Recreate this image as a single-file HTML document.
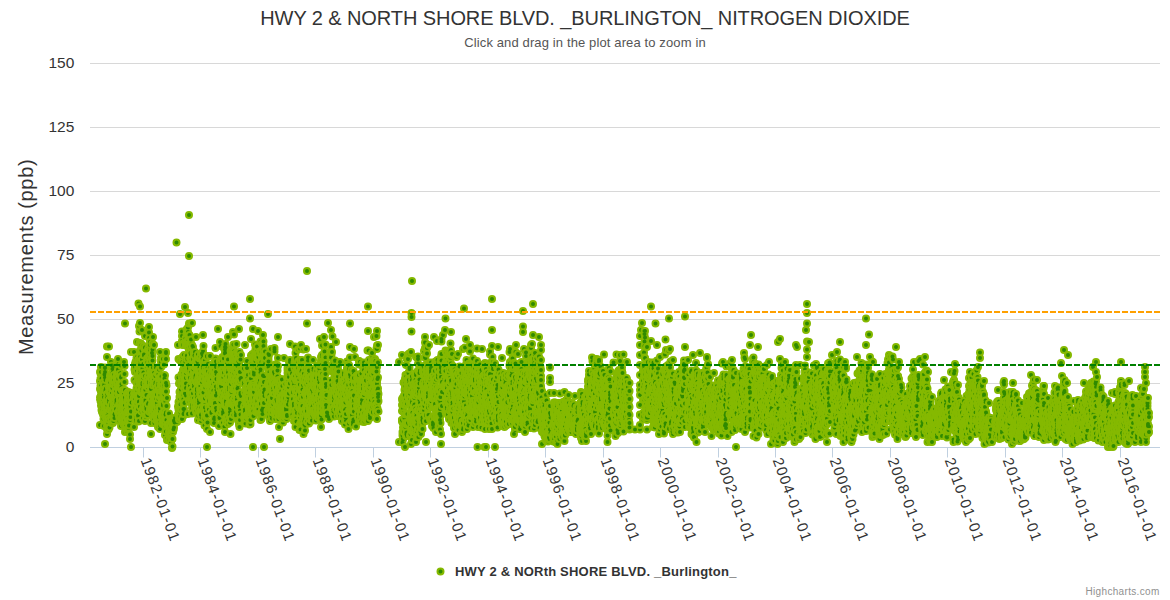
<!DOCTYPE html><html><head><meta charset="utf-8"><style>html,body{margin:0;padding:0;background:#fff;overflow:hidden}svg{display:block;font-family:"Liberation Sans",sans-serif}</style></head><body><svg width="1170" height="600" viewBox="0 0 1170 600"><rect width="1170" height="600" fill="#fff"/><text x="585" y="25" text-anchor="middle" font-size="20" fill="#333" letter-spacing="-0.085">HWY 2 &amp; NORTH SHORE BLVD. _BURLINGTON_ NITROGEN DIOXIDE</text><text x="585" y="47" text-anchor="middle" font-size="13" fill="#555" letter-spacing="0.125">Click and drag in the plot area to zoom in</text><path d="M90 63.5H1160" stroke="#D8D8D8" stroke-width="1"/><text x="74.3" y="68.1" text-anchor="end" font-size="15.5" fill="#333">150</text><path d="M90 127.5H1160" stroke="#D8D8D8" stroke-width="1"/><text x="74.3" y="132.1" text-anchor="end" font-size="15.5" fill="#333">125</text><path d="M90 191.5H1160" stroke="#D8D8D8" stroke-width="1"/><text x="74.3" y="196.1" text-anchor="end" font-size="15.5" fill="#333">100</text><path d="M90 255.5H1160" stroke="#D8D8D8" stroke-width="1"/><text x="74.3" y="260.1" text-anchor="end" font-size="15.5" fill="#333">75</text><path d="M90 319.5H1160" stroke="#D8D8D8" stroke-width="1"/><text x="74.3" y="324.1" text-anchor="end" font-size="15.5" fill="#333">50</text><path d="M90 383.5H1160" stroke="#D8D8D8" stroke-width="1"/><text x="74.3" y="388.1" text-anchor="end" font-size="15.5" fill="#333">25</text><text x="74.3" y="452.1" text-anchor="end" font-size="15.5" fill="#333">0</text><text transform="translate(33,256.9) rotate(-90)" text-anchor="middle" font-size="20" fill="#333" letter-spacing="0.65">Measurements (ppb)</text><path d="M90 447.5H1160" stroke="#C0D0E0" stroke-width="1"/><path d="M143.5 447.5V457.5" stroke="#C0D0E0" stroke-width="1"/><path d="M200.5 447.5V457.5" stroke="#C0D0E0" stroke-width="1"/><path d="M258.5 447.5V457.5" stroke="#C0D0E0" stroke-width="1"/><path d="M315.5 447.5V457.5" stroke="#C0D0E0" stroke-width="1"/><path d="M373.5 447.5V457.5" stroke="#C0D0E0" stroke-width="1"/><path d="M430.5 447.5V457.5" stroke="#C0D0E0" stroke-width="1"/><path d="M488.5 447.5V457.5" stroke="#C0D0E0" stroke-width="1"/><path d="M545.5 447.5V457.5" stroke="#C0D0E0" stroke-width="1"/><path d="M603.5 447.5V457.5" stroke="#C0D0E0" stroke-width="1"/><path d="M660.5 447.5V457.5" stroke="#C0D0E0" stroke-width="1"/><path d="M718.5 447.5V457.5" stroke="#C0D0E0" stroke-width="1"/><path d="M775.5 447.5V457.5" stroke="#C0D0E0" stroke-width="1"/><path d="M832.5 447.5V457.5" stroke="#C0D0E0" stroke-width="1"/><path d="M890.5 447.5V457.5" stroke="#C0D0E0" stroke-width="1"/><path d="M947.5 447.5V457.5" stroke="#C0D0E0" stroke-width="1"/><path d="M1005.5 447.5V457.5" stroke="#C0D0E0" stroke-width="1"/><path d="M1062.5 447.5V457.5" stroke="#C0D0E0" stroke-width="1"/><path d="M1120.5 447.5V457.5" stroke="#C0D0E0" stroke-width="1"/><g transform="scale(0.5)" fill="none" stroke-linecap="round"><path d="M200 795h0m0-51h0m0 106h0m0-52h0m0-20h0m0-16h0m1-18h0m0 3h0m0 10h0m0 45h0m0-30h0m1-6h0" stroke="#85B900" stroke-width="16"/><path d="M200 795h0m0-51h0m0 106h0m0-52h0m0-20h0m0-16h0m1-18h0m0 3h0m0 10h0m0 45h0m0-30h0m1-6h0" stroke="#2F8A00" stroke-width="8"/><path d="M202 744h0m0 26h0m0 41h0m0-77h0m0 60h0m0-4h0m0-6h0m1-7h0m0-20h0m0 63h0m0-11h0m0-11h0" stroke="#85B900" stroke-width="16"/><path d="M202 744h0m0 26h0m0 41h0m0-77h0m0 60h0m0-4h0m0-6h0m1-7h0m0-20h0m0 63h0m0-11h0m0-11h0" stroke="#2F8A00" stroke-width="8"/><path d="M204 824h0m0-12h0m0-12h0m0-19h0m0 11h0m0 10h0m0 5h0m1-2h0m0-20h0m0 5h0m0 32h0m0-2h0" stroke="#85B900" stroke-width="16"/><path d="M204 824h0m0-12h0m0-12h0m0-19h0m0 11h0m0 10h0m0 5h0m1-2h0m0-20h0m0 5h0m0 32h0m0-2h0" stroke="#2F8A00" stroke-width="8"/><path d="M206 802h0m0-37h0m0 23h0m0 41h0m0-49h0m0 23h0m0-22h0m1-17h0m0 25h0m0 49h0m0-62h0m0 19h0" stroke="#85B900" stroke-width="16"/><path d="M206 802h0m0-37h0m0 23h0m0 41h0m0-49h0m0 23h0m0-22h0m1-17h0m0 25h0m0 49h0m0-62h0m0 19h0" stroke="#2F8A00" stroke-width="8"/><path d="M208 811h0m0-4h0m0 16h0m0-52h0m0 81h0m0-68h0m0 4h0m0 6h0m1-26h0m0 26h0m0-52h0m0-3h0" stroke="#85B900" stroke-width="16"/><path d="M208 811h0m0-4h0m0 16h0m0-52h0m0 81h0m0-68h0m0 4h0m0 6h0m1-26h0m0 26h0m0-52h0m0-3h0" stroke="#2F8A00" stroke-width="8"/><path d="M209 749h0m1-5h0m0-8h0m0 152h0m0-153h0m0 79h0m0 15h0m0-1h0m0-73h0m1 22h0m0-20h0m0 3h0" stroke="#85B900" stroke-width="16"/><path d="M209 749h0m1-5h0m0-8h0m0 152h0m0-153h0m0 79h0m0 15h0m0-1h0m0-73h0m1 22h0m0-20h0m0 3h0" stroke="#2F8A00" stroke-width="8"/><path d="M211 782h0m0-2h0m1-3h0m0 31h0m0 6h0m0 10h0m0 13h0m0-12h0m0-10h0m1 3h0m0 6h0m0-15h0" stroke="#85B900" stroke-width="16"/><path d="M211 782h0m0-2h0m1-3h0m0 31h0m0 6h0m0 10h0m0 13h0m0-12h0m0-10h0m1 3h0m0 6h0m0-15h0" stroke="#2F8A00" stroke-width="8"/><path d="M213 811h0m0 27h0m1-50h0m0 22h0m0 18h0m0-32h0m0-82h0m0 154h0m0-175h0m0 133h0m0 26h0m0 6h0" stroke="#85B900" stroke-width="16"/><path d="M213 811h0m0 27h0m1-50h0m0 22h0m0 18h0m0-32h0m0-82h0m0 154h0m0-175h0m0 133h0m0 26h0m0 6h0" stroke="#2F8A00" stroke-width="8"/><path d="M215 860h0m0-14h0m0-29h0m0-6h0m0 20h0m1 5h0m0-20h0m0 37h0m0-11h0m0-9h0m0 15h0m0-25h0" stroke="#85B900" stroke-width="16"/><path d="M215 860h0m0-14h0m0-29h0m0-6h0m0 20h0m1 5h0m0-20h0m0 37h0m0-11h0m0-9h0m0 15h0m0-25h0" stroke="#2F8A00" stroke-width="8"/><path d="M217 836h0m0 10h0m0 6h0m0-9h0m0 16h0m1-18h0m0-22h0m0-35h0m0-9h0m0-82h0m0 107h0m0 5h0" stroke="#85B900" stroke-width="16"/><path d="M217 836h0m0 10h0m0 6h0m0-9h0m0 16h0m1-18h0m0-22h0m0-35h0m0-9h0m0-82h0m0 107h0m0 5h0" stroke="#2F8A00" stroke-width="8"/><path d="M218 762h0m1 17h0m0-19h0m0 23h0m0 57h0m0 15h0m1-15h0m0 0h0m0-70h0m0 8h0m0-14h0m0-11h0" stroke="#85B900" stroke-width="16"/><path d="M218 762h0m1 17h0m0-19h0m0 23h0m0 57h0m0 15h0m1-15h0m0 0h0m0-70h0m0 8h0m0-14h0m0-11h0" stroke="#2F8A00" stroke-width="8"/><path d="M220 764h0m1 19h0m0 6h0m0-2h0m0 28h0m0-37h0m1-45h0m0-9h0m0 31h0m0 81h0m0-112h0m0 95h0" stroke="#85B900" stroke-width="16"/><path d="M220 764h0m1 19h0m0 6h0m0-2h0m0 28h0m0-37h0m1-45h0m0-9h0m0 31h0m0 81h0m0-112h0m0 95h0" stroke="#2F8A00" stroke-width="8"/><path d="M222 794h0m0 17h0m1-3h0m0 14h0m0 0h0m0 17h0m0 7h0m1-37h0m0-49h0m0 17h0m0 10h0m0-10h0" stroke="#85B900" stroke-width="16"/><path d="M222 794h0m0 17h0m1-3h0m0 14h0m0 0h0m0 17h0m0 7h0m1-37h0m0-49h0m0 17h0m0 10h0m0-10h0" stroke="#2F8A00" stroke-width="8"/><path d="M224 754h0m0-23h0m1 25h0m0-18h0m0 8h0m0 13h0m0 17h0m1-17h0m0 36h0m0-59h0m0 6h0m0 104h0" stroke="#85B900" stroke-width="16"/><path d="M224 754h0m0-23h0m1 25h0m0-18h0m0 8h0m0 13h0m0 17h0m1-17h0m0 36h0m0-59h0m0 6h0m0 104h0" stroke="#2F8A00" stroke-width="8"/><path d="M226 768h0m0 53h0m0-27h0m1 7h0m0 9h0m0 21h0m0 11h0m0-8h0m1-25h0m0 22h0m0-79h0m0 1h0" stroke="#85B900" stroke-width="16"/><path d="M226 768h0m0 53h0m0-27h0m1 7h0m0 9h0m0 21h0m0 11h0m0-8h0m1-25h0m0 22h0m0-79h0m0 1h0" stroke="#2F8A00" stroke-width="8"/><path d="M228 750h0m0 2h0m0 8h0m1 76h0m0-7h0m0-34h0m0-31h0m0 40h0m1-19h0m0 39h0m0-53h0m0 13h0" stroke="#85B900" stroke-width="16"/><path d="M228 750h0m0 2h0m0 8h0m1 76h0m0-7h0m0-34h0m0-31h0m0 40h0m1-19h0m0 39h0m0-53h0m0 13h0" stroke="#2F8A00" stroke-width="8"/><path d="M230 810h0m0-14h0m0 20h0m1-31h0m0-11h0m0-7h0m0 17h0m0 28h0m1-25h0m0-33h0m0 22h0m0 33h0" stroke="#85B900" stroke-width="16"/><path d="M230 810h0m0-14h0m0 20h0m1-31h0m0-11h0m0-7h0m0 17h0m0 28h0m1-25h0m0-33h0m0 22h0m0 33h0" stroke="#2F8A00" stroke-width="8"/><path d="M232 783h0m0 35h0m0-29h0m1-33h0m0 5h0m0 45h0m0-2h0m0-4h0m1-1h0m0 3h0m0-24h0m0-32h0" stroke="#85B900" stroke-width="16"/><path d="M232 783h0m0 35h0m0-29h0m1-33h0m0 5h0m0 45h0m0-2h0m0-4h0m1-1h0m0 3h0m0-24h0m0-32h0" stroke="#2F8A00" stroke-width="8"/><path d="M234 765h0m0-12h0m0 5h0m1-14h0m0 10h0m0 15h0m0-6h0m0-8h0m1 5h0m0 3h0m0 62h0m0-54h0" stroke="#85B900" stroke-width="16"/><path d="M234 765h0m0-12h0m0 5h0m1-14h0m0 10h0m0 15h0m0-6h0m0-8h0m1 5h0m0 3h0m0 62h0m0-54h0" stroke="#2F8A00" stroke-width="8"/><path d="M236 718h0m0 59h0m0 10h0m0-48h0m1-11h0m0 30h0m0-13h0m0 12h0m0 2h0m1-11h0m0-5h0m0 7h0" stroke="#85B900" stroke-width="16"/><path d="M236 718h0m0 59h0m0 10h0m0-48h0m1-11h0m0 30h0m0-13h0m0 12h0m0 2h0m1-11h0m0-5h0m0 7h0" stroke="#2F8A00" stroke-width="8"/><path d="M238 809h0m0-25h0m0 49h0m0-65h0m1 7h0m0 47h0m0 20h0m0-26h0m0 1h0m1 2h0m0-22h0m0 3h0" stroke="#85B900" stroke-width="16"/><path d="M238 809h0m0-25h0m0 49h0m0-65h0m1 7h0m0 47h0m0 20h0m0-26h0m0 1h0m1 2h0m0-22h0m0 3h0" stroke="#2F8A00" stroke-width="8"/><path d="M240 798h0m0 10h0m0-34h0m0-27h0m1 24h0m0-2h0m0 0h0m0-22h0m0 51h0m1 39h0m0 0h0m0-16h0" stroke="#85B900" stroke-width="16"/><path d="M240 798h0m0 10h0m0-34h0m0-27h0m1 24h0m0-2h0m0 0h0m0-22h0m0 51h0m1 39h0m0 0h0m0-16h0" stroke="#2F8A00" stroke-width="8"/><path d="M242 834h0m0 18h0m0-39h0m0-82h0m0 24h0m1 22h0m0-9h0m0-16h0m0 27h0m0-5h0m1 27h0m0-24h0" stroke="#85B900" stroke-width="16"/><path d="M242 834h0m0 18h0m0-39h0m0-82h0m0 24h0m1 22h0m0-9h0m0-16h0m0 27h0m0-5h0m1 27h0m0-24h0" stroke="#2F8A00" stroke-width="8"/><path d="M244 829h0m0 13h0m0-9h0m0-17h0m0-5h0m1-29h0m0 44h0m0-22h0m0-4h0m0 43h0m1-17h0m0 3h0" stroke="#85B900" stroke-width="16"/><path d="M244 829h0m0 13h0m0-9h0m0-17h0m0-5h0m1-29h0m0 44h0m0-22h0m0-4h0m0 43h0m1-17h0m0 3h0" stroke="#2F8A00" stroke-width="8"/><path d="M246 815h0m0-8h0m0 6h0m0-1h0m0-32h0m1 32h0m0 18h0m0 19h0m0-39h0m0-5h0m1 16h0m0 21h0" stroke="#85B900" stroke-width="16"/><path d="M246 815h0m0-8h0m0 6h0m0-1h0m0-32h0m1 32h0m0 18h0m0 19h0m0-39h0m0-5h0m1 16h0m0 21h0" stroke="#2F8A00" stroke-width="8"/><path d="M248 809h0m0-8h0m0-77h0m0 63h0m0 50h0m0 2h0m1-23h0m0 1h0m0 29h0m0-114h0m0 16h0m0 16h0" stroke="#85B900" stroke-width="16"/><path d="M248 809h0m0-8h0m0-77h0m0 63h0m0 50h0m0 2h0m1-23h0m0 1h0m0 29h0m0-114h0m0 16h0m0 16h0" stroke="#2F8A00" stroke-width="8"/><path d="M249 818h0m0 0h0m1-17h0m0 10h0m0-10h0m0 26h0m0 37h0m0-217h0m0 133h0m0 15h0m0 31h0m1 14h0" stroke="#85B900" stroke-width="16"/><path d="M249 818h0m0 0h0m1-17h0m0 10h0m0-10h0m0 26h0m0 37h0m0-217h0m0 133h0m0 15h0m0 31h0m1 14h0" stroke="#2F8A00" stroke-width="8"/><path d="M251 820h0m0 20h0m0 10h0m0-10h0m1 3h0m0-5h0m0-1h0m0 0h0m0 11h0m0-23h0m0 30h0m1-15h0" stroke="#85B900" stroke-width="16"/><path d="M251 820h0m0 20h0m0 10h0m0-10h0m1 3h0m0-5h0m0-1h0m0 0h0m0 11h0m0-23h0m0 30h0m1-15h0" stroke="#2F8A00" stroke-width="8"/><path d="M253 855h0m0-3h0m0 4h0m0 2h0m1-8h0m0 12h0m0-5h0m0-22h0m0-8h0m0-40h0m0 16h0m1 43h0" stroke="#85B900" stroke-width="16"/><path d="M253 855h0m0-3h0m0 4h0m0 2h0m1-8h0m0 12h0m0-5h0m0-22h0m0-8h0m0-40h0m0 16h0m1 43h0" stroke="#2F8A00" stroke-width="8"/><path d="M255 858h0m0-36h0m0 13h0m0 8h0m1-31h0m0-28h0m0 9h0m0 35h0m0-6h0m0 21h0m0-49h0m1-8h0" stroke="#85B900" stroke-width="16"/><path d="M255 858h0m0-36h0m0 13h0m0 8h0m1-31h0m0-28h0m0 9h0m0 35h0m0-6h0m0 21h0m0-49h0m1-8h0" stroke="#2F8A00" stroke-width="8"/><path d="M257 787h0m0 5h0m0 16h0m0 16h0m0 16h0m0 16h0m0-51h0m0 13h0m1 8h0m0-6h0m0-27h0m0 15h0" stroke="#85B900" stroke-width="16"/><path d="M257 787h0m0 5h0m0 16h0m0 16h0m0 16h0m0 16h0m0-51h0m0 13h0m1 8h0m0-6h0m0-27h0m0 15h0" stroke="#2F8A00" stroke-width="8"/><path d="M258 822h0m0 29h0m1-66h0m0 40h0m0-27h0m1 10h0m0-7h0m0 68h0m0 9h0m0-38h0m0-40h0m0-6h0" stroke="#85B900" stroke-width="16"/><path d="M258 822h0m0 29h0m1-66h0m0 40h0m0-27h0m1 10h0m0-7h0m0 68h0m0 9h0m0-38h0m0-40h0m0-6h0" stroke="#2F8A00" stroke-width="8"/><path d="M261 834h0m0-17h0m0-5h0m0 0h0m1 10h0m0-36h0m0 8h0m0 1h0m0-91h0m0 190h0m0-94h0m0 1h0" stroke="#85B900" stroke-width="16"/><path d="M261 834h0m0-17h0m0-5h0m0 0h0m1 10h0m0-36h0m0 8h0m0 1h0m0-91h0m0 190h0m0-94h0m0 1h0" stroke="#2F8A00" stroke-width="8"/><path d="M262 823h0m1-18h0m4-9h0m1 7h0m0-99h0m0 150h0m0-67h0m1 5h0m0 21h0m0-53h0m0-21h0m1-8h0" stroke="#85B900" stroke-width="16"/><path d="M262 823h0m1-18h0m4-9h0m1 7h0m0-99h0m0 150h0m0-67h0m1 5h0m0 21h0m0-53h0m0-21h0m1-8h0" stroke="#2F8A00" stroke-width="8"/><path d="M270 734h0m0-7h0m0 78h0m0-8h0m0-7h0m0-46h0m1-20h0m0 7h0m0 71h0m0 14h0m0-13h0m1 5h0" stroke="#85B900" stroke-width="16"/><path d="M270 734h0m0-7h0m0 78h0m0-8h0m0-7h0m0-46h0m1-20h0m0 7h0m0 71h0m0 14h0m0-13h0m1 5h0" stroke="#2F8A00" stroke-width="8"/><path d="M272 790h0m0 42h0m0-4h0m0 12h0m0 2h0m0-17h0m1-48h0m0 29h0m0-40h0m0-44h0m0-6h0m1-2h0" stroke="#85B900" stroke-width="16"/><path d="M272 790h0m0 42h0m0-4h0m0 12h0m0 2h0m0-17h0m1-48h0m0 29h0m0-40h0m0-44h0m0-6h0m1-2h0" stroke="#2F8A00" stroke-width="8"/><path d="M274 742h0m0 22h0m0 2h0m0-82h0m0 141h0m0-32h0m0 30h0m1-6h0m0-15h0m0-20h0m0 43h0m0-37h0" stroke="#85B900" stroke-width="16"/><path d="M274 742h0m0 22h0m0 2h0m0-82h0m0 141h0m0-32h0m0 30h0m1-6h0m0-15h0m0-20h0m0 43h0m0-37h0" stroke="#2F8A00" stroke-width="8"/><path d="M276 723h0m0 4h0m0 64h0m0-58h0m0 22h0m0 63h0m0 13h0m1-1h0m0-223h0m0 236h0m0-9h0m0-17h0" stroke="#85B900" stroke-width="16"/><path d="M276 723h0m0 4h0m0 64h0m0-58h0m0 22h0m0 63h0m0 13h0m1-1h0m0-223h0m0 236h0m0-9h0m0-17h0" stroke="#2F8A00" stroke-width="8"/><path d="M277 719h0m1 36h0m0 48h0m0-27h0m0-12h0m0-112h0m0 190h0m0-50h0m0 13h0m0-28h0m1-32h0m0-9h0" stroke="#85B900" stroke-width="16"/><path d="M277 719h0m1 36h0m0 48h0m0-27h0m0-12h0m0-112h0m0 190h0m0-50h0m0 13h0m0-28h0m1-32h0m0-9h0" stroke="#2F8A00" stroke-width="8"/><path d="M279 663h0m0 23h0m0 72h0m1 55h0m0-112h0m0 13h0m0 5h0m0-73h0m0-33h0m0 91h0m0 62h0m0-38h0" stroke="#85B900" stroke-width="16"/><path d="M279 663h0m0 23h0m0 72h0m1 55h0m0-112h0m0 13h0m0 5h0m0-73h0m0-33h0m0 91h0m0 62h0m0-38h0" stroke="#2F8A00" stroke-width="8"/><path d="M281 742h0m0 5h0m0-44h0m0 20h0m0 4h0m1 36h0m0-27h0m0 43h0m0-8h0m0-9h0m0-3h0m0-72h0" stroke="#85B900" stroke-width="16"/><path d="M281 742h0m0 5h0m0-44h0m0 20h0m0 4h0m1 36h0m0-27h0m0 43h0m0-8h0m0-9h0m0-3h0m0-72h0" stroke="#2F8A00" stroke-width="8"/><path d="M283 781h0m0 42h0m0-38h0m0-95h0m0 11h0m1 62h0m0-103h0m0 125h0m0-51h0m0-15h0m0-15h0m0 33h0" stroke="#85B900" stroke-width="16"/><path d="M283 781h0m0 42h0m0-38h0m0-95h0m0 11h0m1 62h0m0-103h0m0 125h0m0-51h0m0-15h0m0-15h0m0 33h0" stroke="#2F8A00" stroke-width="8"/><path d="M285 766h0m0 3h0m0 14h0m0-46h0m0 41h0m1-23h0m0-6h0m0 55h0m0-3h0m0 15h0m0 21h0m0-31h0" stroke="#85B900" stroke-width="16"/><path d="M285 766h0m0 3h0m0 14h0m0-46h0m0 41h0m1-23h0m0-6h0m0 55h0m0-3h0m0 15h0m0 21h0m0-31h0" stroke="#2F8A00" stroke-width="8"/><path d="M287 808h0m0-80h0m0 92h0m0-75h0m0-53h0m1 4h0m0 91h0m0 9h0m0-87h0m0 40h0m0-21h0m0-17h0" stroke="#85B900" stroke-width="16"/><path d="M287 808h0m0-80h0m0 92h0m0-75h0m0-53h0m1 4h0m0 91h0m0 9h0m0-87h0m0 40h0m0-21h0m0-17h0" stroke="#2F8A00" stroke-width="8"/><path d="M289 817h0m0 2h0m0 2h0m0 2h0m0-36h0m1 17h0m0-26h0m0-106h0m0 23h0m0 147h0m0-61h0m0-29h0" stroke="#85B900" stroke-width="16"/><path d="M289 817h0m0 2h0m0 2h0m0 2h0m0-36h0m1 17h0m0-26h0m0-106h0m0 23h0m0 147h0m0-61h0m0-29h0" stroke="#2F8A00" stroke-width="8"/><path d="M290 806h0m1-39h0m0 13h0m0 8h0m0 12h0m0 17h0m1-47h0m0 14h0m0 48h0m0 2h0m0-257h0m0 240h0" stroke="#85B900" stroke-width="16"/><path d="M290 806h0m1-39h0m0 13h0m0 8h0m0 12h0m0 17h0m1-47h0m0 14h0m0 48h0m0 2h0m0-257h0m0 240h0" stroke="#2F8A00" stroke-width="8"/><path d="M292 812h0m0-1h0m1 7h0m0-3h0m0 1h0m0-5h0m0-21h0m1 31h0m0 8h0m0-57h0m0-47h0m0 38h0" stroke="#85B900" stroke-width="16"/><path d="M292 812h0m0-1h0m1 7h0m0-3h0m0 1h0m0-5h0m0-21h0m1 31h0m0 8h0m0-57h0m0-47h0m0 38h0" stroke="#2F8A00" stroke-width="8"/><path d="M294 717h0m0 9h0m1 3h0m0 26h0m0-20h0m0 95h0m0-1h0m1 0h0m0-74h0m0-56h0m0 26h0m0 50h0" stroke="#85B900" stroke-width="16"/><path d="M294 717h0m0 9h0m1 3h0m0 26h0m0-20h0m0 95h0m0-1h0m1 0h0m0-74h0m0-56h0m0 26h0m0 50h0" stroke="#2F8A00" stroke-width="8"/><path d="M296 769h0m0 39h0m1-112h0m0 55h0m0 55h0m0-92h0m0 28h0m1 8h0m0-21h0m0-53h0m0-11h0m0-11h0" stroke="#85B900" stroke-width="16"/><path d="M296 769h0m0 39h0m1-112h0m0 55h0m0 55h0m0-92h0m0 28h0m1 8h0m0-21h0m0-53h0m0-11h0m0-11h0" stroke="#2F8A00" stroke-width="8"/><path d="M298 702h0m0 64h0m0-2h0m1 59h0m0-53h0m0 54h0m0-109h0m0 17h0m1 34h0m0 29h0m0 23h0m0-62h0" stroke="#85B900" stroke-width="16"/><path d="M298 702h0m0 64h0m0-2h0m1 59h0m0-53h0m0 54h0m0-109h0m0 17h0m1 34h0m0 29h0m0 23h0m0-62h0" stroke="#2F8A00" stroke-width="8"/><path d="M300 690h0m0 12h0m0-18h0m1 26h0m0-12h0m0 10h0m0 15h0m0 21h0m1-22h0m0 73h0m0 73h0m0-117h0" stroke="#85B900" stroke-width="16"/><path d="M300 690h0m0 12h0m0-18h0m1 26h0m0-12h0m0 10h0m0 15h0m0 21h0m1-22h0m0 73h0m0 73h0m0-117h0" stroke="#2F8A00" stroke-width="8"/><path d="M302 748h0m0 98h0m0-68h0m0-6h0m0 50h0m1-24h0m0-33h0m0 46h0m0 2h0m0-54h0m1-19h0m0 21h0" stroke="#85B900" stroke-width="16"/><path d="M302 748h0m0 98h0m0-68h0m0-6h0m0 50h0m1-24h0m0-33h0m0 46h0m0 2h0m0-54h0m1-19h0m0 21h0" stroke="#2F8A00" stroke-width="8"/><path d="M304 816h0m0 9h0m0-16h0m0-103h0m0 40h0m1-34h0m0-25h0m0 12h0m0 22h0m0 18h0m1 95h0m0-22h0" stroke="#85B900" stroke-width="16"/><path d="M304 816h0m0 9h0m0-16h0m0-103h0m0 40h0m1-34h0m0-25h0m0 12h0m0 22h0m0 18h0m1 95h0m0-22h0" stroke="#2F8A00" stroke-width="8"/><path d="M306 761h0m0 51h0m0-138h0m0 130h0m0-33h0m0-36h0m1 12h0m0 69h0m0 6h0m0-28h0m0 25h0m1-8h0" stroke="#85B900" stroke-width="16"/><path d="M306 761h0m0 51h0m0-138h0m0 130h0m0-33h0m0-36h0m1 12h0m0 69h0m0 6h0m0-28h0m0 25h0m1-8h0" stroke="#2F8A00" stroke-width="8"/><path d="M308 746h0m0 42h0m0 18h0m0-116h0m0 147h0m0-16h0m0-61h0m1 37h0m0 49h0m0-30h0m0 23h0m0-11h0" stroke="#85B900" stroke-width="16"/><path d="M308 746h0m0 42h0m0 18h0m0-116h0m0 147h0m0-16h0m0-61h0m1 37h0m0 49h0m0-30h0m0 23h0m0-11h0" stroke="#2F8A00" stroke-width="8"/><path d="M310 831h0m0-14h0m0-47h0m0 46h0m0-26h0m0 7h0m0 17h0m1-62h0m0 41h0m0 15h0m0-17h0m0-26h0" stroke="#85B900" stroke-width="16"/><path d="M310 831h0m0-14h0m0-47h0m0 46h0m0-26h0m0 7h0m0 17h0m1-62h0m0 41h0m0 15h0m0-17h0m0-26h0" stroke="#2F8A00" stroke-width="8"/><path d="M312 789h0m0 18h0m0-13h0m0 8h0m0-3h0m0-64h0m0 66h0m1 30h0m0-56h0m0 66h0m0-14h0m0-26h0" stroke="#85B900" stroke-width="16"/><path d="M312 789h0m0 18h0m0-13h0m0 8h0m0-3h0m0-64h0m0 66h0m1 30h0m0-56h0m0 66h0m0-14h0m0-26h0" stroke="#2F8A00" stroke-width="8"/><path d="M314 815h0m0 25h0m0-34h0m0 31h0m0-7h0m0-41h0m0 23h0m1-22h0m0 18h0m0 18h0m0-14h0m0-65h0" stroke="#85B900" stroke-width="16"/><path d="M314 815h0m0 25h0m0-34h0m0 31h0m0-7h0m0-41h0m0 23h0m1-22h0m0 18h0m0 18h0m0-14h0m0-65h0" stroke="#2F8A00" stroke-width="8"/><path d="M316 831h0m0 18h0m0 5h0m0-10h0m0 0h0m0-1h0m0-72h0m1-5h0m0 13h0m0-31h0m0 20h0m0 30h0" stroke="#85B900" stroke-width="16"/><path d="M316 831h0m0 18h0m0 5h0m0-10h0m0 0h0m0-1h0m0-72h0m1-5h0m0 13h0m0-31h0m0 20h0m0 30h0" stroke="#2F8A00" stroke-width="8"/><path d="M318 781h0m0-42h0m0 75h0m0 20h0m0-9h0m0 6h0m0-74h0m1 22h0m0 6h0m0 59h0m0 0h0m0-15h0" stroke="#85B900" stroke-width="16"/><path d="M318 781h0m0-42h0m0 75h0m0 20h0m0-9h0m0 6h0m0-74h0m1 22h0m0 6h0m0 59h0m0 0h0m0-15h0" stroke="#2F8A00" stroke-width="8"/><path d="M320 847h0m0-2h0m0-28h0m0-24h0m0-89h0m0 154h0m0-7h0m0-27h0m0-32h0m1-7h0m0-27h0m0 12h0" stroke="#85B900" stroke-width="16"/><path d="M320 847h0m0-2h0m0-28h0m0-24h0m0-89h0m0 154h0m0-7h0m0-27h0m0-32h0m1-7h0m0-27h0m0 12h0" stroke="#2F8A00" stroke-width="8"/><path d="M321 783h0m0 7h0m1-55h0m0-16h0m0-3h0m0 36h0m0 18h0m0-46h0m0 31h0m1 47h0m0-11h0m0 3h0" stroke="#85B900" stroke-width="16"/><path d="M321 783h0m0 7h0m1-55h0m0-16h0m0-3h0m0 36h0m0 18h0m0-46h0m0 31h0m1 47h0m0-11h0m0 3h0" stroke="#2F8A00" stroke-width="8"/><path d="M323 831h0m0-78h0m1 17h0m0 37h0m0 40h0m0-16h0m0-67h0m0 19h0m0-24h0m1 5h0m0 37h0m0-31h0" stroke="#85B900" stroke-width="16"/><path d="M323 831h0m0-78h0m1 17h0m0 37h0m0 40h0m0-16h0m0-67h0m0 19h0m0-24h0m1 5h0m0 37h0m0-31h0" stroke="#2F8A00" stroke-width="8"/><path d="M325 826h0m0 9h0m1-1h0m0-9h0m0-31h0m0 14h0m0-90h0m0 93h0m0-28h0m0 0h0m1 66h0m0-20h0" stroke="#85B900" stroke-width="16"/><path d="M325 826h0m0 9h0m1-1h0m0-9h0m0-31h0m0 14h0m0-90h0m0 93h0m0-28h0m0 0h0m1 66h0m0-20h0" stroke="#2F8A00" stroke-width="8"/><path d="M327 842h0m0-14h0m0 3h0m1-2h0m0-60h0m0 12h0m0-12h0m0 20h0m0-60h0m0 31h0m0 37h0m1-24h0" stroke="#85B900" stroke-width="16"/><path d="M327 842h0m0-14h0m0 3h0m1-2h0m0-60h0m0 12h0m0-12h0m0 20h0m0-60h0m0 31h0m0 37h0m1-24h0" stroke="#2F8A00" stroke-width="8"/><path d="M329 750h0m0 39h0m0-32h0m0 65h0m1 29h0m0-26h0m0 26h0m0-57h0m0 76h0m0-31h0m0-88h0m0 82h0" stroke="#85B900" stroke-width="16"/><path d="M329 750h0m0 39h0m0-32h0m0 65h0m1 29h0m0-26h0m0 26h0m0-57h0m0 76h0m0-31h0m0-88h0m0 82h0" stroke="#2F8A00" stroke-width="8"/><path d="M330 844h0m1-15h0m0 9h0m0 14h0m0-49h0m0-21h0m1 43h0m0 27h0m0-18h0m0-5h0m0-125h0m0 2h0" stroke="#85B900" stroke-width="16"/><path d="M330 844h0m1-15h0m0 9h0m0 14h0m0-49h0m0-21h0m1 43h0m0 27h0m0-18h0m0-5h0m0-125h0m0 2h0" stroke="#2F8A00" stroke-width="8"/><path d="M332 766h0m0 97h0m0-80h0m0-65h0m1 53h0m0 41h0m0 28h0m1-44h0m0 53h0m0 31h0m0-2h0m2-38h0" stroke="#85B900" stroke-width="16"/><path d="M332 766h0m0 97h0m0-80h0m0-65h0m1 53h0m0 41h0m0 28h0m1-44h0m0 53h0m0 31h0m0-2h0m2-38h0" stroke="#2F8A00" stroke-width="8"/><path d="M337 848h0m1-21h0m0 23h0m0 1h0m0 12h0m0 1h0m0 16h0m1-18h0m0-15h0m0 16h0m0 4h0m1-33h0" stroke="#85B900" stroke-width="16"/><path d="M337 848h0m1-21h0m0 23h0m0 1h0m0 12h0m0 1h0m0 16h0m1-18h0m0-15h0m0 16h0m0 4h0m1-33h0" stroke="#2F8A00" stroke-width="8"/><path d="M340 845h0m0 4h0m1 18h0m0-15h0m1-15h0m0 28h0m0-6h0m0 8h0m0 17h0m0-7h0m0-6h0m1 9h0" stroke="#85B900" stroke-width="16"/><path d="M340 845h0m0 4h0m1 18h0m0-15h0m1-15h0m0 28h0m0-6h0m0 8h0m0 17h0m0-7h0m0-6h0m1 9h0" stroke="#2F8A00" stroke-width="8"/><path d="M343 859h0m0 8h0m0-23h0m0 23h0m1-18h0m0 7h0m0 5h0m0-21h0m0 56h0m0-58h0m0 11h0m0-5h0" stroke="#85B900" stroke-width="16"/><path d="M343 859h0m0 8h0m0-23h0m0 23h0m1-18h0m0 7h0m0 5h0m0-21h0m0 56h0m0-58h0m0 11h0m0-5h0" stroke="#2F8A00" stroke-width="8"/><path d="M345 841h0m0 22h0m0 15h0m0 15h0m1-42h0m0-1h0m0-13h0m0 27h0m1-13h0m0 8h0m0-1h0m0-11h0" stroke="#85B900" stroke-width="16"/><path d="M345 841h0m0 22h0m0 15h0m0 15h0m1-42h0m0-1h0m0-13h0m0 27h0m1-13h0m0 8h0m0-1h0m0-11h0" stroke="#2F8A00" stroke-width="8"/><path d="M347 859h0m1-4h0m0-13h0m0-1h0m1 1h0m0 3h0m1-9h0m2-1h0m1-350h0m1 359h0m2-154h0m0 123h0" stroke="#85B900" stroke-width="16"/><path d="M347 859h0m1-4h0m0-13h0m0-1h0m1 1h0m0 3h0m1-9h0m2-1h0m1-350h0m1 359h0m2-154h0m0 123h0" stroke="#2F8A00" stroke-width="8"/><path d="M356 829h0m0 0h0m1-10h0m0-64h0m0 49h0m0 0h0m0-86h0m1 86h0m0 20h0m0 10h0m0 5h0m0-16h0" stroke="#85B900" stroke-width="16"/><path d="M356 829h0m0 0h0m1-10h0m0-64h0m0 49h0m0 0h0m0-86h0m1 86h0m0 20h0m0 10h0m0 5h0m0-16h0" stroke="#2F8A00" stroke-width="8"/><path d="M358 813h0m0-46h0m1 42h0m0-25h0m0 47h0m0-37h0m0 17h0m1 16h0m0-9h0m0-27h0m0-70h0m0-93h0" stroke="#85B900" stroke-width="16"/><path d="M358 813h0m0-46h0m1 42h0m0-25h0m0 47h0m0-37h0m0 17h0m1 16h0m0-9h0m0-27h0m0-70h0m0-93h0" stroke="#2F8A00" stroke-width="8"/><path d="M360 797h0m0 21h0m0 17h0m1-26h0m0 23h0m0-7h0m0 0h0m0-5h0m1-32h0m0-22h0m0 42h0m0-26h0" stroke="#85B900" stroke-width="16"/><path d="M360 797h0m0 21h0m0 17h0m1-26h0m0 23h0m0-7h0m0 0h0m0-5h0m1-32h0m0-22h0m0 42h0m0-26h0" stroke="#2F8A00" stroke-width="8"/><path d="M362 779h0m0-1h0m0 12h0m1 29h0m0-46h0m0 12h0m0-36h0m0 3h0m1-31h0m0-49h0m0 10h0m0-19h0" stroke="#85B900" stroke-width="16"/><path d="M362 779h0m0-1h0m0 12h0m1 29h0m0-46h0m0 12h0m0-36h0m0 3h0m1-31h0m0-49h0m0 10h0m0-19h0" stroke="#2F8A00" stroke-width="8"/><path d="M364 838h0m0-78h0m0-71h0m0-1h0m1 36h0m0-10h0m0 81h0m0-23h0m0-84h0m1 77h0m0-25h0m0 93h0" stroke="#85B900" stroke-width="16"/><path d="M364 838h0m0-78h0m0-71h0m0-1h0m1 36h0m0-10h0m0 81h0m0-23h0m0-84h0m1 77h0m0-25h0m0 93h0" stroke="#2F8A00" stroke-width="8"/><path d="M366 789h0m0-42h0m0 2h0m0-59h0m1 57h0m0 60h0m0 21h0m0-10h0m0-20h0m1 20h0m0 8h0m0-23h0" stroke="#85B900" stroke-width="16"/><path d="M366 789h0m0-42h0m0 2h0m0-59h0m1 57h0m0 60h0m0 21h0m0-10h0m0-20h0m1 20h0m0 8h0m0-23h0" stroke="#2F8A00" stroke-width="8"/><path d="M368 760h0m0-50h0m0 25h0m0 0h0m1 44h0m0 27h0m0-78h0m0 31h0m0 12h0m1-31h0m0 9h0m0 56h0" stroke="#85B900" stroke-width="16"/><path d="M368 760h0m0-50h0m0 25h0m0 0h0m1 44h0m0 27h0m0-78h0m0 31h0m0 12h0m1-31h0m0 9h0m0 56h0" stroke="#2F8A00" stroke-width="8"/><path d="M370 787h0m0-173h0m0 155h0m0-29h0m0 18h0m1-34h0m0 35h0m0-69h0m0-13h0m0 41h0m1 73h0m0-47h0" stroke="#85B900" stroke-width="16"/><path d="M370 787h0m0-173h0m0 155h0m0-29h0m0 18h0m1-34h0m0 35h0m0-69h0m0-13h0m0 41h0m1 73h0m0-47h0" stroke="#2F8A00" stroke-width="8"/><path d="M372 745h0m0 31h0m0-30h0m0 10h0m0 11h0m1-78h0m0-30h0m0 25h0m0-16h0m0 20h0m1 25h0m0-27h0" stroke="#85B900" stroke-width="16"/><path d="M372 745h0m0 31h0m0-30h0m0 10h0m0 11h0m1-78h0m0-30h0m0 25h0m0-16h0m0 20h0m1 25h0m0-27h0" stroke="#2F8A00" stroke-width="8"/><path d="M374 668h0m0-3h0m0 75h0m0-80h0m0 51h0m1 6h0m0-27h0m0 29h0m0-1h0m0-36h0m1 10h0m0 18h0" stroke="#85B900" stroke-width="16"/><path d="M374 668h0m0-3h0m0 75h0m0-80h0m0 51h0m1 6h0m0-27h0m0 29h0m0-1h0m0-36h0m1 10h0m0 18h0" stroke="#2F8A00" stroke-width="8"/><path d="M376 739h0m0 1h0m0-114h0m0 202h0m0-97h0m0-76h0m0 9h0m1 33h0m0 41h0m0-43h0m0-13h0m0-13h0" stroke="#85B900" stroke-width="16"/><path d="M376 739h0m0 1h0m0-114h0m0 202h0m0-97h0m0-76h0m0 9h0m1 33h0m0 41h0m0-43h0m0-13h0m0-13h0" stroke="#2F8A00" stroke-width="8"/><path d="M378 647h0m0-217h0m0 82h0m0 176h0m0 56h0m0-7h0m0 17h0m0 48h0m0-72h0m1 3h0m0-2h0m0 49h0" stroke="#85B900" stroke-width="16"/><path d="M378 647h0m0-217h0m0 82h0m0 176h0m0 56h0m0-7h0m0 17h0m0 48h0m0-72h0m1 3h0m0-2h0m0 49h0" stroke="#2F8A00" stroke-width="8"/><path d="M379 701h0m0-31h0m1 30h0m0-11h0m0 28h0m0 39h0m0 16h0m0 25h0m0-10h0m1-15h0m0-79h0m0 60h0" stroke="#85B900" stroke-width="16"/><path d="M379 701h0m0-31h0m1 30h0m0-11h0m0 28h0m0 39h0m0 16h0m0 25h0m0-10h0m1-15h0m0-79h0m0 60h0" stroke="#2F8A00" stroke-width="8"/><path d="M381 693h0m0 13h0m1 74h0m0-85h0m0 50h0m0-35h0m0 9h0m0-40h0m0-32h0m1 41h0m0 107h0m0 10h0" stroke="#85B900" stroke-width="16"/><path d="M381 693h0m0 13h0m1 74h0m0-85h0m0 50h0m0-35h0m0 9h0m0-40h0m0-32h0m1 41h0m0 107h0m0 10h0" stroke="#2F8A00" stroke-width="8"/><path d="M383 789h0m0-9h0m1 36h0m0 11h0m0-31h0m0-61h0m0-89h0m0 164h0m0-31h0m0 15h0m1 20h0m0-49h0" stroke="#85B900" stroke-width="16"/><path d="M383 789h0m0-9h0m1 36h0m0 11h0m0-31h0m0-61h0m0-89h0m0 164h0m0-31h0m0 15h0m1 20h0m0-49h0" stroke="#2F8A00" stroke-width="8"/><path d="M385 735h0m0-43h0m0 67h0m1-10h0m0 38h0m0-71h0m0 45h0m0-40h0m0 4h0m0-31h0m1 11h0m0 45h0" stroke="#85B900" stroke-width="16"/><path d="M385 735h0m0-43h0m0 67h0m1-10h0m0 38h0m0-71h0m0 45h0m0-40h0m0 4h0m0-31h0m1 11h0m0 45h0" stroke="#2F8A00" stroke-width="8"/><path d="M387 739h0m0-6h0m0 30h0m1-16h0m0 25h0m0-3h0m0 28h0m0-31h0m0 3h0m0 4h0m1 42h0m0-5h0" stroke="#85B900" stroke-width="16"/><path d="M387 739h0m0-6h0m0 30h0m1-16h0m0 25h0m0-3h0m0 28h0m0-31h0m0 3h0m0 4h0m1 42h0m0-5h0" stroke="#2F8A00" stroke-width="8"/><path d="M389 750h0m0-39h0m0 16h0m1-2h0m0-14h0m0 1h0m0 48h0m0-56h0m0 27h0m0 3h0m1 69h0m0-79h0" stroke="#85B900" stroke-width="16"/><path d="M389 750h0m0-39h0m0 16h0m1-2h0m0-14h0m0 1h0m0 48h0m0-56h0m0 27h0m0 3h0m1 69h0m0-79h0" stroke="#2F8A00" stroke-width="8"/><path d="M391 756h0m0-4h0m0 10h0m1 20h0m0 42h0m0-5h0m0-3h0m0-142h0m0 75h0m0 33h0m0-56h0m1 10h0" stroke="#85B900" stroke-width="16"/><path d="M391 756h0m0-4h0m0 10h0m1 20h0m0 42h0m0-5h0m0-3h0m0-142h0m0 75h0m0 33h0m0-56h0m1 10h0" stroke="#2F8A00" stroke-width="8"/><path d="M393 765h0m0 48h0m0 8h0m0-9h0m1 6h0m0-22h0m0-8h0m0-10h0m0 25h0m0-22h0m0-45h0m1-23h0" stroke="#85B900" stroke-width="16"/><path d="M393 765h0m0 48h0m0 8h0m0-9h0m1 6h0m0-22h0m0-8h0m0-10h0m0 25h0m0-22h0m0-45h0m1-23h0" stroke="#2F8A00" stroke-width="8"/><path d="M395 814h0m0-91h0m0 13h0m0 4h0m1 3h0m0-24h0m0 38h0m0 9h0m0 74h0m0-111h0m0 1h0m0-21h0" stroke="#85B900" stroke-width="16"/><path d="M395 814h0m0-91h0m0 13h0m0 4h0m1 3h0m0-24h0m0 38h0m0 9h0m0 74h0m0-111h0m0 1h0m0-21h0" stroke="#2F8A00" stroke-width="8"/><path d="M397 739h0m0 80h0m0 12h0m0 1h0m0-14h0m1-15h0m0 4h0m0 21h0m0-12h0m0-16h0m0-62h0m0 13h0" stroke="#85B900" stroke-width="16"/><path d="M397 739h0m0 80h0m0 12h0m0 1h0m0-14h0m1-15h0m0 4h0m0 21h0m0-12h0m0-16h0m0-62h0m0 13h0" stroke="#2F8A00" stroke-width="8"/><path d="M399 765h0m0-26h0m0-22h0m0 18h0m0 27h0m1-26h0m0 44h0m0-18h0m0 16h0m0 44h0m0-34h0m0-9h0" stroke="#85B900" stroke-width="16"/><path d="M399 765h0m0-26h0m0-22h0m0 18h0m0 27h0m1-26h0m0 44h0m0-18h0m0 16h0m0 44h0m0-34h0m0-9h0" stroke="#2F8A00" stroke-width="8"/><path d="M401 762h0m0-12h0m0 22h0m0-58h0m0 29h0m1-34h0m0 1h0m0 47h0m0-50h0m0 135h0m0-66h0m0 50h0" stroke="#85B900" stroke-width="16"/><path d="M401 762h0m0-12h0m0 22h0m0-58h0m0 29h0m1-34h0m0 1h0m0 47h0m0-50h0m0 135h0m0-66h0m0 50h0" stroke="#2F8A00" stroke-width="8"/><path d="M402 830h0m1-2h0m0-13h0m0-23h0m0 43h0m0-46h0m1-9h0m0 17h0m0-33h0m0-45h0m0 28h0m0 10h0" stroke="#85B900" stroke-width="16"/><path d="M402 830h0m1-2h0m0-13h0m0-23h0m0 43h0m0-46h0m1-9h0m0 17h0m0-33h0m0-45h0m0 28h0m0 10h0" stroke="#2F8A00" stroke-width="8"/><path d="M404 707h0m1 3h0m0-2h0m0 9h0m0 38h0m0 41h0m1-64h0m0 12h0m0-15h0m0-27h0m0-32h0m0 70h0" stroke="#85B900" stroke-width="16"/><path d="M404 707h0m1 3h0m0-2h0m0 9h0m0 38h0m0 41h0m1-64h0m0 12h0m0-15h0m0-27h0m0-32h0m0 70h0" stroke="#2F8A00" stroke-width="8"/><path d="M406 733h0m0 4h0m1-45h0m0 38h0m0 17h0m0 38h0m0-27h0m1 63h0m0-6h0m0-34h0m0 15h0m0 15h0" stroke="#85B900" stroke-width="16"/><path d="M406 733h0m0 4h0m1-45h0m0 38h0m0 17h0m0 38h0m0-27h0m1 63h0m0-6h0m0-34h0m0 15h0m0 15h0" stroke="#2F8A00" stroke-width="8"/><path d="M408 774h0m0 42h0m1 2h0m0 8h0m0 9h0m0 16h0m0-13h0m1-28h0m0 4h0m0-17h0m0-76h0m0 89h0" stroke="#85B900" stroke-width="16"/><path d="M408 774h0m0 42h0m1 2h0m0 8h0m0 9h0m0 16h0m0-13h0m1-28h0m0 4h0m0-17h0m0-76h0m0 89h0" stroke="#2F8A00" stroke-width="8"/><path d="M410 815h0m0-73h0m1-5h0m0 25h0m0-4h0m0-4h0m0 22h0m1 40h0m0 17h0m0-9h0m0-1h0m0-71h0" stroke="#85B900" stroke-width="16"/><path d="M410 815h0m0-73h0m1-5h0m0 25h0m0-4h0m0-4h0m0 22h0m1 40h0m0 17h0m0-9h0m0-1h0m0-71h0" stroke="#2F8A00" stroke-width="8"/><path d="M412 729h0m0 15h0m1-1h0m0 20h0m0-17h0m0-3h0m0 11h0m1-41h0m0-1h0m0 38h0m0 14h0m0 94h0" stroke="#85B900" stroke-width="16"/><path d="M412 729h0m0 15h0m1-1h0m0 20h0m0-17h0m0-3h0m0 11h0m1-41h0m0-1h0m0 38h0m0 14h0m0 94h0" stroke="#2F8A00" stroke-width="8"/><path d="M414 894h0m0-150h0m0 22h0m0 65h0m1 14h0m0-53h0m0-22h0m0-34h0m0 4h0m1-12h0m0 6h0m0 23h0" stroke="#85B900" stroke-width="16"/><path d="M414 894h0m0-150h0m0 22h0m0 65h0m1 14h0m0-53h0m0-22h0m0-34h0m0 4h0m1-12h0m0 6h0m0 23h0" stroke="#2F8A00" stroke-width="8"/><path d="M416 761h0m0 2h0m0-20h0m0 38h0m1-5h0m0-27h0m0 14h0m0 50h0m0-50h0m1 26h0m0-32h0m0 41h0" stroke="#85B900" stroke-width="16"/><path d="M416 761h0m0 2h0m0-20h0m0 38h0m1-5h0m0-27h0m0 14h0m0 50h0m0-50h0m1 26h0m0-32h0m0 41h0" stroke="#2F8A00" stroke-width="8"/><path d="M418 819h0m0-17h0m0-32h0m0-18h0m1 0h0m0 33h0m0 16h0m0-1h0m0-17h0m1 3h0m0 23h0m0-56h0" stroke="#85B900" stroke-width="16"/><path d="M418 819h0m0-17h0m0-32h0m0-18h0m1 0h0m0 33h0m0 16h0m0-1h0m0-17h0m1 3h0m0 23h0m0-56h0" stroke="#2F8A00" stroke-width="8"/><path d="M420 759h0m0-47h0m0 152h0m0-94h0m0-12h0m0 2h0m1 6h0m0-11h0m0-9h0m0-12h0m0 1h0m1 19h0" stroke="#85B900" stroke-width="16"/><path d="M420 759h0m0-47h0m0 152h0m0-94h0m0-12h0m0 2h0m1 6h0m0-11h0m0-9h0m0-12h0m0 1h0m1 19h0" stroke="#2F8A00" stroke-width="8"/><path d="M422 786h0m0-2h0m0-8h0m0-17h0m0 14h0m0-6h0m1 44h0m0-9h0m0 24h0m0-2h0m0-15h0m1-2h0" stroke="#85B900" stroke-width="16"/><path d="M422 786h0m0-2h0m0-8h0m0-17h0m0 14h0m0-6h0m1 44h0m0-9h0m0 24h0m0-2h0m0-15h0m1-2h0" stroke="#2F8A00" stroke-width="8"/><path d="M424 770h0m0 28h0m0-13h0m0-26h0m0 10h0m0 36h0m1-10h0m0-64h0m0 6h0m0 10h0m0 25h0m1-23h0" stroke="#85B900" stroke-width="16"/><path d="M424 770h0m0 28h0m0-13h0m0-26h0m0 10h0m0 36h0m1-10h0m0-64h0m0 6h0m0 10h0m0 25h0m1-23h0" stroke="#2F8A00" stroke-width="8"/><path d="M426 767h0m0 29h0m0 9h0m0-65h0m0-3h0m0-3h0m1 1h0m0 7h0m0 50h0m0-11h0m0-39h0m1-16h0" stroke="#85B900" stroke-width="16"/><path d="M426 767h0m0 29h0m0 9h0m0-65h0m0-3h0m0-3h0m1 1h0m0 7h0m0 50h0m0-11h0m0-39h0m1-16h0" stroke="#2F8A00" stroke-width="8"/><path d="M428 753h0m0-19h0m0 6h0m0 63h0m0 35h0m0 8h0m1-54h0m0 46h0m0-20h0m0 17h0m0-18h0m1 19h0" stroke="#85B900" stroke-width="16"/><path d="M428 753h0m0-19h0m0 6h0m0 63h0m0 35h0m0 8h0m1-54h0m0 46h0m0-20h0m0 17h0m0-18h0m1 19h0" stroke="#2F8A00" stroke-width="8"/><path d="M430 820h0m0-12h0m0-17h0m0-39h0m0 12h0m0 42h0m1-56h0m0 16h0m0-33h0m0-16h0m0-21h0m1 90h0" stroke="#85B900" stroke-width="16"/><path d="M430 820h0m0-12h0m0-17h0m0-39h0m0 12h0m0 42h0m1-56h0m0 16h0m0-33h0m0-16h0m0-21h0m1 90h0" stroke="#2F8A00" stroke-width="8"/><path d="M432 791h0m0-18h0m0 43h0m0-93h0m0 21h0m0-10h0m1 46h0m0-54h0m0 22h0m0 10h0m0 64h0m1-37h0" stroke="#85B900" stroke-width="16"/><path d="M432 791h0m0-18h0m0 43h0m0-93h0m0 21h0m0-10h0m1 46h0m0-54h0m0 22h0m0 10h0m0 64h0m1-37h0" stroke="#2F8A00" stroke-width="8"/><path d="M436 658h0m2 194h0m0-23h0m1 2h0m0 5h0m0-66h0m0 3h0m0 4h0m1-4h0m0 28h0m0-49h0m0-31h0" stroke="#85B900" stroke-width="16"/><path d="M436 658h0m2 194h0m0-23h0m1 2h0m0 5h0m0-66h0m0 3h0m0 4h0m1-4h0m0 28h0m0-49h0m0-31h0" stroke="#2F8A00" stroke-width="8"/><path d="M440 684h0m0 39h0m0 36h0m0-23h0m1-44h0m0 65h0m0 60h0m0 8h0m0-22h0m1-17h0m0-50h0m0-14h0" stroke="#85B900" stroke-width="16"/><path d="M440 684h0m0 39h0m0 36h0m0-23h0m1-44h0m0 65h0m0 60h0m0 8h0m0-22h0m1-17h0m0-50h0m0-14h0" stroke="#2F8A00" stroke-width="8"/><path d="M442 772h0m0-14h0m0 58h0m0-20h0m1-79h0m0 23h0m0 79h0m0-2h0m0-42h0m1-26h0m0 39h0m0-36h0" stroke="#85B900" stroke-width="16"/><path d="M442 772h0m0-14h0m0 58h0m0-20h0m1-79h0m0 23h0m0 79h0m0-2h0m0-42h0m1-26h0m0 39h0m0-36h0" stroke="#2F8A00" stroke-width="8"/><path d="M444 722h0m0 25h0m0 16h0m0-22h0m1-17h0m0 33h0m0-43h0m0 3h0m0 4h0m1 94h0m0-57h0m0 39h0" stroke="#85B900" stroke-width="16"/><path d="M444 722h0m0 25h0m0 16h0m0-22h0m1-17h0m0 33h0m0-43h0m0 3h0m0 4h0m1 94h0m0-57h0m0 39h0" stroke="#2F8A00" stroke-width="8"/><path d="M446 783h0m0 45h0m0 18h0m0-22h0m1-7h0m0-53h0m0-9h0m0 45h0m0-61h0m1-11h0m0 20h0m0 0h0" stroke="#85B900" stroke-width="16"/><path d="M446 783h0m0 45h0m0 18h0m0-22h0m1-7h0m0-53h0m0-9h0m0 45h0m0-61h0m1-11h0m0 20h0m0 0h0" stroke="#2F8A00" stroke-width="8"/><path d="M448 745h0m0-48h0m0 20h0m0 14h0m1 16h0m0 17h0m0 45h0m0 44h0m0-56h0m1-49h0m0 37h0m0-72h0" stroke="#85B900" stroke-width="16"/><path d="M448 745h0m0-48h0m0 20h0m0 14h0m1 16h0m0 17h0m0 45h0m0 44h0m0-56h0m1-49h0m0 37h0m0-72h0" stroke="#2F8A00" stroke-width="8"/><path d="M450 705h0m0 159h0m0-157h0m0-8h0m0-5h0m1-6h0m0 7h0m0 35h0m0 81h0m0-82h0m1 36h0m0 28h0" stroke="#85B900" stroke-width="16"/><path d="M450 705h0m0 159h0m0-157h0m0-8h0m0-5h0m1-6h0m0 7h0m0 35h0m0 81h0m0-82h0m1 36h0m0 28h0" stroke="#2F8A00" stroke-width="8"/><path d="M452 804h0m0 39h0m0-8h0m0 9h0m0-42h0m1-65h0m0 74h0m0-2h0m0-68h0m0 11h0m1 46h0m0-44h0" stroke="#85B900" stroke-width="16"/><path d="M452 804h0m0 39h0m0-8h0m0 9h0m0-42h0m1-65h0m0 74h0m0-2h0m0-68h0m0 11h0m1 46h0m0-44h0" stroke="#2F8A00" stroke-width="8"/><path d="M454 780h0m0-55h0m0 42h0m0 16h0m0-10h0m1-12h0m0-1h0m0 58h0m0 16h0m0-98h0m1-20h0m0 12h0" stroke="#85B900" stroke-width="16"/><path d="M454 780h0m0-55h0m0 42h0m0 16h0m0-10h0m1-12h0m0-1h0m0 58h0m0 16h0m0-98h0m1-20h0m0 12h0" stroke="#2F8A00" stroke-width="8"/><path d="M456 745h0m0-26h0m0-45h0m0 174h0m0-76h0m0 70h0m0-49h0m1-53h0m0 19h0m0 54h0m0 13h0m0-12h0" stroke="#85B900" stroke-width="16"/><path d="M456 745h0m0-26h0m0-45h0m0 174h0m0-76h0m0 70h0m0-49h0m1-53h0m0 19h0m0 54h0m0 13h0m0-12h0" stroke="#2F8A00" stroke-width="8"/><path d="M458 820h0m0-13h0m0-12h0m0-18h0m0-23h0m0 28h0m0-8h0m1 17h0m0-25h0m0 67h0m0-12h0m0-13h0" stroke="#85B900" stroke-width="16"/><path d="M458 820h0m0-13h0m0-12h0m0-18h0m0-23h0m0 28h0m0-8h0m1 17h0m0-25h0m0 67h0m0-12h0m0-13h0" stroke="#2F8A00" stroke-width="8"/><path d="M460 845h0m0-14h0m0-7h0m0-7h0m0-86h0m0 65h0m0-66h0m1 76h0m0 20h0m0-30h0m0-59h0m0 51h0" stroke="#85B900" stroke-width="16"/><path d="M460 845h0m0-14h0m0-7h0m0-7h0m0-86h0m0 65h0m0-66h0m1 76h0m0 20h0m0-30h0m0-59h0m0 51h0" stroke="#2F8A00" stroke-width="8"/><path d="M461 868h0m1-100h0m0 70h0m0-35h0m0-1h0m0-9h0m0-58h0m0-30h0m1 49h0m0 30h0m0-7h0m0-30h0" stroke="#85B900" stroke-width="16"/><path d="M461 868h0m1-100h0m0 70h0m0-35h0m0-1h0m0-9h0m0-58h0m0-30h0m1 49h0m0 30h0m0-7h0m0-30h0" stroke="#2F8A00" stroke-width="8"/><path d="M463 796h0m1-52h0m0 57h0m0 7h0m0-60h0m0-12h0m0 4h0m0-9h0m1 30h0m0-35h0m0-13h0m0-10h0" stroke="#85B900" stroke-width="16"/><path d="M463 796h0m1-52h0m0 57h0m0 7h0m0-60h0m0-12h0m0 4h0m0-9h0m1 30h0m0-35h0m0-13h0m0-10h0" stroke="#2F8A00" stroke-width="8"/><path d="M465 702h0m1 36h0m0 41h0m0-85h0m0 30h0m0-60h0m0 40h0m0 15h0m0 34h0m1 77h0m0-30h0m0 9h0" stroke="#85B900" stroke-width="16"/><path d="M465 702h0m1 36h0m0 41h0m0-85h0m0 30h0m0-60h0m0 40h0m0 15h0m0 34h0m1 77h0m0-30h0m0 9h0" stroke="#2F8A00" stroke-width="8"/><path d="M467 756h0m0-67h0m1-20h0m0 50h0m0-16h0m0 7h0m0-97h0m0 164h0m0 34h0m0-46h0m1-24h0m0-33h0" stroke="#85B900" stroke-width="16"/><path d="M467 756h0m0-67h0m1-20h0m0 50h0m0-16h0m0 7h0m0-97h0m0 164h0m0 34h0m0-46h0m1-24h0m0-33h0" stroke="#2F8A00" stroke-width="8"/><path d="M469 796h0m0-63h0m0 14h0m1 12h0m0 1h0m0 54h0m0-90h0m0-16h0m0 29h0m0 4h0m1 57h0m0-82h0" stroke="#85B900" stroke-width="16"/><path d="M469 796h0m0-63h0m0 14h0m1 12h0m0 1h0m0 54h0m0-90h0m0-16h0m0 29h0m0 4h0m1 57h0m0-82h0" stroke="#2F8A00" stroke-width="8"/><path d="M471 777h0m0-48h0m0 2h0m1 100h0m0-2h0m0-87h0m0 50h0m0-33h0m0 56h0m0 9h0m1-11h0m0-47h0" stroke="#85B900" stroke-width="16"/><path d="M471 777h0m0-48h0m0 2h0m1 100h0m0-2h0m0-87h0m0 50h0m0-33h0m0 56h0m0 9h0m1-11h0m0-47h0" stroke="#2F8A00" stroke-width="8"/><path d="M473 767h0m0-79h0m0 26h0m1 85h0m0-36h0m0-43h0m0 27h0m0 45h0m0-8h0m0-79h0m1 6h0m0 23h0" stroke="#85B900" stroke-width="16"/><path d="M473 767h0m0-79h0m0 26h0m1 85h0m0-36h0m0-43h0m0 27h0m0 45h0m0-8h0m0-79h0m1 6h0m0 23h0" stroke="#2F8A00" stroke-width="8"/><path d="M475 777h0m0-70h0m0 25h0m1 76h0m0 33h0m0-71h0m0-52h0m0 11h0m0-9h0m0 3h0m1 26h0m0 37h0" stroke="#85B900" stroke-width="16"/><path d="M475 777h0m0-70h0m0 25h0m1 76h0m0 33h0m0-71h0m0-52h0m0 11h0m0-9h0m0 3h0m1 26h0m0 37h0" stroke="#2F8A00" stroke-width="8"/><path d="M477 764h0m0-41h0m0-17h0m1 5h0m0-1h0m0 16h0m0 123h0m0-191h0m0 188h0m0-26h0m0-5h0m1-74h0" stroke="#85B900" stroke-width="16"/><path d="M477 764h0m0-41h0m0-17h0m1 5h0m0-1h0m0 16h0m0 123h0m0-191h0m0 188h0m0-26h0m0-5h0m1-74h0" stroke="#2F8A00" stroke-width="8"/><path d="M479 704h0m0 52h0m0 98h0m0-42h0m0-49h0m1 47h0m0-4h0m0-13h0m0 47h0m0-19h0m0-77h0m0 15h0" stroke="#85B900" stroke-width="16"/><path d="M479 704h0m0 52h0m0 98h0m0-42h0m0-49h0m1 47h0m0-4h0m0-13h0m0 47h0m0-19h0m0-77h0m0 15h0" stroke="#2F8A00" stroke-width="8"/><path d="M481 757h0m0 72h0m0-110h0m0 67h0m0 3h0m1-79h0m0 50h0m0-4h0m0 36h0m0-1h0m0 0h0m6-54h0" stroke="#85B900" stroke-width="16"/><path d="M481 757h0m0 72h0m0-110h0m0 67h0m0 3h0m1-79h0m0 50h0m0-4h0m0 36h0m0-1h0m0 0h0m6-54h0" stroke="#2F8A00" stroke-width="8"/><path d="M488 765h0m0 3h0m0 45h0m0 22h0m1 8h0m0-29h0m0-29h0m0 41h0m0-15h0m1-31h0m0-15h0m0 34h0" stroke="#85B900" stroke-width="16"/><path d="M488 765h0m0 3h0m0 45h0m0 22h0m1 8h0m0-29h0m0-29h0m0 41h0m0-15h0m1-31h0m0-15h0m0 34h0" stroke="#2F8A00" stroke-width="8"/><path d="M490 819h0m0-129h0m0 138h0m0-5h0m0 3h0m1 7h0m0 6h0m0 8h0m0-12h0m0-13h0m1-7h0m0 7h0" stroke="#85B900" stroke-width="16"/><path d="M490 819h0m0-129h0m0 138h0m0-5h0m0 3h0m1 7h0m0 6h0m0 8h0m0-12h0m0-13h0m1-7h0m0 7h0" stroke="#2F8A00" stroke-width="8"/><path d="M492 795h0m0 42h0m0-41h0m0 9h0m0-25h0m1-19h0m0 12h0m0 58h0m0-47h0m0-34h0m1-17h0m0-11h0" stroke="#85B900" stroke-width="16"/><path d="M492 795h0m0 42h0m0-41h0m0 9h0m0-25h0m1-19h0m0 12h0m0 58h0m0-47h0m0-34h0m1-17h0m0-11h0" stroke="#2F8A00" stroke-width="8"/><path d="M494 799h0m0-63h0m0 22h0m0 26h0m0 19h0m1 30h0m0-3h0m0-34h0m0-16h0m0 20h0m1-33h0m0-17h0" stroke="#85B900" stroke-width="16"/><path d="M494 799h0m0-63h0m0 22h0m0 26h0m0 19h0m1 30h0m0-3h0m0-34h0m0-16h0m0 20h0m1-33h0m0-17h0" stroke="#2F8A00" stroke-width="8"/><path d="M496 772h0m0-9h0m0 68h0m0-27h0m0 8h0m1-50h0m0 7h0m0 19h0m0-17h0m0 16h0m1-7h0m0 40h0" stroke="#85B900" stroke-width="16"/><path d="M496 772h0m0-9h0m0 68h0m0-27h0m0 8h0m1-50h0m0 7h0m0 19h0m0-17h0m0 16h0m1-7h0m0 40h0" stroke="#2F8A00" stroke-width="8"/><path d="M498 767h0m0 15h0m0 37h0m0-22h0m0 18h0m1-5h0m0 15h0m0 24h0m0-10h0m0-7h0m1-23h0m0-35h0" stroke="#85B900" stroke-width="16"/><path d="M498 767h0m0 15h0m0 37h0m0-22h0m0 18h0m1-5h0m0 15h0m0 24h0m0-10h0m0-7h0m1-23h0m0-35h0" stroke="#2F8A00" stroke-width="8"/><path d="M500 834h0m0 9h0m0-245h0m0 39h0m0 198h0m0-38h0m0 48h0m1 2h0m0-11h0m0-21h0m0 0h0m0 33h0" stroke="#85B900" stroke-width="16"/><path d="M500 834h0m0 9h0m0-245h0m0 39h0m0 198h0m0-38h0m0 48h0m1 2h0m0-11h0m0-21h0m0 0h0m0 33h0" stroke="#2F8A00" stroke-width="8"/><path d="M501 840h0m1-14h0m0-41h0m0-10h0m0-64h0m0-33h0m0 79h0m0 17h0m0 45h0m1-3h0m0 0h0m0-9h0" stroke="#85B900" stroke-width="16"/><path d="M501 840h0m1-14h0m0-41h0m0-10h0m0-64h0m0-33h0m0 79h0m0 17h0m0 45h0m1-3h0m0 0h0m0-9h0" stroke="#2F8A00" stroke-width="8"/><path d="M503 728h0m0 19h0m1 25h0m0 44h0m0 5h0m0-51h0m0-1h0m0 16h0m0 38h0m1-37h0m0-78h0m0 0h0" stroke="#85B900" stroke-width="16"/><path d="M503 728h0m0 19h0m1 25h0m0 44h0m0 5h0m0-51h0m0-1h0m0 16h0m0 38h0m1-37h0m0-78h0m0 0h0" stroke="#2F8A00" stroke-width="8"/><path d="M505 714h0m0 83h0m1 13h0m0-79h0m0 163h0m0-110h0m0 45h0m0-171h0m0 168h0m0-59h0m0 57h0m1 2h0" stroke="#85B900" stroke-width="16"/><path d="M505 714h0m0 83h0m1 13h0m0-79h0m0 163h0m0-110h0m0 45h0m0-171h0m0 168h0m0-59h0m0 57h0m1 2h0" stroke="#2F8A00" stroke-width="8"/><path d="M507 771h0m0 61h0m0-10h0m0-106h0m1 30h0m0 3h0m0 35h0m0 12h0m0-52h0m0 30h0m0 30h0m1-19h0" stroke="#85B900" stroke-width="16"/><path d="M507 771h0m0 61h0m0-10h0m0-106h0m1 30h0m0 3h0m0 35h0m0 12h0m0-52h0m0 30h0m0 30h0m1-19h0" stroke="#2F8A00" stroke-width="8"/><path d="M509 774h0m0-53h0m0 9h0m0-9h0m1 13h0m0-7h0m0-38h0m0 38h0m0-12h0m0 7h0m0-18h0m1 18h0" stroke="#85B900" stroke-width="16"/><path d="M509 774h0m0-53h0m0 9h0m0-9h0m1 13h0m0-7h0m0-38h0m0 38h0m0-12h0m0 7h0m0-18h0m1 18h0" stroke="#2F8A00" stroke-width="8"/><path d="M511 722h0m0 88h0m0-93h0m0-19h0m1 19h0m0-19h0m0 10h0m0 116h0m0-8h0m0-14h0m0 8h0m1 4h0" stroke="#85B900" stroke-width="16"/><path d="M511 722h0m0 88h0m0-93h0m0-19h0m1 19h0m0-19h0m0 10h0m0 116h0m0-8h0m0-14h0m0 8h0m1 4h0" stroke="#2F8A00" stroke-width="8"/><path d="M513 812h0m0-14h0m0-23h0m0 42h0m1 6h0m0-16h0m0-9h0m0-62h0m0-20h0m0-23h0m0 11h0m1 88h0" stroke="#85B900" stroke-width="16"/><path d="M513 812h0m0-14h0m0-23h0m0 42h0m1 6h0m0-16h0m0-9h0m0-62h0m0-20h0m0-23h0m0 11h0m1 88h0" stroke="#2F8A00" stroke-width="8"/><path d="M515 820h0m0-20h0m0-27h0m0 30h0m1 12h0m0-52h0m0-1h0m0 32h0m0-132h0m0 146h0m0 10h0m0 7h0" stroke="#85B900" stroke-width="16"/><path d="M515 820h0m0-20h0m0-27h0m0 30h0m1 12h0m0-52h0m0-1h0m0 32h0m0-132h0m0 146h0m0 10h0m0 7h0" stroke="#2F8A00" stroke-width="8"/><path d="M517 818h0m0-35h0m0-69h0m0-7h0m0 58h0m1 55h0m0 4h0m0-29h0m0-82h0m0 57h0m0-46h0m0 8h0" stroke="#85B900" stroke-width="16"/><path d="M517 818h0m0-35h0m0-69h0m0-7h0m0 58h0m1 55h0m0 4h0m0-29h0m0-82h0m0 57h0m0-46h0m0 8h0" stroke="#2F8A00" stroke-width="8"/><path d="M519 809h0m0-43h0m0-19h0m0 34h0m0-32h0m1 45h0m0 33h0m0-20h0m0 20h0m0-48h0m0 2h0m0-20h0" stroke="#85B900" stroke-width="16"/><path d="M519 809h0m0-43h0m0-19h0m0 34h0m0-32h0m1 45h0m0 33h0m0-20h0m0 20h0m0-48h0m0 2h0m0-20h0" stroke="#2F8A00" stroke-width="8"/><path d="M521 683h0m0 19h0m0 43h0m0 95h0m0-101h0m0-32h0m1 43h0m0-27h0m0 54h0m0 31h0m0-1h0m0-23h0" stroke="#85B900" stroke-width="16"/><path d="M521 683h0m0 19h0m0 43h0m0 95h0m0-101h0m0-32h0m1 43h0m0-27h0m0 54h0m0 31h0m0-1h0m0-23h0" stroke="#2F8A00" stroke-width="8"/><path d="M522 775h0m1 48h0m0 15h0m0-10h0m0-104h0m0-20h0m1-16h0m0 79h0m0-53h0m0 75h0m0 2h0m0-17h0" stroke="#85B900" stroke-width="16"/><path d="M522 775h0m1 48h0m0 15h0m0-10h0m0-104h0m0-20h0m1-16h0m0 79h0m0-53h0m0 75h0m0 2h0m0-17h0" stroke="#2F8A00" stroke-width="8"/><path d="M524 820h0m1-23h0m0 24h0m0 7h0m0-34h0m0-12h0m1 34h0m0-102h0m0 58h0m0-12h0m0-90h0m0 126h0" stroke="#85B900" stroke-width="16"/><path d="M524 820h0m1-23h0m0 24h0m0 7h0m0-34h0m0-12h0m1 34h0m0-102h0m0 58h0m0-12h0m0-90h0m0 126h0" stroke="#2F8A00" stroke-width="8"/><path d="M526 771h0m0-20h0m1-52h0m0-16h0m0 9h0m0 21h0m0-8h0m1 22h0m0 167h0m0-141h0m0 23h0m0 19h0" stroke="#85B900" stroke-width="16"/><path d="M526 771h0m0-20h0m1-52h0m0-16h0m0 9h0m0 21h0m0-8h0m1 22h0m0 167h0m0-141h0m0 23h0m0 19h0" stroke="#2F8A00" stroke-width="8"/><path d="M528 806h0m0-42h0m0 21h0m1-6h0m0 13h0m0-74h0m0 2h0m0-7h0m1-1h0m0 6h0m0 2h0m0 8h0" stroke="#85B900" stroke-width="16"/><path d="M528 806h0m0-42h0m0 21h0m1-6h0m0 13h0m0-74h0m0 2h0m0-7h0m1-1h0m0 6h0m0 2h0m0 8h0" stroke="#2F8A00" stroke-width="8"/><path d="M530 716h0m0-13h0m5 119h0m1-32h0m0-23h0m0 33h0m0-31h0m0-141h0m0 109h0m0 51h0m0-50h0m1-20h0" stroke="#85B900" stroke-width="16"/><path d="M530 716h0m0-13h0m5 119h0m1-32h0m0-23h0m0 33h0m0-31h0m0-141h0m0 109h0m0 51h0m0-50h0m1-20h0" stroke="#2F8A00" stroke-width="8"/><path d="M537 734h0m0 12h0m0-23h0m0-15h0m1 28h0m0 1h0m0-27h0m0 56h0m0 51h0m0 17h0m0-11h0m1-45h0" stroke="#85B900" stroke-width="16"/><path d="M537 734h0m0 12h0m0-23h0m0-15h0m1 28h0m0 1h0m0-27h0m0 56h0m0 51h0m0 17h0m0-11h0m1-45h0" stroke="#2F8A00" stroke-width="8"/><path d="M539 760h0m0 50h0m0-20h0m0-46h0m1 40h0m0 58h0m0-29h0m0-43h0m0-17h0m0 35h0m0-43h0m0 25h0" stroke="#85B900" stroke-width="16"/><path d="M539 760h0m0 50h0m0-20h0m0-46h0m1 40h0m0 58h0m0-29h0m0-43h0m0-17h0m0 35h0m0-43h0m0 25h0" stroke="#2F8A00" stroke-width="8"/><path d="M541 767h0m0 38h0m0-37h0m0-3h0m0-12h0m1 60h0m0 8h0m0-41h0m0-15h0m0-67h0m0 82h0m0-3h0" stroke="#85B900" stroke-width="16"/><path d="M541 767h0m0 38h0m0-37h0m0-3h0m0-12h0m1 60h0m0 8h0m0-41h0m0-15h0m0-67h0m0 82h0m0-3h0" stroke="#2F8A00" stroke-width="8"/><path d="M542 798h0m1-41h0m0-5h0m0 69h0m0 11h0m0-37h0m1 37h0m0 5h0m0-74h0m0 19h0m0 33h0m0-7h0" stroke="#85B900" stroke-width="16"/><path d="M542 798h0m1-41h0m0-5h0m0 69h0m0 11h0m0-37h0m1 37h0m0 5h0m0-74h0m0 19h0m0 33h0m0-7h0" stroke="#2F8A00" stroke-width="8"/><path d="M544 796h0m1 29h0m0-3h0m0-81h0m0 14h0m0 17h0m1-30h0m0 54h0m0-6h0m0-49h0m0 9h0m0-8h0" stroke="#85B900" stroke-width="16"/><path d="M544 796h0m1 29h0m0-3h0m0-81h0m0 14h0m0 17h0m1-30h0m0 54h0m0-6h0m0-49h0m0 9h0m0-8h0" stroke="#2F8A00" stroke-width="8"/><path d="M546 775h0m1-23h0m0-5h0m0 62h0m0-28h0m0-16h0m1 4h0m0-20h0m0 38h0m0-44h0m0-1h0m0 78h0" stroke="#85B900" stroke-width="16"/><path d="M546 775h0m1-23h0m0-5h0m0 62h0m0-28h0m0-16h0m1 4h0m0-20h0m0 38h0m0-44h0m0-1h0m0 78h0" stroke="#2F8A00" stroke-width="8"/><path d="M548 744h0m1-14h0m0 17h0m0-44h0m0-7h0m0 3h0m1 49h0m0 20h0m0-16h0m0-23h0m0 100h0m0-2h0" stroke="#85B900" stroke-width="16"/><path d="M548 744h0m1-14h0m0 17h0m0-44h0m0-7h0m0 3h0m1 49h0m0 20h0m0-16h0m0-23h0m0 100h0m0-2h0" stroke="#2F8A00" stroke-width="8"/><path d="M550 771h0m1 57h0m0 10h0m0-34h0m0-72h0m0 91h0m1-20h0m0-31h0m0 13h0m0-16h0m0 47h0m0-40h0" stroke="#85B900" stroke-width="16"/><path d="M550 771h0m1 57h0m0 10h0m0-34h0m0-72h0m0 91h0m1-20h0m0-31h0m0 13h0m0-16h0m0 47h0m0-40h0" stroke="#2F8A00" stroke-width="8"/><path d="M552 775h0m1 24h0m0 31h0m0-45h0m0-28h0m0 62h0m1-17h0m0 23h0m0-8h0m0-7h0m0-49h0m0 3h0" stroke="#85B900" stroke-width="16"/><path d="M552 775h0m1 24h0m0 31h0m0-45h0m0-28h0m0 62h0m1-17h0m0 23h0m0-8h0m0-7h0m0-49h0m0 3h0" stroke="#2F8A00" stroke-width="8"/><path d="M554 764h0m1-23h0m0 83h0m0-71h0m0-22h0m0 31h0m1 51h0m0-48h0m0-9h0m0-24h0m0-58h0m0 42h0" stroke="#85B900" stroke-width="16"/><path d="M554 764h0m1-23h0m0 83h0m0-71h0m0-22h0m0 31h0m1 51h0m0-48h0m0-9h0m0-24h0m0-58h0m0 42h0" stroke="#2F8A00" stroke-width="8"/><path d="M556 790h0m0-7h0m1-23h0m0 18h0m0 37h0m0 23h0m0-7h0m1-8h0m0 3h0m0 11h0m0-2h0m0 19h0" stroke="#85B900" stroke-width="16"/><path d="M556 790h0m0-7h0m1-23h0m0 18h0m0 37h0m0 23h0m0-7h0m1-8h0m0 3h0m0 11h0m0-2h0m0 19h0" stroke="#2F8A00" stroke-width="8"/><path d="M558 769h0m0 10h0m0-14h0m1 66h0m0-12h0m0-43h0m0 52h0m0-29h0m1 11h0m0-13h0m0 11h0m0 22h0" stroke="#85B900" stroke-width="16"/><path d="M558 769h0m0 10h0m0-14h0m1 66h0m0-12h0m0-43h0m0 52h0m0-29h0m1 11h0m0-13h0m0 11h0m0 22h0" stroke="#2F8A00" stroke-width="8"/><path d="M560 878h0m0-90h0m0-27h0m0 43h0m1-18h0m0 7h0m0 30h0m0-45h0m0 39h0m1-21h0m0-25h0m0-13h0" stroke="#85B900" stroke-width="16"/><path d="M560 878h0m0-90h0m0-27h0m0 43h0m1-18h0m0 7h0m0 30h0m0-45h0m0 39h0m1-21h0m0-25h0m0-13h0" stroke="#2F8A00" stroke-width="8"/><path d="M562 834h0m0-1h0m0-2h0m0-37h0m1 38h0m0-50h0m0-13h0m0 49h0m0 15h0m1-21h0m0 11h0m0-20h0" stroke="#85B900" stroke-width="16"/><path d="M562 834h0m0-1h0m0-2h0m0-37h0m1 38h0m0-50h0m0-13h0m0 49h0m0 15h0m1-21h0m0 11h0m0-20h0" stroke="#2F8A00" stroke-width="8"/><path d="M564 759h0m0 44h0m0 0h0m0 19h0m1 7h0m0-37h0m0 6h0m0-26h0m0 22h0m1 23h0m0 13h0m0 15h0" stroke="#85B900" stroke-width="16"/><path d="M564 759h0m0 44h0m0 0h0m0 19h0m1 7h0m0-37h0m0 6h0m0-26h0m0 22h0m1 23h0m0 13h0m0 15h0" stroke="#2F8A00" stroke-width="8"/><path d="M566 832h0m0 5h0m0 0h0m0-1h0m1-27h0m0 11h0m0 1h0m0-4h0m0 2h0m1-32h0m0 4h0m0 19h0" stroke="#85B900" stroke-width="16"/><path d="M566 832h0m0 5h0m0 0h0m0-1h0m1-27h0m0 11h0m0 1h0m0-4h0m0 2h0m1-32h0m0 4h0m0 19h0" stroke="#2F8A00" stroke-width="8"/><path d="M568 800h0m0-84h0m0 100h0m0 17h0m0-5h0m1-19h0m0 6h0m0-11h0m0-17h0m0-5h0m1 47h0m0 0h0" stroke="#85B900" stroke-width="16"/><path d="M568 800h0m0-84h0m0 100h0m0 17h0m0-5h0m1-19h0m0 6h0m0-11h0m0-17h0m0-5h0m1 47h0m0 0h0" stroke="#2F8A00" stroke-width="8"/><path d="M570 830h0m0 2h0m0-51h0m0 18h0m0 16h0m1-14h0m0-33h0m0 27h0m0-8h0m0 30h0m1-21h0m0 1h0" stroke="#85B900" stroke-width="16"/><path d="M570 830h0m0 2h0m0-51h0m0 18h0m0 16h0m1-14h0m0-33h0m0 27h0m0-8h0m0 30h0m1-21h0m0 1h0" stroke="#2F8A00" stroke-width="8"/><path d="M572 820h0m0 7h0m0 3h0m0-13h0m0 19h0m1-26h0m0-25h0m0 0h0m0 35h0m0-2h0m0 20h0m1-4h0" stroke="#85B900" stroke-width="16"/><path d="M572 820h0m0 7h0m0 3h0m0-13h0m0 19h0m1-26h0m0-25h0m0 0h0m0 35h0m0-2h0m0 20h0m1-4h0" stroke="#2F8A00" stroke-width="8"/><path d="M574 832h0m0-2h0m0-28h0m0-15h0m0 2h0m0-34h0m1-9h0m0-10h0m0 4h0m0 42h0m0 17h0m1 3h0" stroke="#85B900" stroke-width="16"/><path d="M574 832h0m0-2h0m0-28h0m0-15h0m0 2h0m0-34h0m1-9h0m0-10h0m0 4h0m0 42h0m0 17h0m1 3h0" stroke="#2F8A00" stroke-width="8"/><path d="M576 809h0m0-35h0m0-7h0m0-9h0m0-17h0m0 3h0m1-9h0m0 13h0m0 39h0m0 8h0m0-4h0m1 12h0" stroke="#85B900" stroke-width="16"/><path d="M576 809h0m0-35h0m0-7h0m0-9h0m0-17h0m0 3h0m1-9h0m0 13h0m0 39h0m0 8h0m0-4h0m1 12h0" stroke="#2F8A00" stroke-width="8"/><path d="M578 787h0m0-33h0m0-32h0m0 52h0m0 13h0m0-63h0m1 24h0m0-4h0m0 10h0m0 17h0m0-22h0m1-26h0" stroke="#85B900" stroke-width="16"/><path d="M578 787h0m0-33h0m0-32h0m0 52h0m0 13h0m0-63h0m1 24h0m0-4h0m0 10h0m0 17h0m0-22h0m1-26h0" stroke="#2F8A00" stroke-width="8"/><path d="M580 724h0m0 43h0m0-28h0m0-51h0m0 32h0m4 88h0m0-26h0m0-35h0m1 78h0m0-15h0m0-7h0m0-43h0" stroke="#85B900" stroke-width="16"/><path d="M580 724h0m0 43h0m0-28h0m0-51h0m0 32h0m4 88h0m0-26h0m0-35h0m1 78h0m0-15h0m0-7h0m0-43h0" stroke="#2F8A00" stroke-width="8"/><path d="M585 829h0m1-2h0m0-24h0m0-18h0m0-2h0m0 17h0m0-2h0m0-35h0m1 58h0m0-48h0m0 49h0m0 7h0" stroke="#85B900" stroke-width="16"/><path d="M585 829h0m1-2h0m0-24h0m0-18h0m0-2h0m0 17h0m0-2h0m0-35h0m1 58h0m0-48h0m0 49h0m0 7h0" stroke="#2F8A00" stroke-width="8"/><path d="M587 762h0m1 47h0m0 3h0m0-42h0m0 66h0m0 6h0m0-87h0m0 52h0m1-35h0m0-46h0m0 40h0m0-36h0" stroke="#85B900" stroke-width="16"/><path d="M587 762h0m1 47h0m0 3h0m0-42h0m0 66h0m0 6h0m0-87h0m0 52h0m1-35h0m0-46h0m0 40h0m0-36h0" stroke="#2F8A00" stroke-width="8"/><path d="M589 736h0m1 19h0m0-4h0m0-21h0m0-37h0m0 27h0m0 57h0m0 46h0m1 18h0m0-5h0m0-9h0m0 27h0" stroke="#85B900" stroke-width="16"/><path d="M589 736h0m1 19h0m0-4h0m0-21h0m0-37h0m0 27h0m0 57h0m0 46h0m1 18h0m0-5h0m0-9h0m0 27h0" stroke="#2F8A00" stroke-width="8"/><path d="M591 782h0m0-76h0m1 10h0m0 3h0m0-3h0m0 16h0m0 29h0m0-17h0m0 47h0m1 7h0m0 24h0m0 14h0" stroke="#85B900" stroke-width="16"/><path d="M591 782h0m0-76h0m1 10h0m0 3h0m0-3h0m0 16h0m0 29h0m0-17h0m0 47h0m1 7h0m0 24h0m0 14h0" stroke="#2F8A00" stroke-width="8"/><path d="M593 843h0m0-24h0m1-41h0m0 4h0m0 44h0m0-96h0m0 48h0m0-20h0m0 38h0m1 12h0m0-26h0m0-33h0" stroke="#85B900" stroke-width="16"/><path d="M593 843h0m0-24h0m1-41h0m0 4h0m0 44h0m0-96h0m0 48h0m0-20h0m0 38h0m1 12h0m0-26h0m0-33h0" stroke="#2F8A00" stroke-width="8"/><path d="M595 748h0m0 34h0m1-44h0m0 17h0m0-12h0m0-8h0m0-12h0m0-24h0m0 36h0m1 26h0m0-9h0m0 3h0" stroke="#85B900" stroke-width="16"/><path d="M595 748h0m0 34h0m1-44h0m0 17h0m0-12h0m0-8h0m0-12h0m0-24h0m0 36h0m1 26h0m0-9h0m0 3h0" stroke="#2F8A00" stroke-width="8"/><path d="M597 805h0m0-5h0m1 8h0m0-15h0m0 23h0m0-26h0m0-45h0m0 43h0m0 23h0m1-51h0m0 18h0m0 11h0" stroke="#85B900" stroke-width="16"/><path d="M597 805h0m0-5h0m1 8h0m0-15h0m0 23h0m0-26h0m0-45h0m0 43h0m0 23h0m1-51h0m0 18h0m0 11h0" stroke="#2F8A00" stroke-width="8"/><path d="M599 801h0m0 59h0m1-12h0m0-14h0m0-33h0m0-32h0m0-72h0m0 23h0m0 11h0m1-8h0m0 18h0m0 35h0" stroke="#85B900" stroke-width="16"/><path d="M599 801h0m0 59h0m1-12h0m0-14h0m0-33h0m0-32h0m0-72h0m0 23h0m0 11h0m1-8h0m0 18h0m0 35h0" stroke="#2F8A00" stroke-width="8"/><path d="M601 827h0m0 32h0m1-14h0m0-49h0m0-50h0m0 71h0m0-127h0m0 90h0m0 2h0m0 34h0m1-5h0m0-2h0" stroke="#85B900" stroke-width="16"/><path d="M601 827h0m0 32h0m1-14h0m0-49h0m0-50h0m0 71h0m0-127h0m0 90h0m0 2h0m0 34h0m1-5h0m0-2h0" stroke="#2F8A00" stroke-width="8"/><path d="M603 813h0m0-81h0m0 11h0m1 42h0m0-47h0m0-18h0m0 34h0m0 2h0m0 30h0m0-59h0m1 15h0m0-10h0" stroke="#85B900" stroke-width="16"/><path d="M603 813h0m0-81h0m0 11h0m1 42h0m0-47h0m0-18h0m0 34h0m0 2h0m0 30h0m0-59h0m1 15h0m0-10h0" stroke="#2F8A00" stroke-width="8"/><path d="M605 779h0m0 65h0m0-32h0m1 23h0m0-55h0m0-10h0m0 24h0m0-30h0m0 62h0m0-1h0m1-67h0m0-28h0" stroke="#85B900" stroke-width="16"/><path d="M605 779h0m0 65h0m0-32h0m1 23h0m0-55h0m0-10h0m0 24h0m0-30h0m0 62h0m0-1h0m1-67h0m0-28h0" stroke="#2F8A00" stroke-width="8"/><path d="M607 732h0m0-33h0m0 169h0m0-110h0m1-3h0m0-8h0m0 15h0m0-6h0m0 65h0m0 27h0m0 0h0m1-3h0" stroke="#85B900" stroke-width="16"/><path d="M607 732h0m0-33h0m0 169h0m0-110h0m1-3h0m0-8h0m0 15h0m0-6h0m0 65h0m0 27h0m0 0h0m1-3h0" stroke="#2F8A00" stroke-width="8"/><path d="M609 849h0m0-6h0m0-20h0m0 19h0m1-9h0m0 3h0m0 15h0m0 10h0m0-14h0m0 3h0m0-63h0m1-29h0" stroke="#85B900" stroke-width="16"/><path d="M609 849h0m0-6h0m0-20h0m0 19h0m1-9h0m0 3h0m0 15h0m0 10h0m0-14h0m0 3h0m0-63h0m1-29h0" stroke="#2F8A00" stroke-width="8"/><path d="M611 784h0m0-24h0m0-22h0m0-4h0m1 30h0m0-31h0m0 35h0m0 47h0m0-117h0m0 39h0m0 31h0m0 36h0" stroke="#85B900" stroke-width="16"/><path d="M611 784h0m0-24h0m0-22h0m0-4h0m1 30h0m0-31h0m0 35h0m0 47h0m0-117h0m0 39h0m0 31h0m0 36h0" stroke="#2F8A00" stroke-width="8"/><path d="M613 752h0m0 30h0m0-13h0m0 28h0m0 23h0m1 3h0m0-91h0m0 35h0m0 64h0m0-184h0m0-105h0m0 235h0" stroke="#85B900" stroke-width="16"/><path d="M613 752h0m0 30h0m0-13h0m0 28h0m0 23h0m1 3h0m0-91h0m0 35h0m0 64h0m0-184h0m0-105h0m0 235h0" stroke="#2F8A00" stroke-width="8"/><path d="M614 844h0m0-22h0m1-61h0m0-22h0m0 63h0m0 13h0m0-34h0m1-16h0m0-44h0m0 0h0m0-6h0m0 27h0" stroke="#85B900" stroke-width="16"/><path d="M614 844h0m0-22h0m1-61h0m0-22h0m0 63h0m0 13h0m0-34h0m1-16h0m0-44h0m0 0h0m0-6h0m0 27h0" stroke="#2F8A00" stroke-width="8"/><path d="M616 749h0m0 43h0m1 5h0m0-9h0m0 19h0m0 26h0m0-24h0m1-4h0m0-24h0m0-22h0m0-11h0m0 99h0" stroke="#85B900" stroke-width="16"/><path d="M616 749h0m0 43h0m1 5h0m0-9h0m0 19h0m0 26h0m0-24h0m1-4h0m0-24h0m0-22h0m0-11h0m0 99h0" stroke="#2F8A00" stroke-width="8"/><path d="M618 750h0m0-9h0m0 8h0m1 4h0m0 21h0m0 34h0m0 29h0m0-21h0m1-14h0m0 10h0m0-26h0m0 32h0" stroke="#85B900" stroke-width="16"/><path d="M618 750h0m0-9h0m0 8h0m1 4h0m0 21h0m0 34h0m0 29h0m0-21h0m1-14h0m0 10h0m0-26h0m0 32h0" stroke="#2F8A00" stroke-width="8"/><path d="M620 825h0m0-12h0m0 17h0m1-30h0m0-11h0m0-12h0m0 0h0m0-24h0m1 10h0m0 37h0m0 11h0m0 16h0" stroke="#85B900" stroke-width="16"/><path d="M620 825h0m0-12h0m0 17h0m1-30h0m0-11h0m0-12h0m0 0h0m0-24h0m1 10h0m0 37h0m0 11h0m0 16h0" stroke="#2F8A00" stroke-width="8"/><path d="M622 826h0m0 4h0m0-37h0m1-10h0m0-29h0m0 70h0m0 17h0m0-11h0m1-22h0m0 7h0m0-32h0m0 37h0" stroke="#85B900" stroke-width="16"/><path d="M622 826h0m0 4h0m0-37h0m1-10h0m0-29h0m0 70h0m0 17h0m0-11h0m1-22h0m0 7h0m0-32h0m0 37h0" stroke="#2F8A00" stroke-width="8"/><path d="M624 841h0m0-43h0m0-19h0m1 37h0m0 16h0m0 0h0m0-6h0m0-12h0m1-4h0m0-20h0m0-7h0m0-6h0" stroke="#85B900" stroke-width="16"/><path d="M624 841h0m0-43h0m0-19h0m1 37h0m0 16h0m0 0h0m0-6h0m0-12h0m1-4h0m0-20h0m0-7h0m0-6h0" stroke="#2F8A00" stroke-width="8"/><path d="M626 720h0m0 101h0m0-54h0m0 34h0m1-36h0m0-10h0m0-18h0m0 3h0m0 23h0m1 1h0m0 9h0m0-13h0" stroke="#85B900" stroke-width="16"/><path d="M626 720h0m0 101h0m0-54h0m0 34h0m1-36h0m0-10h0m0-18h0m0 3h0m0 23h0m1 1h0m0 9h0m0-13h0" stroke="#2F8A00" stroke-width="8"/><path d="M628 774h0m0-21h0m0 14h0m0-2h0m1-12h0m0 41h0m0 34h0m0-25h0m0 24h0m1-4h0m0 7h0m0 0h0" stroke="#85B900" stroke-width="16"/><path d="M628 774h0m0-21h0m0 14h0m0-2h0m1-12h0m0 41h0m0 34h0m0-25h0m0 24h0m1-4h0m0 7h0m0 0h0" stroke="#2F8A00" stroke-width="8"/><path d="M630 821h0m0-24h0m0 28h0m0-31h0m1-3h0m0 17h0m0-58h0m0 29h0m0-11h0m1-1h0m0 22h0m0 0h0" stroke="#85B900" stroke-width="16"/><path d="M630 821h0m0-24h0m0 28h0m0-31h0m1-3h0m0 17h0m0-58h0m0 29h0m0-11h0m1-1h0m0 22h0m0 0h0" stroke="#2F8A00" stroke-width="8"/><path d="M632 793h0m0 48h0m0-72h0m0-17h0m0 3h0m1-1h0m0-12h0m0 54h0m0 33h0m0-60h0m1-7h0m0 37h0" stroke="#85B900" stroke-width="16"/><path d="M632 793h0m0 48h0m0-72h0m0-17h0m0 3h0m1-1h0m0-12h0m0 54h0m0 33h0m0-60h0m1-7h0m0 37h0" stroke="#2F8A00" stroke-width="8"/><path d="M634 732h0m0 40h0m0 6h0m0 25h0m0 19h0m1 10h0m0-54h0m0 23h0m0-3h0m0 14h0m1-62h0m0-15h0" stroke="#85B900" stroke-width="16"/><path d="M634 732h0m0 40h0m0 6h0m0 25h0m0 19h0m1 10h0m0-54h0m0 23h0m0-3h0m0 14h0m1-62h0m0-15h0" stroke="#2F8A00" stroke-width="8"/><path d="M636 774h0m0 39h0m0 22h0m0-67h0m0 49h0m1-25h0m0-16h0m0-13h0m0 30h0m0 28h0m1-46h0m0 24h0" stroke="#85B900" stroke-width="16"/><path d="M636 774h0m0 39h0m0 22h0m0-67h0m0 49h0m1-25h0m0-16h0m0-13h0m0 30h0m0 28h0m1-46h0m0 24h0" stroke="#2F8A00" stroke-width="8"/><path d="M638 796h0m0-37h0m0 41h0m0-45h0m0-10h0m1 8h0m0 12h0m0-27h0m0-2h0m0 60h0m1-3h0m0 5h0" stroke="#85B900" stroke-width="16"/><path d="M638 796h0m0-37h0m0 41h0m0-45h0m0-10h0m1 8h0m0 12h0m0-27h0m0-2h0m0 60h0m1-3h0m0 5h0" stroke="#2F8A00" stroke-width="8"/><path d="M640 788h0m0 29h0m0-139h0m0 156h0m0-20h0m0 11h0m1-49h0m0-1h0m0-45h0m0-2h0m0 112h0m1-42h0" stroke="#85B900" stroke-width="16"/><path d="M640 788h0m0 29h0m0-139h0m0 156h0m0-20h0m0 11h0m1-49h0m0-1h0m0-45h0m0-2h0m0 112h0m1-42h0" stroke="#2F8A00" stroke-width="8"/><path d="M642 831h0m0-9h0m0-6h0m0 38h0m0-133h0m0 26h0m0-33h0m1 1h0m0 0h0m0 7h0m0 90h0m0 27h0" stroke="#85B900" stroke-width="16"/><path d="M642 831h0m0-9h0m0-6h0m0 38h0m0-133h0m0 26h0m0-33h0m1 1h0m0 0h0m0 7h0m0 90h0m0 27h0" stroke="#2F8A00" stroke-width="8"/><path d="M644 757h0m0-9h0m0-20h0m0 21h0m0-39h0m0-19h0m0 24h0m1-2h0m0 59h0m0-13h0m0 14h0m0-21h0" stroke="#85B900" stroke-width="16"/><path d="M644 757h0m0-9h0m0-20h0m0 21h0m0-39h0m0-19h0m0 24h0m1-2h0m0 59h0m0-13h0m0 14h0m0-21h0" stroke="#2F8A00" stroke-width="8"/><path d="M646 793h0m0 32h0m0-21h0m0-34h0m0 25h0m0-6h0m0 28h0m1-13h0m0-9h0m0 19h0m0-50h0m0-43h0" stroke="#85B900" stroke-width="16"/><path d="M646 793h0m0 32h0m0-21h0m0-34h0m0 25h0m0-6h0m0 28h0m1-13h0m0-9h0m0 19h0m0-50h0m0-43h0" stroke="#2F8A00" stroke-width="8"/><path d="M648 755h0m0-3h0m0 33h0m0 24h0m0-135h0m0 134h0m0-40h0m0 55h0m1-105h0m0-6h0m0-9h0m0 91h0" stroke="#85B900" stroke-width="16"/><path d="M648 755h0m0-3h0m0 33h0m0 24h0m0-135h0m0 134h0m0-40h0m0 55h0m1-105h0m0-6h0m0-9h0m0 91h0" stroke="#2F8A00" stroke-width="8"/><path d="M649 768h0m1-10h0m0 29h0m0 34h0m0 6h0m0-20h0m0-9h0m0-60h0m1 22h0m0-12h0m0-59h0m0 26h0" stroke="#85B900" stroke-width="16"/><path d="M649 768h0m1-10h0m0 29h0m0 34h0m0 6h0m0-20h0m0-9h0m0-60h0m1 22h0m0-12h0m0-59h0m0 26h0" stroke="#2F8A00" stroke-width="8"/><path d="M651 726h0m1 48h0m0 21h0m0-9h0m0-18h0m0 53h0m0-11h0m0 12h0m1-6h0m0 12h0m0 1h0m0-58h0" stroke="#85B900" stroke-width="16"/><path d="M651 726h0m1 48h0m0 21h0m0-9h0m0-18h0m0 53h0m0-11h0m0 12h0m1-6h0m0 12h0m0 1h0m0-58h0" stroke="#2F8A00" stroke-width="8"/><path d="M653 790h0m1 35h0m0 7h0m2-186h0m2 192h0m2-16h0m0 10h0m0-2h0m1-51h0m0 15h0m0-62h0m0-17h0" stroke="#85B900" stroke-width="16"/><path d="M653 790h0m1 35h0m0 7h0m2-186h0m2 192h0m2-16h0m0 10h0m0-2h0m1-51h0m0 15h0m0-62h0m0-17h0" stroke="#2F8A00" stroke-width="8"/><path d="M661 705h0m1-11h0m0 0h0m0 75h0m0-8h0m0-101h0m0 155h0m0-13h0m0-87h0m1-5h0m0 83h0m0 21h0" stroke="#85B900" stroke-width="16"/><path d="M661 705h0m1-11h0m0 0h0m0 75h0m0-8h0m0-101h0m0 155h0m0-13h0m0-87h0m1-5h0m0 83h0m0 21h0" stroke="#2F8A00" stroke-width="8"/><path d="M663 792h0m0-22h0m1 39h0m0-1h0m0-24h0m0 28h0m0-14h0m0-55h0m0-39h0m1-31h0m0 109h0m0 1h0" stroke="#85B900" stroke-width="16"/><path d="M663 792h0m0-22h0m1 39h0m0-1h0m0-24h0m0 28h0m0-14h0m0-55h0m0-39h0m1-31h0m0 109h0m0 1h0" stroke="#2F8A00" stroke-width="8"/><path d="M665 820h0m0-10h0m1-12h0m0-5h0m0-2h0m0-63h0m0 12h0m0 49h0m0 38h0m1-23h0m0-1h0m0 7h0" stroke="#85B900" stroke-width="16"/><path d="M665 820h0m0-10h0m1-12h0m0-5h0m0-2h0m0-63h0m0 12h0m0 49h0m0 38h0m1-23h0m0-1h0m0 7h0" stroke="#2F8A00" stroke-width="8"/><path d="M667 823h0m0-4h0m1-24h0m0 27h0m0-7h0m0-12h0m0 30h0m0-43h0m0-10h0m1-46h0m0 67h0m0-47h0" stroke="#85B900" stroke-width="16"/><path d="M667 823h0m0-4h0m1-24h0m0 27h0m0-7h0m0-12h0m0 30h0m0-43h0m0-10h0m1-46h0m0 67h0m0-47h0" stroke="#2F8A00" stroke-width="8"/><path d="M669 767h0m0 14h0m1-17h0m0-2h0m0-13h0m0-16h0m0-12h0m0 22h0m0-1h0m1-20h0m0 3h0m0 85h0" stroke="#85B900" stroke-width="16"/><path d="M669 767h0m0 14h0m1-17h0m0-2h0m0-13h0m0-16h0m0-12h0m0 22h0m0-1h0m1-20h0m0 3h0m0 85h0" stroke="#2F8A00" stroke-width="8"/><path d="M671 752h0m0-12h0m1-7h0m0 12h0m0 38h0m0-32h0m0-67h0m0 85h0m0 17h0m0 33h0m1-28h0m0-32h0" stroke="#85B900" stroke-width="16"/><path d="M671 752h0m0-12h0m1-7h0m0 12h0m0 38h0m0-32h0m0-67h0m0 85h0m0 17h0m0 33h0m1-28h0m0-32h0" stroke="#2F8A00" stroke-width="8"/><path d="M673 788h0m0-8h0m0-22h0m1-3h0m0 49h0m0-61h0m0 6h0m0 60h0m0-3h0m0-34h0m1-17h0m0 40h0" stroke="#85B900" stroke-width="16"/><path d="M673 788h0m0-8h0m0-22h0m1-3h0m0 49h0m0-61h0m0 6h0m0 60h0m0-3h0m0-34h0m1-17h0m0 40h0" stroke="#2F8A00" stroke-width="8"/><path d="M675 801h0m0 31h0m0-52h0m0-18h0m1-23h0m0-6h0m0 20h0m0 25h0m0-12h0m0 27h0m0-23h0m1 16h0" stroke="#85B900" stroke-width="16"/><path d="M675 801h0m0 31h0m0-52h0m0-18h0m1-23h0m0-6h0m0 20h0m0 25h0m0-12h0m0 27h0m0-23h0m1 16h0" stroke="#2F8A00" stroke-width="8"/><path d="M677 743h0m0 32h0m0 46h0m0 2h0m1-11h0m0 2h0m0-8h0m0-3h0m0-6h0m0 9h0m0-14h0m1-1h0" stroke="#85B900" stroke-width="16"/><path d="M677 743h0m0 32h0m0 46h0m0 2h0m1-11h0m0 2h0m0-8h0m0-3h0m0-6h0m0 9h0m0-14h0m1-1h0" stroke="#2F8A00" stroke-width="8"/><path d="M679 780h0m0 24h0m0 20h0m0 2h0m1-2h0m0 6h0m0-21h0m0 23h0m0-108h0m0 61h0m0 21h0m0-1h0" stroke="#85B900" stroke-width="16"/><path d="M679 780h0m0 24h0m0 20h0m0 2h0m1-2h0m0 6h0m0-21h0m0 23h0m0-108h0m0 61h0m0 21h0m0-1h0" stroke="#2F8A00" stroke-width="8"/><path d="M681 811h0m0-40h0m0 36h0m0 2h0m0-2h0m1 16h0m0-6h0m0-5h0m0 11h0m0-11h0m0 2h0m0-16h0" stroke="#85B900" stroke-width="16"/><path d="M681 811h0m0-40h0m0 36h0m0 2h0m0-2h0m1 16h0m0-6h0m0-5h0m0 11h0m0-11h0m0 2h0m0-16h0" stroke="#2F8A00" stroke-width="8"/><path d="M683 782h0m0 6h0m0-12h0m0 14h0m0-5h0m1-10h0m0 5h0m0-20h0m0 29h0m0 53h0m0-35h0m0-52h0" stroke="#85B900" stroke-width="16"/><path d="M683 782h0m0 6h0m0-12h0m0 14h0m0-5h0m1-10h0m0 5h0m0-20h0m0 29h0m0 53h0m0-35h0m0-52h0" stroke="#2F8A00" stroke-width="8"/><path d="M684 766h0m1 0h0m0 25h0m0 42h0m0-19h0m0-11h0m1-26h0m0 16h0m0 19h0m0 0h0m0-4h0m0-35h0" stroke="#85B900" stroke-width="16"/><path d="M684 766h0m1 0h0m0 25h0m0 42h0m0-19h0m0-11h0m1-26h0m0 16h0m0 19h0m0 0h0m0-4h0m0-35h0" stroke="#2F8A00" stroke-width="8"/><path d="M686 778h0m1-17h0m0 3h0m0 54h0m0-7h0m0-29h0m1-23h0m0-13h0m0 4h0m0 69h0m0-16h0m0-11h0" stroke="#85B900" stroke-width="16"/><path d="M686 778h0m1-17h0m0 3h0m0 54h0m0-7h0m0-29h0m1-23h0m0-13h0m0 4h0m0 69h0m0-16h0m0-11h0" stroke="#2F8A00" stroke-width="8"/><path d="M688 763h0m1-1h0m0 40h0m0 23h0m0-17h0m0-31h0m1 27h0m0 38h0m0 7h0m0 0h0m0-8h0m0-2h0" stroke="#85B900" stroke-width="16"/><path d="M688 763h0m1-1h0m0 40h0m0 23h0m0-17h0m0-31h0m1 27h0m0 38h0m0 7h0m0 0h0m0-8h0m0-2h0" stroke="#2F8A00" stroke-width="8"/><path d="M690 820h0m1-36h0m0-17h0m0 10h0m0 28h0m0 30h0m1 6h0m0-4h0m0-80h0m0 61h0m0 3h0m0-33h0" stroke="#85B900" stroke-width="16"/><path d="M690 820h0m1-36h0m0-17h0m0 10h0m0 28h0m0 30h0m1 6h0m0-4h0m0-80h0m0 61h0m0 3h0m0-33h0" stroke="#2F8A00" stroke-width="8"/><path d="M692 828h0m1-41h0m0-9h0m0 6h0m0 2h0m0 0h0m1-48h0m0-15h0m0 19h0m0 38h0m0 3h0m0-34h0" stroke="#85B900" stroke-width="16"/><path d="M692 828h0m1-41h0m0-9h0m0 6h0m0 2h0m0 0h0m1-48h0m0-15h0m0 19h0m0 38h0m0 3h0m0-34h0" stroke="#2F8A00" stroke-width="8"/><path d="M694 737h0m1-8h0m0 49h0m0-28h0m0 41h0m0-40h0m1-12h0m0 1h0m0 60h0m0-31h0m0 0h0m0-14h0" stroke="#85B900" stroke-width="16"/><path d="M694 737h0m1-8h0m0 49h0m0-28h0m0 41h0m0-40h0m1-12h0m0 1h0m0 60h0m0-31h0m0 0h0m0-14h0" stroke="#2F8A00" stroke-width="8"/><path d="M696 751h0m1 50h0m0-30h0m0-2h0m0 89h0m0-119h0m0-2h0m1 18h0m0 66h0m0 26h0m0-52h0m0-13h0" stroke="#85B900" stroke-width="16"/><path d="M696 751h0m1 50h0m0-30h0m0-2h0m0 89h0m0-119h0m0-2h0m1 18h0m0 66h0m0 26h0m0-52h0m0-13h0" stroke="#2F8A00" stroke-width="8"/><path d="M698 730h0m0 8h0m1 16h0m0 36h0m0 17h0m0-48h0m0-26h0m1-18h0m0 75h0m0-48h0m0 52h0m0-100h0" stroke="#85B900" stroke-width="16"/><path d="M698 730h0m0 8h0m1 16h0m0 36h0m0 17h0m0-48h0m0-26h0m1-18h0m0 75h0m0-48h0m0 52h0m0-100h0" stroke="#2F8A00" stroke-width="8"/><path d="M700 647h0m0 154h0m0 25h0m0-77h0m1 29h0m0 19h0m0-5h0m0 15h0m0-53h0m1 66h0m0-57h0m0 2h0" stroke="#85B900" stroke-width="16"/><path d="M700 647h0m0 154h0m0 25h0m0-77h0m1 29h0m0 19h0m0-5h0m0 15h0m0-53h0m1 66h0m0-57h0m0 2h0" stroke="#2F8A00" stroke-width="8"/><path d="M702 807h0m0 10h0m0 25h0m0-15h0m1-58h0m0 21h0m0 17h0m0-67h0m0 49h0m1 40h0m0-46h0m0 34h0" stroke="#85B900" stroke-width="16"/><path d="M702 807h0m0 10h0m0 25h0m0-15h0m1-58h0m0 21h0m0 17h0m0-67h0m0 49h0m1 40h0m0-46h0m0 34h0" stroke="#2F8A00" stroke-width="8"/><path d="M704 808h0m0 22h0m0-35h0m0 26h0m1 7h0m0-12h0m0-24h0m0-10h0m0 28h0m1 29h0m0-19h0m0 12h0" stroke="#85B900" stroke-width="16"/><path d="M704 808h0m0 22h0m0-35h0m0 26h0m1 7h0m0-12h0m0-24h0m0-10h0m0 28h0m1 29h0m0-19h0m0 12h0" stroke="#2F8A00" stroke-width="8"/><path d="M706 820h0m0 26h0m0 3h0m0-5h0m1-5h0m0-32h0m0-65h0m0 46h0m0-29h0m1-13h0m0 54h0m0 5h0" stroke="#85B900" stroke-width="16"/><path d="M706 820h0m0 26h0m0 3h0m0-5h0m1-5h0m0-32h0m0-65h0m0 46h0m0-29h0m1-13h0m0 54h0m0 5h0" stroke="#2F8A00" stroke-width="8"/><path d="M708 756h0m0-58h0m0 114h0m0-21h0m0 32h0m1-54h0m1-55h0m2 139h0m1-73h0m0-28h0m1 14h0m0 33h0" stroke="#85B900" stroke-width="16"/><path d="M708 756h0m0-58h0m0 114h0m0-21h0m0 32h0m1-54h0m1-55h0m2 139h0m1-73h0m0-28h0m1 14h0m0 33h0" stroke="#2F8A00" stroke-width="8"/><path d="M714 756h0m0 10h0m0-15h0m0 60h0m0 4h0m1-58h0m0-2h0m0 14h0m0-6h0m0 13h0m1 20h0m0 5h0" stroke="#85B900" stroke-width="16"/><path d="M714 756h0m0 10h0m0-15h0m0 60h0m0 4h0m1-58h0m0-2h0m0 14h0m0-6h0m0 13h0m1 20h0m0 5h0" stroke="#2F8A00" stroke-width="8"/><path d="M716 783h0m0 45h0m0 7h0m0-21h0m0-13h0m1-25h0m0-27h0m0 5h0m0 14h0m0-2h0m1-13h0m0-31h0" stroke="#85B900" stroke-width="16"/><path d="M716 783h0m0 45h0m0 7h0m0-21h0m0-13h0m1-25h0m0-27h0m0 5h0m0 14h0m0-2h0m1-13h0m0-31h0" stroke="#2F8A00" stroke-width="8"/><path d="M718 722h0m0 28h0m0-21h0m0 30h0m0 34h0m1-3h0m0 0h0m0 26h0m0-10h0m0-8h0m1 23h0m0-12h0" stroke="#85B900" stroke-width="16"/><path d="M718 722h0m0 28h0m0-21h0m0 30h0m0 34h0m1-3h0m0 0h0m0 26h0m0-10h0m0-8h0m1 23h0m0-12h0" stroke="#2F8A00" stroke-width="8"/><path d="M720 840h0m0-39h0m0-77h0m0 60h0m0-6h0m0 10h0m1-19h0m0 61h0m0 1h0m0-70h0m0 10h0m1 29h0" stroke="#85B900" stroke-width="16"/><path d="M720 840h0m0-39h0m0-77h0m0 60h0m0-6h0m0 10h0m1-19h0m0 61h0m0 1h0m0-70h0m0 10h0m1 29h0" stroke="#2F8A00" stroke-width="8"/><path d="M722 828h0m0-3h0m0-38h0m0 26h0m0-52h0m0 13h0m1-27h0m0 56h0m0 15h0m0 25h0m0-17h0m1-17h0" stroke="#85B900" stroke-width="16"/><path d="M722 828h0m0-3h0m0-38h0m0 26h0m0-52h0m0 13h0m1-27h0m0 56h0m0 15h0m0 25h0m0-17h0m1-17h0" stroke="#2F8A00" stroke-width="8"/><path d="M724 783h0m0 37h0m0-50h0m0 30h0m0-19h0m0 26h0m1-1h0m0-38h0m0-9h0m0-29h0m0-2h0m1 3h0" stroke="#85B900" stroke-width="16"/><path d="M724 783h0m0 37h0m0-50h0m0 30h0m0-19h0m0 26h0m1-1h0m0-38h0m0-9h0m0-29h0m0-2h0m1 3h0" stroke="#2F8A00" stroke-width="8"/><path d="M726 776h0m0-14h0m0 16h0m0-8h0m0-35h0m0 34h0m1 60h0m0-1h0m0 6h0m0-3h0m0 2h0m1 11h0" stroke="#85B900" stroke-width="16"/><path d="M726 776h0m0-14h0m0 16h0m0-8h0m0-35h0m0 34h0m1 60h0m0-1h0m0 6h0m0-3h0m0 2h0m1 11h0" stroke="#2F8A00" stroke-width="8"/><path d="M728 790h0m0-31h0m0-34h0m0 15h0m0 0h0m0-9h0m1 31h0m0 64h0m0 8h0m0 9h0m0-12h0m1-5h0" stroke="#85B900" stroke-width="16"/><path d="M728 790h0m0-31h0m0-34h0m0 15h0m0 0h0m0-9h0m1 31h0m0 64h0m0 8h0m0 9h0m0-12h0m1-5h0" stroke="#2F8A00" stroke-width="8"/><path d="M730 836h0m0 0h0m0 0h0m0-21h0m0-31h0m0-31h0m1 56h0m0-48h0m0 12h0m0 10h0m0-9h0m1-13h0" stroke="#85B900" stroke-width="16"/><path d="M730 836h0m0 0h0m0 0h0m0-21h0m0-31h0m0-31h0m1 56h0m0-48h0m0 12h0m0 10h0m0-9h0m1-13h0" stroke="#2F8A00" stroke-width="8"/><path d="M732 782h0m0-35h0m0 14h0m0 53h0m0-38h0m0 39h0m1 14h0m0 11h0m0-35h0m0 26h0m0 1h0m1 7h0" stroke="#85B900" stroke-width="16"/><path d="M732 782h0m0-35h0m0 14h0m0 53h0m0-38h0m0 39h0m1 14h0m0 11h0m0-35h0m0 26h0m0 1h0m1 7h0" stroke="#2F8A00" stroke-width="8"/><path d="M734 837h0m0-18h0m0 7h0m0-12h0m0-34h0m0-31h0m1-13h0m0 5h0m0-40h0m0 29h0m0-29h0m1 41h0" stroke="#85B900" stroke-width="16"/><path d="M734 837h0m0-18h0m0 7h0m0-12h0m0-34h0m0-31h0m1-13h0m0 5h0m0-40h0m0 29h0m0-29h0m1 41h0" stroke="#2F8A00" stroke-width="8"/><path d="M736 808h0m0 17h0m0 12h0m0-175h0m0 180h0m0-229h0m0 227h0m0 2h0m0-9h0m1-41h0m0-18h0m0-47h0" stroke="#85B900" stroke-width="16"/><path d="M736 808h0m0 17h0m0 12h0m0-175h0m0 180h0m0-229h0m0 227h0m0 2h0m0-9h0m1-41h0m0-18h0m0-47h0" stroke="#2F8A00" stroke-width="8"/><path d="M737 799h0m0-98h0m1 19h0m0 58h0m0 20h0m0 16h0m0-60h0m0-15h0m0 4h0m1 31h0m0 21h0m0 30h0" stroke="#85B900" stroke-width="16"/><path d="M737 799h0m0-98h0m1 19h0m0 58h0m0 20h0m0 16h0m0-60h0m0-15h0m0 4h0m1 31h0m0 21h0m0 30h0" stroke="#2F8A00" stroke-width="8"/><path d="M739 761h0m0 15h0m1 55h0m0 5h0m0-11h0m0 1h0m0-21h0m0 20h0m0-32h0m1 18h0m0-6h0m0-46h0" stroke="#85B900" stroke-width="16"/><path d="M739 761h0m0 15h0m1 55h0m0 5h0m0-11h0m0 1h0m0-21h0m0 20h0m0-32h0m1 18h0m0-6h0m0-46h0" stroke="#2F8A00" stroke-width="8"/><path d="M741 771h0m0-5h0m1-28h0m0 18h0m0-30h0m0 63h0m0 11h0m0 19h0m0 1h0m1-8h0m0-71h0m0-2h0" stroke="#85B900" stroke-width="16"/><path d="M741 771h0m0-5h0m1-28h0m0 18h0m0-30h0m0 63h0m0 11h0m0 19h0m0 1h0m1-8h0m0-71h0m0-2h0" stroke="#2F8A00" stroke-width="8"/><path d="M743 751h0m0-13h0m1 8h0m0-6h0m0-8h0m0-16h0m0 2h0m0-12h0m0 57h0m1 14h0m0 16h0m0 18h0" stroke="#85B900" stroke-width="16"/><path d="M743 751h0m0-13h0m1 8h0m0-6h0m0-8h0m0-16h0m0 2h0m0-12h0m0 57h0m1 14h0m0 16h0m0 18h0" stroke="#2F8A00" stroke-width="8"/><path d="M745 783h0m0 31h0m1-85h0m0-6h0m0 17h0m0 73h0m0 11h0m0 1h0m0 0h0m1-31h0m0-16h0m0-30h0" stroke="#85B900" stroke-width="16"/><path d="M745 783h0m0 31h0m1-85h0m0-6h0m0 17h0m0 73h0m0 11h0m0 1h0m0 0h0m1-31h0m0-16h0m0-30h0" stroke="#2F8A00" stroke-width="8"/><path d="M747 760h0m0-40h0m1 6h0m0-1h0m0 34h0m0-20h0m0-65h0m0 91h0m0 21h0m0 12h0m1 14h0m0-50h0" stroke="#85B900" stroke-width="16"/><path d="M747 760h0m0-40h0m1 6h0m0-1h0m0 34h0m0-20h0m0-65h0m0 91h0m0 21h0m0 12h0m1 14h0m0-50h0" stroke="#2F8A00" stroke-width="8"/><path d="M749 768h0m0-6h0m0 42h0m1-31h0m0 10h0m0-58h0m0 4h0m0-11h0m0 15h0m0-10h0m1 13h0m0 21h0" stroke="#85B900" stroke-width="16"/><path d="M749 768h0m0-6h0m0 42h0m1-31h0m0 10h0m0-58h0m0 4h0m0-11h0m0 15h0m0-10h0m1 13h0m0 21h0" stroke="#2F8A00" stroke-width="8"/><path d="M751 722h0m0 46h0m0-26h0m1 78h0m0 5h0m0-2h0m0-13h0m0 14h0m0-7h0m0-81h0m1 40h0m0 6h0" stroke="#85B900" stroke-width="16"/><path d="M751 722h0m0 46h0m0-26h0m1 78h0m0 5h0m0-2h0m0-13h0m0 14h0m0-7h0m0-81h0m1 40h0m0 6h0" stroke="#2F8A00" stroke-width="8"/><path d="M753 697h0m0-25h0m0 71h0m1 22h0m0-31h0m0-39h0m0-4h0m0-29h0m0 176h0m0-70h0m0-70h0m0 33h0" stroke="#85B900" stroke-width="16"/><path d="M753 697h0m0-25h0m0 71h0m1 22h0m0-31h0m0-39h0m0-4h0m0-29h0m0 176h0m0-70h0m0-70h0m0 33h0" stroke="#2F8A00" stroke-width="8"/><path d="M755 817h0m0-11h0m0-48h0m0 22h0m0 14h0m1 0h0m0-17h0m0-52h0m0 30h0m0-65h0m0 132h0m0-39h0" stroke="#85B900" stroke-width="16"/><path d="M755 817h0m0-11h0m0-48h0m0 22h0m0 14h0m1 0h0m0-17h0m0-52h0m0 30h0m0-65h0m0 132h0m0-39h0" stroke="#2F8A00" stroke-width="8"/><path d="M756 788h0m0 6h0m1-6h0m0 14h0m0 21h0m41-99h0m0 160h0m6-62h0m0 18h0m0 3h0m0-133h0m0 88h0" stroke="#85B900" stroke-width="16"/><path d="M756 788h0m0 6h0m1-6h0m0 14h0m0 21h0m41-99h0m0 160h0m6-62h0m0 18h0m0 3h0m0-133h0m0 88h0" stroke="#2F8A00" stroke-width="8"/><path d="M804 810h0m0 30h0m1 28h0m0 3h0m0 14h0m0-21h0m0-61h0m1 52h0m0 24h0m0-2h0m0-16h0m0-14h0" stroke="#85B900" stroke-width="16"/><path d="M804 810h0m0 30h0m1 28h0m0 3h0m0 14h0m0-21h0m0-61h0m1 52h0m0 24h0m0-2h0m0-16h0m0-14h0" stroke="#2F8A00" stroke-width="8"/><path d="M806 816h0m0-21h0m1 3h0m0 21h0m0-54h0m0 34h0m0 9h0m1-12h0m0 16h0m0-21h0m0 18h0m0 55h0" stroke="#85B900" stroke-width="16"/><path d="M806 816h0m0-21h0m1 3h0m0 21h0m0-54h0m0 34h0m0 9h0m1-12h0m0 16h0m0-21h0m0 18h0m0 55h0" stroke="#2F8A00" stroke-width="8"/><path d="M808 826h0m0 26h0m1-45h0m0-12h0m0 15h0m0-30h0m0 56h0m1-75h0m0 8h0m0 12h0m0 13h0m0 100h0" stroke="#85B900" stroke-width="16"/><path d="M808 826h0m0 26h0m1-45h0m0-12h0m0 15h0m0-30h0m0 56h0m1-75h0m0 8h0m0 12h0m0 13h0m0 100h0" stroke="#2F8A00" stroke-width="8"/><path d="M810 790h0m0-33h0m0 17h0m1 72h0m0 8h0m0-25h0m0-64h0m0-15h0m1 47h0m0-22h0m0-3h0m0 100h0" stroke="#85B900" stroke-width="16"/><path d="M810 790h0m0-33h0m0 17h0m1 72h0m0 8h0m0-25h0m0-64h0m0-15h0m1 47h0m0-22h0m0-3h0m0 100h0" stroke="#2F8A00" stroke-width="8"/><path d="M812 754h0m0 56h0m0-80h0m1-13h0m0 131h0m0 20h0m0-3h0m0 4h0m1 3h0m0-43h0m0-69h0m0-11h0" stroke="#85B900" stroke-width="16"/><path d="M812 754h0m0 56h0m0-80h0m1-13h0m0 131h0m0 20h0m0-3h0m0 4h0m1 3h0m0-43h0m0-69h0m0-11h0" stroke="#2F8A00" stroke-width="8"/><path d="M814 777h0m0 30h0m0 42h0m1-21h0m0 20h0m0-20h0m0-61h0m0-8h0m1 28h0m0-1h0m0-18h0m0 9h0" stroke="#85B900" stroke-width="16"/><path d="M814 777h0m0 30h0m0 42h0m1-21h0m0 20h0m0-20h0m0-61h0m0-8h0m1 28h0m0-1h0m0-18h0m0 9h0" stroke="#2F8A00" stroke-width="8"/><path d="M816 846h0m0-52h0m0-76h0m1 28h0m0-38h0m0 69h0m0-18h0m0 14h0m1-2h0m0 16h0m0 15h0m0 47h0" stroke="#85B900" stroke-width="16"/><path d="M816 846h0m0-52h0m0-76h0m1 28h0m0-38h0m0 69h0m0-18h0m0 14h0m1-2h0m0 16h0m0 15h0m0 47h0" stroke="#2F8A00" stroke-width="8"/><path d="M818 779h0m0-12h0m0-7h0m1 3h0m0 37h0m0-62h0m0-31h0m0 28h0m1 26h0m0 35h0m0 42h0m0 33h0" stroke="#85B900" stroke-width="16"/><path d="M818 779h0m0-12h0m0-7h0m1 3h0m0 37h0m0-62h0m0-31h0m0 28h0m1 26h0m0 35h0m0 42h0m0 33h0" stroke="#2F8A00" stroke-width="8"/><path d="M820 809h0m0-22h0m0 13h0m1 24h0m0 9h0m0-2h0m0-60h0m0 97h0m1-23h0m0-2h0m0-64h0m0 21h0" stroke="#85B900" stroke-width="16"/><path d="M820 809h0m0-22h0m0 13h0m1 24h0m0 9h0m0-2h0m0-60h0m0 97h0m1-23h0m0-2h0m0-64h0m0 21h0" stroke="#2F8A00" stroke-width="8"/><path d="M822 704h0m0 184h0m0-107h0m0 55h0m0 19h0m1-47h0m0-3h0m0 0h0m0 10h0m0-189h0m0 8h0m0 29h0" stroke="#85B900" stroke-width="16"/><path d="M822 704h0m0 184h0m0-107h0m0 55h0m0 19h0m1-47h0m0-3h0m0 0h0m0 10h0m0-189h0m0 8h0m0 29h0" stroke="#2F8A00" stroke-width="8"/><path d="M823 861h0m1-55h0m0 74h0m0-45h0m0-75h0m0-198h0m0 242h0m0-51h0m0 71h0m1 5h0m0-29h0m0 33h0" stroke="#85B900" stroke-width="16"/><path d="M823 861h0m1-55h0m0 74h0m0-45h0m0-75h0m0-198h0m0 242h0m0-51h0m0 71h0m1 5h0m0-29h0m0 33h0" stroke="#2F8A00" stroke-width="8"/><path d="M825 825h0m0-45h0m1-10h0m0 89h0m0-14h0m0-4h0m0-61h0m0 85h0m0-2h0m1-32h0m0-13h0m0-32h0" stroke="#85B900" stroke-width="16"/><path d="M825 825h0m0-45h0m1-10h0m0 89h0m0-14h0m0-4h0m0-61h0m0 85h0m0-2h0m1-32h0m0-13h0m0-32h0" stroke="#2F8A00" stroke-width="8"/><path d="M827 847h0m0 13h0m1-48h0m0-22h0m0-15h0m0 16h0m0 78h0m0-27h0m0-1h0m1-32h0m0-13h0m0 20h0" stroke="#85B900" stroke-width="16"/><path d="M827 847h0m0 13h0m1-48h0m0-22h0m0-15h0m0 16h0m0 78h0m0-27h0m0-1h0m1-32h0m0-13h0m0 20h0" stroke="#2F8A00" stroke-width="8"/><path d="M829 853h0m0-69h0m1-19h0m0 5h0m0-18h0m0 77h0m0 17h0m0 18h0m0-6h0m1-68h0m0 45h0m0-18h0" stroke="#85B900" stroke-width="16"/><path d="M829 853h0m0-69h0m1-19h0m0 5h0m0-18h0m0 77h0m0 17h0m0 18h0m0-6h0m1-68h0m0 45h0m0-18h0" stroke="#2F8A00" stroke-width="8"/><path d="M831 782h0m0-22h0m1-14h0m0 4h0m0 20h0m0 62h0m0-118h0m0 170h0m0-93h0m0 35h0m0 4h0m1 18h0" stroke="#85B900" stroke-width="16"/><path d="M831 782h0m0-22h0m1-14h0m0 4h0m0 20h0m0 62h0m0-118h0m0 170h0m0-93h0m0 35h0m0 4h0m1 18h0" stroke="#2F8A00" stroke-width="8"/><path d="M833 831h0m0-65h0m0 61h0m0 16h0m1-67h0m0 11h0m0-4h0m0 82h0m0 9h0m0-13h0m0-26h0m1 13h0" stroke="#85B900" stroke-width="16"/><path d="M833 831h0m0-65h0m0 61h0m0 16h0m1-67h0m0 11h0m0-4h0m0 82h0m0 9h0m0-13h0m0-26h0m1 13h0" stroke="#2F8A00" stroke-width="8"/><path d="M835 841h0m0 8h0m0-28h0m0-51h0m1-43h0m0-9h0m0-5h0m0 28h0m0 33h0m0 74h0m0-9h0m1 32h0" stroke="#85B900" stroke-width="16"/><path d="M835 841h0m0 8h0m0-28h0m0-51h0m1-43h0m0-9h0m0-5h0m0 28h0m0 33h0m0 74h0m0-9h0m1 32h0" stroke="#2F8A00" stroke-width="8"/><path d="M837 874h0m0-16h0m0-38h0m0 1h0m1-31h0m0-15h0m0 8h0m0 27h0m0-68h0m0 17h0m0 13h0m1 42h0" stroke="#85B900" stroke-width="16"/><path d="M837 874h0m0-16h0m0-38h0m0 1h0m1-31h0m0-15h0m0 8h0m0 27h0m0-68h0m0 17h0m0 13h0m1 42h0" stroke="#2F8A00" stroke-width="8"/><path d="M839 767h0m0 33h0m0-41h0m0-13h0m1-5h0m0 19h0m0 1h0m0 61h0m0 6h0m0-22h0m0 32h0m1 20h0" stroke="#85B900" stroke-width="16"/><path d="M839 767h0m0 33h0m0-41h0m0-13h0m1-5h0m0 19h0m0 1h0m0 61h0m0 6h0m0-22h0m0 32h0m1 20h0" stroke="#2F8A00" stroke-width="8"/><path d="M841 847h0m0 17h0m0-10h0m0-6h0m1-55h0m0 40h0m0 15h0m0-8h0m0 28h0m0-18h0m0 15h0m0 1h0" stroke="#85B900" stroke-width="16"/><path d="M841 847h0m0 17h0m0-10h0m0-6h0m1-55h0m0 40h0m0 15h0m0-8h0m0 28h0m0-18h0m0 15h0m0 1h0" stroke="#2F8A00" stroke-width="8"/><path d="M843 840h0m0-26h0m0 32h0m0 3h0m0 4h0m1-69h0m0 34h0m0 10h0m0-35h0m0 50h0m0 2h0m0 4h0" stroke="#85B900" stroke-width="16"/><path d="M843 840h0m0-26h0m0 32h0m0 3h0m0 4h0m1-69h0m0 34h0m0 10h0m0-35h0m0 50h0m0 2h0m0 4h0" stroke="#2F8A00" stroke-width="8"/><path d="M845 858h0m0-18h0m0-5h0m0-15h0m0 21h0m1 4h0m0-48h0m0-30h0m0-23h0m0 24h0m0-26h0m0-7h0" stroke="#85B900" stroke-width="16"/><path d="M845 858h0m0-18h0m0-5h0m0-15h0m0 21h0m1 4h0m0-48h0m0-30h0m0-23h0m0 24h0m0-26h0m0-7h0" stroke="#2F8A00" stroke-width="8"/><path d="M847 800h0m0-36h0m0 33h0m0-65h0m0 41h0m1-35h0m0 68h0m0 2h0m0 12h0m0-118h0m0 71h0m0 21h0" stroke="#85B900" stroke-width="16"/><path d="M847 800h0m0-36h0m0 33h0m0-65h0m0 41h0m1-35h0m0 68h0m0 2h0m0 12h0m0-118h0m0 71h0m0 21h0" stroke="#2F8A00" stroke-width="8"/><path d="M848 771h0m1 41h0m0-28h0m0-12h0m0-28h0m0 0h0m1 47h0m0-17h0m0 15h0m0-93h0m0-22h0m0 76h0" stroke="#85B900" stroke-width="16"/><path d="M848 771h0m1 41h0m0-28h0m0-12h0m0-28h0m0 0h0m1 47h0m0-17h0m0 15h0m0-93h0m0-22h0m0 76h0" stroke="#2F8A00" stroke-width="8"/><path d="M850 715h0m0-30h0m1 31h0m0-30h0m0 83h0m0-2h0m0-4h0m1 33h0m0-17h0m0 1h0m0 6h0m0 56h0" stroke="#85B900" stroke-width="16"/><path d="M850 715h0m0-30h0m1 31h0m0-30h0m0 83h0m0-2h0m0-4h0m1 33h0m0-17h0m0 1h0m0 6h0m0 56h0" stroke="#2F8A00" stroke-width="8"/><path d="M852 884h0m0-53h0m0-1h0m0-25h0m1-4h0m0-72h0m0 68h0m0-52h0m0-5h0m1 10h0m0 25h0m0-28h0" stroke="#85B900" stroke-width="16"/><path d="M852 884h0m0-53h0m0-1h0m0-25h0m1-4h0m0-72h0m0 68h0m0-52h0m0-5h0m1 10h0m0 25h0m0-28h0" stroke="#2F8A00" stroke-width="8"/><path d="M854 737h0m0-5h0m0-36h0m0 11h0m1 38h0m0 52h0m0-35h0m0-24h0m0 48h0m1-17h0m0 49h0m0-41h0" stroke="#85B900" stroke-width="16"/><path d="M854 737h0m0-5h0m0-36h0m0 11h0m1 38h0m0 52h0m0-35h0m0-24h0m0 48h0m1-17h0m0 49h0m0-41h0" stroke="#2F8A00" stroke-width="8"/><path d="M856 795h0m0-9h0m0 6h0m0 23h0m1-7h0m0-12h0m0-9h0m0 43h0m0 0h0m1-14h0m0-59h0m0 31h0" stroke="#85B900" stroke-width="16"/><path d="M856 795h0m0-9h0m0 6h0m0 23h0m1-7h0m0-12h0m0-9h0m0 43h0m0 0h0m1-14h0m0-59h0m0 31h0" stroke="#2F8A00" stroke-width="8"/><path d="M858 767h0m0-77h0m0 47h0m0 14h0m0-7h0m1 12h0m0 19h0m0-5h0m0-15h0m0 6h0m1 78h0m0-37h0" stroke="#85B900" stroke-width="16"/><path d="M858 767h0m0-77h0m0 47h0m0 14h0m0-7h0m1 12h0m0 19h0m0-5h0m0-15h0m0 6h0m1 78h0m0-37h0" stroke="#2F8A00" stroke-width="8"/><path d="M860 757h0m0-12h0m0-12h0m0 7h0m0-5h0m1 25h0m0 14h0m0 39h0m0-8h0m0 3h0m1 4h0m0-87h0" stroke="#85B900" stroke-width="16"/><path d="M860 757h0m0-12h0m0-12h0m0 7h0m0-5h0m1 25h0m0 14h0m0 39h0m0-8h0m0 3h0m1 4h0m0-87h0" stroke="#2F8A00" stroke-width="8"/><path d="M862 741h0m0 4h0m0-9h0m0 18h0m0-11h0m1 41h0m0 19h0m0-58h0m0 46h0m0-58h0m1 36h0m0 68h0" stroke="#85B900" stroke-width="16"/><path d="M862 741h0m0 4h0m0-9h0m0 18h0m0-11h0m1 41h0m0 19h0m0-58h0m0 46h0m0-58h0m1 36h0m0 68h0" stroke="#2F8A00" stroke-width="8"/><path d="M864 844h0m0-48h0m0 42h0m0 14h0m0-10h0m1-8h0m0 18h0m0-9h0m0-67h0m0 0h0m1 7h0m0 31h0" stroke="#85B900" stroke-width="16"/><path d="M864 844h0m0-48h0m0 42h0m0 14h0m0-10h0m1-8h0m0 18h0m0-9h0m0-67h0m0 0h0m1 7h0m0 31h0" stroke="#2F8A00" stroke-width="8"/><path d="M866 848h0m0-3h0m0 5h0m0-58h0m0-40h0m1 21h0m0 24h0m0 54h0m0 5h0m0-43h0m1 20h0m0-45h0" stroke="#85B900" stroke-width="16"/><path d="M866 848h0m0-3h0m0 5h0m0-58h0m0-40h0m1 21h0m0 24h0m0 54h0m0 5h0m0-43h0m1 20h0m0-45h0" stroke="#2F8A00" stroke-width="8"/><path d="M868 769h0m0 10h0m0-105h0m0 108h0m0 13h0m0-27h0m1 45h0m0-23h0m0-9h0m0-26h0m0 17h0m1-30h0" stroke="#85B900" stroke-width="16"/><path d="M868 769h0m0 10h0m0-105h0m0 108h0m0 13h0m0-27h0m1 45h0m0-23h0m0-9h0m0-26h0m0 17h0m1-30h0" stroke="#2F8A00" stroke-width="8"/><path d="M870 726h0m0 59h0m0 23h0m0 10h0m0-5h0m0-49h0m1-41h0m0 70h0m0 0h0m0 23h0m0-5h0m1 24h0" stroke="#85B900" stroke-width="16"/><path d="M870 726h0m0 59h0m0 23h0m0 10h0m0-5h0m0-49h0m1-41h0m0 70h0m0 0h0m0 23h0m0-5h0m1 24h0" stroke="#2F8A00" stroke-width="8"/><path d="M872 775h0m0 49h0m0-98h0m0 138h0m0-105h0m0 69h0m0 0h0m1-2h0m0-45h0m0 45h0m0-9h0m0 16h0" stroke="#85B900" stroke-width="16"/><path d="M872 775h0m0 49h0m0-98h0m0 138h0m0-105h0m0 69h0m0 0h0m1-2h0m0-45h0m0 45h0m0-9h0m0 16h0" stroke="#2F8A00" stroke-width="8"/><path d="M874 838h0m0-21h0m0-33h0m0 35h0m0-137h0m0 150h0m0-6h0m0 6h0m1-37h0m0 2h0m0 28h0m0-2h0" stroke="#85B900" stroke-width="16"/><path d="M874 838h0m0-21h0m0-33h0m0 35h0m0-137h0m0 150h0m0-6h0m0 6h0m1-37h0m0 2h0m0 28h0m0-2h0" stroke="#2F8A00" stroke-width="8"/><path d="M875 720h0m1 35h0m0-6h0m0 6h0m0 22h0m0 60h0m0-97h0m0-13h0m1 97h0m0-36h0m0 55h0m0 10h0" stroke="#85B900" stroke-width="16"/><path d="M875 720h0m1 35h0m0-6h0m0 6h0m0 22h0m0 60h0m0-97h0m0-13h0m1 97h0m0-36h0m0 55h0m0 10h0" stroke="#2F8A00" stroke-width="8"/><path d="M877 816h0m1-19h0m0 29h0m0 22h0m0-13h0m0 23h0m0-28h0m0-26h0m0 48h0m1-74h0m0 18h0m0 32h0" stroke="#85B900" stroke-width="16"/><path d="M877 816h0m1-19h0m0 29h0m0 22h0m0-13h0m0 23h0m0-28h0m0-26h0m0 48h0m1-74h0m0 18h0m0 32h0" stroke="#2F8A00" stroke-width="8"/><path d="M879 828h0m0-28h0m1 18h0m0-37h0m0-37h0m0 96h0m0 19h0m0-31h0m0-14h0m1 32h0m0-14h0m0-27h0" stroke="#85B900" stroke-width="16"/><path d="M879 828h0m0-28h0m1 18h0m0-37h0m0-37h0m0 96h0m0 19h0m0-31h0m0-14h0m1 32h0m0-14h0m0-27h0" stroke="#2F8A00" stroke-width="8"/><path d="M881 794h0m0-72h0m1 32h0m0-20h0m0 154h0m0-144h0m0-30h0m0 154h0m0-136h0m0 4h0m0-2h0m1 54h0" stroke="#85B900" stroke-width="16"/><path d="M881 794h0m0-72h0m1 32h0m0-20h0m0 154h0m0-144h0m0-30h0m0 154h0m0-136h0m0 4h0m0-2h0m1 54h0" stroke="#2F8A00" stroke-width="8"/><path d="M883 708h0m0 13h0m0-38h0m0-5h0m1 86h0m0 20h0m0 28h0m2-142h0m3 88h0m0 28h0m0-12h0m1-12h0" stroke="#85B900" stroke-width="16"/><path d="M883 708h0m0 13h0m0-38h0m0-5h0m1 86h0m0 20h0m0 28h0m2-142h0m3 88h0m0 28h0m0-12h0m1-12h0" stroke="#2F8A00" stroke-width="8"/><path d="M890 743h0m0 30h0m0-2h0m0-111h0m0 108h0m0-30h0m0-10h0m1-27h0m0 33h0m0 6h0m0-13h0m0-90h0" stroke="#85B900" stroke-width="16"/><path d="M890 743h0m0 30h0m0-2h0m0-111h0m0 108h0m0-30h0m0-10h0m1-27h0m0 33h0m0 6h0m0-13h0m0-90h0" stroke="#2F8A00" stroke-width="8"/><path d="M891 742h0m1 34h0m0 21h0m0-19h0m0 29h0m0 16h0m0-100h0m0-19h0m1 48h0m0 17h0m0 27h0m0 27h0" stroke="#85B900" stroke-width="16"/><path d="M891 742h0m1 34h0m0 21h0m0-19h0m0 29h0m0 16h0m0-100h0m0-19h0m1 48h0m0 17h0m0 27h0m0 27h0" stroke="#2F8A00" stroke-width="8"/><path d="M893 762h0m1 15h0m0 38h0m0-60h0m0 65h0m0-101h0m0 4h0m0 103h0m1-28h0m0-6h0m0 5h0m0-24h0" stroke="#85B900" stroke-width="16"/><path d="M893 762h0m1 15h0m0 38h0m0-60h0m0 65h0m0-101h0m0 4h0m0 103h0m1-28h0m0-6h0m0 5h0m0-24h0" stroke="#2F8A00" stroke-width="8"/><path d="M895 803h0m1-12h0m0-40h0m0 79h0m0-3h0m0-42h0m0-82h0m0 7h0m1 38h0m0-44h0m0 3h0m0 16h0" stroke="#85B900" stroke-width="16"/><path d="M895 803h0m1-12h0m0-40h0m0 79h0m0-3h0m0-42h0m0-82h0m0 7h0m1 38h0m0-44h0m0 3h0m0 16h0" stroke="#2F8A00" stroke-width="8"/><path d="M897 739h0m1 67h0m0-82h0m0-17h0m0 99h0m0 32h0m0-112h0m0 19h0m0 23h0m1 38h0m0-50h0m0 30h0" stroke="#85B900" stroke-width="16"/><path d="M897 739h0m1 67h0m0-82h0m0-17h0m0 99h0m0 32h0m0-112h0m0 19h0m0 23h0m1 38h0m0-50h0m0 30h0" stroke="#2F8A00" stroke-width="8"/><path d="M899 821h0m0-18h0m1 10h0m0-51h0m0 38h0m0-21h0m0-22h0m0-1h0m0-49h0m1-20h0m0 29h0m0 19h0" stroke="#85B900" stroke-width="16"/><path d="M899 821h0m0-18h0m1 10h0m0-51h0m0 38h0m0-21h0m0-22h0m0-1h0m0-49h0m1-20h0m0 29h0m0 19h0" stroke="#2F8A00" stroke-width="8"/><path d="M901 740h0m0-38h0m1 26h0m0-1h0m0-27h0m0 61h0m0-97h0m0 171h0m0-11h0m0-44h0m1-70h0m0 55h0" stroke="#85B900" stroke-width="16"/><path d="M901 740h0m0-38h0m1 26h0m0-1h0m0-27h0m0 61h0m0-97h0m0 171h0m0-11h0m0-44h0m1-70h0m0 55h0" stroke="#2F8A00" stroke-width="8"/><path d="M903 782h0m0 36h0m0 28h0m1-24h0m0-7h0m0 26h0m0-41h0m0-92h0m0 122h0m0-12h0m0-30h0m1 5h0" stroke="#85B900" stroke-width="16"/><path d="M903 782h0m0 36h0m0 28h0m1-24h0m0-7h0m0 26h0m0-41h0m0-92h0m0 122h0m0-12h0m0-30h0m1 5h0" stroke="#2F8A00" stroke-width="8"/><path d="M905 816h0m0-11h0m0 4h0m0 15h0m1 9h0m0-25h0m0 0h0m0-69h0m0-7h0m0 3h0m0 5h0m1 8h0" stroke="#85B900" stroke-width="16"/><path d="M905 816h0m0-11h0m0 4h0m0 15h0m1 9h0m0-25h0m0 0h0m0-69h0m0-7h0m0 3h0m0 5h0m1 8h0" stroke="#2F8A00" stroke-width="8"/><path d="M907 739h0m0 31h0m0 47h0m0 29h0m1-10h0m0 0h0m0 7h0m0 13h0m0-22h0m0 7h0m0-62h0m1-28h0" stroke="#85B900" stroke-width="16"/><path d="M907 739h0m0 31h0m0 47h0m0 29h0m1-10h0m0 0h0m0 7h0m0 13h0m0-22h0m0 7h0m0-62h0m1-28h0" stroke="#2F8A00" stroke-width="8"/><path d="M909 739h0m0 36h0m0 2h0m0 11h0m1-28h0m0 11h0m0 74h0m0-76h0m0 99h0m0-123h0m0 51h0m0-35h0" stroke="#85B900" stroke-width="16"/><path d="M909 739h0m0 36h0m0 2h0m0 11h0m1-28h0m0 11h0m0 74h0m0-76h0m0 99h0m0-123h0m0 51h0m0-35h0" stroke="#2F8A00" stroke-width="8"/><path d="M911 776h0m0 14h0m0-46h0m0 6h0m0 13h0m1 27h0m0 27h0m0-7h0m0-7h0m0-6h0m0 3h0m0 28h0" stroke="#85B900" stroke-width="16"/><path d="M911 776h0m0 14h0m0-46h0m0 6h0m0 13h0m1 27h0m0 27h0m0-7h0m0-7h0m0-6h0m0 3h0m0 28h0" stroke="#2F8A00" stroke-width="8"/><path d="M913 787h0m0-73h0m0 37h0m0 17h0m0 85h0m1-52h0m0 19h0m0 15h0m0-48h0m0-2h0m0-30h0m0 36h0" stroke="#85B900" stroke-width="16"/><path d="M913 787h0m0-73h0m0 37h0m0 17h0m0 85h0m1-52h0m0 19h0m0 15h0m0-48h0m0-2h0m0-30h0m0 36h0" stroke="#2F8A00" stroke-width="8"/><path d="M915 792h0m0 15h0m0 15h0m0 1h0m0 23h0m1 2h0m0-23h0m0-41h0m0 22h0m0-98h0m0 40h0m0-2h0" stroke="#85B900" stroke-width="16"/><path d="M915 792h0m0 15h0m0 15h0m0 1h0m0 23h0m1 2h0m0-23h0m0-41h0m0 22h0m0-98h0m0 40h0m0-2h0" stroke="#2F8A00" stroke-width="8"/><path d="M916 799h0m1 30h0m0 31h0m0-20h0m0-20h0m0 19h0m1 13h0m0-57h0m0 38h0m0-6h0m0 27h0m0-10h0" stroke="#85B900" stroke-width="16"/><path d="M916 799h0m1 30h0m0 31h0m0-20h0m0-20h0m0 19h0m1 13h0m0-57h0m0 38h0m0-6h0m0 27h0m0-10h0" stroke="#2F8A00" stroke-width="8"/><path d="M918 813h0m1-30h0m0-9h0m0-11h0m0-30h0m0 19h0m1-6h0m0 63h0m0 23h0m0-34h0m0-11h0m0 21h0" stroke="#85B900" stroke-width="16"/><path d="M918 813h0m1-30h0m0-9h0m0-11h0m0-30h0m0 19h0m1-6h0m0 63h0m0 23h0m0-34h0m0-11h0m0 21h0" stroke="#2F8A00" stroke-width="8"/><path d="M920 842h0m1 8h0m0 1h0m0-13h0m0 5h0m0-58h0m1 26h0m0-9h0m0-15h0m0-3h0m0-24h0m0-1h0" stroke="#85B900" stroke-width="16"/><path d="M920 842h0m1 8h0m0 1h0m0-13h0m0 5h0m0-58h0m1 26h0m0-9h0m0-15h0m0-3h0m0-24h0m0-1h0" stroke="#2F8A00" stroke-width="8"/><path d="M922 825h0m1-33h0m0-46h0m0 36h0m0-12h0m0-13h0m1 67h0m0-14h0m0 14h0m0-3h0m0 43h0m0-13h0" stroke="#85B900" stroke-width="16"/><path d="M922 825h0m1-33h0m0-46h0m0 36h0m0-12h0m0-13h0m1 67h0m0-14h0m0 14h0m0-3h0m0 43h0m0-13h0" stroke="#2F8A00" stroke-width="8"/><path d="M924 849h0m0-67h0m1 61h0m0-32h0m0-22h0m0 32h0m0-14h0m1-21h0m0-13h0m0-5h0m0 54h0m0-124h0" stroke="#85B900" stroke-width="16"/><path d="M924 849h0m0-67h0m1 61h0m0-32h0m0-22h0m0 32h0m0-14h0m1-21h0m0-13h0m0-5h0m0 54h0m0-124h0" stroke="#2F8A00" stroke-width="8"/><path d="M926 823h0m0 23h0m0 13h0m1-4h0m0-36h0m0-6h0m0 8h0m0-63h0m1 8h0m0-29h0m0 66h0m0-70h0" stroke="#85B900" stroke-width="16"/><path d="M926 823h0m0 23h0m0 13h0m1-4h0m0-36h0m0-6h0m0 8h0m0-63h0m1 8h0m0-29h0m0 66h0m0-70h0" stroke="#2F8A00" stroke-width="8"/><path d="M928 617h0m0 123h0m0 27h0m0 17h0m1-36h0m0 45h0m0-5h0m0 50h0m0-12h0m1 11h0m0-83h0m0 20h0" stroke="#85B900" stroke-width="16"/><path d="M928 617h0m0 123h0m0 27h0m0 17h0m1-36h0m0 45h0m0-5h0m0 50h0m0-12h0m1 11h0m0-83h0m0 20h0" stroke="#2F8A00" stroke-width="8"/><path d="M930 783h0m0-41h0m0-47h0m0 48h0m1 69h0m0-37h0m0 39h0m0 12h0m0-39h0m1-31h0m0 93h0m0-5h0" stroke="#85B900" stroke-width="16"/><path d="M930 783h0m0-41h0m0-47h0m0 48h0m1 69h0m0-37h0m0 39h0m0 12h0m0-39h0m1-31h0m0 93h0m0-5h0" stroke="#2F8A00" stroke-width="8"/><path d="M932 838h0m0-160h0m0 133h0m0-72h0m0 27h0m1 0h0m0 21h0m0-3h0m0-64h0m0 6h0m1 23h0m0-3h0" stroke="#85B900" stroke-width="16"/><path d="M932 838h0m0-160h0m0 133h0m0-72h0m0 27h0m1 0h0m0 21h0m0-3h0m0-64h0m0 6h0m1 23h0m0-3h0" stroke="#2F8A00" stroke-width="8"/><path d="M934 771h0m0 17h0m0 70h0m0-77h0m0-19h0m0 70h0m1-7h0m0-3h0m0 3h0m0-6h0m0-89h0m1 4h0" stroke="#85B900" stroke-width="16"/><path d="M934 771h0m0 17h0m0 70h0m0-77h0m0-19h0m0 70h0m1-7h0m0-3h0m0 3h0m0-6h0m0-89h0m1 4h0" stroke="#2F8A00" stroke-width="8"/><path d="M936 762h0m0 31h0m0-1h0m0-49h0m0 4h0m0 31h0m1 6h0m0 67h0m0-7h0m0-5h0m0-20h0m1-92h0" stroke="#85B900" stroke-width="16"/><path d="M936 762h0m0 31h0m0-1h0m0-49h0m0 4h0m0 31h0m1 6h0m0 67h0m0-7h0m0-5h0m0-20h0m1-92h0" stroke="#2F8A00" stroke-width="8"/><path d="M938 781h0m0-27h0m0 64h0m0-29h0m0-15h0m0 46h0m1-28h0m0-62h0m0 33h0m0 28h0m0 15h0m1-15h0" stroke="#85B900" stroke-width="16"/><path d="M938 781h0m0-27h0m0 64h0m0-29h0m0-15h0m0 46h0m1-28h0m0-62h0m0 33h0m0 28h0m0 15h0m1-15h0" stroke="#2F8A00" stroke-width="8"/><path d="M940 802h0m0-43h0m0 9h0m0-78h0m0 115h0m0-102h0m0 40h0m1 62h0m0 35h0m0-24h0m0 6h0m0-15h0" stroke="#85B900" stroke-width="16"/><path d="M940 802h0m0-43h0m0 9h0m0-78h0m0 115h0m0-102h0m0 40h0m1 62h0m0 35h0m0-24h0m0 6h0m0-15h0" stroke="#2F8A00" stroke-width="8"/><path d="M942 759h0m0 26h0m0 35h0m0 12h0m0-86h0m0 8h0m0 8h0m1 12h0m0-43h0m0 92h0m0-73h0m0-17h0" stroke="#85B900" stroke-width="16"/><path d="M942 759h0m0 26h0m0 35h0m0 12h0m0-86h0m0 8h0m0 8h0m1 12h0m0-43h0m0 92h0m0-73h0m0-17h0" stroke="#2F8A00" stroke-width="8"/><path d="M944 816h0m0-1h0m0-42h0m0-22h0m0 41h0m0-28h0m0 39h0m1 12h0m0 3h0m0 13h0m0-37h0m0-56h0" stroke="#85B900" stroke-width="16"/><path d="M944 816h0m0-1h0m0-42h0m0-22h0m0 41h0m0-28h0m0 39h0m1 12h0m0 3h0m0 13h0m0-37h0m0-56h0" stroke="#2F8A00" stroke-width="8"/><path d="M946 717h0m0 17h0m0-4h0m0 77h0m0 47h0m0-92h0m0 66h0m0-19h0m1-8h0m0-71h0m0 15h0m0 70h0" stroke="#85B900" stroke-width="16"/><path d="M946 717h0m0 17h0m0-4h0m0 77h0m0 47h0m0-92h0m0 66h0m0-19h0m1-8h0m0-71h0m0 15h0m0 70h0" stroke="#2F8A00" stroke-width="8"/><path d="M947 748h0m1 64h0m0 15h0m0 8h0m0-51h0m0 50h0m0-57h0m0 55h0m1 9h0m0-76h0m0 61h0m0 21h0" stroke="#85B900" stroke-width="16"/><path d="M947 748h0m1 64h0m0 15h0m0 8h0m0-51h0m0 50h0m0-57h0m0 55h0m1 9h0m0-76h0m0 61h0m0 21h0" stroke="#2F8A00" stroke-width="8"/><path d="M949 831h0m1-74h0m0 3h0m0-1h0m0 43h0m0-44h0m0-20h0m0 24h0m1 23h0m0-56h0m0 32h0m0-11h0" stroke="#85B900" stroke-width="16"/><path d="M949 831h0m1-74h0m0 3h0m0-1h0m0 43h0m0-44h0m0-20h0m0 24h0m1 23h0m0-56h0m0 32h0m0-11h0" stroke="#2F8A00" stroke-width="8"/><path d="M951 748h0m1 38h0m0 26h0m0 7h0m0 24h0m0-7h0m0-14h0m0-2h0m1 21h0m0-2h0m0-7h0m0 7h0" stroke="#85B900" stroke-width="16"/><path d="M951 748h0m1 38h0m0 26h0m0 7h0m0 24h0m0-7h0m0-14h0m0-2h0m1 21h0m0-2h0m0-7h0m0 7h0" stroke="#2F8A00" stroke-width="8"/><path d="M953 771h0m1 44h0m0 14h0m0-24h0m0-62h0m0-21h0m0-25h0m0 33h0m1 13h0m0-10h0m0 50h0m0-35h0" stroke="#85B900" stroke-width="16"/><path d="M953 771h0m1 44h0m0 14h0m0-24h0m0-62h0m0-21h0m0-25h0m0 33h0m1 13h0m0-10h0m0 50h0m0-35h0" stroke="#2F8A00" stroke-width="8"/><path d="M955 894h0m0-92h0m1 21h0m0 3h0m0-56h0m0-30h0m0 114h0m0-96h0m0 52h0m0-50h0m1 19h0m0 36h0" stroke="#85B900" stroke-width="16"/><path d="M955 894h0m0-92h0m1 21h0m0 3h0m0-56h0m0-30h0m0 114h0m0-96h0m0 52h0m0-50h0m1 19h0m0 36h0" stroke="#2F8A00" stroke-width="8"/><path d="M957 742h0m0 84h0m0-21h0m1-28h0m0 12h0m0-8h0m0-32h0m0-6h0m0 7h0m0-17h0m1 54h0m0 24h0" stroke="#85B900" stroke-width="16"/><path d="M957 742h0m0 84h0m0-21h0m1-28h0m0 12h0m0-8h0m0-32h0m0-6h0m0 7h0m0-17h0m1 54h0m0 24h0" stroke="#2F8A00" stroke-width="8"/><path d="M959 826h0m0-76h0m0-2h0m1 35h0m0-2h0m0-52h0m0 28h0m0 78h0m0 6h0m0-15h0m1-60h0m0 49h0" stroke="#85B900" stroke-width="16"/><path d="M959 826h0m0-76h0m0-2h0m1 35h0m0-2h0m0-52h0m0 28h0m0 78h0m0 6h0m0-15h0m1-60h0m0 49h0" stroke="#2F8A00" stroke-width="8"/><path d="M961 824h0m0-25h0m0-17h0m1 33h0m0-14h0m0-32h0m0-31h0m0 5h0m0 6h0m0-3h0m1 109h0m0-33h0" stroke="#85B900" stroke-width="16"/><path d="M961 824h0m0-25h0m0-17h0m1 33h0m0-14h0m0-32h0m0-31h0m0 5h0m0 6h0m0-3h0m1 109h0m0-33h0" stroke="#2F8A00" stroke-width="8"/><path d="M963 747h0m0-7h0m0 50h0m1 53h0m0-72h0m0-15h0m0 37h0m0-95h0m0 64h0m0 34h0m0-17h0m1 45h0" stroke="#85B900" stroke-width="16"/><path d="M963 747h0m0-7h0m0 50h0m1 53h0m0-72h0m0-15h0m0 37h0m0-95h0m0 64h0m0 34h0m0-17h0m1 45h0" stroke="#2F8A00" stroke-width="8"/><path d="M965 816h0m0 28h0m0-57h0m0 40h0m1-27h0m0 32h0m0-34h0m0 26h0m0 15h0m0-6h0m0-54h0m1-22h0" stroke="#85B900" stroke-width="16"/><path d="M965 816h0m0 28h0m0-57h0m0 40h0m1-27h0m0 32h0m0-34h0m0 26h0m0 15h0m0-6h0m0-54h0m1-22h0" stroke="#2F8A00" stroke-width="8"/><path d="M967 751h0m0 7h0m0 51h0m0-53h0m1 7h0m0 12h0m0 7h0m0-31h0m0 65h0m0-12h0m0-37h0m1 5h0" stroke="#85B900" stroke-width="16"/><path d="M967 751h0m0 7h0m0 51h0m0-53h0m1 7h0m0 12h0m0 7h0m0-31h0m0 65h0m0-12h0m0-37h0m1 5h0" stroke="#2F8A00" stroke-width="8"/><path d="M969 823h0m0 6h0m0 14h0m0 51h0m0-55h0m1-28h0m0-63h0m0-11h0m0 15h0m0 106h0m0-132h0m0 10h0" stroke="#85B900" stroke-width="16"/><path d="M969 823h0m0 6h0m0 14h0m0 51h0m0-55h0m1-28h0m0-63h0m0-11h0m0 15h0m0 106h0m0-132h0m0 10h0" stroke="#2F8A00" stroke-width="8"/><path d="M970 732h0m1 62h0m0-64h0m0 98h0m0 7h0m0-30h0m1-2h0m0 39h0m0 0h0m0-23h0m0 75h0m0-107h0" stroke="#85B900" stroke-width="16"/><path d="M970 732h0m1 62h0m0-64h0m0 98h0m0 7h0m0-30h0m1-2h0m0 39h0m0 0h0m0-23h0m0 75h0m0-107h0" stroke="#2F8A00" stroke-width="8"/><path d="M972 738h0m0 28h0m1 44h0m0-10h0m0-3h0m0-35h0m0 16h0m1 26h0m0-54h0m0 44h0m0-12h0m0 24h0" stroke="#85B900" stroke-width="16"/><path d="M972 738h0m0 28h0m1 44h0m0-10h0m0-3h0m0-35h0m0 16h0m1 26h0m0-54h0m0 44h0m0-12h0m0 24h0" stroke="#2F8A00" stroke-width="8"/><path d="M974 801h0m0 10h0m1 1h0m0 17h0m0-40h0m0-3h0m0-41h0m1 20h0m0 53h0m0-20h0m0 32h0m0-30h0" stroke="#85B900" stroke-width="16"/><path d="M974 801h0m0 10h0m1 1h0m0 17h0m0-40h0m0-3h0m0-41h0m1 20h0m0 53h0m0-20h0m0 32h0m0-30h0" stroke="#2F8A00" stroke-width="8"/><path d="M976 811h0m0 27h0m1-6h0m0-1h0m0 14h0m0-2h0m0 2h0m1-19h0m0-41h0m0 33h0m0-51h0m0 91h0" stroke="#85B900" stroke-width="16"/><path d="M976 811h0m0 27h0m1-6h0m0-1h0m0 14h0m0-2h0m0 2h0m1-19h0m0-41h0m0 33h0m0-51h0m0 91h0" stroke="#2F8A00" stroke-width="8"/><path d="M978 822h0m0-32h0m0 13h0m1 23h0m0-55h0m0 69h0m0-14h0m0-19h0m1-47h0m0-34h0m0-23h0m0 6h0" stroke="#85B900" stroke-width="16"/><path d="M978 822h0m0-32h0m0 13h0m1 23h0m0-55h0m0 69h0m0-14h0m0-19h0m1-47h0m0-34h0m0-23h0m0 6h0" stroke="#2F8A00" stroke-width="8"/><path d="M980 749h0m0-1h0m0 63h0m1-46h0m0-35h0m0 35h0m0 0h0m0-34h0m1 74h0m0 5h0m0-62h0m0-1h0" stroke="#85B900" stroke-width="16"/><path d="M980 749h0m0-1h0m0 63h0m1-46h0m0-35h0m0 35h0m0 0h0m0-34h0m1 74h0m0 5h0m0-62h0m0-1h0" stroke="#2F8A00" stroke-width="8"/><path d="M982 735h0m0 64h0m0-24h0m1-18h0m0 26h0m0 54h0m0 10h0m0-12h0m1-24h0m0-32h0m0 42h0m0-53h0" stroke="#85B900" stroke-width="16"/><path d="M982 735h0m0 64h0m0-24h0m1-18h0m0 26h0m0 54h0m0 10h0m0-12h0m1-24h0m0-32h0m0 42h0m0-53h0" stroke="#2F8A00" stroke-width="8"/><path d="M984 692h0m0 166h0m0-260h0m0 62h0m0 115h0m0 34h0m0-34h0m1-61h0m0 11h0m0 1h0m0-2h0m0 5h0" stroke="#85B900" stroke-width="16"/><path d="M984 692h0m0 166h0m0-260h0m0 62h0m0 115h0m0 34h0m0-34h0m1-61h0m0 11h0m0 1h0m0-2h0m0 5h0" stroke="#2F8A00" stroke-width="8"/><path d="M986 777h0m0-44h0m0-9h0m0 14h0m0 54h0m0-33h0m0 35h0m1 34h0m0-41h0m0-8h0m0 37h0m0-2h0" stroke="#85B900" stroke-width="16"/><path d="M986 777h0m0-44h0m0-9h0m0 14h0m0 54h0m0-33h0m0 35h0m1 34h0m0-41h0m0-8h0m0 37h0m0-2h0" stroke="#2F8A00" stroke-width="8"/><path d="M988 780h0m0-2h0m0-6h0m0 10h0m0 14h0m0 3h0m0-28h0m1 7h0m0 16h0m0-10h0m0 53h0m0-30h0" stroke="#85B900" stroke-width="16"/><path d="M988 780h0m0-2h0m0-6h0m0 10h0m0 14h0m0 3h0m0-28h0m1 7h0m0 16h0m0-10h0m0 53h0m0-30h0" stroke="#2F8A00" stroke-width="8"/><path d="M990 727h0m0 61h0m0-19h0m0 22h0m0 103h0m0-115h0m0 39h0m0-32h0m1 22h0m0 33h0m0-2h0m0-43h0" stroke="#85B900" stroke-width="16"/><path d="M990 727h0m0 61h0m0-19h0m0 22h0m0 103h0m0-115h0m0 39h0m0-32h0m1 22h0m0 33h0m0-2h0m0-43h0" stroke="#2F8A00" stroke-width="8"/><path d="M991 841h0m1 4h0m0-14h0m0-69h0m0 20h0m0-1h0m0 21h0m0 0h0m1 38h0m0-10h0m0-28h0m0-22h0" stroke="#85B900" stroke-width="16"/><path d="M991 841h0m1 4h0m0-14h0m0-69h0m0 20h0m0-1h0m0 21h0m0 0h0m1 38h0m0-10h0m0-28h0m0-22h0" stroke="#2F8A00" stroke-width="8"/><path d="M993 795h0m1 16h0m0-57h0m0-19h0m0 52h0m0-9h0m0 43h0m0-19h0m1-32h0m0 25h0m0 8h0m0 50h0" stroke="#85B900" stroke-width="16"/><path d="M993 795h0m1 16h0m0-57h0m0-19h0m0 52h0m0-9h0m0 43h0m0-19h0m1-32h0m0 25h0m0 8h0m0 50h0" stroke="#2F8A00" stroke-width="8"/><path d="M995 855h0m1-14h0m0-8h0m0-1h0m0-1h0m0-137h0m0 142h0m0-17h0m0-26h0m1-54h0m0 7h0m0 55h0" stroke="#85B900" stroke-width="16"/><path d="M995 855h0m1-14h0m0-8h0m0-1h0m0-1h0m0-137h0m0 142h0m0-17h0m0-26h0m1-54h0m0 7h0m0 55h0" stroke="#2F8A00" stroke-width="8"/><path d="M997 804h0m4-46h0m0-10h0m0 11h0m1-8h0m0 83h0m0-31h0m0 32h0m0-30h0m0-16h0m0 32h0m1-17h0" stroke="#85B900" stroke-width="16"/><path d="M997 804h0m4-46h0m0-10h0m0 11h0m1-8h0m0 83h0m0-31h0m0 32h0m0-30h0m0-16h0m0 32h0m1-17h0" stroke="#2F8A00" stroke-width="8"/><path d="M1003 846h0m0-4h0m0-61h0m0 46h0m1-72h0m0 6h0m0-1h0m0 13h0m0-57h0m0 50h0m0 1h0m0 3h0" stroke="#85B900" stroke-width="16"/><path d="M1003 846h0m0-4h0m0-61h0m0 46h0m1-72h0m0 6h0m0-1h0m0 13h0m0-57h0m0 50h0m0 1h0m0 3h0" stroke="#2F8A00" stroke-width="8"/><path d="M1005 802h0m0-27h0m0 0h0m0 66h0m0 11h0m1 0h0m0-10h0m0-27h0m0-3h0m0-43h0m0 45h0m0-29h0" stroke="#85B900" stroke-width="16"/><path d="M1005 802h0m0-27h0m0 0h0m0 66h0m0 11h0m1 0h0m0-10h0m0-27h0m0-3h0m0-43h0m0 45h0m0-29h0" stroke="#2F8A00" stroke-width="8"/><path d="M1007 746h0m0 40h0m0 46h0m0 7h0m0 0h0m1-3h0m0 10h0m0 4h0m0-48h0m0 16h0m0-11h0m0 34h0" stroke="#85B900" stroke-width="16"/><path d="M1007 746h0m0 40h0m0 46h0m0 7h0m0 0h0m1-3h0m0 10h0m0 4h0m0-48h0m0 16h0m0-11h0m0 34h0" stroke="#2F8A00" stroke-width="8"/><path d="M1009 822h0m0-22h0m0-45h0m0 14h0m0 20h0m0 65h0m1-22h0m0-17h0m0 17h0m0 18h0m0-37h0m0 20h0" stroke="#85B900" stroke-width="16"/><path d="M1009 822h0m0-22h0m0-45h0m0 14h0m0 20h0m0 65h0m1-22h0m0-17h0m0 17h0m0 18h0m0-37h0m0 20h0" stroke="#2F8A00" stroke-width="8"/><path d="M1010 820h0m1-61h0m0-7h0m0 14h0m0-16h0m0 32h0m1-20h0m0 47h0m0-19h0m0 37h0m0 11h0m0 2h0" stroke="#85B900" stroke-width="16"/><path d="M1010 820h0m1-61h0m0-7h0m0 14h0m0-16h0m0 32h0m1-20h0m0 47h0m0-19h0m0 37h0m0 11h0m0 2h0" stroke="#2F8A00" stroke-width="8"/><path d="M1012 843h0m1 8h0m0 0h0m0-43h0m0-22h0m0 33h0m1 14h0m0-30h0m0 12h0m0-7h0m0-16h0m0-17h0" stroke="#85B900" stroke-width="16"/><path d="M1012 843h0m1 8h0m0 0h0m0-43h0m0-22h0m0 33h0m1 14h0m0-30h0m0 12h0m0-7h0m0-16h0m0-17h0" stroke="#2F8A00" stroke-width="8"/><path d="M1014 782h0m1 42h0m0-69h0m0 49h0m0 1h0m0-57h0m1 23h0m0 1h0m0-23h0m0 33h0m0-8h0m0 44h0" stroke="#85B900" stroke-width="16"/><path d="M1014 782h0m1 42h0m0-69h0m0 49h0m0 1h0m0-57h0m1 23h0m0 1h0m0-23h0m0 33h0m0-8h0m0 44h0" stroke="#2F8A00" stroke-width="8"/><path d="M1016 836h0m1-5h0m0-4h0m0-45h0m0 1h0m0 38h0m0 27h0m1-5h0m0-64h0m0 12h0m0-3h0m0 51h0" stroke="#85B900" stroke-width="16"/><path d="M1016 836h0m1-5h0m0-4h0m0-45h0m0 1h0m0 38h0m0 27h0m1-5h0m0-64h0m0 12h0m0-3h0m0 51h0" stroke="#2F8A00" stroke-width="8"/><path d="M1018 834h0m0 14h0m1-68h0m0-48h0m0 20h0m0-22h0m0-26h0m1 20h0m0 7h0m0 19h0m0 69h0m0-121h0" stroke="#85B900" stroke-width="16"/><path d="M1018 834h0m0 14h0m1-68h0m0-48h0m0 20h0m0-22h0m0-26h0m1 20h0m0 7h0m0 19h0m0 69h0m0-121h0" stroke="#2F8A00" stroke-width="8"/><path d="M1020 770h0m0-19h0m0-24h0m1 18h0m0 57h0m0 29h0m0-95h0m0 34h0m1-5h0m0-11h0m0-22h0m0 3h0" stroke="#85B900" stroke-width="16"/><path d="M1020 770h0m0-19h0m0-24h0m1 18h0m0 57h0m0 29h0m0-95h0m0 34h0m1-5h0m0-11h0m0-22h0m0 3h0" stroke="#2F8A00" stroke-width="8"/><path d="M1022 763h0m0 38h0m0 25h0m1-46h0m0 4h0m0-33h0m0 52h0m0-3h0m1-56h0m0 59h0m0 43h0m0-80h0" stroke="#85B900" stroke-width="16"/><path d="M1022 763h0m0 38h0m0 25h0m1-46h0m0 4h0m0-33h0m0 52h0m0-3h0m1-56h0m0 59h0m0 43h0m0-80h0" stroke="#2F8A00" stroke-width="8"/><path d="M1024 839h0m0-1h0m0-18h0m1-90h0m0-13h0m0 0h0m0 46h0m0 5h0m1 18h0m0 7h0m0 19h0m0-23h0" stroke="#85B900" stroke-width="16"/><path d="M1024 839h0m0-1h0m0-18h0m1-90h0m0-13h0m0 0h0m0 46h0m0 5h0m1 18h0m0 7h0m0 19h0m0-23h0" stroke="#2F8A00" stroke-width="8"/><path d="M1026 839h0m0-102h0m0-7h0m1 6h0m0-6h0m0 72h0m0-25h0m0-51h0m1 4h0m0 4h0m0-4h0m0 1h0" stroke="#85B900" stroke-width="16"/><path d="M1026 839h0m0-102h0m0-7h0m1 6h0m0-6h0m0 72h0m0-25h0m0-51h0m1 4h0m0 4h0m0-4h0m0 1h0" stroke="#2F8A00" stroke-width="8"/><path d="M1028 868h0m0-134h0m0 46h0m0-3h0m1 21h0m0-7h0m0 47h0m0-14h0m0 0h0m1 22h0m0 9h0m0 5h0" stroke="#85B900" stroke-width="16"/><path d="M1028 868h0m0-134h0m0 46h0m0-3h0m1 21h0m0-7h0m0 47h0m0-14h0m0 0h0m1 22h0m0 9h0m0 5h0" stroke="#2F8A00" stroke-width="8"/><path d="M1030 825h0m0-71h0m0 100h0m0-66h0m1-30h0m0-31h0m0 27h0m0 12h0m0-62h0m1 64h0m0-13h0m0 63h0" stroke="#85B900" stroke-width="16"/><path d="M1030 825h0m0-71h0m0 100h0m0-66h0m1-30h0m0-31h0m0 27h0m0 12h0m0-62h0m1 64h0m0-13h0m0 63h0" stroke="#2F8A00" stroke-width="8"/><path d="M1032 840h0m0-150h0m0 135h0m0 18h0m0-47h0m1-1h0m0-10h0m0 9h0m0 22h0m0-2h0m1-29h0m0 31h0" stroke="#85B900" stroke-width="16"/><path d="M1032 840h0m0-150h0m0 135h0m0 18h0m0-47h0m1-1h0m0-10h0m0 9h0m0 22h0m0-2h0m1-29h0m0 31h0" stroke="#2F8A00" stroke-width="8"/><path d="M1034 790h0m0 34h0m0-50h0m0-37h0m0 103h0m1-70h0m0 43h0m0 35h0m0-1h0m0-5h0m1-18h0m0-15h0" stroke="#85B900" stroke-width="16"/><path d="M1034 790h0m0 34h0m0-50h0m0-37h0m0 103h0m1-70h0m0 43h0m0 35h0m0-1h0m0-5h0m1-18h0m0-15h0" stroke="#2F8A00" stroke-width="8"/><path d="M1036 766h0m0 32h0m0 25h0m0-68h0m0-47h0m1 132h0m0-20h0m0-57h0m0-26h0m0 50h0m1 48h0m0-53h0" stroke="#85B900" stroke-width="16"/><path d="M1036 766h0m0 32h0m0 25h0m0-68h0m0-47h0m1 132h0m0-20h0m0-57h0m0-26h0m0 50h0m1 48h0m0-53h0" stroke="#2F8A00" stroke-width="8"/><path d="M1038 771h0m0 32h0m0-27h0m0 19h0m0 15h0m1 18h0m0 13h0m0-11h0m0-38h0m0-51h0m1 14h0m0-20h0" stroke="#85B900" stroke-width="16"/><path d="M1038 771h0m0 32h0m0-27h0m0 19h0m0 15h0m1 18h0m0 13h0m0-11h0m0-38h0m0-51h0m1 14h0m0-20h0" stroke="#2F8A00" stroke-width="8"/><path d="M1040 740h0m0 9h0m0 109h0m0-98h0m0 50h0m0 4h0m1-5h0m0 35h0m0-12h0m0 20h0m0-14h0m1-4h0" stroke="#85B900" stroke-width="16"/><path d="M1040 740h0m0 9h0m0 109h0m0-98h0m0 50h0m0 4h0m1-5h0m0 35h0m0-12h0m0 20h0m0-14h0m1-4h0" stroke="#2F8A00" stroke-width="8"/><path d="M1042 780h0m0 8h0m0-35h0m0 69h0m0-4h0m0 26h0m1-3h0m0-51h0m0-66h0m0 14h0m0 1h0m1 4h0" stroke="#85B900" stroke-width="16"/><path d="M1042 780h0m0 8h0m0-35h0m0 69h0m0-4h0m0 26h0m1-3h0m0-51h0m0-66h0m0 14h0m0 1h0m1 4h0" stroke="#2F8A00" stroke-width="8"/><path d="M1044 773h0m0 12h0m0-8h0m0 20h0m0-30h0m0-22h0m1 0h0m0 61h0m0 18h0m0-25h0m0 15h0m1 15h0" stroke="#85B900" stroke-width="16"/><path d="M1044 773h0m0 12h0m0-8h0m0 20h0m0-30h0m0-22h0m1 0h0m0 61h0m0 18h0m0-25h0m0 15h0m1 15h0" stroke="#2F8A00" stroke-width="8"/><path d="M1046 774h0m0 69h0m0-25h0m0-196h0m0 31h0m0 11h0m0 101h0m0 15h0m0 15h0m1 44h0m0 11h0m0-24h0" stroke="#85B900" stroke-width="16"/><path d="M1046 774h0m0 69h0m0-25h0m0-196h0m0 31h0m0 11h0m0 101h0m0 15h0m0 15h0m1 44h0m0 11h0m0-24h0" stroke="#2F8A00" stroke-width="8"/><path d="M1047 794h0m0-13h0m1-7h0m0-27h0m0 13h0m0 64h0m0-126h0m0 143h0m0-25h0m0-58h0m1 42h0m0 39h0" stroke="#85B900" stroke-width="16"/><path d="M1047 794h0m0-13h0m1-7h0m0-27h0m0 13h0m0 64h0m0-126h0m0 143h0m0-25h0m0-58h0m1 42h0m0 39h0" stroke="#2F8A00" stroke-width="8"/><path d="M1049 769h0m0 33h0m0 47h0m1 4h0m0-3h0m0-14h0m0-37h0m0 65h0m0-53h0m0 32h0m0 3h0m1 2h0" stroke="#85B900" stroke-width="16"/><path d="M1049 769h0m0 33h0m0 47h0m1 4h0m0-3h0m0-14h0m0-37h0m0 65h0m0-53h0m0 32h0m0 3h0m1 2h0" stroke="#2F8A00" stroke-width="8"/><path d="M1051 832h0m0-21h0m0 35h0m0-11h0m1 10h0m0-30h0m0-52h0m0 19h0m0 16h0m0-93h0m0 7h0m1 34h0" stroke="#85B900" stroke-width="16"/><path d="M1051 832h0m0-21h0m0 35h0m0-11h0m1 10h0m0-30h0m0-52h0m0 19h0m0 16h0m0-93h0m0 7h0m1 34h0" stroke="#2F8A00" stroke-width="8"/><path d="M1053 752h0m0-20h0m0 15h0m0 36h0m1 53h0m0-89h0m0 17h0m0-14h0m0 93h0m0-5h0m0-58h0m1 33h0" stroke="#85B900" stroke-width="16"/><path d="M1053 752h0m0-20h0m0 15h0m0 36h0m1 53h0m0-89h0m0 17h0m0-14h0m0 93h0m0-5h0m0-58h0m1 33h0" stroke="#2F8A00" stroke-width="8"/><path d="M1055 833h0m0 12h0m0 4h0m0-27h0m1-65h0m0 24h0m0 0h0m0-15h0m0-41h0m0 38h0m0 33h0m1 40h0" stroke="#85B900" stroke-width="16"/><path d="M1055 833h0m0 12h0m0 4h0m0-27h0m1-65h0m0 24h0m0 0h0m0-15h0m0-41h0m0 38h0m0 33h0m1 40h0" stroke="#2F8A00" stroke-width="8"/><path d="M1057 833h0m0-22h0m0-49h0m0-4h0m1-20h0m0 9h0m0-11h0m0 60h0m0-11h0m0 19h0m0-7h0m1-18h0" stroke="#85B900" stroke-width="16"/><path d="M1057 833h0m0-22h0m0-49h0m0-4h0m1-20h0m0 9h0m0-11h0m0 60h0m0-11h0m0 19h0m0-7h0m1-18h0" stroke="#2F8A00" stroke-width="8"/><path d="M1059 723h0m0 7h0m0 4h0m0 61h0m1-50h0m0 45h0m0 24h0m0-13h0m0-10h0m0 32h0m0-5h0m1 38h0" stroke="#85B900" stroke-width="16"/><path d="M1059 723h0m0 7h0m0 4h0m0 61h0m1-50h0m0 45h0m0 24h0m0-13h0m0-10h0m0 32h0m0-5h0m1 38h0" stroke="#2F8A00" stroke-width="8"/><path d="M1061 756h0m0-21h0m0 94h0m0-1h0m1-91h0m0-41h0m0-2h0m0-2h0m0-2h0m0 6h0m0 25h0m1-10h0" stroke="#85B900" stroke-width="16"/><path d="M1061 756h0m0-21h0m0 94h0m0-1h0m1-91h0m0-41h0m0-2h0m0-2h0m0-2h0m0 6h0m0 25h0m1-10h0" stroke="#2F8A00" stroke-width="8"/><path d="M1063 728h0m0 3h0m0 50h0m0-48h0m1 13h0m0 19h0m0 41h0m0-59h0m0-59h0m0 70h0m0-33h0m0 44h0" stroke="#85B900" stroke-width="16"/><path d="M1063 728h0m0 3h0m0 50h0m0-48h0m1 13h0m0 19h0m0 41h0m0-59h0m0-59h0m0 70h0m0-33h0m0 44h0" stroke="#2F8A00" stroke-width="8"/><path d="M1065 794h0m0 36h0m0-29h0m0 41h0m0-34h0m1-83h0m0-7h0m0 14h0m0 64h0m0-126h0m0-62h0m0 153h0" stroke="#85B900" stroke-width="16"/><path d="M1065 794h0m0 36h0m0-29h0m0 41h0m0-34h0m1-83h0m0-7h0m0 14h0m0 64h0m0-126h0m0-62h0m0 153h0" stroke="#2F8A00" stroke-width="8"/><path d="M1066 740h0m0 40h0m1-56h0m0 59h0m0 18h0m0-59h0m0 8h0m1-19h0m0-15h0m0 29h0m0-3h0m0 115h0" stroke="#85B900" stroke-width="16"/><path d="M1066 740h0m0 40h0m1-56h0m0 59h0m0 18h0m0-59h0m0 8h0m1-19h0m0-15h0m0 29h0m0-3h0m0 115h0" stroke="#2F8A00" stroke-width="8"/><path d="M1068 795h0m0-6h0m0-72h0m1 26h0m0 45h0m0 9h0m0-71h0m0-5h0m1-15h0m0 10h0m0-3h0m0 55h0" stroke="#85B900" stroke-width="16"/><path d="M1068 795h0m0-6h0m0-72h0m1 26h0m0 45h0m0 9h0m0-71h0m0-5h0m1-15h0m0 10h0m0-3h0m0 55h0" stroke="#2F8A00" stroke-width="8"/><path d="M1070 787h0m0 63h0m0-8h0m1-78h0m0-7h0m0 75h0m0-33h0m0-4h0m1 27h0m0 19h0m0 3h0m0-17h0" stroke="#85B900" stroke-width="16"/><path d="M1070 787h0m0 63h0m0-8h0m1-78h0m0-7h0m0 75h0m0-33h0m0-4h0m1 27h0m0 19h0m0 3h0m0-17h0" stroke="#2F8A00" stroke-width="8"/><path d="M1072 757h0m0-17h0m0 40h0m1-63h0m0 22h0m0 80h0m0-70h0m0 44h0m1-45h0m0-20h0m0 34h0m0 34h0" stroke="#85B900" stroke-width="16"/><path d="M1072 757h0m0-17h0m0 40h0m1-63h0m0 22h0m0 80h0m0-70h0m0 44h0m1-45h0m0-20h0m0 34h0m0 34h0" stroke="#2F8A00" stroke-width="8"/><path d="M1074 783h0m0 16h0m0 18h0m1 27h0m0-48h0m0-52h0m0 82h0m0 7h0m1-45h0m0 21h0m0 32h0m0-28h0" stroke="#85B900" stroke-width="16"/><path d="M1074 783h0m0 16h0m0 18h0m1 27h0m0-48h0m0-52h0m0 82h0m0 7h0m1-45h0m0 21h0m0 32h0m0-28h0" stroke="#2F8A00" stroke-width="8"/><path d="M1076 813h0m0 16h0m0-44h0m1-51h0m0 52h0m0-5h0m0 7h0m0-40h0m1 39h0m0 34h0m0-14h0m0-9h0" stroke="#85B900" stroke-width="16"/><path d="M1076 813h0m0 16h0m0-44h0m1-51h0m0 52h0m0-5h0m0 7h0m0-40h0m1 39h0m0 34h0m0-14h0m0-9h0" stroke="#2F8A00" stroke-width="8"/><path d="M1078 674h0m0 74h0m0-14h0m0-21h0m1 20h0m0 23h0m0-17h0m0-23h0m0 140h0m0-127h0m1 45h0m0 55h0" stroke="#85B900" stroke-width="16"/><path d="M1078 674h0m0 74h0m0-14h0m0-21h0m1 20h0m0 23h0m0-17h0m0-23h0m0 140h0m0-127h0m1 45h0m0 55h0" stroke="#2F8A00" stroke-width="8"/><path d="M1080 740h0m0 21h0m0 64h0m0-49h0m0-15h0m1 49h0m0 0h0m0-47h0m0-29h0m0 1h0m1 17h0m0 24h0" stroke="#85B900" stroke-width="16"/><path d="M1080 740h0m0 21h0m0 64h0m0-49h0m0-15h0m1 49h0m0 0h0m0-47h0m0-29h0m0 1h0m1 17h0m0 24h0" stroke="#2F8A00" stroke-width="8"/><path d="M1082 821h0m0-49h0m0-82h0m0 10h0m0 20h0m0 20h0m0 20h0m0 46h0m0 17h0m0-18h0m1 32h0m0-10h0" stroke="#85B900" stroke-width="16"/><path d="M1082 821h0m0-49h0m0-82h0m0 10h0m0 20h0m0 20h0m0 20h0m0 46h0m0 17h0m0-18h0m1 32h0m0-10h0" stroke="#2F8A00" stroke-width="8"/><path d="M1083 841h0m0-27h0m0-19h0m1 3h0m0 64h0m0 2h0m0 0h0m0-82h0m0 106h0m0-52h0m0 7h0m0-28h0" stroke="#85B900" stroke-width="16"/><path d="M1083 841h0m0-27h0m0-19h0m1 3h0m0 64h0m0 2h0m0 0h0m0-82h0m0 106h0m0-52h0m0 7h0m0-28h0" stroke="#2F8A00" stroke-width="8"/><path d="M1085 832h0m0 3h0m0-11h0m0 20h0m0-30h0m1-10h0m0 25h0m0-18h0m0-8h0m0 35h0m0 17h0m0 6h0" stroke="#85B900" stroke-width="16"/><path d="M1085 832h0m0 3h0m0-11h0m0 20h0m0-30h0m1-10h0m0 25h0m0-18h0m0-8h0m0 35h0m0 17h0m0 6h0" stroke="#2F8A00" stroke-width="8"/><path d="M1087 854h0m0-32h0m0 19h0m0 0h0m0-17h0m1 11h0m0 15h0m0-3h0m0 17h0m0 3h0m0-36h0m0 17h0" stroke="#85B900" stroke-width="16"/><path d="M1087 854h0m0-32h0m0 19h0m0 0h0m0-17h0m1 11h0m0 15h0m0-3h0m0 17h0m0 3h0m0-36h0m0 17h0" stroke="#2F8A00" stroke-width="8"/><path d="M1089 836h0m0 36h0m0-66h0m0 6h0m0 23h0m1 28h0m0-31h0m0 5h0m0 14h0m0-17h0m0 21h0m0-21h0" stroke="#85B900" stroke-width="16"/><path d="M1089 836h0m0 36h0m0-66h0m0 6h0m0 23h0m1 28h0m0-31h0m0 5h0m0 14h0m0-17h0m0 21h0m0-21h0" stroke="#2F8A00" stroke-width="8"/><path d="M1091 822h0m0 37h0m0-25h0m0-4h0m0 48h0m1 3h0m0-13h0m0-1h0m0-25h0m0-52h0m0 30h0m0 0h0" stroke="#85B900" stroke-width="16"/><path d="M1091 822h0m0 37h0m0-25h0m0-4h0m0 48h0m1 3h0m0-13h0m0-1h0m0-25h0m0-52h0m0 30h0m0 0h0" stroke="#2F8A00" stroke-width="8"/><path d="M1092 848h0m1 11h0m0-25h0m0-33h0m0 38h0m0-14h0m1 27h0m0 14h0m0 12h0m0-21h0m0-28h0m0-8h0" stroke="#85B900" stroke-width="16"/><path d="M1092 848h0m1 11h0m0-25h0m0-33h0m0 38h0m0-14h0m1 27h0m0 14h0m0 12h0m0-21h0m0-28h0m0-8h0" stroke="#2F8A00" stroke-width="8"/><path d="M1094 839h0m1 9h0m0-27h0m0 20h0m0-19h0m0 7h0m1 0h0m0 18h0m0 36h0m0-18h0m0-41h0m0-13h0" stroke="#85B900" stroke-width="16"/><path d="M1094 839h0m1 9h0m0-27h0m0 20h0m0-19h0m0 7h0m1 0h0m0 18h0m0 36h0m0-18h0m0-41h0m0-13h0" stroke="#2F8A00" stroke-width="8"/><path d="M1096 821h0m1 13h0m0 18h0m0-27h0m0-15h0m0 8h0m1 44h0m0 10h0m0 6h0m0-2h0m0 3h0m0-18h0" stroke="#85B900" stroke-width="16"/><path d="M1096 821h0m1 13h0m0 18h0m0-27h0m0-15h0m0 8h0m1 44h0m0 10h0m0 6h0m0-2h0m0 3h0m0-18h0" stroke="#2F8A00" stroke-width="8"/><path d="M1098 875h0m1 2h0m0 1h0m0-17h0m0-16h0m0-15h0m1 38h0m0-42h0m0-3h0m0 13h0m0-50h0m0-51h0" stroke="#85B900" stroke-width="16"/><path d="M1098 875h0m1 2h0m0 1h0m0-17h0m0-16h0m0-15h0m1 38h0m0-42h0m0-3h0m0 13h0m0-50h0m0-51h0" stroke="#2F8A00" stroke-width="8"/><path d="M1100 756h0m0 8h0m0 48h0m0 14h0m0 33h0m1 7h0m0-37h0m0 6h0m5 14h0m0 5h0m0 20h0m0 0h0" stroke="#85B900" stroke-width="16"/><path d="M1100 756h0m0 8h0m0 48h0m0 14h0m0 33h0m1 7h0m0-37h0m0 6h0m5 14h0m0 5h0m0 20h0m0 0h0" stroke="#2F8A00" stroke-width="8"/><path d="M1106 872h0m0-2h0m1-15h0m0 13h0m0 15h0m0-28h0m0 26h0m1-58h0m0-18h0m0 21h0m0-4h0m0-36h0" stroke="#85B900" stroke-width="16"/><path d="M1106 872h0m0-2h0m1-15h0m0 13h0m0 15h0m0-28h0m0 26h0m1-58h0m0-18h0m0 21h0m0-4h0m0-36h0" stroke="#2F8A00" stroke-width="8"/><path d="M1108 877h0m0-1h0m0-47h0m1 7h0m0 14h0m0 21h0m0-23h0m0-36h0m1-7h0m0 29h0m0 32h0m0-49h0" stroke="#85B900" stroke-width="16"/><path d="M1108 877h0m0-1h0m0-47h0m1 7h0m0 14h0m0 21h0m0-23h0m0-36h0m1-7h0m0 29h0m0 32h0m0-49h0" stroke="#2F8A00" stroke-width="8"/><path d="M1110 835h0m0-12h0m0 11h0m1 23h0m0-11h0m0-3h0m0-37h0m0 10h0m1 47h0m0-22h0m0 12h0m0 8h0" stroke="#85B900" stroke-width="16"/><path d="M1110 835h0m0-12h0m0 11h0m1 23h0m0-11h0m0-3h0m0-37h0m0 10h0m1 47h0m0-22h0m0 12h0m0 8h0" stroke="#2F8A00" stroke-width="8"/><path d="M1112 885h0m0-21h0m0 9h0m1-15h0m0-6h0m0-3h0m0-39h0m0 26h0m1-14h0m0 13h0m0 26h0m0-12h0" stroke="#85B900" stroke-width="16"/><path d="M1112 885h0m0-21h0m0 9h0m1-15h0m0-6h0m0-3h0m0-39h0m0 26h0m1-14h0m0 13h0m0 26h0m0-12h0" stroke="#2F8A00" stroke-width="8"/><path d="M1114 813h0m0-6h0m0 25h0m1 34h0m0 16h0m0-32h0m0 38h0m0-36h0m0 0h0m1-21h0m0 0h0m0-16h0" stroke="#85B900" stroke-width="16"/><path d="M1114 813h0m0-6h0m0 25h0m1 34h0m0 16h0m0-32h0m0 38h0m0-36h0m0 0h0m1-21h0m0 0h0m0-16h0" stroke="#2F8A00" stroke-width="8"/><path d="M1116 828h0m0-5h0m0 2h0m0 40h0m1-33h0m0 6h0m0-14h0m0-1h0m0 5h0m1 6h0m0 9h0m0-19h0" stroke="#85B900" stroke-width="16"/><path d="M1116 828h0m0-5h0m0 2h0m0 40h0m1-33h0m0 6h0m0-14h0m0-1h0m0 5h0m1 6h0m0 9h0m0-19h0" stroke="#2F8A00" stroke-width="8"/><path d="M1118 846h0m0-28h0m0-11h0m0-1h0m1 38h0m0 25h0m0-22h0m0 31h0m0-5h0m1-45h0m0 16h0m0-25h0" stroke="#85B900" stroke-width="16"/><path d="M1118 846h0m0-28h0m0-11h0m0-1h0m1 38h0m0 25h0m0-22h0m0 31h0m0-5h0m1-45h0m0 16h0m0-25h0" stroke="#2F8A00" stroke-width="8"/><path d="M1120 807h0m0-20h0m0 19h0m0 19h0m1-14h0m0 24h0m0 13h0m0 10h0m0 8h0m1-28h0m0 11h0m0 8h0" stroke="#85B900" stroke-width="16"/><path d="M1120 807h0m0-20h0m0 19h0m0 19h0m1-14h0m0 24h0m0 13h0m0 10h0m0 8h0m1-28h0m0 11h0m0 8h0" stroke="#2F8A00" stroke-width="8"/><path d="M1122 836h0m0-6h0m0-21h0m0 14h0m1-14h0m0 19h0m0 7h0m0-2h0m0 18h0m1-12h0m0 33h0m0-3h0" stroke="#85B900" stroke-width="16"/><path d="M1122 836h0m0-6h0m0-21h0m0 14h0m1-14h0m0 19h0m0 7h0m0-2h0m0 18h0m1-12h0m0 33h0m0-3h0" stroke="#2F8A00" stroke-width="8"/><path d="M1124 832h0m0-10h0m0 16h0m0 34h0m1-22h0m0 23h0m0-7h0m0 9h0m0-20h0m1-26h0m0-5h0m0 7h0" stroke="#85B900" stroke-width="16"/><path d="M1124 832h0m0-10h0m0 16h0m0 34h0m1-22h0m0 23h0m0-7h0m0 9h0m0-20h0m1-26h0m0-5h0m0 7h0" stroke="#2F8A00" stroke-width="8"/><path d="M1126 813h0m0-9h0m0 25h0m0 29h0m1-9h0m0-15h0m0 27h0m0-48h0m0 26h0m1 6h0m0 13h0m0 1h0" stroke="#85B900" stroke-width="16"/><path d="M1126 813h0m0-9h0m0 25h0m0 29h0m1-9h0m0-15h0m0 27h0m0-48h0m0 26h0m1 6h0m0 13h0m0 1h0" stroke="#2F8A00" stroke-width="8"/><path d="M1128 869h0m0 0h0m0-10h0m0 8h0m1-31h0m0 6h0m0 8h0m0-39h0m0-27h0m0 98h0m0-50h0m1 14h0" stroke="#85B900" stroke-width="16"/><path d="M1128 869h0m0 0h0m0-10h0m0 8h0m1-31h0m0 6h0m0 8h0m0-39h0m0-27h0m0 98h0m0-50h0m1 14h0" stroke="#2F8A00" stroke-width="8"/><path d="M1130 862h0m0-8h0m0 15h0m0 2h0m0-1h0m0-68h0m1 9h0m0 15h0m0 5h0m0-19h0m0 30h0m1-12h0" stroke="#85B900" stroke-width="16"/><path d="M1130 862h0m0-8h0m0 15h0m0 2h0m0-1h0m0-68h0m1 9h0m0 15h0m0 5h0m0-19h0m0 30h0m1-12h0" stroke="#2F8A00" stroke-width="8"/><path d="M1132 829h0m0 11h0m0 21h0m0-17h0m0-25h0m0 15h0m1 6h0m0-34h0m0 0h0m0 11h0m0-17h0m1 31h0" stroke="#85B900" stroke-width="16"/><path d="M1132 829h0m0 11h0m0 21h0m0-17h0m0-25h0m0 15h0m1 6h0m0-34h0m0 0h0m0 11h0m0-17h0m1 31h0" stroke="#2F8A00" stroke-width="8"/><path d="M1134 810h0m0 25h0m0-21h0m0 1h0m0-4h0m0 2h0m1-17h0m0 6h0m0 22h0m0 14h0m0 27h0m1-43h0" stroke="#85B900" stroke-width="16"/><path d="M1134 810h0m0 25h0m0-21h0m0 1h0m0-4h0m0 2h0m1-17h0m0 6h0m0 22h0m0 14h0m0 27h0m1-43h0" stroke="#2F8A00" stroke-width="8"/><path d="M1136 854h0m0-5h0m0-32h0m0-12h0m0 2h0m0 9h0m1-1h0m0 35h0m0-8h0m0-17h0m0-35h0m0 23h0" stroke="#85B900" stroke-width="16"/><path d="M1136 854h0m0-5h0m0-32h0m0-12h0m0 2h0m0 9h0m1-1h0m0 35h0m0-8h0m0-17h0m0-35h0m0 23h0" stroke="#2F8A00" stroke-width="8"/><path d="M1138 806h0m0 6h0m0 4h0m0-6h0m0 13h0m0-9h0m0-1h0m1 26h0m0 14h0m0-14h0m0 19h0m0-13h0" stroke="#85B900" stroke-width="16"/><path d="M1138 806h0m0 6h0m0 4h0m0-6h0m0 13h0m0-9h0m0-1h0m1 26h0m0 14h0m0-14h0m0 19h0m0-13h0" stroke="#2F8A00" stroke-width="8"/><path d="M1140 856h0m0-6h0m0-15h0m0-2h0m0 31h0m0-39h0m0 6h0m0-1h0m1-3h0m0-14h0m0 14h0m0 18h0" stroke="#85B900" stroke-width="16"/><path d="M1140 856h0m0-6h0m0-15h0m0-2h0m0 31h0m0-39h0m0 6h0m0-1h0m1-3h0m0-14h0m0 14h0m0 18h0" stroke="#2F8A00" stroke-width="8"/><path d="M1141 821h0m1 4h0m0 18h0m0 9h0m0-22h0m0 30h0m0-16h0m0 6h0m1-1h0m0 15h0m0-11h0m0 6h0" stroke="#85B900" stroke-width="16"/><path d="M1141 821h0m1 4h0m0 18h0m0 9h0m0-22h0m0 30h0m0-16h0m0 6h0m1-1h0m0 15h0m0-11h0m0 6h0" stroke="#2F8A00" stroke-width="8"/><path d="M1143 857h0m1-22h0m0-1h0m0-15h0m0 9h0m0 5h0m0-27h0m0 17h0m1 9h0m0 18h0m0-5h0m0-20h0" stroke="#85B900" stroke-width="16"/><path d="M1143 857h0m1-22h0m0-1h0m0-15h0m0 9h0m0 5h0m0-27h0m0 17h0m1 9h0m0 18h0m0-5h0m0-20h0" stroke="#2F8A00" stroke-width="8"/><path d="M1145 841h0m1 12h0m0-42h0m0 26h0m0 9h0m0-13h0m0-17h0m0 0h0m1 26h0m0 0h0m0 9h0m0-14h0" stroke="#85B900" stroke-width="16"/><path d="M1145 841h0m1 12h0m0-42h0m0 26h0m0 9h0m0-13h0m0-17h0m0 0h0m1 26h0m0 0h0m0 9h0m0-14h0" stroke="#2F8A00" stroke-width="8"/><path d="M1147 812h0m1-3h0m0 44h0m0 4h0m0 0h0m0-1h0m0-8h0m0-9h0m1-9h0m0 8h0m0-5h0m0 1h0" stroke="#85B900" stroke-width="16"/><path d="M1147 812h0m1-3h0m0 44h0m0 4h0m0 0h0m0-1h0m0-8h0m0-9h0m1-9h0m0 8h0m0-5h0m0 1h0" stroke="#2F8A00" stroke-width="8"/><path d="M1149 841h0m1 7h0m0 1h0m0-2h0m0 2h0m0-57h0m0 66h0m0 4h0m0 3h0m1-14h0m0 0h0m0-5h0" stroke="#85B900" stroke-width="16"/><path d="M1149 841h0m1 7h0m0 1h0m0-2h0m0 2h0m0-57h0m0 66h0m0 4h0m0 3h0m1-14h0m0 0h0m0-5h0" stroke="#2F8A00" stroke-width="8"/><path d="M1151 862h0m0 4h0m1-4h0m0 6h0m0-1h0m0 1h0m0-18h0m0 5h0m0-2h0m0-14h0m1 20h0m0 0h0" stroke="#85B900" stroke-width="16"/><path d="M1151 862h0m0 4h0m1-4h0m0 6h0m0-1h0m0 1h0m0-18h0m0 5h0m0-2h0m0-14h0m1 20h0m0 0h0" stroke="#2F8A00" stroke-width="8"/><path d="M1153 825h0m0-11h0m0 3h0m1 30h0m0 3h0m0 9h0m0-12h0m0 14h0m0-12h0m0 8h0m1-13h0m0-11h0" stroke="#85B900" stroke-width="16"/><path d="M1153 825h0m0-11h0m0 3h0m1 30h0m0 3h0m0 9h0m0-12h0m0 14h0m0-12h0m0 8h0m1-13h0m0-11h0" stroke="#2F8A00" stroke-width="8"/><path d="M1155 842h0m0-25h0m0 7h0m1 15h0m0-25h0m4 45h0m0 8h0m0-11h0m0-17h0m0-7h0m0-8h0m1-19h0" stroke="#85B900" stroke-width="16"/><path d="M1155 842h0m0-25h0m0 7h0m1 15h0m0-25h0m4 45h0m0 8h0m0-11h0m0-17h0m0-7h0m0-8h0m1-19h0" stroke="#2F8A00" stroke-width="8"/><path d="M1161 818h0m0 4h0m0-1h0m0 28h0m1 27h0m0-92h0m0 71h0m0 6h0m0-34h0m0 30h0m0-9h0m0-36h0" stroke="#85B900" stroke-width="16"/><path d="M1161 818h0m0 4h0m0-1h0m0 28h0m1 27h0m0-92h0m0 71h0m0 6h0m0-34h0m0 30h0m0-9h0m0-36h0" stroke="#2F8A00" stroke-width="8"/><path d="M1163 805h0m0 25h0m0-11h0m0 6h0m0 48h0m1-23h0m0 8h0m0-63h0m0-7h0m0 94h0m0-74h0m0 11h0" stroke="#85B900" stroke-width="16"/><path d="M1163 805h0m0 25h0m0-11h0m0 6h0m0 48h0m1-23h0m0 8h0m0-63h0m0-7h0m0 94h0m0-74h0m0 11h0" stroke="#2F8A00" stroke-width="8"/><path d="M1164 863h0m1-20h0m0-39h0m0 29h0m0-26h0m0 6h0m1 47h0m0-27h0m0 6h0m0-24h0m0 39h0m0 14h0" stroke="#85B900" stroke-width="16"/><path d="M1164 863h0m1-20h0m0-39h0m0 29h0m0-26h0m0 6h0m1 47h0m0-27h0m0 6h0m0-24h0m0 39h0m0 14h0" stroke="#2F8A00" stroke-width="8"/><path d="M1166 823h0m1 1h0m0-4h0m0 24h0m0 21h0m0-4h0m1 7h0m0-1h0m0-2h0m0-11h0m0-21h0m0 15h0" stroke="#85B900" stroke-width="16"/><path d="M1166 823h0m1 1h0m0-4h0m0 24h0m0 21h0m0-4h0m1 7h0m0-1h0m0-2h0m0-11h0m0-21h0m0 15h0" stroke="#2F8A00" stroke-width="8"/><path d="M1168 829h0m1 16h0m0-16h0m0 2h0m0 27h0m0 12h0m1-8h0m0-9h0m0-2h0m0 10h0m0-67h0m0 43h0" stroke="#85B900" stroke-width="16"/><path d="M1168 829h0m1 16h0m0-16h0m0 2h0m0 27h0m0 12h0m1-8h0m0-9h0m0-2h0m0 10h0m0-67h0m0 43h0" stroke="#2F8A00" stroke-width="8"/><path d="M1170 876h0m0-7h0m1-7h0m0 5h0m0-1h0m0-8h0m0-15h0m1-31h0m0-5h0m0 9h0m0-5h0m0 71h0" stroke="#85B900" stroke-width="16"/><path d="M1170 876h0m0-7h0m1-7h0m0 5h0m0-1h0m0-8h0m0-15h0m1-31h0m0-5h0m0 9h0m0-5h0m0 71h0" stroke="#2F8A00" stroke-width="8"/><path d="M1172 872h0m0-60h0m0 56h0m1-4h0m0-18h0m0-2h0m0-10h0m0-13h0m1-29h0m0 3h0m0-6h0m0 13h0" stroke="#85B900" stroke-width="16"/><path d="M1172 872h0m0-60h0m0 56h0m1-4h0m0-18h0m0-2h0m0-10h0m0-13h0m1-29h0m0 3h0m0-6h0m0 13h0" stroke="#2F8A00" stroke-width="8"/><path d="M1174 799h0m0-6h0m0 6h0m1-2h0m0 20h0m0-7h0m0-22h0m0 16h0m1-21h0m0-20h0m0-3h0m0 27h0" stroke="#85B900" stroke-width="16"/><path d="M1174 799h0m0-6h0m0 6h0m1-2h0m0 20h0m0-7h0m0-22h0m0 16h0m1-21h0m0-20h0m0-3h0m0 27h0" stroke="#2F8A00" stroke-width="8"/><path d="M1176 777h0m0-4h0m0 68h0m1-19h0m0 9h0m0-30h0m0 47h0m0 14h0m1-28h0m0-46h0m0-33h0m0 22h0" stroke="#85B900" stroke-width="16"/><path d="M1176 777h0m0-4h0m0 68h0m1-19h0m0 9h0m0-30h0m0 47h0m0 14h0m1-28h0m0-46h0m0-33h0m0 22h0" stroke="#2F8A00" stroke-width="8"/><path d="M1178 742h0m0 26h0m0-19h0m0 27h0m1 7h0m0 25h0m0-36h0m0-10h0m0 12h0m1 62h0m0 2h0m0-22h0" stroke="#85B900" stroke-width="16"/><path d="M1178 742h0m0 26h0m0-19h0m0 27h0m1 7h0m0 25h0m0-36h0m0-10h0m0 12h0m1 62h0m0 2h0m0-22h0" stroke="#2F8A00" stroke-width="8"/><path d="M1180 838h0m0 12h0m0-56h0m0 62h0m1 3h0m0-13h0m0-3h0m0-60h0m0 51h0m1 31h0m0-10h0m0-7h0" stroke="#85B900" stroke-width="16"/><path d="M1180 838h0m0 12h0m0-56h0m0 62h0m1 3h0m0-13h0m0-3h0m0-60h0m0 51h0m1 31h0m0-10h0m0-7h0" stroke="#2F8A00" stroke-width="8"/><path d="M1182 829h0m0 39h0m0-47h0m0-44h0m0 14h0m1 39h0m0-21h0m0 30h0m0-65h0m0-10h0m1 1h0m0 0h0" stroke="#85B900" stroke-width="16"/><path d="M1182 829h0m0 39h0m0-47h0m0-44h0m0 14h0m1 39h0m0-21h0m0 30h0m0-65h0m0-10h0m1 1h0m0 0h0" stroke="#2F8A00" stroke-width="8"/><path d="M1184 818h0m0-50h0m0-53h0m0 99h0m0-39h0m0 8h0m1-61h0m0-6h0m0 28h0m0 42h0m0 22h0m1-2h0" stroke="#85B900" stroke-width="16"/><path d="M1184 818h0m0-50h0m0-53h0m0 99h0m0-39h0m0 8h0m1-61h0m0-6h0m0 28h0m0 42h0m0 22h0m1-2h0" stroke="#2F8A00" stroke-width="8"/><path d="M1186 837h0m0-2h0m0 10h0m0-64h0m0 67h0m0-28h0m1-50h0m0-10h0m0 51h0m0-2h0m0-7h0m1 43h0" stroke="#85B900" stroke-width="16"/><path d="M1186 837h0m0-2h0m0 10h0m0-64h0m0 67h0m0-28h0m1-50h0m0-10h0m0 51h0m0-2h0m0-7h0m1 43h0" stroke="#2F8A00" stroke-width="8"/><path d="M1188 854h0m0-4h0m0-43h0m0 26h0m0-26h0m0 7h0m1-14h0m0-52h0m0 6h0m0 6h0m0-23h0m1-7h0" stroke="#85B900" stroke-width="16"/><path d="M1188 854h0m0-4h0m0-43h0m0 26h0m0-26h0m0 7h0m1-14h0m0-52h0m0 6h0m0 6h0m0-23h0m1-7h0" stroke="#2F8A00" stroke-width="8"/><path d="M1190 805h0m0-8h0m0 56h0m0-2h0m0-27h0m0-36h0m1 58h0m0-47h0m0 23h0m0-26h0m0-29h0m1-2h0" stroke="#85B900" stroke-width="16"/><path d="M1190 805h0m0-8h0m0 56h0m0-2h0m0-27h0m0-36h0m1 58h0m0-47h0m0 23h0m0-26h0m0-29h0m1-2h0" stroke="#2F8A00" stroke-width="8"/><path d="M1192 763h0m0 71h0m0-37h0m0-21h0m0-46h0m0 15h0m1-24h0m0 4h0m0-7h0m0 1h0m0 39h0m1 21h0" stroke="#85B900" stroke-width="16"/><path d="M1192 763h0m0 71h0m0-37h0m0-21h0m0-46h0m0 15h0m1-24h0m0 4h0m0-7h0m0 1h0m0 39h0m1 21h0" stroke="#2F8A00" stroke-width="8"/><path d="M1194 748h0m0 4h0m0 63h0m0-16h0m0-43h0m0 20h0m1-28h0m0 7h0m0 19h0m0 8h0m0-20h0m1 77h0" stroke="#85B900" stroke-width="16"/><path d="M1194 748h0m0 4h0m0 63h0m0-16h0m0-43h0m0 20h0m1-28h0m0 7h0m0 19h0m0 8h0m0-20h0m1 77h0" stroke="#2F8A00" stroke-width="8"/><path d="M1196 857h0m0-2h0m0 7h0m0-143h0m0 134h0m0-9h0m0-39h0m1-22h0m0 25h0m0-16h0m0-34h0m0-4h0" stroke="#85B900" stroke-width="16"/><path d="M1196 857h0m0-2h0m0 7h0m0-143h0m0 134h0m0-9h0m0-39h0m1-22h0m0 25h0m0-16h0m0-34h0m0-4h0" stroke="#2F8A00" stroke-width="8"/><path d="M1198 755h0m0-32h0m0-1h0m0 33h0m0 112h0m0-147h0m0 27h0m0 55h0m1-27h0m0 33h0m0 5h0m0-28h0" stroke="#85B900" stroke-width="16"/><path d="M1198 755h0m0-32h0m0-1h0m0 33h0m0 112h0m0-147h0m0 27h0m0 55h0m1-27h0m0 33h0m0 5h0m0-28h0" stroke="#2F8A00" stroke-width="8"/><path d="M1199 747h0m1 2h0m0 20h0m0 9h0m0 3h0m0 51h0m0 6h0m0-22h0m1 14h0m0-44h0m0-53h0m0 10h0" stroke="#85B900" stroke-width="16"/><path d="M1199 747h0m1 2h0m0 20h0m0 9h0m0 3h0m0 51h0m0 6h0m0-22h0m1 14h0m0-44h0m0-53h0m0 10h0" stroke="#2F8A00" stroke-width="8"/><path d="M1201 783h0m1 21h0m0 10h0m0 12h0m0-30h0m0 51h0m0-31h0m0-16h0m1 16h0m0-49h0m0 58h0m0 31h0" stroke="#85B900" stroke-width="16"/><path d="M1201 783h0m1 21h0m0 10h0m0 12h0m0-30h0m0 51h0m0-31h0m0-16h0m1 16h0m0-49h0m0 58h0m0 31h0" stroke="#2F8A00" stroke-width="8"/><path d="M1203 848h0m1-39h0m0 47h0m0-38h0m0-7h0m0-2h0m0 40h0m0-71h0m1 63h0m0 13h0m0-10h0m0-71h0" stroke="#85B900" stroke-width="16"/><path d="M1203 848h0m1-39h0m0 47h0m0-38h0m0-7h0m0-2h0m0 40h0m0-71h0m1 63h0m0 13h0m0-10h0m0-71h0" stroke="#2F8A00" stroke-width="8"/><path d="M1205 840h0m1-96h0m0-2h0m0 78h0m0 21h0m0-31h0m0-29h0m0-35h0m1 45h0m0-34h0m0 11h0m0 44h0" stroke="#85B900" stroke-width="16"/><path d="M1205 840h0m1-96h0m0-2h0m0 78h0m0 21h0m0-31h0m0-29h0m0-35h0m1 45h0m0-34h0m0 11h0m0 44h0" stroke="#2F8A00" stroke-width="8"/><path d="M1207 786h0m1 0h0m0 58h0m0-80h0m0 17h0m0-72h0m0 139h0m0-24h0m0-28h0m1 16h0m0-62h0m0 11h0" stroke="#85B900" stroke-width="16"/><path d="M1207 786h0m1 0h0m0 58h0m0-80h0m0 17h0m0-72h0m0 139h0m0-24h0m0-28h0m1 16h0m0-62h0m0 11h0" stroke="#2F8A00" stroke-width="8"/><path d="M1209 794h0m0-11h0m1 70h0m0-87h0m0 30h0m0 14h0m0 15h0m0-56h0m0 79h0m1-8h0m0 0h0m0-12h0" stroke="#85B900" stroke-width="16"/><path d="M1209 794h0m0-11h0m1 70h0m0-87h0m0 30h0m0 14h0m0 15h0m0-56h0m0 79h0m1-8h0m0 0h0m0-12h0" stroke="#2F8A00" stroke-width="8"/><path d="M1211 801h0m0-6h0m1-10h0m0 10h0m0 59h0m0 4h0m0-43h0m0-13h0m0 6h0m1-17h0m0 33h0m0 9h0" stroke="#85B900" stroke-width="16"/><path d="M1211 801h0m0-6h0m1-10h0m0 10h0m0 59h0m0 4h0m0-43h0m0-13h0m0 6h0m1-17h0m0 33h0m0 9h0" stroke="#2F8A00" stroke-width="8"/><path d="M1213 766h0m0 25h0m1-32h0m0 11h0m0-2h0m0-4h0m0 37h0m0-10h0m0 66h0m1 27h0m0-36h0m0 12h0" stroke="#85B900" stroke-width="16"/><path d="M1213 766h0m0 25h0m1-32h0m0 11h0m0-2h0m0-4h0m0 37h0m0-10h0m0 66h0m1 27h0m0-36h0m0 12h0" stroke="#2F8A00" stroke-width="8"/><path d="M1215 830h0m0 41h0m0-36h0m1-44h0m0-36h0m0 72h0m0 28h0m0-30h0m0-64h0m0-3h0m1 15h0m0 43h0" stroke="#85B900" stroke-width="16"/><path d="M1215 830h0m0 41h0m0-36h0m1-44h0m0-36h0m0 72h0m0 28h0m0-30h0m0-64h0m0-3h0m1 15h0m0 43h0" stroke="#2F8A00" stroke-width="8"/><path d="M1217 848h0m0 8h0m0-12h0m1-34h0m0-74h0m0 59h0m0-24h0m0 18h0m0 51h0m0-71h0m1 4h0m0 27h0" stroke="#85B900" stroke-width="16"/><path d="M1217 848h0m0 8h0m0-12h0m1-34h0m0-74h0m0 59h0m0-24h0m0 18h0m0 51h0m0-71h0m1 4h0m0 27h0" stroke="#2F8A00" stroke-width="8"/><path d="M1219 771h0m0-12h0m0 58h0m1-27h0m0-5h0m0 52h0m0-19h0m0 33h0m0-83h0m0 29h0m1 64h0m0-58h0" stroke="#85B900" stroke-width="16"/><path d="M1219 771h0m0-12h0m0 58h0m1-27h0m0-5h0m0 52h0m0-19h0m0 33h0m0-83h0m0 29h0m1 64h0m0-58h0" stroke="#2F8A00" stroke-width="8"/><path d="M1221 743h0m0 30h0m6-48h0m1 84h0m0 39h0m0-28h0m0-36h0m0 1h0m0 10h0m0 36h0m1-46h0m0 11h0" stroke="#85B900" stroke-width="16"/><path d="M1221 743h0m0 30h0m6-48h0m1 84h0m0 39h0m0-28h0m0-36h0m0 1h0m0 10h0m0 36h0m1-46h0m0 11h0" stroke="#2F8A00" stroke-width="8"/><path d="M1229 843h0m0-18h0m0-3h0m1 5h0m0 9h0m0 11h0m0-2h0m0-82h0m0 18h0m0 67h0m1-57h0m0 81h0" stroke="#85B900" stroke-width="16"/><path d="M1229 843h0m0-18h0m0-3h0m1 5h0m0 9h0m0 11h0m0-2h0m0-82h0m0 18h0m0 67h0m1-57h0m0 81h0" stroke="#2F8A00" stroke-width="8"/><path d="M1231 813h0m0-16h0m0 0h0m0 48h0m1 2h0m0-28h0m0-43h0m0 67h0m0-50h0m0-2h0m0 17h0m1-54h0" stroke="#85B900" stroke-width="16"/><path d="M1231 813h0m0-16h0m0 0h0m0 48h0m1 2h0m0-28h0m0-43h0m0 67h0m0-50h0m0-2h0m0 17h0m1-54h0" stroke="#2F8A00" stroke-width="8"/><path d="M1233 709h0m0 45h0m0 17h0m0 22h0m0-9h0m1 6h0m0-2h0m0-41h0m0 10h0m0 57h0m0-4h0m0 19h0" stroke="#85B900" stroke-width="16"/><path d="M1233 709h0m0 45h0m0 17h0m0 22h0m0-9h0m1 6h0m0-2h0m0-41h0m0 10h0m0 57h0m0-4h0m0 19h0" stroke="#2F8A00" stroke-width="8"/><path d="M1235 842h0m0 18h0m0-65h0m0 19h0m0-47h0m1 68h0m0-62h0m0-18h0m0-12h0m0 45h0m0 41h0m0 37h0" stroke="#85B900" stroke-width="16"/><path d="M1235 842h0m0 18h0m0-65h0m0 19h0m0-47h0m1 68h0m0-62h0m0-18h0m0-12h0m0 45h0m0 41h0m0 37h0" stroke="#2F8A00" stroke-width="8"/><path d="M1237 840h0m0-57h0m0-6h0m0-6h0m0-4h0m1 37h0m0 0h0m0-8h0m0-56h0m0 38h0m0 20h0m0-52h0" stroke="#85B900" stroke-width="16"/><path d="M1237 840h0m0-57h0m0-6h0m0-6h0m0-4h0m1 37h0m0 0h0m0-8h0m0-56h0m0 38h0m0 20h0m0-52h0" stroke="#2F8A00" stroke-width="8"/><path d="M1239 755h0m0 41h0m0-9h0m0-26h0m0 7h0m1-18h0m0 18h0m0-25h0m0 58h0m0-79h0m0-12h0m0 79h0" stroke="#85B900" stroke-width="16"/><path d="M1239 755h0m0 41h0m0-9h0m0-26h0m0 7h0m1-18h0m0 18h0m0-25h0m0 58h0m0-79h0m0-12h0m0 79h0" stroke="#2F8A00" stroke-width="8"/><path d="M1241 852h0m0-12h0m0 12h0m0-9h0m0-65h0m1 49h0m0-22h0m0 20h0m0-2h0m0-58h0m0 13h0m0-30h0" stroke="#85B900" stroke-width="16"/><path d="M1241 852h0m0-12h0m0 12h0m0-9h0m0-65h0m1 49h0m0-22h0m0 20h0m0-2h0m0-58h0m0 13h0m0-30h0" stroke="#2F8A00" stroke-width="8"/><path d="M1243 826h0m0 2h0m0-4h0m0 21h0m0 2h0m1-15h0m0-47h0m0-41h0m0-1h0m0-2h0m0 11h0m0-17h0" stroke="#85B900" stroke-width="16"/><path d="M1243 826h0m0 2h0m0-4h0m0 21h0m0 2h0m1-15h0m0-47h0m0-41h0m0-1h0m0-2h0m0 11h0m0-17h0" stroke="#2F8A00" stroke-width="8"/><path d="M1245 758h0m0 59h0m0-58h0m0-13h0m0 24h0m1 42h0m0-17h0m0 14h0m0-42h0m0 60h0m0-33h0m0-11h0" stroke="#85B900" stroke-width="16"/><path d="M1245 758h0m0 59h0m0-58h0m0-13h0m0 24h0m1 42h0m0-17h0m0 14h0m0-42h0m0 60h0m0-33h0m0-11h0" stroke="#2F8A00" stroke-width="8"/><path d="M1247 785h0m0-15h0m0 9h0m0-15h0m0-55h0m0 154h0m0-63h0m1 14h0m0-38h0m0 5h0m0 62h0m0-72h0" stroke="#85B900" stroke-width="16"/><path d="M1247 785h0m0-15h0m0 9h0m0-15h0m0-55h0m0 154h0m0-63h0m1 14h0m0-38h0m0 5h0m0 62h0m0-72h0" stroke="#2F8A00" stroke-width="8"/><path d="M1248 768h0m0 67h0m1-29h0m0-47h0m0 11h0m0 80h0m0-11h0m1-15h0m0-26h0m0 27h0m0 0h0m0 17h0" stroke="#85B900" stroke-width="16"/><path d="M1248 768h0m0 67h0m1-29h0m0-47h0m0 11h0m0 80h0m0-11h0m1-15h0m0-26h0m0 27h0m0 0h0m0 17h0" stroke="#2F8A00" stroke-width="8"/><path d="M1250 833h0m0-18h0m1 8h0m0-37h0m0 63h0m0-10h0m0-16h0m1 11h0m0 6h0m0 1h0m0-2h0m0-2h0" stroke="#85B900" stroke-width="16"/><path d="M1250 833h0m0-18h0m1 8h0m0-37h0m0 63h0m0-10h0m0-16h0m1 11h0m0 6h0m0 1h0m0-2h0m0-2h0" stroke="#2F8A00" stroke-width="8"/><path d="M1252 824h0m0 22h0m1-39h0m0 7h0m0-58h0m0 7h0m0 8h0m1-13h0m0 65h0m0-39h0m0-24h0m0-36h0" stroke="#85B900" stroke-width="16"/><path d="M1252 824h0m0 22h0m1-39h0m0 7h0m0-58h0m0 7h0m0 8h0m1-13h0m0 65h0m0-39h0m0-24h0m0-36h0" stroke="#2F8A00" stroke-width="8"/><path d="M1254 764h0m0 7h0m0 27h0m1 34h0m0-39h0m0 53h0m0 6h0m0-7h0m1-15h0m0-14h0m0-22h0m0-25h0" stroke="#85B900" stroke-width="16"/><path d="M1254 764h0m0 7h0m0 27h0m1 34h0m0-39h0m0 53h0m0 6h0m0-7h0m1-15h0m0-14h0m0-22h0m0-25h0" stroke="#2F8A00" stroke-width="8"/><path d="M1256 774h0m0 2h0m0 35h0m1-7h0m0-9h0m0-6h0m0-2h0m0 24h0m1 2h0m0 2h0m0-4h0m0 3h0" stroke="#85B900" stroke-width="16"/><path d="M1256 774h0m0 2h0m0 35h0m1-7h0m0-9h0m0-6h0m0-2h0m0 24h0m1 2h0m0 2h0m0-4h0m0 3h0" stroke="#2F8A00" stroke-width="8"/><path d="M1258 828h0m0 12h0m0 9h0m1 2h0m0 5h0m0 1h0m0-91h0m0 93h0m0-77h0m0 16h0m0 16h0m0 16h0" stroke="#85B900" stroke-width="16"/><path d="M1258 828h0m0 12h0m0 9h0m1 2h0m0 5h0m0 1h0m0-91h0m0 93h0m0-77h0m0 16h0m0 16h0m0 16h0" stroke="#2F8A00" stroke-width="8"/><path d="M1259 846h0m0 9h0m11 4h0m10 0h0m0-79h0m0 49h0m0-157h0m0 18h0m0 20h0m0 20h0m0 20h0m0 20h0" stroke="#85B900" stroke-width="16"/><path d="M1259 846h0m0 9h0m11 4h0m10 0h0m0-79h0m0 49h0m0-157h0m0 18h0m0 20h0m0 20h0m0 20h0m0 20h0" stroke="#2F8A00" stroke-width="8"/><path d="M1280 790h0m0 20h0m0 20h0m0 20h0m2-190h0m2-14h0m2 187h0m0-33h0m0-59h0m0 20h0m0 78h0m0 0h0" stroke="#85B900" stroke-width="16"/><path d="M1280 790h0m0 20h0m0 20h0m0 20h0m2-190h0m2-14h0m2 187h0m0-33h0m0-59h0m0 20h0m0 78h0m0 0h0" stroke="#2F8A00" stroke-width="8"/><path d="M1287 832h0m0-50h0m0-8h0m0 60h0m0-9h0m1-73h0m0-20h0m0 38h0m0 29h0m0-94h0m0 33h0m0-6h0" stroke="#85B900" stroke-width="16"/><path d="M1287 832h0m0-50h0m0-8h0m0 60h0m0-9h0m1-73h0m0-20h0m0 38h0m0 29h0m0-94h0m0 33h0m0-6h0" stroke="#2F8A00" stroke-width="8"/><path d="M1289 668h0m0-6h0m0 30h0m0-9h0m0 32h0m1 32h0m0 7h0m0-11h0m0 38h0m0-119h0m0 55h0m0-42h0" stroke="#85B900" stroke-width="16"/><path d="M1289 668h0m0-6h0m0 30h0m0-9h0m0 32h0m1 32h0m0 7h0m0-11h0m0 38h0m0-119h0m0 55h0m0-42h0" stroke="#2F8A00" stroke-width="8"/><path d="M1290 716h0m1 79h0m0-36h0m0 56h0m0 14h0m0-47h0m1 15h0m0 41h0m0-45h0m0 17h0m0 8h0m0-46h0" stroke="#85B900" stroke-width="16"/><path d="M1290 716h0m1 79h0m0-36h0m0 56h0m0 14h0m0-47h0m1 15h0m0 41h0m0-45h0m0 17h0m0 8h0m0-46h0" stroke="#2F8A00" stroke-width="8"/><path d="M1292 821h0m1-36h0m0 37h0m0-5h0m0-38h0m0-5h0m1-30h0m0 96h0m0-47h0m0-30h0m0-69h0m0 165h0" stroke="#85B900" stroke-width="16"/><path d="M1292 821h0m1-36h0m0 37h0m0-5h0m0-38h0m0-5h0m1-30h0m0 96h0m0-47h0m0-30h0m0-69h0m0 165h0" stroke="#2F8A00" stroke-width="8"/><path d="M1294 820h0m0 12h0m0 3h0m1-57h0m0-35h0m0 9h0m0 21h0m0 41h0m1 18h0m0-3h0m0 6h0m0-80h0" stroke="#85B900" stroke-width="16"/><path d="M1294 820h0m0 12h0m0 3h0m1-57h0m0-35h0m0 9h0m0 21h0m0 41h0m1 18h0m0-3h0m0 6h0m0-80h0" stroke="#2F8A00" stroke-width="8"/><path d="M1296 725h0m0-1h0m0 14h0m1-6h0m0 4h0m0 20h0m0-12h0m0 11h0m1 55h0m0 8h0m0-27h0m0 4h0" stroke="#85B900" stroke-width="16"/><path d="M1296 725h0m0-1h0m0 14h0m1-6h0m0 4h0m0 20h0m0-12h0m0 11h0m1 55h0m0 8h0m0-27h0m0 4h0" stroke="#2F8A00" stroke-width="8"/><path d="M1298 810h0m0-3h0m0 21h0m1-72h0m0 53h0m0-51h0m0 37h0m0-60h0m1 60h0m0 27h0m0-41h0m0 28h0" stroke="#85B900" stroke-width="16"/><path d="M1298 810h0m0-3h0m0 21h0m1-72h0m0 53h0m0-51h0m0 37h0m0-60h0m1 60h0m0 27h0m0-41h0m0 28h0" stroke="#2F8A00" stroke-width="8"/><path d="M1300 782h0m0 44h0m0-22h0m1-28h0m0-35h0m0 11h0m0 33h0m0 27h0m1-40h0m0-13h0m0-31h0m0-3h0" stroke="#85B900" stroke-width="16"/><path d="M1300 782h0m0 44h0m0-22h0m1-28h0m0-35h0m0 11h0m0 33h0m0 27h0m1-40h0m0-13h0m0-31h0m0-3h0" stroke="#2F8A00" stroke-width="8"/><path d="M1302 682h0m0-69h0m0 125h0m0 31h0m0 38h0m1-34h0m0-41h0m0 81h0m0-12h0m0-24h0m1 7h0m0-4h0" stroke="#85B900" stroke-width="16"/><path d="M1302 682h0m0-69h0m0 125h0m0 31h0m0 38h0m1-34h0m0-41h0m0 81h0m0-12h0m0-24h0m1 7h0m0-4h0" stroke="#2F8A00" stroke-width="8"/><path d="M1304 808h0m0 9h0m0-62h0m0-6h0m0 40h0m1-13h0m0 33h0m0-55h0m0 67h0m0-2h0m1-76h0m0 59h0" stroke="#85B900" stroke-width="16"/><path d="M1304 808h0m0 9h0m0-62h0m0-6h0m0 40h0m1-13h0m0 33h0m0-55h0m0 67h0m0-2h0m1-76h0m0 59h0" stroke="#2F8A00" stroke-width="8"/><path d="M1306 752h0m0 20h0m0 82h0m0-71h0m0 15h0m0 18h0m1-84h0m0 5h0m0-12h0m0 2h0m0 21h0m1 96h0" stroke="#85B900" stroke-width="16"/><path d="M1306 752h0m0 20h0m0 82h0m0-71h0m0 15h0m0 18h0m1-84h0m0 5h0m0-12h0m0 2h0m0 21h0m1 96h0" stroke="#2F8A00" stroke-width="8"/><path d="M1308 831h0m0-53h0m0 72h0m0-4h0m0-16h0m0 22h0m1 0h0m0-2h0m0-57h0m0 47h0m0-21h0m1 2h0" stroke="#85B900" stroke-width="16"/><path d="M1308 831h0m0-53h0m0 72h0m0-4h0m0-16h0m0 22h0m1 0h0m0-2h0m0-57h0m0 47h0m0-21h0m1 2h0" stroke="#2F8A00" stroke-width="8"/><path d="M1310 827h0m0 21h0m0 7h0m0-19h0m0-29h0m0-42h0m1 5h0m0 23h0m0 9h0m0-9h0m0-146h0m0 112h0" stroke="#85B900" stroke-width="16"/><path d="M1310 827h0m0 21h0m0 7h0m0-19h0m0-29h0m0-42h0m1 5h0m0 23h0m0 9h0m0-9h0m0-146h0m0 112h0" stroke="#2F8A00" stroke-width="8"/><path d="M1312 745h0m0 32h0m0 43h0m0 11h0m0-29h0m0 21h0m0 20h0m1-40h0m0-50h0m0 50h0m0 45h0m0-5h0" stroke="#85B900" stroke-width="16"/><path d="M1312 745h0m0 32h0m0 43h0m0 11h0m0-29h0m0 21h0m0 20h0m1-40h0m0-50h0m0 50h0m0 45h0m0-5h0" stroke="#2F8A00" stroke-width="8"/><path d="M1314 838h0m0-15h0m0 21h0m0-67h0m0-87h0m0 99h0m0-14h0m0-54h0m1 12h0m0 19h0m0 18h0m0 2h0" stroke="#85B900" stroke-width="16"/><path d="M1314 838h0m0-15h0m0 21h0m0-67h0m0-87h0m0 99h0m0-14h0m0-54h0m1 12h0m0 19h0m0 18h0m0 2h0" stroke="#2F8A00" stroke-width="8"/><path d="M1315 770h0m1 30h0m0-53h0m0-10h0m0 36h0m0 33h0m0 28h0m0-61h0m1 55h0m0 17h0m0-7h0m0-51h0" stroke="#85B900" stroke-width="16"/><path d="M1315 770h0m1 30h0m0-53h0m0-10h0m0 36h0m0 33h0m0 28h0m0-61h0m1 55h0m0 17h0m0-7h0m0-51h0" stroke="#2F8A00" stroke-width="8"/><path d="M1317 823h0m1 26h0m0 19h0m0-41h0m0 6h0m0 5h0m0 10h0m0 1h0m0 2h0m1-55h0m0-11h0m0-29h0" stroke="#85B900" stroke-width="16"/><path d="M1317 823h0m1 26h0m0 19h0m0-41h0m0 6h0m0 5h0m0 10h0m0 1h0m0 2h0m1-55h0m0-11h0m0-29h0" stroke="#2F8A00" stroke-width="8"/><path d="M1319 803h0m0 27h0m1 6h0m0 23h0m0-31h0m0 26h0m0-140h0m0 104h0m0-53h0m0 4h0m1 1h0m0 6h0" stroke="#85B900" stroke-width="16"/><path d="M1319 803h0m0 27h0m1 6h0m0 23h0m0-31h0m0 26h0m0-140h0m0 104h0m0-53h0m0 4h0m1 1h0m0 6h0" stroke="#2F8A00" stroke-width="8"/><path d="M1321 786h0m0 24h0m0 19h0m1-31h0m0-29h0m0 36h0m0 39h0m0 7h0m0-2h0m0-72h0m1 33h0m0-24h0" stroke="#85B900" stroke-width="16"/><path d="M1321 786h0m0 24h0m0 19h0m1-31h0m0-29h0m0 36h0m0 39h0m0 7h0m0-2h0m0-72h0m1 33h0m0-24h0" stroke="#2F8A00" stroke-width="8"/><path d="M1323 829h0m0 24h0m0-24h0m1-42h0m0-5h0m0 26h0m0 17h0m0-44h0m0 21h0m0-30h0m1-5h0m0 52h0" stroke="#85B900" stroke-width="16"/><path d="M1323 829h0m0 24h0m0-24h0m1-42h0m0-5h0m0 26h0m0 17h0m0-44h0m0 21h0m0-30h0m1-5h0m0 52h0" stroke="#2F8A00" stroke-width="8"/><path d="M1325 810h0m0-61h0m0-2h0m1 53h0m0-49h0m0 55h0m0 1h0m0-47h0m0-1h0m0 36h0m1 47h0m0-59h0" stroke="#85B900" stroke-width="16"/><path d="M1325 810h0m0-61h0m0-2h0m1 53h0m0-49h0m0 55h0m0 1h0m0-47h0m0-1h0m0 36h0m1 47h0m0-59h0" stroke="#2F8A00" stroke-width="8"/><path d="M1327 783h0m0 22h0m0 29h0m1 31h0m0 2h0m0-6h0m0-51h0m0-14h0m0-36h0m0 4h0m1-2h0m0 7h0" stroke="#85B900" stroke-width="16"/><path d="M1327 783h0m0 22h0m0 29h0m1 31h0m0 2h0m0-6h0m0-51h0m0-14h0m0-36h0m0 4h0m1-2h0m0 7h0" stroke="#2F8A00" stroke-width="8"/><path d="M1329 796h0m0-9h0m0 41h0m1 20h0m0-59h0m0-44h0m0-4h0m0-32h0m0 30h0m0 17h0m1 19h0m0 69h0" stroke="#85B900" stroke-width="16"/><path d="M1329 796h0m0-9h0m0 41h0m1 20h0m0-59h0m0-44h0m0-4h0m0-32h0m0 30h0m0 17h0m1 19h0m0 69h0" stroke="#2F8A00" stroke-width="8"/><path d="M1331 847h0m0 6h0m0-174h0m0 160h0m1-39h0m0-67h0m0 6h0m0 16h0m0-55h0m0 39h0m0-3h0m0 19h0" stroke="#85B900" stroke-width="16"/><path d="M1331 847h0m0 6h0m0-174h0m0 160h0m1-39h0m0-67h0m0 6h0m0 16h0m0-55h0m0 39h0m0-3h0m0 19h0" stroke="#2F8A00" stroke-width="8"/><path d="M1333 835h0m0-32h0m0-20h0m0-26h0m0 8h0m1-26h0m0 27h0m0-21h0m0 62h0m0-48h0m0-23h0m0 30h0" stroke="#85B900" stroke-width="16"/><path d="M1333 835h0m0-32h0m0-20h0m0-26h0m0 8h0m1-26h0m0 27h0m0-21h0m0 62h0m0-48h0m0-23h0m0 30h0" stroke="#2F8A00" stroke-width="8"/><path d="M1335 794h0m0-45h0m0 19h0m0 8h0m0 57h0m1-55h0m0-48h0m0 18h0m0 37h0m0 34h0m0-28h0m0-57h0" stroke="#85B900" stroke-width="16"/><path d="M1335 794h0m0-45h0m0 19h0m0 8h0m0 57h0m1-55h0m0-48h0m0 18h0m0 37h0m0 34h0m0-28h0m0-57h0" stroke="#2F8A00" stroke-width="8"/><path d="M1337 702h0m0 103h0m0-13h0m0-11h0m0 17h0m1 9h0m0-40h0m0-5h0m0 8h0m0-133h0m0 187h0m0 33h0" stroke="#85B900" stroke-width="16"/><path d="M1337 702h0m0 103h0m0-13h0m0-11h0m0 17h0m1 9h0m0-40h0m0-5h0m0 8h0m0-133h0m0 187h0m0 33h0" stroke="#2F8A00" stroke-width="8"/><path d="M1338 858h0m1-4h0m0-53h0m0-38h0m0 24h0m0-28h0m1-8h0m0 100h0m0-29h0m0-23h0m0-101h0m0 37h0" stroke="#85B900" stroke-width="16"/><path d="M1338 858h0m1-4h0m0-53h0m0-38h0m0 24h0m0-28h0m1-8h0m0 100h0m0-29h0m0-23h0m0-101h0m0 37h0" stroke="#2F8A00" stroke-width="8"/><path d="M1340 768h0m0 20h0m1-10h0m0 25h0m0-80h0m0 68h0m0 48h0m1-91h0m0 20h0m0 39h0m0 25h0m0-8h0" stroke="#85B900" stroke-width="16"/><path d="M1340 768h0m0 20h0m1-10h0m0 25h0m0-80h0m0 68h0m0 48h0m1-91h0m0 20h0m0 39h0m0 25h0m0-8h0" stroke="#2F8A00" stroke-width="8"/><path d="M1342 848h0m0-4h0m1-31h0m0 36h0m0-58h0m0-14h0m0-6h0m1 66h0m0-33h0m0-44h0m0-6h0m0 18h0" stroke="#85B900" stroke-width="16"/><path d="M1342 848h0m0-4h0m1-31h0m0 36h0m0-58h0m0-14h0m0-6h0m1 66h0m0-33h0m0-44h0m0-6h0m0 18h0" stroke="#2F8A00" stroke-width="8"/><path d="M1344 783h0m0 19h0m1-37h0m0 23h0m0 34h0m0 35h0m0 6h0m1-46h0m0 51h0m0-39h0m0-41h0m0 21h0" stroke="#85B900" stroke-width="16"/><path d="M1344 783h0m0 19h0m1-37h0m0 23h0m0 34h0m0 35h0m0 6h0m1-46h0m0 51h0m0-39h0m0-41h0m0 21h0" stroke="#2F8A00" stroke-width="8"/><path d="M1346 720h0m0 112h0m0-16h0m0-69h0m1 22h0m0 14h0m0-6h0m0 35h0m0-14h0m1-5h0m0 23h0m0-28h0" stroke="#85B900" stroke-width="16"/><path d="M1346 720h0m0 112h0m0-16h0m0-69h0m1 22h0m0 14h0m0-6h0m0 35h0m0-14h0m1-5h0m0 23h0m0-28h0" stroke="#2F8A00" stroke-width="8"/><path d="M1348 821h0m0-22h0m0-3h0m0 24h0m1 29h0m0-21h0m0-3h0m0-18h0m0-42h0m1 3h0m0 81h0m0-20h0" stroke="#85B900" stroke-width="16"/><path d="M1348 821h0m0-22h0m0-3h0m0 24h0m1 29h0m0-21h0m0-3h0m0-18h0m0-42h0m1 3h0m0 81h0m0-20h0" stroke="#2F8A00" stroke-width="8"/><path d="M1350 842h0m0 2h0m0 11h0m0-13h0m1 5h0m0-19h0m0 34h0m0-7h0m0-15h0m1 14h0m0-38h0m0 25h0" stroke="#85B900" stroke-width="16"/><path d="M1350 842h0m0 2h0m0 11h0m0-13h0m1 5h0m0-19h0m0 34h0m0-7h0m0-15h0m1 14h0m0-38h0m0 25h0" stroke="#2F8A00" stroke-width="8"/><path d="M1352 863h0m0-33h0m0 7h0m0-30h0m1 1h0m0-8h0m0-48h0m0 48h0m0 0h0m1 33h0m0-34h0m0-11h0" stroke="#85B900" stroke-width="16"/><path d="M1352 863h0m0-33h0m0 7h0m0-30h0m1 1h0m0-8h0m0-48h0m0 48h0m0 0h0m1 33h0m0-34h0m0-11h0" stroke="#2F8A00" stroke-width="8"/><path d="M1354 781h0m0-27h0m0 75h0m0 21h0m1 7h0m0-3h0m0-21h0m0 2h0m0 30h0m1 0h0m0-5h0m0-40h0" stroke="#85B900" stroke-width="16"/><path d="M1354 781h0m0-27h0m0 75h0m0 21h0m1 7h0m0-3h0m0-21h0m0 2h0m0 30h0m1 0h0m0-5h0m0-40h0" stroke="#2F8A00" stroke-width="8"/><path d="M1356 835h0m0-86h0m0 49h0m0-19h0m1 1h0m0 50h0m0 23h0m0-18h0m0-46h0m1-41h0m0-4h0m0 32h0" stroke="#85B900" stroke-width="16"/><path d="M1356 835h0m0-86h0m0 49h0m0-19h0m1 1h0m0 50h0m0 23h0m0-18h0m0-46h0m1-41h0m0-4h0m0 32h0" stroke="#2F8A00" stroke-width="8"/><path d="M1358 799h0m0-21h0m0 13h0m0-4h0m1-34h0m0 5h0m0 64h0m0 31h0m0-30h0m1-2h0m0 43h0m0-94h0" stroke="#85B900" stroke-width="16"/><path d="M1358 799h0m0-21h0m0 13h0m0-4h0m1-34h0m0 5h0m0 64h0m0 31h0m0-30h0m1-2h0m0 43h0m0-94h0" stroke="#2F8A00" stroke-width="8"/><path d="M1360 806h0m0-6h0m0-1h0m0 41h0m0 6h0m1-3h0m0-1h0m0 1h0m0-81h0m0 29h0m1-15h0m0 63h0" stroke="#85B900" stroke-width="16"/><path d="M1360 806h0m0-6h0m0-1h0m0 41h0m0 6h0m1-3h0m0-1h0m0 1h0m0-81h0m0 29h0m1-15h0m0 63h0" stroke="#2F8A00" stroke-width="8"/><path d="M1362 826h0m0-42h0m0-17h0m0 50h0m0-5h0m1-4h0m0 33h0m0 1h0m0-18h0m0 21h0m1 0h0m0-3h0" stroke="#85B900" stroke-width="16"/><path d="M1362 826h0m0-42h0m0-17h0m0 50h0m0-5h0m1-4h0m0 33h0m0 1h0m0-18h0m0 21h0m1 0h0m0-3h0" stroke="#2F8A00" stroke-width="8"/><path d="M1364 837h0m0-100h0m0 53h0m0-16h0m0 37h0m1-32h0m0 8h0m0-42h0m0 48h0m0-32h0m1 68h0m0-8h0" stroke="#85B900" stroke-width="16"/><path d="M1364 837h0m0-100h0m0 53h0m0-16h0m0 37h0m1-32h0m0 8h0m0-42h0m0 48h0m0-32h0m1 68h0m0-8h0" stroke="#2F8A00" stroke-width="8"/><path d="M1366 823h0m0-43h0m0-26h0m0 28h0m0-7h0m1 3h0m0-42h0m0 5h0m0 28h0m0-33h0m1-7h0m0-8h0" stroke="#85B900" stroke-width="16"/><path d="M1366 823h0m0-43h0m0-26h0m0 28h0m0-7h0m1 3h0m0-42h0m0 5h0m0 28h0m0-33h0m1-7h0m0-8h0" stroke="#2F8A00" stroke-width="8"/><path d="M1368 743h0m0-2h0m0-13h0m0 2h0m0 25h0m1-24h0m0 25h0m0 86h0m0-85h0m0-18h0m1 5h0m0 23h0" stroke="#85B900" stroke-width="16"/><path d="M1368 743h0m0-2h0m0-13h0m0 2h0m0 25h0m1-24h0m0 25h0m0 86h0m0-85h0m0-18h0m1 5h0m0 23h0" stroke="#2F8A00" stroke-width="8"/><path d="M1370 824h0m0-17h0m0-113h0m0 160h0m0-221h0m0 135h0m5 55h0m0-37h0m1-3h0m0 6h0m0 0h0m0 4h0" stroke="#85B900" stroke-width="16"/><path d="M1370 824h0m0-17h0m0-113h0m0 160h0m0-221h0m0 135h0m5 55h0m0-37h0m1-3h0m0 6h0m0 0h0m0 4h0" stroke="#2F8A00" stroke-width="8"/><path d="M1376 720h0m0 105h0m0 13h0m0-40h0m1 28h0m0-4h0m0-57h0m0-16h0m0 59h0m1 30h0m0-47h0m0 30h0" stroke="#85B900" stroke-width="16"/><path d="M1376 720h0m0 105h0m0 13h0m0-40h0m1 28h0m0-4h0m0-57h0m0-16h0m0 59h0m1 30h0m0-47h0m0 30h0" stroke="#2F8A00" stroke-width="8"/><path d="M1378 778h0m0 27h0m0 48h0m0-15h0m1 14h0m0-36h0m0-13h0m0-22h0m0 64h0m1-4h0m0-37h0m0-45h0" stroke="#85B900" stroke-width="16"/><path d="M1378 778h0m0 27h0m0 48h0m0-15h0m1 14h0m0-36h0m0-13h0m0-22h0m0 64h0m1-4h0m0-37h0m0-45h0" stroke="#2F8A00" stroke-width="8"/><path d="M1380 764h0m0 39h0m0 34h0m0-35h0m1 30h0m0-8h0m0-18h0m0 8h0m0 42h0m1-19h0m0-12h0m0-13h0" stroke="#85B900" stroke-width="16"/><path d="M1380 764h0m0 39h0m0 34h0m0-35h0m1 30h0m0-8h0m0-18h0m0 8h0m0 42h0m1-19h0m0-12h0m0-13h0" stroke="#2F8A00" stroke-width="8"/><path d="M1382 790h0m0 13h0m0-13h0m0-46h0m1 27h0m0-30h0m0 17h0m0 110h0m0-92h0m0 65h0m1 11h0m0-2h0" stroke="#85B900" stroke-width="16"/><path d="M1382 790h0m0 13h0m0-13h0m0-46h0m1 27h0m0-30h0m0 17h0m0 110h0m0-92h0m0 65h0m1 11h0m0-2h0" stroke="#2F8A00" stroke-width="8"/><path d="M1384 796h0m0 9h0m0 51h0m0-2h0m0-2h0m1 18h0m0-10h0m0-63h0m0 35h0m0 2h0m1-62h0m0 73h0" stroke="#85B900" stroke-width="16"/><path d="M1384 796h0m0 9h0m0 51h0m0-2h0m0-2h0m1 18h0m0-10h0m0-63h0m0 35h0m0 2h0m1-62h0m0 73h0" stroke="#2F8A00" stroke-width="8"/><path d="M1386 825h0m0 42h0m0-157h0m0 109h0m0 36h0m0 2h0m1-12h0m0 9h0m0-80h0m0 87h0m0 1h0m1-5h0" stroke="#85B900" stroke-width="16"/><path d="M1386 825h0m0 42h0m0-157h0m0 109h0m0 36h0m0 2h0m1-12h0m0 9h0m0-80h0m0 87h0m0 1h0m1-5h0" stroke="#2F8A00" stroke-width="8"/><path d="M1388 874h0m0 1h0m0-30h0m0-14h0m0-76h0m0 9h0m1-5h0m0 52h0m0-6h0m0-56h0m0 42h0m1-18h0" stroke="#85B900" stroke-width="16"/><path d="M1388 874h0m0 1h0m0-30h0m0-14h0m0-76h0m0 9h0m1-5h0m0 52h0m0-6h0m0-56h0m0 42h0m1-18h0" stroke="#2F8A00" stroke-width="8"/><path d="M1390 824h0m0-62h0m0-13h0m0 4h0m0 4h0m0 10h0m1 44h0m0 18h0m0-1h0m0 0h0m0-24h0m1-56h0" stroke="#85B900" stroke-width="16"/><path d="M1390 824h0m0-62h0m0-13h0m0 4h0m0 4h0m0 10h0m1 44h0m0 18h0m0-1h0m0 0h0m0-24h0m1-56h0" stroke="#2F8A00" stroke-width="8"/><path d="M1392 751h0m0 3h0m0 6h0m0-34h0m0 15h0m0 5h0m1-4h0m0 7h0m0 15h0m0 39h0m0 40h0m0 41h0" stroke="#85B900" stroke-width="16"/><path d="M1392 751h0m0 3h0m0 6h0m0-34h0m0 15h0m0 5h0m1-4h0m0 7h0m0 15h0m0 39h0m0 40h0m0 41h0" stroke="#2F8A00" stroke-width="8"/><path d="M1394 782h0m0 34h0m0-16h0m0-3h0m0 51h0m0 9h0m0-7h0m1-64h0m0-5h0m0 56h0m0-44h0m0-30h0" stroke="#85B900" stroke-width="16"/><path d="M1394 782h0m0 34h0m0-16h0m0-3h0m0 51h0m0 9h0m0-7h0m1-64h0m0-5h0m0 56h0m0-44h0m0-30h0" stroke="#2F8A00" stroke-width="8"/><path d="M1396 747h0m0 24h0m0-19h0m0 113h0m0-16h0m0-11h0m0-35h0m1 23h0m0 9h0m0-25h0m0-23h0m0 54h0" stroke="#85B900" stroke-width="16"/><path d="M1396 747h0m0 24h0m0-19h0m0 113h0m0-16h0m0-11h0m0-35h0m1 23h0m0 9h0m0-25h0m0-23h0m0 54h0" stroke="#2F8A00" stroke-width="8"/><path d="M1398 832h0m0 16h0m0-15h0m0-34h0m0 21h0m0 22h0m0-14h0m1-9h0m0 25h0m0-49h0m0 23h0m0-11h0" stroke="#85B900" stroke-width="16"/><path d="M1398 832h0m0 16h0m0-15h0m0-34h0m0 21h0m0 22h0m0-14h0m1-9h0m0 25h0m0-49h0m0 23h0m0-11h0" stroke="#2F8A00" stroke-width="8"/><path d="M1400 812h0m0 28h0m0-73h0m0 9h0m0-70h0m0 80h0m0 15h0m0 61h0m1-36h0m0-3h0m0 22h0m0-90h0" stroke="#85B900" stroke-width="16"/><path d="M1400 812h0m0 28h0m0-73h0m0 9h0m0-70h0m0 80h0m0 15h0m0 61h0m1-36h0m0-3h0m0 22h0m0-90h0" stroke="#2F8A00" stroke-width="8"/><path d="M1401 806h0m1 29h0m0-32h0m0-10h0m0-21h0m0 61h0m0-40h0m0-42h0m1-4h0m0-1h0m0 21h0m0 15h0" stroke="#85B900" stroke-width="16"/><path d="M1401 806h0m1 29h0m0-32h0m0-10h0m0-21h0m0 61h0m0-40h0m0-42h0m1-4h0m0-1h0m0 21h0m0 15h0" stroke="#2F8A00" stroke-width="8"/><path d="M1403 830h0m1-76h0m0 28h0m0-3h0m0 11h0m0-21h0m0-3h0m0 34h0m1 41h0m0-71h0m0 30h0m0-34h0" stroke="#85B900" stroke-width="16"/><path d="M1403 830h0m1-76h0m0 28h0m0-3h0m0 11h0m0-21h0m0-3h0m0 34h0m1 41h0m0-71h0m0 30h0m0-34h0" stroke="#2F8A00" stroke-width="8"/><path d="M1405 807h0m1-16h0m0-42h0m0-2h0m0 19h0m0 50h0m0 35h0m0 4h0m1-9h0m0-3h0m0-24h0m0 31h0" stroke="#85B900" stroke-width="16"/><path d="M1405 807h0m1-16h0m0-42h0m0-2h0m0 19h0m0 50h0m0 35h0m0 4h0m1-9h0m0-3h0m0-24h0m0 31h0" stroke="#2F8A00" stroke-width="8"/><path d="M1407 807h0m1-40h0m0 51h0m0-58h0m0 25h0m0 48h0m0-1h0m0 7h0m1-7h0m0-3h0m0-59h0m0 69h0" stroke="#85B900" stroke-width="16"/><path d="M1407 807h0m1-40h0m0 51h0m0-58h0m0 25h0m0 48h0m0-1h0m0 7h0m1-7h0m0-3h0m0-59h0m0 69h0" stroke="#2F8A00" stroke-width="8"/><path d="M1409 816h0m1-22h0m0 11h0m0 37h0m0-22h0m0 44h0m0-55h0m0 29h0m0 5h0m1-26h0m0-17h0m0 3h0" stroke="#85B900" stroke-width="16"/><path d="M1409 816h0m1-22h0m0 11h0m0 37h0m0-22h0m0 44h0m0-55h0m0 29h0m0 5h0m1-26h0m0-17h0m0 3h0" stroke="#2F8A00" stroke-width="8"/><path d="M1411 772h0m0-21h0m1-2h0m0-9h0m0 84h0m0-43h0m0 31h0m0-64h0m0 3h0m1 77h0m0-16h0m0-58h0" stroke="#85B900" stroke-width="16"/><path d="M1411 772h0m0-21h0m1-2h0m0-9h0m0 84h0m0-43h0m0 31h0m0-64h0m0 3h0m1 77h0m0-16h0m0-58h0" stroke="#2F8A00" stroke-width="8"/><path d="M1413 757h0m0-22h0m1-19h0m0 69h0m0-7h0m0 19h0m0-83h0m0 126h0m0-38h0m0 10h0m1 1h0m0-31h0" stroke="#85B900" stroke-width="16"/><path d="M1413 757h0m0-22h0m1-19h0m0 69h0m0-7h0m0 19h0m0-83h0m0 126h0m0-38h0m0 10h0m1 1h0m0-31h0" stroke="#2F8A00" stroke-width="8"/><path d="M1415 780h0m0-23h0m0-12h0m1 34h0m0-5h0m0-46h0m0 65h0m0 5h0m0-1h0m0 49h0m1-83h0m0 16h0" stroke="#85B900" stroke-width="16"/><path d="M1415 780h0m0-23h0m0-12h0m1 34h0m0-5h0m0-46h0m0 65h0m0 5h0m0-1h0m0 49h0m1-83h0m0 16h0" stroke="#2F8A00" stroke-width="8"/><path d="M1417 768h0m0 23h0m0 43h0m1-3h0m0-35h0m0 0h0m0 36h0m0 12h0m0 3h0m0-5h0m1-37h0m0 14h0" stroke="#85B900" stroke-width="16"/><path d="M1417 768h0m0 23h0m0 43h0m1-3h0m0-35h0m0 0h0m0 36h0m0 12h0m0 3h0m0-5h0m1-37h0m0 14h0" stroke="#2F8A00" stroke-width="8"/><path d="M1419 783h0m0 12h0m0-3h0m1 20h0m0 36h0m0-6h0m0 9h0m0-97h0m0 82h0m0-22h0m0 22h0m1-8h0" stroke="#85B900" stroke-width="16"/><path d="M1419 783h0m0 12h0m0-3h0m1 20h0m0 36h0m0-6h0m0 9h0m0-97h0m0 82h0m0-22h0m0 22h0m1-8h0" stroke="#2F8A00" stroke-width="8"/><path d="M1421 791h0m0 11h0m0 3h0m0 19h0m1 12h0m0-28h0m0 26h0m0-55h0m0 60h0m0-44h0m0 24h0m1 53h0" stroke="#85B900" stroke-width="16"/><path d="M1421 791h0m0 11h0m0 3h0m0 19h0m1 12h0m0-28h0m0 26h0m0-55h0m0 60h0m0-44h0m0 24h0m1 53h0" stroke="#2F8A00" stroke-width="8"/><path d="M1423 854h0m0-21h0m0-48h0m0-9h0m0 9h0m1 17h0m0 41h0m0-19h0m0-13h0m0-3h0m0 2h0m0-24h0" stroke="#85B900" stroke-width="16"/><path d="M1423 854h0m0-21h0m0-48h0m0-9h0m0 9h0m1 17h0m0 41h0m0-19h0m0-13h0m0-3h0m0 2h0m0-24h0" stroke="#2F8A00" stroke-width="8"/><path d="M1425 785h0m0-4h0m0 37h0m0-15h0m0-5h0m1 60h0m0-9h0m0 6h0m0-82h0m0 16h0m0 26h0m0 15h0" stroke="#85B900" stroke-width="16"/><path d="M1425 785h0m0-4h0m0 37h0m0-15h0m0-5h0m1 60h0m0-9h0m0 6h0m0-82h0m0 16h0m0 26h0m0 15h0" stroke="#2F8A00" stroke-width="8"/><path d="M1427 828h0m0-17h0m0-35h0m0 38h0m0-12h0m1-31h0m0 56h0m0 29h0m0-46h0m0-64h0m0 106h0m0-72h0" stroke="#85B900" stroke-width="16"/><path d="M1427 828h0m0-17h0m0-35h0m0 38h0m0-12h0m1-31h0m0 56h0m0 29h0m0-46h0m0-64h0m0 106h0m0-72h0" stroke="#2F8A00" stroke-width="8"/><path d="M1428 803h0m1-17h0m0 13h0m0 28h0m0 22h0m0 1h0m1-7h0m0 11h0m0-41h0m0 13h0m0-19h0m0-28h0" stroke="#85B900" stroke-width="16"/><path d="M1428 803h0m1-17h0m0 13h0m0 28h0m0 22h0m0 1h0m1-7h0m0 11h0m0-41h0m0 13h0m0-19h0m0-28h0" stroke="#2F8A00" stroke-width="8"/><path d="M1430 795h0m1 27h0m0 12h0m0 24h0m0-34h0m0-45h0m1 10h0m0 58h0m0-69h0m0 5h0m0 5h0m0 23h0" stroke="#85B900" stroke-width="16"/><path d="M1430 795h0m1 27h0m0 12h0m0 24h0m0-34h0m0-45h0m1 10h0m0 58h0m0-69h0m0 5h0m0 5h0m0 23h0" stroke="#2F8A00" stroke-width="8"/><path d="M1432 798h0m1 7h0m0 21h0m0-46h0m0 9h0m0-18h0m1 20h0m0 42h0m0 22h0m0-39h0m0-8h0m0 38h0" stroke="#85B900" stroke-width="16"/><path d="M1432 798h0m1 7h0m0 21h0m0-46h0m0 9h0m0-18h0m1 20h0m0 42h0m0 22h0m0-39h0m0-8h0m0 38h0" stroke="#2F8A00" stroke-width="8"/><path d="M1434 772h0m1 85h0m0-56h0m0 34h0m0 4h0m0-35h0m1 11h0m0-5h0m0-49h0m0 32h0m0 38h0m0 32h0" stroke="#85B900" stroke-width="16"/><path d="M1434 772h0m1 85h0m0-56h0m0 34h0m0 4h0m0-35h0m1 11h0m0-5h0m0-49h0m0 32h0m0 38h0m0 32h0" stroke="#2F8A00" stroke-width="8"/><path d="M1436 843h0m1-27h0m0 3h0m0-41h0m0 22h0m0 9h0m1-21h0m0-8h0m0 82h0m0 5h0m0-10h0m0 7h0" stroke="#85B900" stroke-width="16"/><path d="M1436 843h0m1-27h0m0 3h0m0-41h0m0 22h0m0 9h0m1-21h0m0-8h0m0 82h0m0 5h0m0-10h0m0 7h0" stroke="#2F8A00" stroke-width="8"/><path d="M1438 863h0m1-74h0m0 44h0m0 2h0m0 29h0m0-11h0m1-6h0m0-3h0m0-7h0m0-72h0m0 71h0m0-45h0" stroke="#85B900" stroke-width="16"/><path d="M1438 863h0m1-74h0m0 44h0m0 2h0m0 29h0m0-11h0m1-6h0m0-3h0m0-7h0m0-72h0m0 71h0m0-45h0" stroke="#2F8A00" stroke-width="8"/><path d="M1440 840h0m1 16h0m0-7h0m0-28h0m0-9h0m0-34h0m1-5h0m0-10h0m0 71h0m0-16h0m0-22h0m0 14h0" stroke="#85B900" stroke-width="16"/><path d="M1440 840h0m1 16h0m0-7h0m0-28h0m0-9h0m0-34h0m1-5h0m0-10h0m0 71h0m0-16h0m0-22h0m0 14h0" stroke="#2F8A00" stroke-width="8"/><path d="M1442 817h0m1-9h0m0 43h0m0 20h0m0-18h0m0-6h0m1-26h0m0 10h0m0-64h0m0-40h0m0 29h0m0 5h0" stroke="#85B900" stroke-width="16"/><path d="M1442 817h0m1-9h0m0 43h0m0 20h0m0-18h0m0-6h0m1-26h0m0 10h0m0-64h0m0-40h0m0 29h0m0 5h0" stroke="#2F8A00" stroke-width="8"/><path d="M1444 767h0m1 17h0m0 28h0m0-40h0m0-11h0m0 17h0m1 6h0m0 77h0m0-8h0m0-17h0m0-112h0m0 124h0" stroke="#85B900" stroke-width="16"/><path d="M1444 767h0m1 17h0m0 28h0m0-40h0m0-11h0m0 17h0m1 6h0m0 77h0m0-8h0m0-17h0m0-112h0m0 124h0" stroke="#2F8A00" stroke-width="8"/><path d="M1446 843h0m0-26h0m1 15h0m0-74h0m0-9h0m0 5h0m0 61h0m1-2h0m0-47h0m0-12h0m0 4h0m0 13h0" stroke="#85B900" stroke-width="16"/><path d="M1446 843h0m0-26h0m1 15h0m0-74h0m0-9h0m0 5h0m0 61h0m1-2h0m0-47h0m0-12h0m0 4h0m0 13h0" stroke="#2F8A00" stroke-width="8"/><path d="M1448 792h0m0 54h0m1-2h0m0-7h0m0-12h0m0 35h0m0-41h0m1-16h0m0 43h0m0-24h0m0-3h0m0 32h0" stroke="#85B900" stroke-width="16"/><path d="M1448 792h0m0 54h0m1-2h0m0-7h0m0-12h0m0 35h0m0-41h0m1-16h0m0 43h0m0-24h0m0-3h0m0 32h0" stroke="#2F8A00" stroke-width="8"/><path d="M1450 851h0m0-41h0m1-43h0m0 32h0m0 49h0m0-18h0m0 9h0m1 17h0m0-30h0m0 23h0m0-16h0m0-18h0" stroke="#85B900" stroke-width="16"/><path d="M1450 851h0m0-41h0m1-43h0m0 32h0m0 49h0m0-18h0m0 9h0m1 17h0m0-30h0m0 23h0m0-16h0m0-18h0" stroke="#2F8A00" stroke-width="8"/><path d="M1452 779h0m0 8h0m1-33h0m0-4h0m0-17h0m0 29h0m0 9h0m2 101h0m2-80h0m1-33h0m0 34h0m0 20h0" stroke="#85B900" stroke-width="16"/><path d="M1452 779h0m0 8h0m1-33h0m0-4h0m0-17h0m0 29h0m0 9h0m2 101h0m2-80h0m1-33h0m0 34h0m0 20h0" stroke="#2F8A00" stroke-width="8"/><path d="M1458 808h0m0 7h0m0-35h0m0-21h0m1 55h0m0-27h0m0 42h0m0-31h0m0-27h0m1 9h0m0-48h0m0 34h0" stroke="#85B900" stroke-width="16"/><path d="M1458 808h0m0 7h0m0-35h0m0-21h0m1 55h0m0-27h0m0 42h0m0-31h0m0-27h0m1 9h0m0-48h0m0 34h0" stroke="#2F8A00" stroke-width="8"/><path d="M1460 776h0m0 10h0m0-8h0m0 28h0m1-32h0m0-14h0m0-34h0m0 30h0m0 15h0m1-2h0m0 64h0m0-2h0" stroke="#85B900" stroke-width="16"/><path d="M1460 776h0m0 10h0m0-8h0m0 28h0m1-32h0m0-14h0m0-34h0m0 30h0m0 15h0m1-2h0m0 64h0m0-2h0" stroke="#2F8A00" stroke-width="8"/><path d="M1462 776h0m0-15h0m0 5h0m0 12h0m1-32h0m0 28h0m0 1h0m0 3h0m0 60h0m0 26h0m1-11h0m0-27h0" stroke="#85B900" stroke-width="16"/><path d="M1462 776h0m0-15h0m0 5h0m0 12h0m1-32h0m0 28h0m0 1h0m0 3h0m0 60h0m0 26h0m1-11h0m0-27h0" stroke="#2F8A00" stroke-width="8"/><path d="M1464 810h0m0-27h0m0-63h0m0 17h0m0 45h0m0-23h0m1 18h0m0-3h0m0-27h0m0 25h0m0 2h0m1 27h0" stroke="#85B900" stroke-width="16"/><path d="M1464 810h0m0-27h0m0-63h0m0 17h0m0 45h0m0-23h0m1 18h0m0-3h0m0-27h0m0 25h0m0 2h0m1 27h0" stroke="#2F8A00" stroke-width="8"/><path d="M1466 834h0m0-49h0m0 20h0m0 0h0m0-53h0m0 3h0m1-13h0m0-2h0m0 41h0m0 35h0m0 8h0m1 15h0" stroke="#85B900" stroke-width="16"/><path d="M1466 834h0m0-49h0m0 20h0m0 0h0m0-53h0m0 3h0m1-13h0m0-2h0m0 41h0m0 35h0m0 8h0m1 15h0" stroke="#2F8A00" stroke-width="8"/><path d="M1468 843h0m0 5h0m0 6h0m0-4h0m0-47h0m0-33h0m1 12h0m0 1h0m0 34h0m0-27h0m0 38h0m1-19h0" stroke="#85B900" stroke-width="16"/><path d="M1468 843h0m0 5h0m0 6h0m0-4h0m0-47h0m0-33h0m1 12h0m0 1h0m0 34h0m0-27h0m0 38h0m1-19h0" stroke="#2F8A00" stroke-width="8"/><path d="M1470 843h0m0 3h0m0 7h0m0 7h0m0-40h0m0-16h0m1-15h0m0 10h0m0-10h0m0-9h0m0 1h0m1 13h0" stroke="#85B900" stroke-width="16"/><path d="M1470 843h0m0 3h0m0 7h0m0 7h0m0-40h0m0-16h0m1-15h0m0 10h0m0-10h0m0-9h0m0 1h0m1 13h0" stroke="#2F8A00" stroke-width="8"/><path d="M1472 894h0m0-112h0m0 25h0m0 6h0m0-67h0m0 82h0m0-36h0m0 11h0m1 23h0m0 3h0m0 11h0m0-12h0" stroke="#85B900" stroke-width="16"/><path d="M1472 894h0m0-112h0m0 25h0m0 6h0m0-67h0m0 82h0m0-36h0m0 11h0m1 23h0m0 3h0m0 11h0m0-12h0" stroke="#2F8A00" stroke-width="8"/><path d="M1473 826h0m1-26h0m0 30h0m0 7h0m0 11h0m0-40h0m0 34h0m0-1h0m1-30h0m0-19h0m0-7h0m0-8h0" stroke="#85B900" stroke-width="16"/><path d="M1473 826h0m1-26h0m0 30h0m0 7h0m0 11h0m0-40h0m0 34h0m0-1h0m1-30h0m0-19h0m0-7h0m0-8h0" stroke="#2F8A00" stroke-width="8"/><path d="M1475 800h0m1 38h0m0 2h0m0 1h0m0 3h0m0-37h0m0-33h0m0 8h0m1-9h0m0 11h0m0 3h0m0 6h0" stroke="#85B900" stroke-width="16"/><path d="M1475 800h0m1 38h0m0 2h0m0 1h0m0 3h0m0-37h0m0-33h0m0 8h0m1-9h0m0 11h0m0 3h0m0 6h0" stroke="#2F8A00" stroke-width="8"/><path d="M1477 794h0m1 11h0m0 42h0m0-10h0m0-20h0m0-19h0m0 17h0m0-23h0m1 64h0m0-45h0m0-38h0m0-11h0" stroke="#85B900" stroke-width="16"/><path d="M1477 794h0m1 11h0m0 42h0m0-10h0m0-20h0m0-19h0m0 17h0m0-23h0m1 64h0m0-45h0m0-38h0m0-11h0" stroke="#2F8A00" stroke-width="8"/><path d="M1479 759h0m0 7h0m1 64h0m0-56h0m0-1h0m0 22h0m0-16h0m0-11h0m0 26h0m1 48h0m0 4h0m0-23h0" stroke="#85B900" stroke-width="16"/><path d="M1479 759h0m0 7h0m1 64h0m0-56h0m0-1h0m0 22h0m0-16h0m0-11h0m0 26h0m1 48h0m0 4h0m0-23h0" stroke="#2F8A00" stroke-width="8"/><path d="M1481 781h0m0-33h0m1 7h0m0 34h0m0 18h0m0-19h0m0-26h0m0-5h0m0 13h0m1 19h0m0 47h0m0-54h0" stroke="#85B900" stroke-width="16"/><path d="M1481 781h0m0-33h0m1 7h0m0 34h0m0 18h0m0-19h0m0-26h0m0-5h0m0 13h0m1 19h0m0 47h0m0-54h0" stroke="#2F8A00" stroke-width="8"/><path d="M1483 843h0m0 15h0m1-47h0m0-12h0m0 36h0m0 5h0m0 0h0m0 7h0m0-3h0m1 11h0m0-22h0m0-31h0" stroke="#85B900" stroke-width="16"/><path d="M1483 843h0m0 15h0m1-47h0m0-12h0m0 36h0m0 5h0m0 0h0m0 7h0m0-3h0m1 11h0m0-22h0m0-31h0" stroke="#2F8A00" stroke-width="8"/><path d="M1485 821h0m0 0h0m1-15h0m0 30h0m0-71h0m0 79h0m0 5h0m0-31h0m0-39h0m1-31h0m0 36h0m0-46h0" stroke="#85B900" stroke-width="16"/><path d="M1485 821h0m0 0h0m1-15h0m0 30h0m0-71h0m0 79h0m0 5h0m0-31h0m0-39h0m1-31h0m0 36h0m0-46h0" stroke="#2F8A00" stroke-width="8"/><path d="M1487 744h0m0 39h0m1-17h0m0 71h0m0-12h0m0-46h0m0-73h0m0 40h0m0 28h0m0 14h0m1 31h0m0-33h0" stroke="#85B900" stroke-width="16"/><path d="M1487 744h0m0 39h0m1-17h0m0 71h0m0-12h0m0-46h0m0-73h0m0 40h0m0 28h0m0 14h0m1 31h0m0-33h0" stroke="#2F8A00" stroke-width="8"/><path d="M1489 715h0m0 35h0m0 33h0m1 52h0m0 13h0m0-4h0m0-17h0m0 37h0m0-73h0m0 7h0m0-80h0m1 46h0" stroke="#85B900" stroke-width="16"/><path d="M1489 715h0m0 35h0m0 33h0m1 52h0m0 13h0m0-4h0m0-17h0m0 37h0m0-73h0m0 7h0m0-80h0m1 46h0" stroke="#2F8A00" stroke-width="8"/><path d="M1491 733h0m0 71h0m0-26h0m0-45h0m1 3h0m0 33h0m0-32h0m0 8h0m0-1h0m0 1h0m0 46h0m1 41h0" stroke="#85B900" stroke-width="16"/><path d="M1491 733h0m0 71h0m0-26h0m0-45h0m1 3h0m0 33h0m0-32h0m0 8h0m0-1h0m0 1h0m0 46h0m1 41h0" stroke="#2F8A00" stroke-width="8"/><path d="M1493 763h0m0-17h0m0 108h0m0-7h0m1-12h0m0-23h0m0 6h0m0 20h0m0-27h0m0-66h0m0 68h0m1-64h0" stroke="#85B900" stroke-width="16"/><path d="M1493 763h0m0-17h0m0 108h0m0-7h0m1-12h0m0-23h0m0 6h0m0 20h0m0-27h0m0-66h0m0 68h0m1-64h0" stroke="#2F8A00" stroke-width="8"/><path d="M1495 753h0m0-17h0m0 31h0m0 42h0m1-16h0m0-46h0m0 9h0m0 27h0m0 22h0m0-70h0m0 14h0m1 3h0" stroke="#85B900" stroke-width="16"/><path d="M1495 753h0m0-17h0m0 31h0m0 42h0m1-16h0m0-46h0m0 9h0m0 27h0m0 22h0m0-70h0m0 14h0m1 3h0" stroke="#2F8A00" stroke-width="8"/><path d="M1497 771h0m0 30h0m0-14h0m0 11h0m1-13h0m0-13h0m0-12h0m0 8h0m0 53h0m0-10h0m0-55h0m1-18h0" stroke="#85B900" stroke-width="16"/><path d="M1497 771h0m0 30h0m0-14h0m0 11h0m1-13h0m0-13h0m0-12h0m0 8h0m0 53h0m0-10h0m0-55h0m1-18h0" stroke="#2F8A00" stroke-width="8"/><path d="M1499 775h0m0-27h0m0 10h0m0 40h0m1-12h0m0 37h0m0 19h0m0-58h0m0-94h0m0 147h0m0 18h0m0-8h0" stroke="#85B900" stroke-width="16"/><path d="M1499 775h0m0-27h0m0 10h0m0 40h0m1-12h0m0 37h0m0 19h0m0-58h0m0-94h0m0 147h0m0 18h0m0-8h0" stroke="#2F8A00" stroke-width="8"/><path d="M1501 763h0m0 78h0m0-32h0m0 29h0m0-41h0m1-127h0m4 81h0m0 92h0m0-40h0m0-53h0m0-27h0m0-6h0" stroke="#85B900" stroke-width="16"/><path d="M1501 763h0m0 78h0m0-32h0m0 29h0m0-41h0m1-127h0m4 81h0m0 92h0m0-40h0m0-53h0m0-27h0m0-6h0" stroke="#2F8A00" stroke-width="8"/><path d="M1507 872h0m0-148h0m0 26h0m0-35h0m0 99h0m0-59h0m1 61h0m0 37h0m0 2h0m0-2h0m0-48h0m0-47h0" stroke="#85B900" stroke-width="16"/><path d="M1507 872h0m0-148h0m0 26h0m0-35h0m0 99h0m0-59h0m1 61h0m0 37h0m0 2h0m0-2h0m0-48h0m0-47h0" stroke="#2F8A00" stroke-width="8"/><path d="M1508 811h0m1-10h0m0 25h0m0 22h0m0 9h0m0-122h0m1 12h0m0 98h0m0-38h0m0 50h0m0-42h0m0 13h0" stroke="#85B900" stroke-width="16"/><path d="M1508 811h0m1-10h0m0 25h0m0 22h0m0 9h0m0-122h0m1 12h0m0 98h0m0-38h0m0 50h0m0-42h0m0 13h0" stroke="#2F8A00" stroke-width="8"/><path d="M1510 817h0m1 44h0m0-24h0m0-65h0m0-31h0m0-13h0m1 35h0m0 47h0m0 32h0m0-21h0m0 10h0m0 16h0" stroke="#85B900" stroke-width="16"/><path d="M1510 817h0m1 44h0m0-24h0m0-65h0m0-31h0m0-13h0m1 35h0m0 47h0m0 32h0m0-21h0m0 10h0m0 16h0" stroke="#2F8A00" stroke-width="8"/><path d="M1512 787h0m1 29h0m0 59h0m0-96h0m0-26h0m0-1h0m0 30h0m1-23h0m0-17h0m0-12h0m0 12h0m0 32h0" stroke="#85B900" stroke-width="16"/><path d="M1512 787h0m1 29h0m0 59h0m0-96h0m0-26h0m0-1h0m0 30h0m1-23h0m0-17h0m0-12h0m0 12h0m0 32h0" stroke="#2F8A00" stroke-width="8"/><path d="M1514 736h0m0 22h0m1 25h0m0-23h0m0 27h0m0 36h0m0-2h0m1-43h0m0-2h0m0-3h0m0 63h0m0-142h0" stroke="#85B900" stroke-width="16"/><path d="M1514 736h0m0 22h0m1 25h0m0-23h0m0 27h0m0 36h0m0-2h0m1-43h0m0-2h0m0-3h0m0 63h0m0-142h0" stroke="#2F8A00" stroke-width="8"/><path d="M1516 845h0m0-36h0m0-6h0m1-74h0m0 27h0m0-16h0m0 49h0m0-37h0m0 116h0m1-78h0m0 63h0m0-3h0" stroke="#85B900" stroke-width="16"/><path d="M1516 845h0m0-36h0m0-6h0m1-74h0m0 27h0m0-16h0m0 49h0m0-37h0m0 116h0m1-78h0m0 63h0m0-3h0" stroke="#2F8A00" stroke-width="8"/><path d="M1518 805h0m0-21h0m0 0h0m0 31h0m1 39h0m0-39h0m0-43h0m0 47h0m0-32h0m1-2h0m0 59h0m0-4h0" stroke="#85B900" stroke-width="16"/><path d="M1518 805h0m0-21h0m0 0h0m0 31h0m1 39h0m0-39h0m0-43h0m0 47h0m0-32h0m1-2h0m0 59h0m0-4h0" stroke="#2F8A00" stroke-width="8"/><path d="M1520 845h0m0 9h0m0-9h0m0-13h0m1 11h0m0 12h0m0-86h0m0-30h0m0 13h0m1-4h0m0 92h0m0-5h0" stroke="#85B900" stroke-width="16"/><path d="M1520 845h0m0 9h0m0-9h0m0-13h0m1 11h0m0 12h0m0-86h0m0-30h0m0 13h0m1-4h0m0 92h0m0-5h0" stroke="#2F8A00" stroke-width="8"/><path d="M1522 767h0m0-33h0m0 50h0m0 63h0m0-1h0m1-35h0m0 2h0m0-13h0m0 10h0m0-21h0m1-4h0m0 2h0" stroke="#85B900" stroke-width="16"/><path d="M1522 767h0m0-33h0m0 50h0m0 63h0m0-1h0m1-35h0m0 2h0m0-13h0m0 10h0m0-21h0m1-4h0m0 2h0" stroke="#2F8A00" stroke-width="8"/><path d="M1524 777h0m0-3h0m0-15h0m0 2h0m0-27h0m1 13h0m0 59h0m0-44h0m0 54h0m0 20h0m1-60h0m0-6h0" stroke="#85B900" stroke-width="16"/><path d="M1524 777h0m0-3h0m0-15h0m0 2h0m0-27h0m1 13h0m0 59h0m0-44h0m0 54h0m0 20h0m1-60h0m0-6h0" stroke="#2F8A00" stroke-width="8"/><path d="M1526 771h0m0 78h0m0-61h0m0 37h0m0-17h0m1 21h0m0-53h0m0 44h0m0-52h0m0-8h0m1 21h0m0 24h0" stroke="#85B900" stroke-width="16"/><path d="M1526 771h0m0 78h0m0-61h0m0 37h0m0-17h0m1 21h0m0-53h0m0 44h0m0-52h0m0-8h0m1 21h0m0 24h0" stroke="#2F8A00" stroke-width="8"/><path d="M1528 765h0m0-27h0m0 17h0m0 15h0m0 14h0m1-6h0m0 14h0m0 14h0m0-13h0m0 24h0m1-22h0m0 41h0" stroke="#85B900" stroke-width="16"/><path d="M1528 765h0m0-27h0m0 17h0m0 15h0m0 14h0m1-6h0m0 14h0m0 14h0m0-13h0m0 24h0m1-22h0m0 41h0" stroke="#2F8A00" stroke-width="8"/><path d="M1530 853h0m0-26h0m0-40h0m0-22h0m0-4h0m1 52h0m0-17h0m0-29h0m0 5h0m0-16h0m1 37h0m0 44h0" stroke="#85B900" stroke-width="16"/><path d="M1530 853h0m0-26h0m0-40h0m0-22h0m0-4h0m1 52h0m0-17h0m0-29h0m0 5h0m0-16h0m1 37h0m0 44h0" stroke="#2F8A00" stroke-width="8"/><path d="M1532 850h0m0 10h0m0-30h0m0-41h0m0-2h0m1 20h0m0 8h0m0-59h0m0 3h0m0 27h0m1-8h0m0 9h0" stroke="#85B900" stroke-width="16"/><path d="M1532 850h0m0 10h0m0-30h0m0-41h0m0-2h0m1 20h0m0 8h0m0-59h0m0 3h0m0 27h0m1-8h0m0 9h0" stroke="#2F8A00" stroke-width="8"/><path d="M1534 753h0m0-23h0m0 27h0m0 24h0m0 39h0m1-57h0m0 10h0m0-11h0m0 106h0m0-83h0m0 32h0m1-32h0" stroke="#85B900" stroke-width="16"/><path d="M1534 753h0m0-23h0m0 27h0m0 24h0m0 39h0m1-57h0m0 10h0m0-11h0m0 106h0m0-83h0m0 32h0m1-32h0" stroke="#2F8A00" stroke-width="8"/><path d="M1536 773h0m0 24h0m0-40h0m0 19h0m0-15h0m0 54h0m1-9h0m0 1h0m0 29h0m0-18h0m0-69h0m1 4h0" stroke="#85B900" stroke-width="16"/><path d="M1536 773h0m0 24h0m0-40h0m0 19h0m0-15h0m0 54h0m1-9h0m0 1h0m0 29h0m0-18h0m0-69h0m1 4h0" stroke="#2F8A00" stroke-width="8"/><path d="M1538 769h0m0 26h0m0 11h0m0-82h0m0 105h0m0 16h0m0-50h0m1 36h0m0-1h0m0-32h0m0 3h0m0-24h0" stroke="#85B900" stroke-width="16"/><path d="M1538 769h0m0 26h0m0 11h0m0-82h0m0 105h0m0 16h0m0-50h0m1 36h0m0-1h0m0-32h0m0 3h0m0-24h0" stroke="#2F8A00" stroke-width="8"/><path d="M1540 859h0m0-40h0m0 7h0m0-22h0m0-8h0m0-37h0m0 10h0m1 58h0m0 19h0m0-37h0m0 54h0m0-79h0" stroke="#85B900" stroke-width="16"/><path d="M1540 859h0m0-40h0m0 7h0m0-22h0m0-8h0m0-37h0m0 10h0m1 58h0m0 19h0m0-37h0m0 54h0m0-79h0" stroke="#2F8A00" stroke-width="8"/><path d="M1542 756h0m0 4h0m0 5h0m0 40h0m0 83h0m0-27h0m0-11h0m0-27h0m1-33h0m0 26h0m0-61h0m0 28h0" stroke="#85B900" stroke-width="16"/><path d="M1542 756h0m0 4h0m0 5h0m0 40h0m0 83h0m0-27h0m0-11h0m0-27h0m1-33h0m0 26h0m0-61h0m0 28h0" stroke="#2F8A00" stroke-width="8"/><path d="M1543 754h0m1 3h0m0 18h0m0-11h0m0-3h0m0-1h0m0-8h0m0 20h0m1 4h0m0-4h0m0 27h0m0-14h0" stroke="#85B900" stroke-width="16"/><path d="M1543 754h0m1 3h0m0 18h0m0-11h0m0-3h0m0-1h0m0-8h0m0 20h0m1 4h0m0-4h0m0 27h0m0-14h0" stroke="#2F8A00" stroke-width="8"/><path d="M1545 770h0m1 85h0m0 12h0m0-19h0m0-3h0m0-15h0m0 18h0m0-20h0m1 43h0m0-6h0m0 5h0m0 9h0" stroke="#85B900" stroke-width="16"/><path d="M1545 770h0m1 85h0m0 12h0m0-19h0m0-3h0m0-15h0m0 18h0m0-20h0m1 43h0m0-6h0m0 5h0m0 9h0" stroke="#2F8A00" stroke-width="8"/><path d="M1547 873h0m1-15h0m0-25h0m0 5h0m0-47h0m0 15h0m0-1h0m0-38h0m1 88h0m0-31h0m0 34h0m0 24h0" stroke="#85B900" stroke-width="16"/><path d="M1547 873h0m1-15h0m0-25h0m0 5h0m0-47h0m0 15h0m0-1h0m0-38h0m1 88h0m0-31h0m0 34h0m0 24h0" stroke="#2F8A00" stroke-width="8"/><path d="M1549 881h0m1-36h0m0-38h0m0-2h0m0-10h0m0 34h0m0 12h0m0 28h0m1-45h0m0 44h0m0-83h0m0-18h0" stroke="#85B900" stroke-width="16"/><path d="M1549 881h0m1-36h0m0-38h0m0-2h0m0-10h0m0 34h0m0 12h0m0 28h0m1-45h0m0 44h0m0-83h0m0-18h0" stroke="#2F8A00" stroke-width="8"/><path d="M1551 849h0m1 17h0m0-73h0m0 5h0m0 10h0m0 56h0m0-70h0m0 45h0m1-31h0m0-10h0m0-15h0m0 73h0" stroke="#85B900" stroke-width="16"/><path d="M1551 849h0m1 17h0m0-73h0m0 5h0m0 10h0m0 56h0m0-70h0m0 45h0m1-31h0m0-10h0m0-15h0m0 73h0" stroke="#2F8A00" stroke-width="8"/><path d="M1553 874h0m1-12h0m0-78h0m0-6h0m0-6h0m0 56h0m0-66h0m0 25h0m1 54h0m0 47h0m0-38h0m0-17h0" stroke="#85B900" stroke-width="16"/><path d="M1553 874h0m1-12h0m0-78h0m0-6h0m0-6h0m0 56h0m0-66h0m0 25h0m1 54h0m0 47h0m0-38h0m0-17h0" stroke="#2F8A00" stroke-width="8"/><path d="M1555 867h0m0-18h0m1 9h0m0-7h0m0 31h0m0-58h0m0-140h0m0 184h0m0-18h0m0-47h0m1-2h0m0 2h0" stroke="#85B900" stroke-width="16"/><path d="M1555 867h0m0-18h0m1 9h0m0-7h0m0 31h0m0-58h0m0-140h0m0 184h0m0-18h0m0-47h0m1-2h0m0 2h0" stroke="#2F8A00" stroke-width="8"/><path d="M1557 856h0m0-39h0m0 33h0m1 11h0m0-77h0m0 12h0m0-15h0m0 86h0m0-26h0m0-23h0m1 31h0m0-86h0" stroke="#85B900" stroke-width="16"/><path d="M1557 856h0m0-39h0m0 33h0m1 11h0m0-77h0m0 12h0m0-15h0m0 86h0m0-26h0m0-23h0m1 31h0m0-86h0" stroke="#2F8A00" stroke-width="8"/><path d="M1559 763h0m0 77h0m0 28h0m1-80h0m0 73h0m0 5h0m0-16h0m0-132h0m0-40h0m0 197h0m0-25h0m0-57h0" stroke="#85B900" stroke-width="16"/><path d="M1559 763h0m0 77h0m0 28h0m1-80h0m0 73h0m0 5h0m0-16h0m0-132h0m0-40h0m0 197h0m0-25h0m0-57h0" stroke="#2F8A00" stroke-width="8"/><path d="M1561 856h0m0-59h0m0 77h0m0-16h0m0-75h0m1-15h0m0-1h0m0-10h0m0-7h0m0 14h0m0 22h0m0 42h0" stroke="#85B900" stroke-width="16"/><path d="M1561 856h0m0-59h0m0 77h0m0-16h0m0-75h0m1-15h0m0-1h0m0-10h0m0-7h0m0 14h0m0 22h0m0 42h0" stroke="#2F8A00" stroke-width="8"/><path d="M1563 858h0m0-79h0m0-6h0m0-22h0m0-15h0m1 22h0m0 14h0m0 10h0m0-54h0m0 50h0m0 25h0m0 45h0" stroke="#85B900" stroke-width="16"/><path d="M1563 858h0m0-79h0m0-6h0m0-22h0m0-15h0m1 22h0m0 14h0m0 10h0m0-54h0m0 50h0m0 25h0m0 45h0" stroke="#2F8A00" stroke-width="8"/><path d="M1565 856h0m0-4h0m0-10h0m0-21h0m0 17h0m1-73h0m0 35h0m0-17h0m0 46h0m0-24h0m0-64h0m0 143h0" stroke="#85B900" stroke-width="16"/><path d="M1565 856h0m0-4h0m0-10h0m0-21h0m0 17h0m1-73h0m0 35h0m0-17h0m0 46h0m0-24h0m0-64h0m0 143h0" stroke="#2F8A00" stroke-width="8"/><path d="M1566 784h0m1-29h0m0 5h0m0 18h0m0 15h0m0 5h0m1 25h0m0 9h0m0-36h0m0 59h0m0-30h0m0 16h0" stroke="#85B900" stroke-width="16"/><path d="M1566 784h0m1-29h0m0 5h0m0 18h0m0 15h0m0 5h0m1 25h0m0 9h0m0-36h0m0 59h0m0-30h0m0 16h0" stroke="#2F8A00" stroke-width="8"/><path d="M1568 867h0m1-30h0m0 23h0m0 15h0m0-3h0m0-7h0m1-63h0m0-10h0m0-22h0m0 38h0m0-84h0m0 110h0" stroke="#85B900" stroke-width="16"/><path d="M1568 867h0m1-30h0m0 23h0m0 15h0m0-3h0m0-7h0m1-63h0m0-10h0m0-22h0m0 38h0m0-84h0m0 110h0" stroke="#2F8A00" stroke-width="8"/><path d="M1570 822h0m0-51h0m1 33h0m0 25h0m0-14h0m0 0h0m0 35h0m1-4h0m0 20h0m0 9h0m0 1h0m0 0h0" stroke="#85B900" stroke-width="16"/><path d="M1570 822h0m0-51h0m1 33h0m0 25h0m0-14h0m0 0h0m0 35h0m1-4h0m0 20h0m0 9h0m0 1h0m0 0h0" stroke="#2F8A00" stroke-width="8"/><path d="M1572 866h0m0-41h0m1-88h0m0 7h0m0 10h0m0 4h0m0 38h0m1 2h0m0 36h0m0-17h0m0-30h0m0 25h0" stroke="#85B900" stroke-width="16"/><path d="M1572 866h0m0-41h0m1-88h0m0 7h0m0 10h0m0 4h0m0 38h0m1 2h0m0 36h0m0-17h0m0-30h0m0 25h0" stroke="#2F8A00" stroke-width="8"/><path d="M1574 773h0m0-24h0m1 15h0m0 1h0m0 71h0m0-13h0m0-60h0m1 12h0m0 51h0m0 22h0m0-1h0m0-69h0" stroke="#85B900" stroke-width="16"/><path d="M1574 773h0m0-24h0m1 15h0m0 1h0m0 71h0m0-13h0m0-60h0m1 12h0m0 51h0m0 22h0m0-1h0m0-69h0" stroke="#2F8A00" stroke-width="8"/><path d="M1576 785h0m0 0h0m1-11h0m0 16h0m0-14h0m0-3h0m0-10h0m1 22h0m0-28h0m0-6h0m0 17h0m0 38h0" stroke="#85B900" stroke-width="16"/><path d="M1576 785h0m0 0h0m1-11h0m0 16h0m0-14h0m0-3h0m0-10h0m1 22h0m0-28h0m0-6h0m0 17h0m0 38h0" stroke="#2F8A00" stroke-width="8"/><path d="M1578 816h0m0 15h0m1 27h0m0-72h0m0 33h0m0 20h0m0 25h0m1-45h0m0 54h0m0-17h0m0-17h0m0-99h0" stroke="#85B900" stroke-width="16"/><path d="M1578 816h0m0 15h0m1 27h0m0-72h0m0 33h0m0 20h0m0 25h0m1-45h0m0 54h0m0-17h0m0-17h0m0-99h0" stroke="#2F8A00" stroke-width="8"/><path d="M1580 840h0m0-9h0m0 24h0m1 3h0m0-12h0m0-60h0m0 19h0m0 13h0m1 12h0m0-14h0m0 12h0m0 5h0" stroke="#85B900" stroke-width="16"/><path d="M1580 840h0m0-9h0m0 24h0m1 3h0m0-12h0m0-60h0m0 19h0m0 13h0m1 12h0m0-14h0m0 12h0m0 5h0" stroke="#2F8A00" stroke-width="8"/><path d="M1582 835h0m0 10h0m0-71h0m1 68h0m0 3h0m0 8h0m0-53h0m0-14h0m1 64h0m0-6h0m0-7h0m0 9h0" stroke="#85B900" stroke-width="16"/><path d="M1582 835h0m0 10h0m0-71h0m1 68h0m0 3h0m0 8h0m0-53h0m0-14h0m1 64h0m0-6h0m0-7h0m0 9h0" stroke="#2F8A00" stroke-width="8"/><path d="M1584 872h0m0-44h0m0 30h0m0-39h0m1 12h0m0-3h0m0-18h0m0-15h0m0-16h0m1-16h0m0 17h0m0 52h0" stroke="#85B900" stroke-width="16"/><path d="M1584 872h0m0-44h0m0 30h0m0-39h0m1 12h0m0-3h0m0-18h0m0-15h0m0-16h0m1-16h0m0 17h0m0 52h0" stroke="#2F8A00" stroke-width="8"/><path d="M1586 840h0m0 29h0m0-40h0m0-45h0m1 3h0m0 2h0m0 56h0m0-52h0m0-27h0m1 11h0m0-24h0m0 19h0" stroke="#85B900" stroke-width="16"/><path d="M1586 840h0m0 29h0m0-40h0m0-45h0m1 3h0m0 2h0m0 56h0m0-52h0m0-27h0m1 11h0m0-24h0m0 19h0" stroke="#2F8A00" stroke-width="8"/><path d="M1588 768h0m0 10h0m0-6h0m0 12h0m1 100h0m0-43h0m0-8h0m0 27h0m0-57h0m0 16h0m1 37h0m0-56h0" stroke="#85B900" stroke-width="16"/><path d="M1588 768h0m0 10h0m0-6h0m0 12h0m1 100h0m0-43h0m0-8h0m0 27h0m0-57h0m0 16h0m1 37h0m0-56h0" stroke="#2F8A00" stroke-width="8"/><path d="M1590 783h0m0-18h0m0 23h0m0-14h0m0-31h0m1-9h0m0 24h0m0 9h0m0 3h0m0 13h0m1 44h0m0-32h0" stroke="#85B900" stroke-width="16"/><path d="M1590 783h0m0-18h0m0 23h0m0-14h0m0-31h0m1-9h0m0 24h0m0 9h0m0 3h0m0 13h0m1 44h0m0-32h0" stroke="#2F8A00" stroke-width="8"/><path d="M1592 837h0m0-46h0m0-61h0m0-40h0m0 189h0m0-15h0m0-48h0m1-27h0m0-45h0m0 41h0m0 55h0m1-146h0" stroke="#85B900" stroke-width="16"/><path d="M1592 837h0m0-46h0m0-61h0m0-40h0m0 189h0m0-15h0m0-48h0m1-27h0m0-45h0m0 41h0m0 55h0m1-146h0" stroke="#2F8A00" stroke-width="8"/><path d="M1598 878h0m0-60h0m0-24h0m1 2h0m0 57h0m0 14h0m0 9h0m0-22h0m1-51h0m0 31h0m0 0h0m0-77h0" stroke="#85B900" stroke-width="16"/><path d="M1598 878h0m0-60h0m0-24h0m1 2h0m0 57h0m0 14h0m0 9h0m0-22h0m1-51h0m0 31h0m0 0h0m0-77h0" stroke="#2F8A00" stroke-width="8"/><path d="M1600 730h0m0 82h0m0 28h0m0 17h0m1 17h0m0 0h0m0-13h0m0-76h0m0 9h0m1-16h0m0 12h0m0 18h0" stroke="#85B900" stroke-width="16"/><path d="M1600 730h0m0 82h0m0 28h0m0 17h0m1 17h0m0 0h0m0-13h0m0-76h0m0 9h0m1-16h0m0 12h0m0 18h0" stroke="#2F8A00" stroke-width="8"/><path d="M1602 793h0m0 1h0m0 14h0m0 21h0m1 30h0m0-41h0m0-26h0m0 71h0m0-7h0m1-4h0m0-62h0m0 50h0" stroke="#85B900" stroke-width="16"/><path d="M1602 793h0m0 1h0m0 14h0m0 21h0m1 30h0m0-41h0m0-26h0m0 71h0m0-7h0m1-4h0m0-62h0m0 50h0" stroke="#2F8A00" stroke-width="8"/><path d="M1604 859h0m0 2h0m0-69h0m0-12h0m1 4h0m0 18h0m0 44h0m0 8h0m0-74h0m1 7h0m0 16h0m0 28h0" stroke="#85B900" stroke-width="16"/><path d="M1604 859h0m0 2h0m0-69h0m0-12h0m1 4h0m0 18h0m0 44h0m0 8h0m0-74h0m1 7h0m0 16h0m0 28h0" stroke="#2F8A00" stroke-width="8"/><path d="M1606 836h0m0 26h0m0-16h0m0-34h0m1-5h0m0-12h0m0-23h0m0 17h0m0 11h0m1-45h0m0 7h0m0-3h0" stroke="#85B900" stroke-width="16"/><path d="M1606 836h0m0 26h0m0-16h0m0-34h0m1-5h0m0-12h0m0-23h0m0 17h0m0 11h0m1-45h0m0 7h0m0-3h0" stroke="#2F8A00" stroke-width="8"/><path d="M1608 823h0m0 5h0m0-12h0m0-10h0m1 35h0m0-77h0m0-8h0m0 47h0m0-44h0m1-28h0m0 10h0m0-2h0" stroke="#85B900" stroke-width="16"/><path d="M1608 823h0m0 5h0m0-12h0m0-10h0m1 35h0m0-77h0m0-8h0m0 47h0m0-44h0m1-28h0m0 10h0m0-2h0" stroke="#2F8A00" stroke-width="8"/><path d="M1610 759h0m0-11h0m0 55h0m0 8h0m1-33h0m0 88h0m0-62h0m0-23h0m0 24h0m0-26h0m1 60h0m0 8h0" stroke="#85B900" stroke-width="16"/><path d="M1610 759h0m0-11h0m0 55h0m0 8h0m1-33h0m0 88h0m0-62h0m0-23h0m0 24h0m0-26h0m1 60h0m0 8h0" stroke="#2F8A00" stroke-width="8"/><path d="M1612 807h0m0 8h0m0-155h0m0 132h0m0-44h0m0 10h0m1 21h0m0-23h0m0 61h0m0 42h0m0-46h0m1-40h0" stroke="#85B900" stroke-width="16"/><path d="M1612 807h0m0 8h0m0-155h0m0 132h0m0-44h0m0 10h0m1 21h0m0-23h0m0 61h0m0 42h0m0-46h0m1-40h0" stroke="#2F8A00" stroke-width="8"/><path d="M1614 773h0m0 25h0m0-33h0m0-51h0m0-106h0m0 18h0m0 21h0m0 36h0m0 16h0m0 64h0m0 57h0m0-44h0" stroke="#85B900" stroke-width="16"/><path d="M1614 773h0m0 25h0m0-33h0m0-51h0m0-106h0m0 18h0m0 21h0m0 36h0m0 16h0m0 64h0m0 57h0m0-44h0" stroke="#2F8A00" stroke-width="8"/><path d="M1615 787h0m0-35h0m0 15h0m0-5h0m0 63h0m1-11h0m0-26h0m0-9h0m0 56h0m0 12h0m0-22h0m0-62h0" stroke="#85B900" stroke-width="16"/><path d="M1615 787h0m0-35h0m0 15h0m0-5h0m0 63h0m1-11h0m0-26h0m0-9h0m0 56h0m0 12h0m0-22h0m0-62h0" stroke="#2F8A00" stroke-width="8"/><path d="M1617 775h0m0 54h0m0-5h0m0-60h0m0 27h0m1-5h0m0 7h0m0-3h0m0-25h0m0-81h0m0 70h0m0 49h0" stroke="#85B900" stroke-width="16"/><path d="M1617 775h0m0 54h0m0-5h0m0-60h0m0 27h0m1-5h0m0 7h0m0-3h0m0-25h0m0-81h0m0 70h0m0 49h0" stroke="#2F8A00" stroke-width="8"/><path d="M1618 821h0m1-45h0m0-31h0m0 48h0m0 25h0m0-1h0m1-24h0m0 61h0m0-69h0m0-7h0m0 32h0m0 14h0" stroke="#85B900" stroke-width="16"/><path d="M1618 821h0m1-45h0m0-31h0m0 48h0m0 25h0m0-1h0m1-24h0m0 61h0m0-69h0m0-7h0m0 32h0m0 14h0" stroke="#2F8A00" stroke-width="8"/><path d="M1620 835h0m1-62h0m0 41h0m0 34h0m0-32h0m0 28h0m1-24h0m0-7h0m0-4h0m0-9h0m0 6h0m0 40h0" stroke="#85B900" stroke-width="16"/><path d="M1620 835h0m1-62h0m0 41h0m0 34h0m0-32h0m0 28h0m1-24h0m0-7h0m0-4h0m0-9h0m0 6h0m0 40h0" stroke="#2F8A00" stroke-width="8"/><path d="M1622 860h0m1-2h0m0-3h0m0-57h0m0-5h0m0 23h0m1 0h0m0-22h0m0-26h0m0 49h0m0 18h0m0-88h0" stroke="#85B900" stroke-width="16"/><path d="M1622 860h0m1-2h0m0-3h0m0-57h0m0-5h0m0 23h0m1 0h0m0-22h0m0-26h0m0 49h0m0 18h0m0-88h0" stroke="#2F8A00" stroke-width="8"/><path d="M1624 853h0m1 0h0m0-9h0m0 14h0m0-2h0m0 13h0m1-22h0m0 10h0m0 2h0m0-76h0m0 76h0m0-26h0" stroke="#85B900" stroke-width="16"/><path d="M1624 853h0m1 0h0m0-9h0m0 14h0m0-2h0m0 13h0m1-22h0m0 10h0m0 2h0m0-76h0m0 76h0m0-26h0" stroke="#2F8A00" stroke-width="8"/><path d="M1626 775h0m1 10h0m0 49h0m0-46h0m0 2h0m0-8h0m1 4h0m0-55h0m0 64h0m0-26h0m0 40h0m0 1h0" stroke="#85B900" stroke-width="16"/><path d="M1626 775h0m1 10h0m0 49h0m0-46h0m0 2h0m0-8h0m1 4h0m0-55h0m0 64h0m0-26h0m0 40h0m0 1h0" stroke="#2F8A00" stroke-width="8"/><path d="M1628 757h0m1 12h0m0-10h0m0 10h0m0-4h0m0 11h0m1 8h0m0 18h0m0 25h0m0-43h0m0 58h0m0 29h0" stroke="#85B900" stroke-width="16"/><path d="M1628 757h0m1 12h0m0-10h0m0 10h0m0-4h0m0 11h0m1 8h0m0 18h0m0 25h0m0-43h0m0 58h0m0 29h0" stroke="#2F8A00" stroke-width="8"/><path d="M1630 862h0m1 16h0m0-2h0m0 0h0m0 0h0m0-19h0m0 9h0m1-81h0m0-34h0m0 33h0m0 68h0m0-124h0" stroke="#85B900" stroke-width="16"/><path d="M1630 862h0m1 16h0m0-2h0m0 0h0m0 0h0m0-19h0m0 9h0m1-81h0m0-34h0m0 33h0m0 68h0m0-124h0" stroke="#2F8A00" stroke-width="8"/><path d="M1632 849h0m0-52h0m0-35h0m1 22h0m0 23h0m0-41h0m0 9h0m0 5h0m1-7h0m0-39h0m0 2h0m0 24h0" stroke="#85B900" stroke-width="16"/><path d="M1632 849h0m0-52h0m0-35h0m1 22h0m0 23h0m0-41h0m0 9h0m0 5h0m1-7h0m0-39h0m0 2h0m0 24h0" stroke="#2F8A00" stroke-width="8"/><path d="M1634 838h0m0 24h0m0-24h0m1-46h0m0 22h0m0-20h0m0 10h0m0 29h0m1 4h0m0 17h0m0 17h0m0-48h0" stroke="#85B900" stroke-width="16"/><path d="M1634 838h0m0 24h0m0-24h0m1-46h0m0 22h0m0-20h0m0 10h0m0 29h0m1 4h0m0 17h0m0 17h0m0-48h0" stroke="#2F8A00" stroke-width="8"/><path d="M1636 860h0m0-81h0m0-11h0m1 58h0m0-40h0m0-12h0m0 21h0m0-19h0m1 2h0m0 17h0m0-3h0m0-12h0" stroke="#85B900" stroke-width="16"/><path d="M1636 860h0m0-81h0m0-11h0m1 58h0m0-40h0m0-12h0m0 21h0m0-19h0m1 2h0m0 17h0m0-3h0m0-12h0" stroke="#2F8A00" stroke-width="8"/><path d="M1638 772h0m0-11h0m0 32h0m1 78h0m0-19h0m0-67h0m0 70h0m0 7h0m1-21h0m0-33h0m0-8h0m0 14h0" stroke="#85B900" stroke-width="16"/><path d="M1638 772h0m0-11h0m0 32h0m1 78h0m0-19h0m0-67h0m0 70h0m0 7h0m1-21h0m0-33h0m0-8h0m0 14h0" stroke="#2F8A00" stroke-width="8"/><path d="M1640 874h0m0-97h0m0 18h0m0-48h0m1-2h0m0-1h0m0 16h0m0 9h0m0 5h0m1 16h0m0 49h0m0 34h0" stroke="#85B900" stroke-width="16"/><path d="M1640 874h0m0-97h0m0 18h0m0-48h0m1-2h0m0-1h0m0 16h0m0 9h0m0 5h0m1 16h0m0 49h0m0 34h0" stroke="#2F8A00" stroke-width="8"/><path d="M1642 854h0m0-4h0m0-23h0m0-1h0m1-25h0m0-11h0m0 19h0m0 45h0m0-10h0m1-13h0m0-18h0m0-39h0" stroke="#85B900" stroke-width="16"/><path d="M1642 854h0m0-4h0m0-23h0m0-1h0m1-25h0m0-11h0m0 19h0m0 45h0m0-10h0m1-13h0m0-18h0m0-39h0" stroke="#2F8A00" stroke-width="8"/><path d="M1644 765h0m0 16h0m0 44h0m0-2h0m1-35h0m0 6h0m0 40h0m0-9h0m0 27h0m1-64h0m0 21h0m0-32h0" stroke="#85B900" stroke-width="16"/><path d="M1644 765h0m0 16h0m0 44h0m0-2h0m1-35h0m0 6h0m0 40h0m0-9h0m0 27h0m1-64h0m0 21h0m0-32h0" stroke="#2F8A00" stroke-width="8"/><path d="M1646 748h0m0 21h0m0 31h0m0 23h0m1 32h0m0-10h0m0-79h0m0 35h0m0 38h0m1-24h0m0-16h0m0 7h0" stroke="#85B900" stroke-width="16"/><path d="M1646 748h0m0 21h0m0 31h0m0 23h0m1 32h0m0-10h0m0-79h0m0 35h0m0 38h0m1-24h0m0-16h0m0 7h0" stroke="#2F8A00" stroke-width="8"/><path d="M1648 811h0m0-73h0m0 38h0m0 48h0m0 42h0m1-1h0m0-10h0m0-107h0m0 32h0m0 30h0m1 24h0m0 1h0" stroke="#85B900" stroke-width="16"/><path d="M1648 811h0m0-73h0m0 38h0m0 48h0m0 42h0m1-1h0m0-10h0m0-107h0m0 32h0m0 30h0m1 24h0m0 1h0" stroke="#2F8A00" stroke-width="8"/><path d="M1650 795h0m0 14h0m0 0h0m0 5h0m0 31h0m1-2h0m0-25h0m0-35h0m0-32h0m0 77h0m1-17h0m0 40h0" stroke="#85B900" stroke-width="16"/><path d="M1650 795h0m0 14h0m0 0h0m0 5h0m0 31h0m1-2h0m0-25h0m0-35h0m0-32h0m0 77h0m1-17h0m0 40h0" stroke="#2F8A00" stroke-width="8"/><path d="M1652 849h0m0-9h0m0 7h0m0-9h0m0 31h0m1-28h0m0-19h0m0-6h0m0 13h0m0 37h0m1-41h0m0-75h0" stroke="#85B900" stroke-width="16"/><path d="M1652 849h0m0-9h0m0 7h0m0-9h0m0 31h0m1-28h0m0-19h0m0-6h0m0 13h0m0 37h0m1-41h0m0-75h0" stroke="#2F8A00" stroke-width="8"/><path d="M1654 779h0m0 39h0m0 66h0m0-72h0m0 0h0m0 25h0m1-46h0m0-23h0m0-26h0m0 18h0m0-3h0m1 11h0" stroke="#85B900" stroke-width="16"/><path d="M1654 779h0m0 39h0m0 66h0m0-72h0m0 0h0m0 25h0m1-46h0m0-23h0m0-26h0m0 18h0m0-3h0m1 11h0" stroke="#2F8A00" stroke-width="8"/><path d="M1656 755h0m0-28h0m0 51h0m0 26h0m0 42h0m0 20h0m1-80h0m0 41h0m0-53h0m0-43h0m0-1h0m1 13h0" stroke="#85B900" stroke-width="16"/><path d="M1656 755h0m0-28h0m0 51h0m0 26h0m0 42h0m0 20h0m1-80h0m0 41h0m0-53h0m0-43h0m0-1h0m1 13h0" stroke="#2F8A00" stroke-width="8"/><path d="M1658 824h0m0-18h0m0-9h0m0 21h0m0 9h0m0-15h0m1 55h0m0-51h0m0-51h0m0-37h0m0-3h0m1 2h0" stroke="#85B900" stroke-width="16"/><path d="M1658 824h0m0-18h0m0-9h0m0 21h0m0 9h0m0-15h0m1 55h0m0-51h0m0-51h0m0-37h0m0-3h0m1 2h0" stroke="#2F8A00" stroke-width="8"/><path d="M1660 743h0m0 9h0m0 70h0m0 22h0m4-134h0m2 65h0m0 5h0m0 22h0m0-42h0m0-17h0m1 7h0m0-7h0" stroke="#85B900" stroke-width="16"/><path d="M1660 743h0m0 9h0m0 70h0m0 22h0m4-134h0m2 65h0m0 5h0m0 22h0m0-42h0m0-17h0m1 7h0m0-7h0" stroke="#2F8A00" stroke-width="8"/><path d="M1667 762h0m0 8h0m0 16h0m1 11h0m0-42h0m0 2h0m0 21h0m0 55h0m0-3h0m0-12h0m1 42h0m0-27h0" stroke="#85B900" stroke-width="16"/><path d="M1667 762h0m0 8h0m0 16h0m1 11h0m0-42h0m0 2h0m0 21h0m0 55h0m0-3h0m0-12h0m1 42h0m0-27h0" stroke="#2F8A00" stroke-width="8"/><path d="M1669 855h0m0-2h0m0-64h0m1 0h0m0 35h0m0-59h0m0 67h0m0-35h0m0 17h0m0-17h0m1 15h0m0-39h0" stroke="#85B900" stroke-width="16"/><path d="M1669 855h0m0-2h0m0-64h0m1 0h0m0 35h0m0-59h0m0 67h0m0-35h0m0 17h0m0-17h0m1 15h0m0-39h0" stroke="#2F8A00" stroke-width="8"/><path d="M1671 840h0m0-49h0m0 57h0m1-28h0m0-48h0m0 41h0m0-4h0m0-20h0m0-41h0m0 5h0m1 115h0m0-107h0" stroke="#85B900" stroke-width="16"/><path d="M1671 840h0m0-49h0m0 57h0m1-28h0m0-48h0m0 41h0m0-4h0m0-20h0m0-41h0m0 5h0m1 115h0m0-107h0" stroke="#2F8A00" stroke-width="8"/><path d="M1673 746h0m0-11h0m0-6h0m0-7h0m1 54h0m0 40h0m0-31h0m0-36h0m0-45h0m0 54h0m0 31h0m0-24h0" stroke="#85B900" stroke-width="16"/><path d="M1673 746h0m0-11h0m0-6h0m0-7h0m1 54h0m0 40h0m0-31h0m0-36h0m0-45h0m0 54h0m0 31h0m0-24h0" stroke="#2F8A00" stroke-width="8"/><path d="M1675 768h0m0 51h0m0-22h0m0-20h0m0 55h0m1-19h0m0-12h0m0-41h0m0 54h0m0 1h0m0-23h0m0-6h0" stroke="#85B900" stroke-width="16"/><path d="M1675 768h0m0 51h0m0-22h0m0-20h0m0 55h0m1-19h0m0-12h0m0-41h0m0 54h0m0 1h0m0-23h0m0-6h0" stroke="#2F8A00" stroke-width="8"/><path d="M1677 841h0m0-21h0m0-18h0m0 2h0m0-1h0m1 34h0m0-29h0m0-24h0m0-23h0m0 17h0m0-33h0m0 2h0" stroke="#85B900" stroke-width="16"/><path d="M1677 841h0m0-21h0m0-18h0m0 2h0m0-1h0m1 34h0m0-29h0m0-24h0m0-23h0m0 17h0m0-33h0m0 2h0" stroke="#2F8A00" stroke-width="8"/><path d="M1679 723h0m0 22h0m0 8h0m0 7h0m0-5h0m1-9h0m0 21h0m0-48h0m0 0h0m0-35h0m0 111h0m0 11h0" stroke="#85B900" stroke-width="16"/><path d="M1679 723h0m0 22h0m0 8h0m0 7h0m0-5h0m1-9h0m0 21h0m0-48h0m0 0h0m0-35h0m0 111h0m0 11h0" stroke="#2F8A00" stroke-width="8"/><path d="M1680 854h0m1 18h0m0-13h0m0-56h0m0 16h0m0-45h0m1 12h0m0 15h0m0 54h0m0-24h0m0-20h0m0-14h0" stroke="#85B900" stroke-width="16"/><path d="M1680 854h0m1 18h0m0-13h0m0-56h0m0 16h0m0-45h0m1 12h0m0 15h0m0 54h0m0-24h0m0-20h0m0-14h0" stroke="#2F8A00" stroke-width="8"/><path d="M1682 866h0m1-18h0m0 9h0m0-49h0m0-20h0m0 82h0m1-41h0m0 10h0m0 6h0m0 4h0m0 12h0m0-27h0" stroke="#85B900" stroke-width="16"/><path d="M1682 866h0m1-18h0m0 9h0m0-49h0m0-20h0m0 82h0m1-41h0m0 10h0m0 6h0m0 4h0m0 12h0m0-27h0" stroke="#2F8A00" stroke-width="8"/><path d="M1684 865h0m1-8h0m0-25h0m0 9h0m0-9h0m0-17h0m1 18h0m0-45h0m0 25h0m0-17h0m0-67h0m0 55h0" stroke="#85B900" stroke-width="16"/><path d="M1684 865h0m1-8h0m0-25h0m0 9h0m0-9h0m0-17h0m1 18h0m0-45h0m0 25h0m0-17h0m0-67h0m0 55h0" stroke="#2F8A00" stroke-width="8"/><path d="M1686 789h0m1 95h0m0-100h0m0-5h0m0-28h0m0-16h0m0 34h0m1 3h0m0 58h0m0 41h0m0-31h0m0-71h0" stroke="#85B900" stroke-width="16"/><path d="M1686 789h0m1 95h0m0-100h0m0-5h0m0-28h0m0-16h0m0 34h0m1 3h0m0 58h0m0 41h0m0-31h0m0-71h0" stroke="#2F8A00" stroke-width="8"/><path d="M1688 834h0m0 12h0m1 25h0m0-9h0m0-8h0m0-48h0m0 56h0m1-14h0m0 21h0m0-15h0m0-38h0m0-92h0" stroke="#85B900" stroke-width="16"/><path d="M1688 834h0m0 12h0m1 25h0m0-9h0m0-8h0m0-48h0m0 56h0m1-14h0m0 21h0m0-15h0m0-38h0m0-92h0" stroke="#2F8A00" stroke-width="8"/><path d="M1690 841h0m0 20h0m0-98h0m1 4h0m0 34h0m0 45h0m0-12h0m0-39h0m1 20h0m0-16h0m0-62h0m0-3h0" stroke="#85B900" stroke-width="16"/><path d="M1690 841h0m0 20h0m0-98h0m1 4h0m0 34h0m0 45h0m0-12h0m0-39h0m1 20h0m0-16h0m0-62h0m0-3h0" stroke="#2F8A00" stroke-width="8"/><path d="M1692 764h0m0 0h0m0 32h0m1 41h0m0-74h0m0 15h0m0-19h0m0 47h0m1-40h0m0 49h0m0-10h0m0 3h0" stroke="#85B900" stroke-width="16"/><path d="M1692 764h0m0 0h0m0 32h0m1 41h0m0-74h0m0 15h0m0-19h0m0 47h0m1-40h0m0 49h0m0-10h0m0 3h0" stroke="#2F8A00" stroke-width="8"/><path d="M1694 816h0m0-27h0m0 7h0m1 83h0m0-12h0m0-39h0m0 46h0m0 0h0m1-9h0m0-5h0m0-59h0m0-6h0" stroke="#85B900" stroke-width="16"/><path d="M1694 816h0m0-27h0m0 7h0m1 83h0m0-12h0m0-39h0m0 46h0m0 0h0m1-9h0m0-5h0m0-59h0m0-6h0" stroke="#2F8A00" stroke-width="8"/><path d="M1696 783h0m0 62h0m0 19h0m1-10h0m0-46h0m0-27h0m0 2h0m0-5h0m1 14h0m0-17h0m0 19h0m0 10h0" stroke="#85B900" stroke-width="16"/><path d="M1696 783h0m0 62h0m0 19h0m1-10h0m0-46h0m0-27h0m0 2h0m0-5h0m1 14h0m0-17h0m0 19h0m0 10h0" stroke="#2F8A00" stroke-width="8"/><path d="M1698 793h0m0 16h0m0-14h0m1 2h0m0-5h0m0 65h0m0-49h0m0 14h0m1-20h0m0-2h0m0 35h0m0-7h0" stroke="#85B900" stroke-width="16"/><path d="M1698 793h0m0 16h0m0-14h0m1 2h0m0-5h0m0 65h0m0-49h0m0 14h0m1-20h0m0-2h0m0 35h0m0-7h0" stroke="#2F8A00" stroke-width="8"/><path d="M1700 826h0m0-39h0m0 7h0m1 60h0m0 11h0m0-75h0m0-9h0m0 17h0m1-14h0m0 18h0m0-3h0m0 45h0" stroke="#85B900" stroke-width="16"/><path d="M1700 826h0m0-39h0m0 7h0m1 60h0m0 11h0m0-75h0m0-9h0m0 17h0m1-14h0m0 18h0m0-3h0m0 45h0" stroke="#2F8A00" stroke-width="8"/><path d="M1702 869h0m0 6h0m0-34h0m1 6h0m0 21h0m0-32h0m0 48h0m0-49h0m0-21h0m1 11h0m0 37h0m0-12h0" stroke="#85B900" stroke-width="16"/><path d="M1702 869h0m0 6h0m0-34h0m1 6h0m0 21h0m0-32h0m0 48h0m0-49h0m0-21h0m1 11h0m0 37h0m0-12h0" stroke="#2F8A00" stroke-width="8"/><path d="M1704 876h0m0-106h0m0 93h0m0 4h0m0 7h0m1-26h0m0 13h0m0-44h0m0-7h0m0 68h0m0-69h0m1 42h0" stroke="#85B900" stroke-width="16"/><path d="M1704 876h0m0-106h0m0 93h0m0 4h0m0 7h0m1-26h0m0 13h0m0-44h0m0-7h0m0 68h0m0-69h0m1 42h0" stroke="#2F8A00" stroke-width="8"/><path d="M1706 814h0m0 38h0m0-43h0m0 9h0m0 25h0m0-6h0m1 32h0m0-8h0m0-49h0m0-1h0m0 34h0m1-53h0" stroke="#85B900" stroke-width="16"/><path d="M1706 814h0m0 38h0m0-43h0m0 9h0m0 25h0m0-6h0m1 32h0m0-8h0m0-49h0m0-1h0m0 34h0m1-53h0" stroke="#2F8A00" stroke-width="8"/><path d="M1708 766h0m0 61h0m0-34h0m0 39h0m0 9h0m0-32h0m1-18h0m0 23h0m0-15h0m0 34h0m0 1h0m1-16h0" stroke="#85B900" stroke-width="16"/><path d="M1708 766h0m0 61h0m0-34h0m0 39h0m0 9h0m0-32h0m1-18h0m0 23h0m0-15h0m0 34h0m0 1h0m1-16h0" stroke="#2F8A00" stroke-width="8"/><path d="M1710 861h0m0-16h0m0-53h0m0-7h0m0-4h0m0 63h0m1 7h0m0-36h0m0-25h0m0 8h0m0 4h0m1 56h0" stroke="#85B900" stroke-width="16"/><path d="M1710 861h0m0-16h0m0-53h0m0-7h0m0-4h0m0 63h0m1 7h0m0-36h0m0-25h0m0 8h0m0 4h0m1 56h0" stroke="#2F8A00" stroke-width="8"/><path d="M1712 824h0m0-36h0m0-6h0m0-7h0m0 46h0m0-5h0m1-26h0m0-5h0m0-20h0m0 5h0m0 7h0m1 67h0" stroke="#85B900" stroke-width="16"/><path d="M1712 824h0m0-36h0m0-6h0m0-7h0m0 46h0m0-5h0m1-26h0m0-5h0m0-20h0m0 5h0m0 7h0m1 67h0" stroke="#2F8A00" stroke-width="8"/><path d="M1714 789h0m0 51h0m0-14h0m0-112h0m0 64h0m0 72h0m0-5h0m1-64h0m0-8h0m0-7h0m0-19h0m0 18h0" stroke="#85B900" stroke-width="16"/><path d="M1714 789h0m0 51h0m0-14h0m0-112h0m0 64h0m0 72h0m0-5h0m1-64h0m0-8h0m0-7h0m0-19h0m0 18h0" stroke="#2F8A00" stroke-width="8"/><path d="M1716 775h0m0 60h0m0-23h0m0-65h0m0 61h0m0 33h0m0-47h0m1 50h0m0-13h0m0-56h0m0 36h0m0 5h0" stroke="#85B900" stroke-width="16"/><path d="M1716 775h0m0 60h0m0-23h0m0-65h0m0 61h0m0 33h0m0-47h0m1 50h0m0-13h0m0-56h0m0 36h0m0 5h0" stroke="#2F8A00" stroke-width="8"/><path d="M1718 789h0m0 23h0m0-35h0m0 8h0m0 16h0m0 22h0m0 7h0m1-89h0m0 5h0m0 29h0m0 38h0m0-47h0" stroke="#85B900" stroke-width="16"/><path d="M1718 789h0m0 23h0m0-35h0m0 8h0m0 16h0m0 22h0m0 7h0m1-89h0m0 5h0m0 29h0m0 38h0m0-47h0" stroke="#2F8A00" stroke-width="8"/><path d="M1720 818h0m0-45h0m0 54h0m0-5h0m0-2h0m0-64h0m0-9h0m1 22h0m0 19h0m0-5h0m0-9h0m0 59h0" stroke="#85B900" stroke-width="16"/><path d="M1720 818h0m0-45h0m0 54h0m0-5h0m0-2h0m0-64h0m0-9h0m1 22h0m0 19h0m0-5h0m0-9h0m0 59h0" stroke="#2F8A00" stroke-width="8"/><path d="M1722 791h0m0 23h0m0 22h0m0-2h0m0-10h0m0-61h0m0 73h0m1 16h0m0-45h0m0-41h0m0-23h0m0-17h0" stroke="#85B900" stroke-width="16"/><path d="M1722 791h0m0 23h0m0 22h0m0-2h0m0-10h0m0-61h0m0 73h0m1 16h0m0-45h0m0-41h0m0-23h0m0-17h0" stroke="#2F8A00" stroke-width="8"/><path d="M1724 741h0m0-7h0m0 16h0m0 31h0m0 83h0m0-107h0m0-22h0m0 46h0m1 40h0m0-20h0m0-42h0m0 29h0" stroke="#85B900" stroke-width="16"/><path d="M1724 741h0m0-7h0m0 16h0m0 31h0m0 83h0m0-107h0m0-22h0m0 46h0m1 40h0m0-20h0m0-42h0m0 29h0" stroke="#2F8A00" stroke-width="8"/><path d="M1725 799h0m1 31h0m0-9h0m0-38h0m0-29h0m0 18h0m0-39h0m0-2h0m1 47h0m0 37h0m0 11h0m0 23h0" stroke="#85B900" stroke-width="16"/><path d="M1725 799h0m1 31h0m0-9h0m0-38h0m0-29h0m0 18h0m0-39h0m0-2h0m1 47h0m0 37h0m0 11h0m0 23h0" stroke="#2F8A00" stroke-width="8"/><path d="M1727 823h0m1-40h0m0 7h0m0 34h0m0-56h0m0 76h0m0 9h0m0-62h0m1-36h0m0 42h0m0 11h0m0 30h0" stroke="#85B900" stroke-width="16"/><path d="M1727 823h0m1-40h0m0 7h0m0 34h0m0-56h0m0 76h0m0 9h0m0-62h0m1-36h0m0 42h0m0 11h0m0 30h0" stroke="#2F8A00" stroke-width="8"/><path d="M1729 835h0m1-21h0m0-33h0m0 21h0m0 15h0m0-42h0m0-9h0m0 10h0m1-14h0m0-28h0m0 37h0m0-42h0" stroke="#85B900" stroke-width="16"/><path d="M1729 835h0m1-21h0m0-33h0m0 21h0m0 15h0m0-42h0m0-9h0m0 10h0m1-14h0m0-28h0m0 37h0m0-42h0" stroke="#2F8A00" stroke-width="8"/><path d="M1731 745h0m1-10h0m0 17h0m0 71h0m0 39h0m0-172h0m0-53h0m0 219h0m0-20h0m0-66h0m1-4h0m0 23h0" stroke="#85B900" stroke-width="16"/><path d="M1731 745h0m1-10h0m0 17h0m0 71h0m0 39h0m0-172h0m0-53h0m0 219h0m0-20h0m0-66h0m1-4h0m0 23h0" stroke="#2F8A00" stroke-width="8"/><path d="M1733 733h0m0 1h0m0 30h0m1 24h0m0-18h0m0-29h0m0 27h0m0-26h0m0 97h0m0-25h0m1-32h0m0 50h0" stroke="#85B900" stroke-width="16"/><path d="M1733 733h0m0 1h0m0 30h0m1 24h0m0-18h0m0-29h0m0 27h0m0-26h0m0 97h0m0-25h0m1-32h0m0 50h0" stroke="#2F8A00" stroke-width="8"/><path d="M1735 778h0m0-17h0m0 40h0m1-56h0m0 29h0m0-18h0m0-20h0m0 16h0m0 9h0m0 10h0m1 27h0m0-40h0" stroke="#85B900" stroke-width="16"/><path d="M1735 778h0m0-17h0m0 40h0m1-56h0m0 29h0m0-18h0m0-20h0m0 16h0m0 9h0m0 10h0m1 27h0m0-40h0" stroke="#2F8A00" stroke-width="8"/><path d="M1737 816h0m0 39h0m0-74h0m1-112h0m2 45h0m2 41h0m0 27h0m0 25h0m0-5h0m1-35h0m0-18h0m0-27h0" stroke="#85B900" stroke-width="16"/><path d="M1737 816h0m0 39h0m0-74h0m1-112h0m2 45h0m2 41h0m0 27h0m0 25h0m0-5h0m1-35h0m0-18h0m0-27h0" stroke="#2F8A00" stroke-width="8"/><path d="M1743 752h0m0 49h0m1 45h0m0 19h0m0-47h0m0 17h0m0-44h0m0-42h0m0 10h0m1 1h0m0 33h0m0 31h0" stroke="#85B900" stroke-width="16"/><path d="M1743 752h0m0 49h0m1 45h0m0 19h0m0-47h0m0 17h0m0-44h0m0-42h0m0 10h0m1 1h0m0 33h0m0 31h0" stroke="#2F8A00" stroke-width="8"/><path d="M1745 874h0m0-52h0m0 35h0m1 13h0m0-20h0m0 6h0m0 11h0m0-143h0m0 125h0m0-29h0m0 2h0m1-26h0" stroke="#85B900" stroke-width="16"/><path d="M1745 874h0m0-52h0m0 35h0m1 13h0m0-20h0m0 6h0m0 11h0m0-143h0m0 125h0m0-29h0m0 2h0m1-26h0" stroke="#2F8A00" stroke-width="8"/><path d="M1747 824h0m0 25h0m0-25h0m0 20h0m1-17h0m0 37h0m0-2h0m0 9h0m0-4h0m0-29h0m0-26h0m1 19h0" stroke="#85B900" stroke-width="16"/><path d="M1747 824h0m0 25h0m0-25h0m0 20h0m1-17h0m0 37h0m0-2h0m0 9h0m0-4h0m0-29h0m0-26h0m1 19h0" stroke="#2F8A00" stroke-width="8"/><path d="M1749 791h0m0 51h0m0-15h0m0 40h0m1-32h0m0-46h0m0 46h0m0-15h0m0-46h0m0 64h0m0-2h0m1-7h0" stroke="#85B900" stroke-width="16"/><path d="M1749 791h0m0 51h0m0-15h0m0 40h0m1-32h0m0-46h0m0 46h0m0-15h0m0-46h0m0 64h0m0-2h0m1-7h0" stroke="#2F8A00" stroke-width="8"/><path d="M1751 801h0m0 16h0m0 7h0m0-19h0m1 0h0m0 25h0m0-34h0m0 57h0m0-13h0m0-28h0m0 11h0m1-39h0" stroke="#85B900" stroke-width="16"/><path d="M1751 801h0m0 16h0m0 7h0m0-19h0m1 0h0m0 25h0m0-34h0m0 57h0m0-13h0m0-28h0m0 11h0m1-39h0" stroke="#2F8A00" stroke-width="8"/><path d="M1753 816h0m0 39h0m0-62h0m0 6h0m1 14h0m0-21h0m0-17h0m0-3h0m0-14h0m0 30h0m0-13h0m1 17h0" stroke="#85B900" stroke-width="16"/><path d="M1753 816h0m0 39h0m0-62h0m0 6h0m1 14h0m0-21h0m0-17h0m0-3h0m0-14h0m0 30h0m0-13h0m1 17h0" stroke="#2F8A00" stroke-width="8"/><path d="M1755 791h0m0 53h0m0-24h0m0 17h0m1 4h0m0-24h0m0-17h0m0 32h0m0-14h0m0-28h0m0 14h0m1 32h0" stroke="#85B900" stroke-width="16"/><path d="M1755 791h0m0 53h0m0-24h0m0 17h0m1 4h0m0-24h0m0-17h0m0 32h0m0-14h0m0-28h0m0 14h0m1 32h0" stroke="#2F8A00" stroke-width="8"/><path d="M1757 822h0m0 34h0m0-40h0m0-41h0m1-1h0m0 44h0m0-25h0m0 5h0m0 8h0m0 16h0m0 37h0m1 7h0" stroke="#85B900" stroke-width="16"/><path d="M1757 822h0m0 34h0m0-40h0m0-41h0m1-1h0m0 44h0m0-25h0m0 5h0m0 8h0m0 16h0m0 37h0m1 7h0" stroke="#2F8A00" stroke-width="8"/><path d="M1759 868h0m0-22h0m0 32h0m0-20h0m0 5h0m1-56h0m0 7h0m0-18h0m0-27h0m0-21h0m0 25h0m0 41h0" stroke="#85B900" stroke-width="16"/><path d="M1759 868h0m0-22h0m0 32h0m0-20h0m0 5h0m1-56h0m0 7h0m0-18h0m0-27h0m0-21h0m0 25h0m0 41h0" stroke="#2F8A00" stroke-width="8"/><path d="M1760 803h0m1 56h0m0 6h0m0-4h0m0-8h0m0-19h0m1-20h0m0 5h0m0-32h0m0 41h0m0 36h0m0 6h0" stroke="#85B900" stroke-width="16"/><path d="M1760 803h0m1 56h0m0 6h0m0-4h0m0-8h0m0-19h0m1-20h0m0 5h0m0-32h0m0 41h0m0 36h0m0 6h0" stroke="#2F8A00" stroke-width="8"/><path d="M1762 859h0m1 11h0m0-13h0m0-61h0m0 17h0m0 40h0m1-27h0m0 20h0m0 2h0m0-18h0m0-31h0m0 24h0" stroke="#85B900" stroke-width="16"/><path d="M1762 859h0m1 11h0m0-13h0m0-61h0m0 17h0m0 40h0m1-27h0m0 20h0m0 2h0m0-18h0m0-31h0m0 24h0" stroke="#2F8A00" stroke-width="8"/><path d="M1764 847h0m1 6h0m0 4h0m0 6h0m0 0h0m0-3h0m1 10h0m0-1h0m0-2h0m0-18h0m0-26h0m0-30h0" stroke="#85B900" stroke-width="16"/><path d="M1764 847h0m1 6h0m0 4h0m0 6h0m0 0h0m0-3h0m1 10h0m0-1h0m0-2h0m0-18h0m0-26h0m0-30h0" stroke="#2F8A00" stroke-width="8"/><path d="M1766 779h0m1 1h0m0 1h0m0-25h0m0 22h0m0-1h0m1 0h0m0-8h0m0 64h0m0 17h0m0 18h0m0-22h0" stroke="#85B900" stroke-width="16"/><path d="M1766 779h0m1 1h0m0 1h0m0-25h0m0 22h0m0-1h0m1 0h0m0-8h0m0 64h0m0 17h0m0 18h0m0-22h0" stroke="#2F8A00" stroke-width="8"/><path d="M1768 801h0m0 1h0m1 19h0m0-4h0m0 16h0m0-39h0m0-3h0m1 41h0m0 3h0m0-5h0m0 14h0m0-60h0" stroke="#85B900" stroke-width="16"/><path d="M1768 801h0m0 1h0m1 19h0m0-4h0m0 16h0m0-39h0m0-3h0m1 41h0m0 3h0m0-5h0m0 14h0m0-60h0" stroke="#2F8A00" stroke-width="8"/><path d="M1770 802h0m0 30h0m1 12h0m0-1h0m0-66h0m0 4h0m0-33h0m1 16h0m0 56h0m0-6h0m0 15h0m0-4h0" stroke="#85B900" stroke-width="16"/><path d="M1770 802h0m0 30h0m1 12h0m0-1h0m0-66h0m0 4h0m0-33h0m1 16h0m0 56h0m0-6h0m0 15h0m0-4h0" stroke="#2F8A00" stroke-width="8"/><path d="M1772 809h0m0-18h0m1 15h0m0-7h0m0 68h0m0 0h0m0-37h0m1 12h0m0-28h0m0-15h0m0-16h0m0 39h0" stroke="#85B900" stroke-width="16"/><path d="M1772 809h0m0-18h0m1 15h0m0-7h0m0 68h0m0 0h0m0-37h0m1 12h0m0-28h0m0-15h0m0-16h0m0 39h0" stroke="#2F8A00" stroke-width="8"/><path d="M1774 810h0m0-55h0m1 8h0m0-3h0m0-34h0m0 35h0m0 29h0m1 36h0m0-80h0m0-27h0m0 62h0m0 17h0" stroke="#85B900" stroke-width="16"/><path d="M1774 810h0m0-55h0m1 8h0m0-3h0m0-34h0m0 35h0m0 29h0m1 36h0m0-80h0m0-27h0m0 62h0m0 17h0" stroke="#2F8A00" stroke-width="8"/><path d="M1776 759h0m0 24h0m1 17h0m0-15h0m0-20h0m0-4h0m0 16h0m1-34h0m0 4h0m0 25h0m0 16h0m0-78h0" stroke="#85B900" stroke-width="16"/><path d="M1776 759h0m0 24h0m1 17h0m0-15h0m0-20h0m0-4h0m0 16h0m1-34h0m0 4h0m0 25h0m0 16h0m0-78h0" stroke="#2F8A00" stroke-width="8"/><path d="M1778 745h0m0-20h0m0 14h0m1 36h0m0 0h0m0-15h0m0-27h0m0 13h0m1 96h0m0-54h0m0 71h0m0-100h0" stroke="#85B900" stroke-width="16"/><path d="M1778 745h0m0-20h0m0 14h0m1 36h0m0 0h0m0-15h0m0-27h0m0 13h0m1 96h0m0-54h0m0 71h0m0-100h0" stroke="#2F8A00" stroke-width="8"/><path d="M1780 740h0m0 64h0m0-47h0m1-8h0m0 47h0m0-51h0m0-5h0m0-27h0m1 56h0m0 21h0m0 49h0m0-1h0" stroke="#85B900" stroke-width="16"/><path d="M1780 740h0m0 64h0m0-47h0m1-8h0m0 47h0m0-51h0m0-5h0m0-27h0m1 56h0m0 21h0m0 49h0m0-1h0" stroke="#2F8A00" stroke-width="8"/><path d="M1782 840h0m0-18h0m0 3h0m1-62h0m0-8h0m0-19h0m0 54h0m0-46h0m1 4h0m0 47h0m0 21h0m0 16h0" stroke="#85B900" stroke-width="16"/><path d="M1782 840h0m0-18h0m0 3h0m1-62h0m0-8h0m0-19h0m0 54h0m0-46h0m1 4h0m0 47h0m0 21h0m0 16h0" stroke="#2F8A00" stroke-width="8"/><path d="M1784 822h0m0 3h0m0-30h0m1-32h0m0-8h0m0-13h0m0-29h0m0 66h0m1-60h0m0 55h0m0 0h0m0 74h0" stroke="#85B900" stroke-width="16"/><path d="M1784 822h0m0 3h0m0-30h0m1-32h0m0-8h0m0-13h0m0-29h0m0 66h0m1-60h0m0 55h0m0 0h0m0 74h0" stroke="#2F8A00" stroke-width="8"/><path d="M1786 826h0m0-18h0m0 30h0m1-91h0m0 7h0m0 85h0m0 18h0m0-40h0m1-58h0m0-14h0m0 39h0m0-42h0" stroke="#85B900" stroke-width="16"/><path d="M1786 826h0m0-18h0m0 30h0m1-91h0m0 7h0m0 85h0m0 18h0m0-40h0m1-58h0m0-14h0m0 39h0m0-42h0" stroke="#2F8A00" stroke-width="8"/><path d="M1788 796h0m0-55h0m0 40h0m1 20h0m0-16h0m0 77h0m0-9h0m0 0h0m1 16h0m0-31h0m0 0h0m0 17h0" stroke="#85B900" stroke-width="16"/><path d="M1788 796h0m0-55h0m0 40h0m1 20h0m0-16h0m0 77h0m0-9h0m0 0h0m1 16h0m0-31h0m0 0h0m0 17h0" stroke="#2F8A00" stroke-width="8"/><path d="M1790 840h0m0-28h0m0-15h0m1 34h0m0-11h0m0 33h0m0-67h0m0 1h0m1 47h0m0-75h0m0 50h0m0-15h0" stroke="#85B900" stroke-width="16"/><path d="M1790 840h0m0-28h0m0-15h0m1 34h0m0-11h0m0 33h0m0-67h0m0 1h0m1 47h0m0-75h0m0 50h0m0-15h0" stroke="#2F8A00" stroke-width="8"/><path d="M1792 694h0m0 140h0m0-48h0m0 4h0m1-51h0m0 47h0m0-10h0m0 8h0m0-25h0m1 61h0m0-3h0m0 30h0" stroke="#85B900" stroke-width="16"/><path d="M1792 694h0m0 140h0m0-48h0m0 4h0m1-51h0m0 47h0m0-10h0m0 8h0m0-25h0m1 61h0m0-3h0m0 30h0" stroke="#2F8A00" stroke-width="8"/><path d="M1794 793h0m0-12h0m0 44h0m0 39h0m1 12h0m0-3h0m0 0h0m0-6h0m0-46h0m0 57h0m1-76h0m0-49h0" stroke="#85B900" stroke-width="16"/><path d="M1794 793h0m0-12h0m0 44h0m0 39h0m1 12h0m0-3h0m0 0h0m0-6h0m0-46h0m0 57h0m1-76h0m0-49h0" stroke="#2F8A00" stroke-width="8"/><path d="M1796 735h0m0 17h0m0 28h0m0 36h0m0 48h0m1-62h0m0-34h0m0-6h0m0 36h0m0-14h0m1-26h0m0 33h0" stroke="#85B900" stroke-width="16"/><path d="M1796 735h0m0 17h0m0 28h0m0 36h0m0 48h0m1-62h0m0-34h0m0-6h0m0 36h0m0-14h0m1-26h0m0 33h0" stroke="#2F8A00" stroke-width="8"/><path d="M1798 786h0m0-18h0m0-44h0m0 107h0m0 21h0m0-36h0m1 3h0m0-19h0m0-13h0m0-9h0m0 6h0m1-8h0" stroke="#85B900" stroke-width="16"/><path d="M1798 786h0m0-18h0m0-44h0m0 107h0m0 21h0m0-36h0m1 3h0m0-19h0m0-13h0m0-9h0m0 6h0m1-8h0" stroke="#2F8A00" stroke-width="8"/><path d="M1800 799h0m0 33h0m0-14h0m0-39h0m0 39h0m0-15h0m1 54h0m0 3h0m0-13h0m0 20h0m0-37h0m1 1h0" stroke="#85B900" stroke-width="16"/><path d="M1800 799h0m0 33h0m0-14h0m0-39h0m0 39h0m0-15h0m1 54h0m0 3h0m0-13h0m0 20h0m0-37h0m1 1h0" stroke="#2F8A00" stroke-width="8"/><path d="M1802 848h0m0-4h0m0-6h0m0-68h0m0 36h0m0 43h0m0-39h0m1-35h0m0 8h0m0 34h0m0 6h0m0-5h0" stroke="#85B900" stroke-width="16"/><path d="M1802 848h0m0-4h0m0-6h0m0-68h0m0 36h0m0 43h0m0-39h0m1-35h0m0 8h0m0 34h0m0 6h0m0-5h0" stroke="#2F8A00" stroke-width="8"/><path d="M1804 821h0m0 14h0m0-11h0m0-13h0m0 0h0m0-7h0m0 27h0m1-3h0m0 16h0m0-21h0m0-18h0m0 57h0" stroke="#85B900" stroke-width="16"/><path d="M1804 821h0m0 14h0m0-11h0m0-13h0m0 0h0m0-7h0m0 27h0m1-3h0m0 16h0m0-21h0m0-18h0m0 57h0" stroke="#2F8A00" stroke-width="8"/><path d="M1806 868h0m0-2h0m0-3h0m0-12h0m0 10h0m0-51h0m0 11h0m1 29h0m0 9h0m0-19h0m0-13h0m0-9h0" stroke="#85B900" stroke-width="16"/><path d="M1806 868h0m0-2h0m0-3h0m0-12h0m0 10h0m0-51h0m0 11h0m1 29h0m0 9h0m0-19h0m0-13h0m0-9h0" stroke="#2F8A00" stroke-width="8"/><path d="M1808 843h0m0 20h0m0-30h0m0-6h0m0 6h0m0-17h0m0 35h0m1-22h0m0 12h0m0-4h0m0-3h0m0-13h0" stroke="#85B900" stroke-width="16"/><path d="M1808 843h0m0 20h0m0-30h0m0-6h0m0 6h0m0-17h0m0 35h0m1-22h0m0 12h0m0-4h0m0-3h0m0-13h0" stroke="#2F8A00" stroke-width="8"/><path d="M1810 814h0m0 20h0m0 16h0m0 5h0m0-17h0m0-13h0m0 3h0m1 46h0m0-53h0m0 3h0m0-6h0m0 37h0" stroke="#85B900" stroke-width="16"/><path d="M1810 814h0m0 20h0m0 16h0m0 5h0m0-17h0m0-13h0m0 3h0m1 46h0m0-53h0m0 3h0m0-6h0m0 37h0" stroke="#2F8A00" stroke-width="8"/><path d="M1811 829h0m1-23h0m0 4h0m0 21h0m0-9h0m0-34h0m0 63h0m0-20h0m0 23h0m1 4h0m0 8h0m0-11h0" stroke="#85B900" stroke-width="16"/><path d="M1811 829h0m1-23h0m0 4h0m0 21h0m0-9h0m0-34h0m0 63h0m0-20h0m0 23h0m1 4h0m0 8h0m0-11h0" stroke="#2F8A00" stroke-width="8"/><path d="M1813 871h0m0-31h0m1 26h0m0-21h0m0-9h0m0-28h0m0 3h0m0 0h0m0-13h0m1-1h0m0 7h0m0 29h0" stroke="#85B900" stroke-width="16"/><path d="M1813 871h0m0-31h0m1 26h0m0-21h0m0-9h0m0-28h0m0 3h0m0 0h0m0-13h0m1-1h0m0 7h0m0 29h0" stroke="#2F8A00" stroke-width="8"/><path d="M1815 861h0m0-27h0m1-20h0m0-2h0m0 41h0m0-26h0m0-1h0m0 36h0m0-11h0m1-25h0m0-25h0m0 3h0" stroke="#85B900" stroke-width="16"/><path d="M1815 861h0m0-27h0m1-20h0m0-2h0m0 41h0m0-26h0m0-1h0m0 36h0m0-11h0m1-25h0m0-25h0m0 3h0" stroke="#2F8A00" stroke-width="8"/><path d="M1817 800h0m0 54h0m1-23h0m0-12h0m0-15h0m0 3h0m0 7h0m0 40h0m0-39h0m1-14h0m0-3h0m0 11h0" stroke="#85B900" stroke-width="16"/><path d="M1817 800h0m0 54h0m1-23h0m0-12h0m0-15h0m0 3h0m0 7h0m0 40h0m0-39h0m1-14h0m0-3h0m0 11h0" stroke="#2F8A00" stroke-width="8"/><path d="M1819 811h0m0-8h0m1 19h0m0-17h0m0-6h0m0-18h0m0-9h0m0 13h0m0 14h0m1 57h0m0-8h0m0-39h0" stroke="#85B900" stroke-width="16"/><path d="M1819 811h0m0-8h0m1 19h0m0-17h0m0-6h0m0-18h0m0-9h0m0 13h0m0 14h0m1 57h0m0-8h0m0-39h0" stroke="#2F8A00" stroke-width="8"/><path d="M1821 820h0m0 14h0m1-2h0m0 34h0m0-10h0m0 4h0m0-6h0m0-50h0m0 13h0m1 8h0m0 32h0m0-66h0" stroke="#85B900" stroke-width="16"/><path d="M1821 820h0m0 14h0m1-2h0m0 34h0m0-10h0m0 4h0m0-6h0m0-50h0m0 13h0m1 8h0m0 32h0m0-66h0" stroke="#2F8A00" stroke-width="8"/><path d="M1823 757h0m0 32h0m1 24h0m0 22h0m0 8h0m0-9h0m0 0h0m0 2h0m0-34h0m1 3h0m0-39h0m0 13h0" stroke="#85B900" stroke-width="16"/><path d="M1823 757h0m0 32h0m1 24h0m0 22h0m0 8h0m0-9h0m0 0h0m0 2h0m0-34h0m1 3h0m0-39h0m0 13h0" stroke="#2F8A00" stroke-width="8"/><path d="M1825 785h0m0-23h0m1-6h0m0 0h0m0-3h0m0-14h0m0 39h0m0-12h0m0 8h0m1-13h0m0 14h0m0 32h0" stroke="#85B900" stroke-width="16"/><path d="M1825 785h0m0-23h0m1-6h0m0 0h0m0-3h0m0-14h0m0 39h0m0-12h0m0 8h0m1-13h0m0 14h0m0 32h0" stroke="#2F8A00" stroke-width="8"/><path d="M1827 851h0m0 3h0m1-59h0m0 42h0m0-9h0m0-7h0m0-97h0m0 71h0m0-38h0m0 13h0m1-10h0m0 9h0" stroke="#85B900" stroke-width="16"/><path d="M1827 851h0m0 3h0m1-59h0m0 42h0m0-9h0m0-7h0m0-97h0m0 71h0m0-38h0m0 13h0m1-10h0m0 9h0" stroke="#2F8A00" stroke-width="8"/><path d="M1829 838h0m0-6h0m0 12h0m1 14h0m0-70h0m0-2h0m0 71h0m0 12h0m0-13h0m0-86h0m1 37h0m0 45h0" stroke="#85B900" stroke-width="16"/><path d="M1829 838h0m0-6h0m0 12h0m1 14h0m0-70h0m0-2h0m0 71h0m0 12h0m0-13h0m0-86h0m1 37h0m0 45h0" stroke="#2F8A00" stroke-width="8"/><path d="M1831 797h0m0 42h0m0-24h0m1-39h0m0 98h0m0-49h0m0-21h0m0-47h0m0 26h0m0 54h0m0 26h0m1-45h0" stroke="#85B900" stroke-width="16"/><path d="M1831 797h0m0 42h0m0-24h0m1-39h0m0 98h0m0-49h0m0-21h0m0-47h0m0 26h0m0 54h0m0 26h0m1-45h0" stroke="#2F8A00" stroke-width="8"/><path d="M1833 861h0m0-7h0m0-4h0m0-38h0m1-18h0m0-18h0m0 21h0m0-7h0m0-38h0m0 10h0m0 0h0m1 63h0" stroke="#85B900" stroke-width="16"/><path d="M1833 861h0m0-7h0m0-4h0m0-38h0m1-18h0m0-18h0m0 21h0m0-7h0m0-38h0m0 10h0m0 0h0m1 63h0" stroke="#2F8A00" stroke-width="8"/><path d="M1835 832h0m0 27h0m0 1h0m0-93h0m1-6h0m0 37h0m0-39h0m0 34h0m0-30h0m0 12h0m0 25h0m1-14h0" stroke="#85B900" stroke-width="16"/><path d="M1835 832h0m0 27h0m0 1h0m0-93h0m1-6h0m0 37h0m0-39h0m0 34h0m0-30h0m0 12h0m0 25h0m1-14h0" stroke="#2F8A00" stroke-width="8"/><path d="M1837 753h0m0-1h0m0-2h0m0-28h0m1 37h0m2-41h0m4 125h0m0 14h0m0-5h0m0-15h0m0-47h0m0 27h0" stroke="#85B900" stroke-width="16"/><path d="M1837 753h0m0-1h0m0-2h0m0-28h0m1 37h0m2-41h0m4 125h0m0 14h0m0-5h0m0-15h0m0-47h0m0 27h0" stroke="#2F8A00" stroke-width="8"/><path d="M1844 852h0m1 12h0m0-46h0m0 26h0m0 8h0m0-8h0m1 26h0m0-43h0m0 12h0m0 9h0m0-38h0m0-81h0" stroke="#85B900" stroke-width="16"/><path d="M1844 852h0m1 12h0m0-46h0m0 26h0m0 8h0m0-8h0m1 26h0m0-43h0m0 12h0m0 9h0m0-38h0m0-81h0" stroke="#2F8A00" stroke-width="8"/><path d="M1846 779h0m1-6h0m0 60h0m0-33h0m0-26h0m0-12h0m1-7h0m0 40h0m0-35h0m0 9h0m0-21h0m0 8h0" stroke="#85B900" stroke-width="16"/><path d="M1846 779h0m1-6h0m0 60h0m0-33h0m0-26h0m0-12h0m1-7h0m0 40h0m0-35h0m0 9h0m0-21h0m0 8h0" stroke="#2F8A00" stroke-width="8"/><path d="M1848 749h0m1 36h0m0 40h0m0-10h0m0 3h0m0 2h0m1-53h0m0-22h0m0 19h0m0 34h0m0-84h0m0 97h0" stroke="#85B900" stroke-width="16"/><path d="M1848 749h0m1 36h0m0 40h0m0-10h0m0 3h0m0 2h0m1-53h0m0-22h0m0 19h0m0 34h0m0-84h0m0 97h0" stroke="#2F8A00" stroke-width="8"/><path d="M1850 807h0m0-11h0m1 38h0m0-46h0m0 74h0m0-29h0m0-40h0m1 27h0m0-57h0m0 41h0m0-45h0m0 29h0" stroke="#85B900" stroke-width="16"/><path d="M1850 807h0m0-11h0m1 38h0m0-46h0m0 74h0m0-29h0m0-40h0m1 27h0m0-57h0m0 41h0m0-45h0m0 29h0" stroke="#2F8A00" stroke-width="8"/><path d="M1852 857h0m0-18h0m1-68h0m0 10h0m0-21h0m0 17h0m0-36h0m1 56h0m0 54h0m0-16h0m0-24h0m0-4h0" stroke="#85B900" stroke-width="16"/><path d="M1852 857h0m0-18h0m1-68h0m0 10h0m0-21h0m0 17h0m0-36h0m1 56h0m0 54h0m0-16h0m0-24h0m0-4h0" stroke="#2F8A00" stroke-width="8"/><path d="M1854 759h0m0 0h0m1 18h0m0 74h0m0-13h0m0 46h0m0-14h0m0-21h0m1 20h0m0-12h0m0-21h0m0 15h0" stroke="#85B900" stroke-width="16"/><path d="M1854 759h0m0 0h0m1 18h0m0 74h0m0-13h0m0 46h0m0-14h0m0-21h0m1 20h0m0-12h0m0-21h0m0 15h0" stroke="#2F8A00" stroke-width="8"/><path d="M1856 744h0m0 61h0m0 8h0m0 33h0m1-56h0m0-2h0m0 18h0m0 20h0m0 6h0m1 35h0m0-55h0m0 37h0" stroke="#85B900" stroke-width="16"/><path d="M1856 744h0m0 61h0m0 8h0m0 33h0m1-56h0m0-2h0m0 18h0m0 20h0m0 6h0m1 35h0m0-55h0m0 37h0" stroke="#2F8A00" stroke-width="8"/><path d="M1858 837h0m0-30h0m0-3h0m0 3h0m1-13h0m0-2h0m0 14h0m0 51h0m0 19h0m1 7h0m0-51h0m0-15h0" stroke="#85B900" stroke-width="16"/><path d="M1858 837h0m0-30h0m0-3h0m0 3h0m1-13h0m0-2h0m0 14h0m0 51h0m0 19h0m1 7h0m0-51h0m0-15h0" stroke="#2F8A00" stroke-width="8"/><path d="M1860 817h0m0-5h0m0 6h0m0-14h0m1-2h0m0 31h0m0 6h0m0-28h0m0 21h0m1 45h0m0 0h0m0-16h0" stroke="#85B900" stroke-width="16"/><path d="M1860 817h0m0-5h0m0 6h0m0-14h0m1-2h0m0 31h0m0 6h0m0-28h0m0 21h0m1 45h0m0 0h0m0-16h0" stroke="#2F8A00" stroke-width="8"/><path d="M1862 883h0m0-25h0m0-12h0m0 12h0m1-3h0m0 17h0m0-1h0m0 1h0m0-8h0m1-8h0m0-16h0m0-5h0" stroke="#85B900" stroke-width="16"/><path d="M1862 883h0m0-25h0m0-12h0m0 12h0m1-3h0m0 17h0m0-1h0m0 1h0m0-8h0m1-8h0m0-16h0m0-5h0" stroke="#2F8A00" stroke-width="8"/><path d="M1864 839h0m0-45h0m0 39h0m0-2h0m0 53h0m0-45h0m1 35h0m0-4h0m0-17h0m0 10h0m0 8h0m1-13h0" stroke="#85B900" stroke-width="16"/><path d="M1864 839h0m0-45h0m0 39h0m0-2h0m0 53h0m0-45h0m1 35h0m0-4h0m0-17h0m0 10h0m0 8h0m1-13h0" stroke="#2F8A00" stroke-width="8"/><path d="M1866 845h0m0-1h0m0-20h0m0 24h0m0 16h0m0-34h0m1 18h0m0-7h0m0 12h0m0 2h0m0-17h0m1-12h0" stroke="#85B900" stroke-width="16"/><path d="M1866 845h0m0-1h0m0-20h0m0 24h0m0 16h0m0-34h0m1 18h0m0-7h0m0 12h0m0 2h0m0-17h0m1-12h0" stroke="#2F8A00" stroke-width="8"/><path d="M1868 821h0m0 27h0m0 5h0m0 18h0m0-16h0m0 2h0m1-2h0m0-16h0m0 13h0m0-30h0m0-4h0m1 14h0" stroke="#85B900" stroke-width="16"/><path d="M1868 821h0m0 27h0m0 5h0m0 18h0m0-16h0m0 2h0m1-2h0m0-16h0m0 13h0m0-30h0m0-4h0m1 14h0" stroke="#2F8A00" stroke-width="8"/><path d="M1870 840h0m0 12h0m0-9h0m0-17h0m0-7h0m0 3h0m1 6h0m0 18h0m0 0h0m0-22h0m0 31h0m1 17h0" stroke="#85B900" stroke-width="16"/><path d="M1870 840h0m0 12h0m0-9h0m0-17h0m0-7h0m0 3h0m1 6h0m0 18h0m0 0h0m0-22h0m0 31h0m1 17h0" stroke="#2F8A00" stroke-width="8"/><path d="M1872 869h0m0 0h0m0 0h0m0 3h0m0-7h0m0-13h0m1 17h0m0-21h0m0 7h0m0-25h0m0-5h0m1 9h0" stroke="#85B900" stroke-width="16"/><path d="M1872 869h0m0 0h0m0 0h0m0 3h0m0-7h0m0-13h0m1 17h0m0-21h0m0 7h0m0-25h0m0-5h0m1 9h0" stroke="#2F8A00" stroke-width="8"/><path d="M1874 833h0m0 36h0m0-16h0m0 20h0m0 1h0m0-44h0m1 18h0m0 12h0m0 0h0m0-25h0m0 1h0m1 5h0" stroke="#85B900" stroke-width="16"/><path d="M1874 833h0m0 36h0m0-16h0m0 20h0m0 1h0m0-44h0m1 18h0m0 12h0m0 0h0m0-25h0m0 1h0m1 5h0" stroke="#2F8A00" stroke-width="8"/><path d="M1876 814h0m0 3h0m0 11h0m0 20h0m0-14h0m0-10h0m1 15h0m0-36h0m0 3h0m0 13h0m0-9h0m1 2h0" stroke="#85B900" stroke-width="16"/><path d="M1876 814h0m0 3h0m0 11h0m0 20h0m0-14h0m0-10h0m1 15h0m0-36h0m0 3h0m0 13h0m0-9h0m1 2h0" stroke="#2F8A00" stroke-width="8"/><path d="M1878 848h0m0 13h0m0-26h0m0-8h0m0 3h0m0 33h0m1 2h0m0-19h0m0-20h0m0-6h0m0-19h0m1 15h0" stroke="#85B900" stroke-width="16"/><path d="M1878 848h0m0 13h0m0-26h0m0-8h0m0 3h0m0 33h0m1 2h0m0-19h0m0-20h0m0-6h0m0-19h0m1 15h0" stroke="#2F8A00" stroke-width="8"/><path d="M1880 812h0m0 37h0m0-14h0m0-3h0m0 17h0m0 7h0m1 4h0m0 4h0m0-35h0m0-18h0m0 32h0m1-28h0" stroke="#85B900" stroke-width="16"/><path d="M1880 812h0m0 37h0m0-14h0m0-3h0m0 17h0m0 7h0m1 4h0m0 4h0m0-35h0m0-18h0m0 32h0m1-28h0" stroke="#2F8A00" stroke-width="8"/><path d="M1882 822h0m0-9h0m0 42h0m0-49h0m0-15h0m0-4h0m1-2h0m0 8h0m0 23h0m0 28h0m0-17h0m1-35h0" stroke="#85B900" stroke-width="16"/><path d="M1882 822h0m0-9h0m0 42h0m0-49h0m0-15h0m0-4h0m1-2h0m0 8h0m0 23h0m0 28h0m0-17h0m1-35h0" stroke="#2F8A00" stroke-width="8"/><path d="M1884 824h0m0-18h0m0 31h0m0 35h0m0-48h0m0 26h0m0-6h0m1-47h0m0 0h0m0 10h0m0 13h0m0-1h0" stroke="#85B900" stroke-width="16"/><path d="M1884 824h0m0-18h0m0 31h0m0 35h0m0-48h0m0 26h0m0-6h0m1-47h0m0 0h0m0 10h0m0 13h0m0-1h0" stroke="#2F8A00" stroke-width="8"/><path d="M1886 805h0m0 28h0m0-31h0m0 30h0m0 19h0m0-7h0m0-27h0m1 12h0m0-5h0m0 21h0m0 14h0m0-26h0" stroke="#85B900" stroke-width="16"/><path d="M1886 805h0m0 28h0m0-31h0m0 30h0m0 19h0m0-7h0m0-27h0m1 12h0m0-5h0m0 21h0m0 14h0m0-26h0" stroke="#2F8A00" stroke-width="8"/><path d="M1888 797h0m0 26h0m0-9h0m0 35h0m0-89h0m0 88h0m0-26h0m0 23h0m1-52h0m0 46h0m0-16h0m0 36h0" stroke="#85B900" stroke-width="16"/><path d="M1888 797h0m0 26h0m0-9h0m0 35h0m0-89h0m0 88h0m0-26h0m0 23h0m1-52h0m0 46h0m0-16h0m0 36h0" stroke="#2F8A00" stroke-width="8"/><path d="M1889 827h0m1-12h0m0 22h0m0-18h0m0-5h0m0 22h0m0-19h0m0-33h0m1 5h0m0 21h0m0-15h0m0-3h0" stroke="#85B900" stroke-width="16"/><path d="M1889 827h0m1-12h0m0 22h0m0-18h0m0-5h0m0 22h0m0-19h0m0-33h0m1 5h0m0 21h0m0-15h0m0-3h0" stroke="#2F8A00" stroke-width="8"/><path d="M1891 779h0m1 3h0m0 19h0m0 8h0m0 31h0m0-55h0m0 28h0m0 15h0m1-45h0m0 36h0m0-25h0m0 69h0" stroke="#85B900" stroke-width="16"/><path d="M1891 779h0m1 3h0m0 19h0m0 8h0m0 31h0m0-55h0m0 28h0m0 15h0m1-45h0m0 36h0m0-25h0m0 69h0" stroke="#2F8A00" stroke-width="8"/><path d="M1893 874h0m1 0h0m0 1h0m0-7h0m0 6h0m0-14h0m0 3h0m0-25h0m1 31h0m0-23h0m0-17h0m0 36h0" stroke="#85B900" stroke-width="16"/><path d="M1893 874h0m1 0h0m0 1h0m0-7h0m0 6h0m0-14h0m0 3h0m0-25h0m1 31h0m0-23h0m0-17h0m0 36h0" stroke="#2F8A00" stroke-width="8"/><path d="M1895 863h0m1-21h0m0-49h0m0 45h0m0-59h0m0-4h0m0-2h0m0 21h0m1 23h0m0 23h0m0 9h0m0-28h0" stroke="#85B900" stroke-width="16"/><path d="M1895 863h0m1-21h0m0-49h0m0 45h0m0-59h0m0-4h0m0-2h0m0 21h0m1 23h0m0 23h0m0 9h0m0-28h0" stroke="#2F8A00" stroke-width="8"/><path d="M1897 860h0m1-47h0m0-20h0m0 0h0m0 26h0m0 1h0m0 35h0m0-76h0m1 37h0m0-5h0m0 36h0m0-24h0" stroke="#85B900" stroke-width="16"/><path d="M1897 860h0m1-47h0m0-20h0m0 0h0m0 26h0m0 1h0m0 35h0m0-76h0m1 37h0m0-5h0m0 36h0m0-24h0" stroke="#2F8A00" stroke-width="8"/><path d="M1899 780h0m1 65h0m0 8h0m0-56h0m0 5h0m0 23h0m0 9h0m0 16h0m2-106h0m4 20h0m0 57h0m0 32h0" stroke="#85B900" stroke-width="16"/><path d="M1899 780h0m1 65h0m0 8h0m0-56h0m0 5h0m0 23h0m0 9h0m0 16h0m2-106h0m4 20h0m0 57h0m0 32h0" stroke="#2F8A00" stroke-width="8"/><path d="M1906 859h0m1-70h0m0-20h0m0 0h0m0 57h0m0 53h0m0 5h0m1-37h0m0-44h0m0-8h0m0-22h0m0-13h0" stroke="#85B900" stroke-width="16"/><path d="M1906 859h0m1-70h0m0-20h0m0 0h0m0 57h0m0 53h0m0 5h0m1-37h0m0-44h0m0-8h0m0-22h0m0-13h0" stroke="#2F8A00" stroke-width="8"/><path d="M1908 762h0m0-15h0m1-5h0m0 52h0m0-8h0m0 34h0m0 33h0m1 8h0m0-4h0m0 5h0m0-25h0m0-109h0" stroke="#85B900" stroke-width="16"/><path d="M1908 762h0m0-15h0m1-5h0m0 52h0m0-8h0m0 34h0m0 33h0m1 8h0m0-4h0m0 5h0m0-25h0m0-109h0" stroke="#2F8A00" stroke-width="8"/><path d="M1910 858h0m0-92h0m0 65h0m1-50h0m0 6h0m0-16h0m0 40h0m0 21h0m1-44h0m0-13h0m0 13h0m0 22h0" stroke="#85B900" stroke-width="16"/><path d="M1910 858h0m0-92h0m0 65h0m1-50h0m0 6h0m0-16h0m0 40h0m0 21h0m1-44h0m0-13h0m0 13h0m0 22h0" stroke="#2F8A00" stroke-width="8"/><path d="M1912 837h0m0 16h0m0 1h0m1 13h0m0-7h0m0-26h0m0-12h0m0 3h0m1-33h0m0-5h0m0-2h0m0 24h0" stroke="#85B900" stroke-width="16"/><path d="M1912 837h0m0 16h0m0 1h0m1 13h0m0-7h0m0-26h0m0-12h0m0 3h0m1-33h0m0-5h0m0-2h0m0 24h0" stroke="#2F8A00" stroke-width="8"/><path d="M1914 784h0m0 39h0m0 29h0m1-14h0m0 33h0m0-23h0m0 7h0m0 28h0m1-4h0m0-4h0m0-3h0m0-6h0" stroke="#85B900" stroke-width="16"/><path d="M1914 784h0m0 39h0m0 29h0m1-14h0m0 33h0m0-23h0m0 7h0m0 28h0m1-4h0m0-4h0m0-3h0m0-6h0" stroke="#2F8A00" stroke-width="8"/><path d="M1916 770h0m0 82h0m0-32h0m0 22h0m1-24h0m0-23h0m0 32h0m0-1h0m0 21h0m1 5h0m0 12h0m0-9h0" stroke="#85B900" stroke-width="16"/><path d="M1916 770h0m0 82h0m0-32h0m0 22h0m1-24h0m0-23h0m0 32h0m0-1h0m0 21h0m1 5h0m0 12h0m0-9h0" stroke="#2F8A00" stroke-width="8"/><path d="M1918 810h0m0-11h0m0 22h0m0 19h0m1 23h0m0-30h0m0-6h0m0 11h0m0 17h0m1 0h0m0-12h0m0-7h0" stroke="#85B900" stroke-width="16"/><path d="M1918 810h0m0-11h0m0 22h0m0 19h0m1 23h0m0-30h0m0-6h0m0 11h0m0 17h0m1 0h0m0-12h0m0-7h0" stroke="#2F8A00" stroke-width="8"/><path d="M1920 806h0m0 9h0m0 29h0m0-1h0m1-25h0m0 25h0m0-3h0m0-26h0m0-2h0m1 16h0m0-8h0m0-3h0" stroke="#85B900" stroke-width="16"/><path d="M1920 806h0m0 9h0m0 29h0m0-1h0m1-25h0m0 25h0m0-3h0m0-26h0m0-2h0m1 16h0m0-8h0m0-3h0" stroke="#2F8A00" stroke-width="8"/><path d="M1922 849h0m0-13h0m0-18h0m0-1h0m1-3h0m0 10h0m0-2h0m0-5h0m0 23h0m1 3h0m0-36h0m0 15h0" stroke="#85B900" stroke-width="16"/><path d="M1922 849h0m0-13h0m0-18h0m0-1h0m1-3h0m0 10h0m0-2h0m0-5h0m0 23h0m1 3h0m0-36h0m0 15h0" stroke="#2F8A00" stroke-width="8"/><path d="M1924 839h0m0-14h0m0 5h0m0 18h0m1-15h0m0 16h0m0-12h0m0 11h0m0-19h0m1 10h0m0 26h0m0 8h0" stroke="#85B900" stroke-width="16"/><path d="M1924 839h0m0-14h0m0 5h0m0 18h0m1-15h0m0 16h0m0-12h0m0 11h0m0-19h0m1 10h0m0 26h0m0 8h0" stroke="#2F8A00" stroke-width="8"/><path d="M1926 863h0m0-15h0m0 2h0m0 7h0m1-23h0m0 11h0m0-11h0m0 18h0m0-3h0m1 0h0m0 20h0m0 1h0" stroke="#85B900" stroke-width="16"/><path d="M1926 863h0m0-15h0m0 2h0m0 7h0m1-23h0m0 11h0m0-11h0m0 18h0m0-3h0m1 0h0m0 20h0m0 1h0" stroke="#2F8A00" stroke-width="8"/><path d="M1928 878h0m0-76h0m0 61h0m0-15h0m0 6h0m1 15h0m0 7h0m0-6h0m0-23h0m0 14h0m1 3h0m0-13h0" stroke="#85B900" stroke-width="16"/><path d="M1928 878h0m0-76h0m0 61h0m0-15h0m0 6h0m1 15h0m0 7h0m0-6h0m0-23h0m0 14h0m1 3h0m0-13h0" stroke="#2F8A00" stroke-width="8"/><path d="M1930 826h0m0-12h0m0 28h0m0-1h0m0 6h0m1 12h0m0 19h0m0-8h0m0-16h0m0-8h0m1 19h0m0-12h0" stroke="#85B900" stroke-width="16"/><path d="M1930 826h0m0-12h0m0 28h0m0-1h0m0 6h0m1 12h0m0 19h0m0-8h0m0-16h0m0-8h0m1 19h0m0-12h0" stroke="#2F8A00" stroke-width="8"/><path d="M1932 850h0m0 18h0m0 16h0m0-36h0m0-3h0m0 5h0m1-40h0m0-3h0m0 3h0m0-18h0m0 31h0m1-13h0" stroke="#85B900" stroke-width="16"/><path d="M1932 850h0m0 18h0m0 16h0m0-36h0m0-3h0m0 5h0m1-40h0m0-3h0m0 3h0m0-18h0m0 31h0m1-13h0" stroke="#2F8A00" stroke-width="8"/><path d="M1934 837h0m0 8h0m0-25h0m0-5h0m0 9h0m0 14h0m1 22h0m0-38h0m0-4h0m0 34h0m0 2h0m1-19h0" stroke="#85B900" stroke-width="16"/><path d="M1934 837h0m0 8h0m0-25h0m0-5h0m0 9h0m0 14h0m1 22h0m0-38h0m0-4h0m0 34h0m0 2h0m1-19h0" stroke="#2F8A00" stroke-width="8"/><path d="M1936 820h0m0-10h0m0 47h0m0-38h0m0 30h0m0-17h0m1-26h0m0 7h0m0-25h0m0 64h0m0 27h0m1-15h0" stroke="#85B900" stroke-width="16"/><path d="M1936 820h0m0-10h0m0 47h0m0-38h0m0 30h0m0-17h0m1-26h0m0 7h0m0-25h0m0 64h0m0 27h0m1-15h0" stroke="#2F8A00" stroke-width="8"/><path d="M1938 868h0m0-27h0m0-42h0m0-27h0m0-16h0m0 35h0m1 17h0m0-17h0m0-11h0m0 48h0m0 9h0m1 12h0" stroke="#85B900" stroke-width="16"/><path d="M1938 868h0m0-27h0m0-42h0m0-27h0m0-16h0m0 35h0m1 17h0m0-17h0m0-11h0m0 48h0m0 9h0m1 12h0" stroke="#2F8A00" stroke-width="8"/><path d="M1940 842h0m0 4h0m0 30h0m0-132h0m0 79h0m0 14h0m0-43h0m1 7h0m0-30h0m0-5h0m0 22h0m0 28h0" stroke="#85B900" stroke-width="16"/><path d="M1940 842h0m0 4h0m0 30h0m0-132h0m0 79h0m0 14h0m0-43h0m1 7h0m0-30h0m0-5h0m0 22h0m0 28h0" stroke="#2F8A00" stroke-width="8"/><path d="M1942 834h0m0-25h0m0 28h0m0-21h0m0-21h0m0 13h0m0 54h0m1-4h0m0-80h0m0 15h0m0-10h0m0-28h0" stroke="#85B900" stroke-width="16"/><path d="M1942 834h0m0-25h0m0 28h0m0-21h0m0-21h0m0 13h0m0 54h0m1-4h0m0-80h0m0 15h0m0-10h0m0-28h0" stroke="#2F8A00" stroke-width="8"/><path d="M1944 776h0m0 20h0m0-13h0m0-16h0m0 16h0m0 36h0m0-1h0m1-4h0m0-41h0m0-8h0m0 22h0m0-13h0" stroke="#85B900" stroke-width="16"/><path d="M1944 776h0m0 20h0m0-13h0m0-16h0m0 16h0m0 36h0m0-1h0m1-4h0m0-41h0m0-8h0m0 22h0m0-13h0" stroke="#2F8A00" stroke-width="8"/><path d="M1946 782h0m0 57h0m0 12h0m0-9h0m0-45h0m0 13h0m0-44h0m1 1h0m0-19h0m0 25h0m0 11h0m0 44h0" stroke="#85B900" stroke-width="16"/><path d="M1946 782h0m0 57h0m0 12h0m0-9h0m0-45h0m0 13h0m0-44h0m1 1h0m0-19h0m0 25h0m0 11h0m0 44h0" stroke="#2F8A00" stroke-width="8"/><path d="M1948 808h0m0 11h0m0-48h0m0 47h0m0 21h0m0 18h0m0 1h0m1-25h0m0 14h0m0-21h0m0 32h0m0-25h0" stroke="#85B900" stroke-width="16"/><path d="M1948 808h0m0 11h0m0-48h0m0 47h0m0 21h0m0 18h0m0 1h0m1-25h0m0 14h0m0-21h0m0 32h0m0-25h0" stroke="#2F8A00" stroke-width="8"/><path d="M1950 803h0m0 1h0m0-18h0m0 24h0m0-37h0m0 16h0m0-24h0m1 103h0m0-43h0m0-11h0m0-40h0m0 21h0" stroke="#85B900" stroke-width="16"/><path d="M1950 803h0m0 1h0m0-18h0m0 24h0m0-37h0m0 16h0m0-24h0m1 103h0m0-43h0m0-11h0m0-40h0m0 21h0" stroke="#2F8A00" stroke-width="8"/><path d="M1951 779h0m1 1h0m0-5h0m0 65h0m0 13h0m0-82h0m0 1h0m0-9h0m1-9h0m0 41h0m0-30h0m0-24h0" stroke="#85B900" stroke-width="16"/><path d="M1951 779h0m1 1h0m0-5h0m0 65h0m0 13h0m0-82h0m0 1h0m0-9h0m1-9h0m0 41h0m0-30h0m0-24h0" stroke="#2F8A00" stroke-width="8"/><path d="M1953 764h0m1-3h0m0 11h0m0 22h0m0 13h0m0-30h0m0 4h0m0 18h0m1-45h0m0 17h0m0 5h0m0 66h0" stroke="#85B900" stroke-width="16"/><path d="M1953 764h0m1-3h0m0 11h0m0 22h0m0 13h0m0-30h0m0 4h0m0 18h0m1-45h0m0 17h0m0 5h0m0 66h0" stroke="#2F8A00" stroke-width="8"/><path d="M1955 834h0m1-57h0m0-5h0m0 2h0m0-3h0m0-37h0m0 27h0m0 50h0m0-8h0m1-34h0m0 71h0m0-33h0" stroke="#85B900" stroke-width="16"/><path d="M1955 834h0m1-57h0m0-5h0m0 2h0m0-3h0m0-37h0m0 27h0m0 50h0m0-8h0m1-34h0m0 71h0m0-33h0" stroke="#2F8A00" stroke-width="8"/><path d="M1957 788h0m0-1h0m1-4h0m0 39h0m0 42h0m0-67h0m0 21h0m0 8h0m0 27h0m1-8h0m0 22h0m0-31h0" stroke="#85B900" stroke-width="16"/><path d="M1957 788h0m0-1h0m1-4h0m0 39h0m0 42h0m0-67h0m0 21h0m0 8h0m0 27h0m1-8h0m0 22h0m0-31h0" stroke="#2F8A00" stroke-width="8"/><path d="M1959 809h0m0-14h0m1 24h0m0 12h0m0 32h0m0-18h0m0-140h0m0 11h0m0 132h0m0-39h0m0 28h0m1 20h0" stroke="#85B900" stroke-width="16"/><path d="M1959 809h0m0-14h0m1 24h0m0 12h0m0 32h0m0-18h0m0-140h0m0 11h0m0 132h0m0-39h0m0 28h0m1 20h0" stroke="#2F8A00" stroke-width="8"/><path d="M1961 842h0m0-68h0m0 61h0m0-12h0m1-35h0m0-3h0m0 26h0m0 26h0m0 20h0m0-21h0m0-18h0m1-18h0" stroke="#85B900" stroke-width="16"/><path d="M1961 842h0m0-68h0m0 61h0m0-12h0m1-35h0m0-3h0m0 26h0m0 26h0m0 20h0m0-21h0m0-18h0m1-18h0" stroke="#2F8A00" stroke-width="8"/><path d="M1963 812h0m0-18h0m0-4h0m0-8h0m1-15h0m0 5h0m0 27h0m0 29h0m0 10h0m0-45h0m0-13h0m1 65h0" stroke="#85B900" stroke-width="16"/><path d="M1963 812h0m0-18h0m0-4h0m0-8h0m1-15h0m0 5h0m0 27h0m0 29h0m0 10h0m0-45h0m0-13h0m1 65h0" stroke="#2F8A00" stroke-width="8"/><path d="M1965 876h0m0-2h0m0-21h0m0-54h0m1 0h0m0-2h0m0 38h0m0-10h0m0-31h0m0-10h0m0 24h0m1 35h0" stroke="#85B900" stroke-width="16"/><path d="M1965 876h0m0-2h0m0-21h0m0-54h0m1 0h0m0-2h0m0 38h0m0-10h0m0-31h0m0-10h0m0 24h0m1 35h0" stroke="#2F8A00" stroke-width="8"/><path d="M1967 859h0m0-16h0m0 12h0m0-55h0m1 4h0m0-15h0m0 8h0m0 0h0m0-35h0m0 29h0m0 31h0m0 2h0" stroke="#85B900" stroke-width="16"/><path d="M1967 859h0m0-16h0m0 12h0m0-55h0m1 4h0m0-15h0m0 8h0m0 0h0m0-35h0m0 29h0m0 31h0m0 2h0" stroke="#2F8A00" stroke-width="8"/><path d="M1969 864h0m0-8h0m0-18h0m0-27h0m0 77h0m0-85h0m1 27h0m0 5h0m0 40h0m0-2h0m0-26h0m0-31h0" stroke="#85B900" stroke-width="16"/><path d="M1969 864h0m0-8h0m0-18h0m0-27h0m0 77h0m0-85h0m1 27h0m0 5h0m0 40h0m0-2h0m0-26h0m0-31h0" stroke="#2F8A00" stroke-width="8"/><path d="M1970 814h0m1 40h0m0 19h0m0-72h0m0 3h0m0 55h0m1-36h0m0 6h0m0 18h0m0 3h0m0-14h0m0-2h0" stroke="#85B900" stroke-width="16"/><path d="M1970 814h0m1 40h0m0 19h0m0-72h0m0 3h0m0 55h0m1-36h0m0 6h0m0 18h0m0 3h0m0-14h0m0-2h0" stroke="#2F8A00" stroke-width="8"/><path d="M1972 825h0m1 6h0m0-2h0m0 43h0m0 6h0m0-31h0m1-3h0m0 32h0m0-14h0m0 0h0m0 17h0m0-23h0" stroke="#85B900" stroke-width="16"/><path d="M1972 825h0m1 6h0m0-2h0m0 43h0m0 6h0m0-31h0m1-3h0m0 32h0m0-14h0m0 0h0m0 17h0m0-23h0" stroke="#2F8A00" stroke-width="8"/><path d="M1974 868h0m1-12h0m0 10h0m0-10h0m0 12h0m0 6h0m1 9h0m0-18h0m0 9h0m0 0h0m0-31h0m0 28h0" stroke="#85B900" stroke-width="16"/><path d="M1974 868h0m1-12h0m0 10h0m0-10h0m0 12h0m0 6h0m1 9h0m0-18h0m0 9h0m0 0h0m0-31h0m0 28h0" stroke="#2F8A00" stroke-width="8"/><path d="M1976 883h0m1 2h0m0-11h0m0-21h0m0 24h0m0-8h0m1-7h0m0-18h0m0 22h0m0-29h0m0-31h0m0 32h0" stroke="#85B900" stroke-width="16"/><path d="M1976 883h0m1 2h0m0-11h0m0-21h0m0 24h0m0-8h0m1-7h0m0-18h0m0 22h0m0-29h0m0-31h0m0 32h0" stroke="#2F8A00" stroke-width="8"/><path d="M1978 849h0m0-14h0m1 16h0m0 1h0m0 3h0m0 0h0m0 3h0m1-7h0m0-12h0m0 5h0m0 25h0m0 3h0" stroke="#85B900" stroke-width="16"/><path d="M1978 849h0m0-14h0m1 16h0m0 1h0m0 3h0m0 0h0m0 3h0m1-7h0m0-12h0m0 5h0m0 25h0m0 3h0" stroke="#2F8A00" stroke-width="8"/><path d="M1980 869h0m0-17h0m1 2h0m0 23h0m0-9h0m0-6h0m0-17h0m1 33h0m0-8h0m0 4h0m0-38h0m0 17h0" stroke="#85B900" stroke-width="16"/><path d="M1980 869h0m0-17h0m1 2h0m0 23h0m0-9h0m0-6h0m0-17h0m1 33h0m0-8h0m0 4h0m0-38h0m0 17h0" stroke="#2F8A00" stroke-width="8"/><path d="M1982 859h0m0-18h0m1 2h0m1 41h0m5-22h0m0-20h0m1 24h0m0-11h0m0 18h0m0-24h0m0-2h0m0-4h0" stroke="#85B900" stroke-width="16"/><path d="M1982 859h0m0-18h0m1 2h0m1 41h0m5-22h0m0-20h0m1 24h0m0-11h0m0 18h0m0-24h0m0-2h0m0-4h0" stroke="#2F8A00" stroke-width="8"/><path d="M1990 843h0m1 29h0m0 3h0m0 0h0m0-3h0m0-10h0m1-13h0m0 10h0m0-14h0m0 19h0m0-14h0m0-30h0" stroke="#85B900" stroke-width="16"/><path d="M1990 843h0m1 29h0m0 3h0m0 0h0m0-3h0m0-10h0m1-13h0m0 10h0m0-14h0m0 19h0m0-14h0m0-30h0" stroke="#2F8A00" stroke-width="8"/><path d="M1992 814h0m1 31h0m0 12h0m0-7h0m0-40h0m0 6h0m1-12h0m0 21h0m0 22h0m0-11h0m0 0h0m0 1h0" stroke="#85B900" stroke-width="16"/><path d="M1992 814h0m1 31h0m0 12h0m0-7h0m0-40h0m0 6h0m1-12h0m0 21h0m0 22h0m0-11h0m0 0h0m0 1h0" stroke="#2F8A00" stroke-width="8"/><path d="M1994 826h0m1-12h0m0 2h0m0 38h0m0 21h0m0-31h0m1-30h0m0-10h0m0-2h0m0 14h0m0-36h0m0 37h0" stroke="#85B900" stroke-width="16"/><path d="M1994 826h0m1-12h0m0 2h0m0 38h0m0 21h0m0-31h0m1-30h0m0-10h0m0-2h0m0 14h0m0-36h0m0 37h0" stroke="#2F8A00" stroke-width="8"/><path d="M1996 812h0m0 20h0m1-19h0m0-4h0m0 24h0m0-8h0m0-4h0m1 48h0m0-13h0m0-35h0m0-18h0m0 38h0" stroke="#85B900" stroke-width="16"/><path d="M1996 812h0m0 20h0m1-19h0m0-4h0m0 24h0m0-8h0m0-4h0m1 48h0m0-13h0m0-35h0m0-18h0m0 38h0" stroke="#2F8A00" stroke-width="8"/><path d="M1998 859h0m0 10h0m1-6h0m0 11h0m0 4h0m0-1h0m0-8h0m1-13h0m0 11h0m0 9h0m0-7h0m0-24h0" stroke="#85B900" stroke-width="16"/><path d="M1998 859h0m0 10h0m1-6h0m0 11h0m0 4h0m0-1h0m0-8h0m1-13h0m0 11h0m0 9h0m0-7h0m0-24h0" stroke="#2F8A00" stroke-width="8"/><path d="M2000 849h0m0-39h0m1 8h0m0 41h0m0-21h0m0 4h0m0 16h0m1-43h0m0 7h0m0 30h0m0-19h0m0-24h0" stroke="#85B900" stroke-width="16"/><path d="M2000 849h0m0-39h0m1 8h0m0 41h0m0-21h0m0 4h0m0 16h0m1-43h0m0 7h0m0 30h0m0-19h0m0-24h0" stroke="#2F8A00" stroke-width="8"/><path d="M2002 815h0m0 37h0m1 1h0m0-13h0m0-5h0m0 24h0m0 17h0m1-9h0m0 5h0m0-9h0m0-3h0m0-1h0" stroke="#85B900" stroke-width="16"/><path d="M2002 815h0m0 37h0m1 1h0m0-13h0m0-5h0m0 24h0m0 17h0m1-9h0m0 5h0m0-9h0m0-3h0m0-1h0" stroke="#2F8A00" stroke-width="8"/><path d="M2004 862h0m0 3h0m1 10h0m0-8h0m0-45h0m0 38h0m0-14h0m1-18h0m0 17h0m0-20h0m0 15h0m0-8h0" stroke="#85B900" stroke-width="16"/><path d="M2004 862h0m0 3h0m1 10h0m0-8h0m0-45h0m0 38h0m0-14h0m1-18h0m0 17h0m0-20h0m0 15h0m0-8h0" stroke="#2F8A00" stroke-width="8"/><path d="M2006 853h0m0-29h0m1-17h0m0 5h0m0-27h0m0 13h0m0-33h0m1 3h0m0-5h0m0 6h0m0 39h0m0-46h0" stroke="#85B900" stroke-width="16"/><path d="M2006 853h0m0-29h0m1-17h0m0 5h0m0-27h0m0 13h0m0-33h0m1 3h0m0-5h0m0 6h0m0 39h0m0-46h0" stroke="#2F8A00" stroke-width="8"/><path d="M2008 847h0m0-52h0m0-11h0m1 2h0m0 36h0m0 9h0m0 43h0m0-66h0m0-21h0m1 48h0m0-24h0m0-17h0" stroke="#85B900" stroke-width="16"/><path d="M2008 847h0m0-52h0m0-11h0m1 2h0m0 36h0m0 9h0m0 43h0m0-66h0m0-21h0m1 48h0m0-24h0m0-17h0" stroke="#2F8A00" stroke-width="8"/><path d="M2010 850h0m0-5h0m0-26h0m0 13h0m1-14h0m0 13h0m0 22h0m0-51h0m0 49h0m1-18h0m0 12h0m0 13h0" stroke="#85B900" stroke-width="16"/><path d="M2010 850h0m0-5h0m0-26h0m0 13h0m1-14h0m0 13h0m0 22h0m0-51h0m0 49h0m1-18h0m0 12h0m0 13h0" stroke="#2F8A00" stroke-width="8"/><path d="M2012 848h0m0-8h0m0-15h0m0 14h0m1 6h0m0 10h0m0-17h0m0-12h0m0 20h0m1-30h0m0 11h0m0 12h0" stroke="#85B900" stroke-width="16"/><path d="M2012 848h0m0-8h0m0-15h0m0 14h0m1 6h0m0 10h0m0-17h0m0-12h0m0 20h0m1-30h0m0 11h0m0 12h0" stroke="#2F8A00" stroke-width="8"/><path d="M2014 808h0m0 3h0m0-6h0m0 8h0m1-13h0m0 37h0m0 22h0m0 2h0m0 3h0m1-43h0m0 30h0m0 14h0" stroke="#85B900" stroke-width="16"/><path d="M2014 808h0m0 3h0m0-6h0m0 8h0m1-13h0m0 37h0m0 22h0m0 2h0m0 3h0m1-43h0m0 30h0m0 14h0" stroke="#2F8A00" stroke-width="8"/><path d="M2016 863h0m0-5h0m0 11h0m0-9h0m1-2h0m0 5h0m0 10h0m0 6h0m0-2h0m1 1h0m0-6h0m0-37h0" stroke="#85B900" stroke-width="16"/><path d="M2016 863h0m0-5h0m0 11h0m0-9h0m1-2h0m0 5h0m0 10h0m0 6h0m0-2h0m1 1h0m0-6h0m0-37h0" stroke="#2F8A00" stroke-width="8"/><path d="M2018 810h0m0-4h0m0 27h0m0-37h0m1 51h0m0 12h0m0 6h0m0 5h0m0-3h0m1 6h0m0-35h0m0-39h0" stroke="#85B900" stroke-width="16"/><path d="M2018 810h0m0-4h0m0 27h0m0-37h0m1 51h0m0 12h0m0 6h0m0 5h0m0-3h0m1 6h0m0-35h0m0-39h0" stroke="#2F8A00" stroke-width="8"/><path d="M2020 806h0m0 18h0m0-40h0m0 27h0m1-20h0m0 3h0m0 15h0m0-20h0m0 75h0m1-34h0m0-3h0m0-38h0" stroke="#85B900" stroke-width="16"/><path d="M2020 806h0m0 18h0m0-40h0m0 27h0m1-20h0m0 3h0m0 15h0m0-20h0m0 75h0m1-34h0m0-3h0m0-38h0" stroke="#2F8A00" stroke-width="8"/><path d="M2022 812h0m0 27h0m0-13h0m0-30h0m1 45h0m0-40h0m0 3h0m0 27h0m0-8h0m1-8h0m0-14h0m0 12h0" stroke="#85B900" stroke-width="16"/><path d="M2022 812h0m0 27h0m0-13h0m0-30h0m1 45h0m0-40h0m0 3h0m0 27h0m0-8h0m1-8h0m0-14h0m0 12h0" stroke="#2F8A00" stroke-width="8"/><path d="M2024 794h0m0 94h0m0-58h0m0-25h0m0-12h0m1 68h0m0 8h0m0-29h0m0-50h0m0-5h0m1-1h0m0 45h0" stroke="#85B900" stroke-width="16"/><path d="M2024 794h0m0 94h0m0-58h0m0-25h0m0-12h0m1 68h0m0 8h0m0-29h0m0-50h0m0-5h0m1-1h0m0 45h0" stroke="#2F8A00" stroke-width="8"/><path d="M2026 802h0m0 6h0m0-42h0m0 45h0m0 53h0m0-5h0m1 5h0m0-34h0m0 10h0m0 25h0m0 7h0m1-50h0" stroke="#85B900" stroke-width="16"/><path d="M2026 802h0m0 6h0m0-42h0m0 45h0m0 53h0m0-5h0m1 5h0m0-34h0m0 10h0m0 25h0m0 7h0m1-50h0" stroke="#2F8A00" stroke-width="8"/><path d="M2028 841h0m0 11h0m0 5h0m0 20h0m0-10h0m0 16h0m1-18h0m0-2h0m0-22h0m0 6h0m0 1h0m1-8h0" stroke="#85B900" stroke-width="16"/><path d="M2028 841h0m0 11h0m0 5h0m0 20h0m0-10h0m0 16h0m1-18h0m0-2h0m0-22h0m0 6h0m0 1h0m1-8h0" stroke="#2F8A00" stroke-width="8"/><path d="M2030 817h0m0 21h0m0 18h0m0-2h0m0 24h0m0-10h0m1-54h0m0 34h0m0 27h0m0-34h0m0-6h0m1-25h0" stroke="#85B900" stroke-width="16"/><path d="M2030 817h0m0 21h0m0 18h0m0-2h0m0 24h0m0-10h0m1-54h0m0 34h0m0 27h0m0-34h0m0-6h0m1-25h0" stroke="#2F8A00" stroke-width="8"/><path d="M2032 797h0m0 12h0m0-20h0m0-1h0m0 27h0m0 53h0m1-8h0m0-33h0m0 18h0m0-17h0m0-13h0m1 28h0" stroke="#85B900" stroke-width="16"/><path d="M2032 797h0m0 12h0m0-20h0m0-1h0m0 27h0m0 53h0m1-8h0m0-33h0m0 18h0m0-17h0m0-13h0m1 28h0" stroke="#2F8A00" stroke-width="8"/><path d="M2034 859h0m0-9h0m0 15h0m0-35h0m0 23h0m0-13h0m1-20h0m0-16h0m0 33h0m0-16h0m0 24h0m1-23h0" stroke="#85B900" stroke-width="16"/><path d="M2034 859h0m0-9h0m0 15h0m0-35h0m0 23h0m0-13h0m1-20h0m0-16h0m0 33h0m0-16h0m0 24h0m1-23h0" stroke="#2F8A00" stroke-width="8"/><path d="M2036 821h0m0 5h0m0-25h0m0 11h0m0 13h0m0 6h0m1 2h0m0 20h0m0 5h0m0-15h0m0 3h0m1-12h0" stroke="#85B900" stroke-width="16"/><path d="M2036 821h0m0 5h0m0-25h0m0 11h0m0 13h0m0 6h0m1 2h0m0 20h0m0 5h0m0-15h0m0 3h0m1-12h0" stroke="#2F8A00" stroke-width="8"/><path d="M2038 821h0m0 47h0m0 5h0m0 3h0m0-11h0m0 12h0m1 3h0m0-3h0m0-7h0m0 12h0m0-12h0m1 6h0" stroke="#85B900" stroke-width="16"/><path d="M2038 821h0m0 47h0m0 5h0m0 3h0m0-11h0m0 12h0m1 3h0m0-3h0m0-7h0m0 12h0m0-12h0m1 6h0" stroke="#2F8A00" stroke-width="8"/><path d="M2040 882h0m0-3h0m0-27h0m0-23h0m0 7h0m0 1h0m1 5h0m0-9h0m0 17h0m0 26h0m0-13h0m1-16h0" stroke="#85B900" stroke-width="16"/><path d="M2040 882h0m0-3h0m0-27h0m0-23h0m0 7h0m0 1h0m1 5h0m0-9h0m0 17h0m0 26h0m0-13h0m1-16h0" stroke="#2F8A00" stroke-width="8"/><path d="M2042 869h0m0 2h0m0 2h0m0-3h0m0 1h0m0-3h0m1-5h0m0-15h0m0 15h0m0-4h0m0 6h0m1-24h0" stroke="#85B900" stroke-width="16"/><path d="M2042 869h0m0 2h0m0 2h0m0-3h0m0 1h0m0-3h0m1-5h0m0-15h0m0 15h0m0-4h0m0 6h0m1-24h0" stroke="#2F8A00" stroke-width="8"/><path d="M2044 838h0m0-2h0m0 20h0m0-50h0m0 67h0m0 3h0m0-12h0m1-2h0m0 3h0m0-6h0m0 20h0m0-8h0" stroke="#85B900" stroke-width="16"/><path d="M2044 838h0m0-2h0m0 20h0m0-50h0m0 67h0m0 3h0m0-12h0m1-2h0m0 3h0m0-6h0m0 20h0m0-8h0" stroke="#2F8A00" stroke-width="8"/><path d="M2046 873h0m0-10h0m0-5h0m0 4h0m0-28h0m0 4h0m0 8h0m1 23h0m0-24h0m0 3h0m0-11h0m0 27h0" stroke="#85B900" stroke-width="16"/><path d="M2046 873h0m0-10h0m0-5h0m0 4h0m0-28h0m0 4h0m0 8h0m1 23h0m0-24h0m0 3h0m0-11h0m0 27h0" stroke="#2F8A00" stroke-width="8"/><path d="M2048 852h0m0 26h0m0-4h0m0-8h0m0-17h0m0 16h0m0-22h0m1-2h0m0-1h0m0 10h0m0 21h0m0 0h0" stroke="#85B900" stroke-width="16"/><path d="M2048 852h0m0 26h0m0-4h0m0-8h0m0-17h0m0 16h0m0-22h0m1-2h0m0-1h0m0 10h0m0 21h0m0 0h0" stroke="#2F8A00" stroke-width="8"/><path d="M2050 864h0m0 7h0m0-1h0m0 3h0m0 2h0m0-34h0m0 11h0m1 23h0m0-30h0m0 6h0m0 12h0m0-4h0" stroke="#85B900" stroke-width="16"/><path d="M2050 864h0m0 7h0m0-1h0m0 3h0m0 2h0m0-34h0m0 11h0m1 23h0m0-30h0m0 6h0m0 12h0m0-4h0" stroke="#2F8A00" stroke-width="8"/><path d="M2052 834h0m0 20h0m0-13h0m0-12h0m0-7h0m0 3h0m0-10h0m1-9h0m0 20h0m0 10h0m0-11h0m0 12h0" stroke="#85B900" stroke-width="16"/><path d="M2052 834h0m0 20h0m0-13h0m0-12h0m0-7h0m0 3h0m0-10h0m1-9h0m0 20h0m0 10h0m0-11h0m0 12h0" stroke="#2F8A00" stroke-width="8"/><path d="M2054 850h0m0-2h0m0-37h0m0 1h0m0-18h0m0 13h0m0 36h0m1 16h0m0-8h0m0-23h0m0-9h0m0 10h0" stroke="#85B900" stroke-width="16"/><path d="M2054 850h0m0-2h0m0-37h0m0 1h0m0-18h0m0 13h0m0 36h0m1 16h0m0-8h0m0-23h0m0-9h0m0 10h0" stroke="#2F8A00" stroke-width="8"/><path d="M2056 814h0m0-17h0m0 20h0m0 12h0m0 32h0m0-16h0m0-1h0m1 18h0m0 3h0m0-1h0m0-44h0m0 28h0" stroke="#85B900" stroke-width="16"/><path d="M2056 814h0m0-17h0m0 20h0m0 12h0m0 32h0m0-16h0m0-1h0m1 18h0m0 3h0m0-1h0m0-44h0m0 28h0" stroke="#2F8A00" stroke-width="8"/><path d="M2058 811h0m0 15h0m0-37h0m0-2h0m0 0h0m0 18h0m0 25h0m1 10h0m0 1h0m0-25h0m0 18h0m0-46h0" stroke="#85B900" stroke-width="16"/><path d="M2058 811h0m0 15h0m0-37h0m0-2h0m0 0h0m0 18h0m0 25h0m1 10h0m0 1h0m0-25h0m0 18h0m0-46h0" stroke="#2F8A00" stroke-width="8"/><path d="M2060 786h0m0 6h0m0 65h0m0-4h0m0-27h0m0-18h0m0-5h0m1 26h0m0 5h0m0-4h0m0 0h0m0 34h0" stroke="#85B900" stroke-width="16"/><path d="M2060 786h0m0 6h0m0 65h0m0-4h0m0-27h0m0-18h0m0-5h0m1 26h0m0 5h0m0-4h0m0 0h0m0 34h0" stroke="#2F8A00" stroke-width="8"/><path d="M2062 857h0m0 8h0m0-51h0m0 8h0m0-72h0m0 74h0m0 16h0m0-32h0m1-20h0m0 50h0m0-34h0m0 0h0" stroke="#85B900" stroke-width="16"/><path d="M2062 857h0m0 8h0m0-51h0m0 8h0m0-72h0m0 74h0m0 16h0m0-32h0m1-20h0m0 50h0m0-34h0m0 0h0" stroke="#2F8A00" stroke-width="8"/><path d="M2063 819h0m1 13h0m0-21h0m0-40h0m0 28h0m0 13h0m0-19h0m0 6h0m1-19h0m0 14h0m0 8h0m0 22h0" stroke="#85B900" stroke-width="16"/><path d="M2063 819h0m1 13h0m0-21h0m0-40h0m0 28h0m0 13h0m0-19h0m0 6h0m1-19h0m0 14h0m0 8h0m0 22h0" stroke="#2F8A00" stroke-width="8"/><path d="M2065 782h0m1 37h0m0 23h0m0 13h0m0-1h0m0-47h0m0-25h0m0 64h0m1 6h0m0-88h0m0 14h0m0 40h0" stroke="#85B900" stroke-width="16"/><path d="M2065 782h0m1 37h0m0 23h0m0 13h0m0-1h0m0-47h0m0-25h0m0 64h0m1 6h0m0-88h0m0 14h0m0 40h0" stroke="#2F8A00" stroke-width="8"/><path d="M2067 779h0m1 25h0m0-17h0m0-5h0m0-23h0m0 18h0m0 6h0m0 22h0m1 16h0m0 19h0m0 28h0m0 3h0" stroke="#85B900" stroke-width="16"/><path d="M2067 779h0m1 25h0m0-17h0m0-5h0m0-23h0m0 18h0m0 6h0m0 22h0m1 16h0m0 19h0m0 28h0m0 3h0" stroke="#2F8A00" stroke-width="8"/><path d="M2069 826h0m0 46h0m1-66h0m0-21h0m0 20h0m0 16h0m0 42h0m0-32h0m0 9h0m1-10h0m0-49h0m0 42h0" stroke="#85B900" stroke-width="16"/><path d="M2069 826h0m0 46h0m1-66h0m0-21h0m0 20h0m0 16h0m0 42h0m0-32h0m0 9h0m1-10h0m0-49h0m0 42h0" stroke="#2F8A00" stroke-width="8"/><path d="M2071 822h0m0-39h0m1 34h0m0-15h0m0 16h0m0-21h0m0 12h0m0 3h0m0 46h0m1-33h0m0 28h0m0-15h0" stroke="#85B900" stroke-width="16"/><path d="M2071 822h0m0-39h0m1 34h0m0-15h0m0 16h0m0-21h0m0 12h0m0 3h0m0 46h0m1-33h0m0 28h0m0-15h0" stroke="#2F8A00" stroke-width="8"/><path d="M2073 844h0m0 1h0m1-53h0m0 2h0m0-12h0m0 23h0m0-45h0m0 81h0m0 14h0m0-53h0m1-16h0m0-1h0" stroke="#85B900" stroke-width="16"/><path d="M2073 844h0m0 1h0m1-53h0m0 2h0m0-12h0m0 23h0m0-45h0m0 81h0m0 14h0m0-53h0m1-16h0m0-1h0" stroke="#2F8A00" stroke-width="8"/><path d="M2075 799h0m0 18h0m0 6h0m1-4h0m0 1h0m0 29h0m0-23h0m0-36h0m0 53h0m0-51h0m1 9h0m0 30h0" stroke="#85B900" stroke-width="16"/><path d="M2075 799h0m0 18h0m0 6h0m1-4h0m0 1h0m0 29h0m0-23h0m0-36h0m0 53h0m0-51h0m1 9h0m0 30h0" stroke="#2F8A00" stroke-width="8"/><path d="M2077 846h0m0 7h0m0 18h0m1 3h0m0-26h0m0-23h0m0 41h0m0 0h0m0-9h0m0 13h0m1-7h0m0 1h0" stroke="#85B900" stroke-width="16"/><path d="M2077 846h0m0 7h0m0 18h0m1 3h0m0-26h0m0-23h0m0 41h0m0 0h0m0-9h0m0 13h0m1-7h0m0 1h0" stroke="#2F8A00" stroke-width="8"/><path d="M2079 865h0m0 2h0m0-16h0m1 14h0m0-14h0m0-28h0m0 24h0m0 12h0m5-23h0m0 24h0m0 11h0m0-47h0" stroke="#85B900" stroke-width="16"/><path d="M2079 865h0m0 2h0m0-16h0m1 14h0m0-14h0m0-28h0m0 24h0m0 12h0m5-23h0m0 24h0m0 11h0m0-47h0" stroke="#2F8A00" stroke-width="8"/><path d="M2086 845h0m0-23h0m0 17h0m0 22h0m0-33h0m0-5h0m0-24h0m1-1h0m0-25h0m0 18h0m0-19h0m0 5h0" stroke="#85B900" stroke-width="16"/><path d="M2086 845h0m0-23h0m0 17h0m0 22h0m0-33h0m0-5h0m0-24h0m1-1h0m0-25h0m0 18h0m0-19h0m0 5h0" stroke="#2F8A00" stroke-width="8"/><path d="M2088 806h0m0 46h0m0-41h0m0 30h0m0-69h0m0 108h0m0-61h0m0-31h0m0 40h0m1 7h0m0 15h0m0 3h0" stroke="#85B900" stroke-width="16"/><path d="M2088 806h0m0 46h0m0-41h0m0 30h0m0-69h0m0 108h0m0-61h0m0-31h0m0 40h0m1 7h0m0 15h0m0 3h0" stroke="#2F8A00" stroke-width="8"/><path d="M2089 862h0m0-30h0m1 14h0m0-11h0m0 3h0m0-16h0m0 30h0m0 15h0m0-3h0m1 8h0m0-25h0m0 26h0" stroke="#85B900" stroke-width="16"/><path d="M2089 862h0m0-30h0m1 14h0m0-11h0m0 3h0m0-16h0m0 30h0m0 15h0m0-3h0m1 8h0m0-25h0m0 26h0" stroke="#2F8A00" stroke-width="8"/><path d="M2091 853h0m0-10h0m1 0h0m0 23h0m0-1h0m0 0h0m0-23h0m0 22h0m0 9h0m1-28h0m0-6h0m0 20h0" stroke="#85B900" stroke-width="16"/><path d="M2091 853h0m0-10h0m1 0h0m0 23h0m0-1h0m0 0h0m0-23h0m0 22h0m0 9h0m1-28h0m0-6h0m0 20h0" stroke="#2F8A00" stroke-width="8"/><path d="M2093 868h0m0-35h0m1-7h0m0 14h0m0-2h0m0 12h0m0-15h0m0-7h0m0 16h0m1 9h0m0-19h0m0 24h0" stroke="#85B900" stroke-width="16"/><path d="M2093 868h0m0-35h0m1-7h0m0 14h0m0-2h0m0 12h0m0-15h0m0-7h0m0 16h0m1 9h0m0-19h0m0 24h0" stroke="#2F8A00" stroke-width="8"/><path d="M2095 863h0m0-3h0m1-1h0m0 10h0m0-1h0m0-6h0m0-66h0m0 62h0m0 15h0m0 6h0m1-45h0m0-4h0" stroke="#85B900" stroke-width="16"/><path d="M2095 863h0m0-3h0m1-1h0m0 10h0m0-1h0m0-6h0m0-66h0m0 62h0m0 15h0m0 6h0m1-45h0m0-4h0" stroke="#2F8A00" stroke-width="8"/><path d="M2097 814h0m0 4h0m0 8h0m1-2h0m0 14h0m0 7h0m0 9h0m0-25h0m0 4h0m0 16h0m1-23h0m0-13h0" stroke="#85B900" stroke-width="16"/><path d="M2097 814h0m0 4h0m0 8h0m1-2h0m0 14h0m0 7h0m0 9h0m0-25h0m0 4h0m0 16h0m1-23h0m0-13h0" stroke="#2F8A00" stroke-width="8"/><path d="M2099 824h0m0 54h0m0-15h0m1-9h0m0 9h0m0 12h0m0-1h0m0-13h0m0-5h0m0 6h0m1-2h0m0 6h0" stroke="#85B900" stroke-width="16"/><path d="M2099 824h0m0 54h0m0-15h0m1-9h0m0 9h0m0 12h0m0-1h0m0-13h0m0-5h0m0 6h0m1-2h0m0 6h0" stroke="#2F8A00" stroke-width="8"/><path d="M2101 846h0m0 7h0m0-11h0m1-12h0m0 3h0m0 26h0m0-3h0m0 1h0m0-3h0m0-3h0m1-7h0m0-7h0" stroke="#85B900" stroke-width="16"/><path d="M2101 846h0m0 7h0m0-11h0m1-12h0m0 3h0m0 26h0m0-3h0m0 1h0m0-3h0m0-3h0m1-7h0m0-7h0" stroke="#2F8A00" stroke-width="8"/><path d="M2103 809h0m0 12h0m0-4h0m1-1h0m0-4h0m0 21h0m0 0h0m0 10h0m0 6h0m0 7h0m1-1h0m0 11h0" stroke="#85B900" stroke-width="16"/><path d="M2103 809h0m0 12h0m0-4h0m1-1h0m0-4h0m0 21h0m0 0h0m0 10h0m0 6h0m0 7h0m1-1h0m0 11h0" stroke="#2F8A00" stroke-width="8"/><path d="M2105 873h0m0 1h0m0-4h0m1 5h0m0-16h0m0-35h0m0 3h0m0-24h0m0 1h0m0 13h0m1 43h0m0 1h0" stroke="#85B900" stroke-width="16"/><path d="M2105 873h0m0 1h0m0-4h0m1 5h0m0-16h0m0-35h0m0 3h0m0-24h0m0 1h0m0 13h0m1 43h0m0 1h0" stroke="#2F8A00" stroke-width="8"/><path d="M2107 838h0m0 15h0m0 6h0m1-1h0m0 10h0m0-28h0m0 24h0m0-50h0m0 8h0m0 25h0m1 9h0m0-21h0" stroke="#85B900" stroke-width="16"/><path d="M2107 838h0m0 15h0m0 6h0m1-1h0m0 10h0m0-28h0m0 24h0m0-50h0m0 8h0m0 25h0m1 9h0m0-21h0" stroke="#2F8A00" stroke-width="8"/><path d="M2109 797h0m0-11h0m0-1h0m1 18h0m0 60h0m0-25h0m0 30h0m0-96h0m0 67h0m0-1h0m0 7h0m1 33h0" stroke="#85B900" stroke-width="16"/><path d="M2109 797h0m0-11h0m0-1h0m1 18h0m0 60h0m0-25h0m0 30h0m0-96h0m0 67h0m0-1h0m0 7h0m1 33h0" stroke="#2F8A00" stroke-width="8"/><path d="M2111 872h0m0-63h0m0-5h0m0 30h0m0 50h0m1-56h0m0 24h0m0-12h0m0 6h0m0 13h0m0 22h0m0-11h0" stroke="#85B900" stroke-width="16"/><path d="M2111 872h0m0-63h0m0-5h0m0 30h0m0 50h0m1-56h0m0 24h0m0-12h0m0 6h0m0 13h0m0 22h0m0-11h0" stroke="#2F8A00" stroke-width="8"/><path d="M2113 841h0m0 19h0m0 6h0m0-56h0m0 30h0m1-21h0m0 8h0m0 32h0m0 11h0m0-23h0m0 5h0m0-22h0" stroke="#85B900" stroke-width="16"/><path d="M2113 841h0m0 19h0m0 6h0m0-56h0m0 30h0m1-21h0m0 8h0m0 32h0m0 11h0m0-23h0m0 5h0m0-22h0" stroke="#2F8A00" stroke-width="8"/><path d="M2115 785h0m0 9h0m0-17h0m0 7h0m0 18h0m1-11h0m0 0h0m0-11h0m0-5h0m0 24h0m0 31h0m0-44h0" stroke="#85B900" stroke-width="16"/><path d="M2115 785h0m0 9h0m0-17h0m0 7h0m0 18h0m1-11h0m0 0h0m0-11h0m0-5h0m0 24h0m0 31h0m0-44h0" stroke="#2F8A00" stroke-width="8"/><path d="M2117 822h0m0-1h0m0-14h0m0-18h0m0 23h0m1-11h0m0-8h0m0 14h0m0 22h0m0-39h0m0 24h0m0 4h0" stroke="#85B900" stroke-width="16"/><path d="M2117 822h0m0-1h0m0-14h0m0-18h0m0 23h0m1-11h0m0-8h0m0 14h0m0 22h0m0-39h0m0 24h0m0 4h0" stroke="#2F8A00" stroke-width="8"/><path d="M2119 844h0m0 15h0m0-8h0m0-36h0m0 35h0m1 5h0m0-34h0m0-20h0m0 5h0m0 33h0m0-1h0m0 27h0" stroke="#85B900" stroke-width="16"/><path d="M2119 844h0m0 15h0m0-8h0m0-36h0m0 35h0m1 5h0m0-34h0m0-20h0m0 5h0m0 33h0m0-1h0m0 27h0" stroke="#2F8A00" stroke-width="8"/><path d="M2121 874h0m0-49h0m0 27h0m0-31h0m0-6h0m0-6h0m1 44h0m0 12h0m0-55h0m0 17h0m0-101h0m0 117h0" stroke="#85B900" stroke-width="16"/><path d="M2121 874h0m0-49h0m0 27h0m0-31h0m0-6h0m0-6h0m1 44h0m0 12h0m0-55h0m0 17h0m0-101h0m0 117h0" stroke="#2F8A00" stroke-width="8"/><path d="M2122 849h0m0-1h0m1-46h0m0 39h0m0 18h0m0-30h0m0 14h0m1 11h0m0 0h0m0 3h0m0-44h0m0-61h0" stroke="#85B900" stroke-width="16"/><path d="M2122 849h0m0-1h0m1-46h0m0 39h0m0 18h0m0-30h0m0 14h0m1 11h0m0 0h0m0 3h0m0-44h0m0-61h0" stroke="#2F8A00" stroke-width="8"/><path d="M2124 800h0m0 20h0m0 22h0m1 18h0m0-37h0m0-22h0m0-6h0m0-4h0m1 59h0m0 16h0m0-8h0m0 9h0" stroke="#85B900" stroke-width="16"/><path d="M2124 800h0m0 20h0m0 22h0m1 18h0m0-37h0m0-22h0m0-6h0m0-4h0m1 59h0m0 16h0m0-8h0m0 9h0" stroke="#2F8A00" stroke-width="8"/><path d="M2126 849h0m0-3h0m0-6h0m1-3h0m0-25h0m0-26h0m0 31h0m0-9h0m1-13h0m0-9h0m0-24h0m0 3h0" stroke="#85B900" stroke-width="16"/><path d="M2126 849h0m0-3h0m0-6h0m1-3h0m0-25h0m0-26h0m0 31h0m0-9h0m1-13h0m0-9h0m0-24h0m0 3h0" stroke="#2F8A00" stroke-width="8"/><path d="M2128 700h0m0 88h0m0-3h0m0-21h0m1 5h0m0-9h0m0 25h0m0-24h0m0 21h0m1 51h0m0 1h0m0 11h0" stroke="#85B900" stroke-width="16"/><path d="M2128 700h0m0 88h0m0-3h0m0-21h0m1 5h0m0-9h0m0 25h0m0-24h0m0 21h0m1 51h0m0 1h0m0 11h0" stroke="#2F8A00" stroke-width="8"/><path d="M2130 800h0m0 63h0m0-18h0m0 13h0m1 20h0m0-31h0m0-6h0m0-33h0m0 12h0m1-6h0m0 16h0m0 0h0" stroke="#85B900" stroke-width="16"/><path d="M2130 800h0m0 63h0m0-18h0m0 13h0m1 20h0m0-31h0m0-6h0m0-33h0m0 12h0m1-6h0m0 16h0m0 0h0" stroke="#2F8A00" stroke-width="8"/><path d="M2132 818h0m0 23h0m0 13h0m0-34h0m1 24h0m0-33h0m0-9h0m0 29h0m0 27h0m1-2h0m0 24h0m0-22h0" stroke="#85B900" stroke-width="16"/><path d="M2132 818h0m0 23h0m0 13h0m0-34h0m1 24h0m0-33h0m0-9h0m0 29h0m0 27h0m1-2h0m0 24h0m0-22h0" stroke="#2F8A00" stroke-width="8"/><path d="M2134 858h0m0-92h0m0 77h0m0-48h0m0 29h0m1 9h0m0 8h0m0 0h0m0 8h0m0-9h0m1-40h0m0 19h0" stroke="#85B900" stroke-width="16"/><path d="M2134 858h0m0-92h0m0 77h0m0-48h0m0 29h0m1 9h0m0 8h0m0 0h0m0 8h0m0-9h0m1-40h0m0 19h0" stroke="#2F8A00" stroke-width="8"/><path d="M2136 824h0m0-9h0m0-105h0m0 84h0m0 14h0m0 19h0m1 42h0m0-15h0m0 7h0m0-3h0m0-16h0m1-15h0" stroke="#85B900" stroke-width="16"/><path d="M2136 824h0m0-9h0m0-105h0m0 84h0m0 14h0m0 19h0m1 42h0m0-15h0m0 7h0m0-3h0m0-16h0m1-15h0" stroke="#2F8A00" stroke-width="8"/><path d="M2138 818h0m0 14h0m0 26h0m0 6h0m0-52h0m0 0h0m1 33h0m0-1h0m0 23h0m0 1h0m0-1h0m1 4h0" stroke="#85B900" stroke-width="16"/><path d="M2138 818h0m0 14h0m0 26h0m0 6h0m0-52h0m0 0h0m1 33h0m0-1h0m0 23h0m0 1h0m0-1h0m1 4h0" stroke="#2F8A00" stroke-width="8"/><path d="M2140 878h0m0-12h0m0-24h0m0-24h0m0 19h0m0 33h0m1-1h0m0-10h0m0 4h0m0-24h0m0 13h0m1 22h0" stroke="#85B900" stroke-width="16"/><path d="M2140 878h0m0-12h0m0-24h0m0-24h0m0 19h0m0 33h0m1-1h0m0-10h0m0 4h0m0-24h0m0 13h0m1 22h0" stroke="#2F8A00" stroke-width="8"/><path d="M2142 871h0m0-18h0m0 6h0m0 15h0m0-3h0m0 7h0m1-5h0m0-8h0m0-19h0m0 8h0m0 11h0m1 12h0" stroke="#85B900" stroke-width="16"/><path d="M2142 871h0m0-18h0m0 6h0m0 15h0m0-3h0m0 7h0m1-5h0m0-8h0m0-19h0m0 8h0m0 11h0m1 12h0" stroke="#2F8A00" stroke-width="8"/><path d="M2144 880h0m0-13h0m0-34h0m0-2h0m0 39h0m0-42h0m1 3h0m0 18h0m0 23h0m0-19h0m0 35h0m0-27h0" stroke="#85B900" stroke-width="16"/><path d="M2144 880h0m0-13h0m0-34h0m0-2h0m0 39h0m0-42h0m1 3h0m0 18h0m0 23h0m0-19h0m0 35h0m0-27h0" stroke="#2F8A00" stroke-width="8"/><path d="M2146 851h0m0 4h0m0-9h0m0 10h0m0 6h0m0-15h0m0 18h0m1-25h0m0-16h0m0-1h0m0 17h0m0-4h0" stroke="#85B900" stroke-width="16"/><path d="M2146 851h0m0 4h0m0-9h0m0 10h0m0 6h0m0-15h0m0 18h0m1-25h0m0-16h0m0-1h0m0 17h0m0-4h0" stroke="#2F8A00" stroke-width="8"/><path d="M2148 851h0m0 2h0m0 4h0m0-1h0m0-54h0m0 76h0m0-1h0m0-30h0m1-9h0m0 11h0m0 8h0m0 11h0" stroke="#85B900" stroke-width="16"/><path d="M2148 851h0m0 2h0m0 4h0m0-1h0m0-54h0m0 76h0m0-1h0m0-30h0m1-9h0m0 11h0m0 8h0m0 11h0" stroke="#2F8A00" stroke-width="8"/><path d="M2149 879h0m1-7h0m0-24h0m0 15h0m0-18h0m0 4h0m0-12h0m0 14h0m1 26h0m0-29h0m0-3h0m0 22h0" stroke="#85B900" stroke-width="16"/><path d="M2149 879h0m1-7h0m0-24h0m0 15h0m0-18h0m0 4h0m0-12h0m0 14h0m1 26h0m0-29h0m0-3h0m0 22h0" stroke="#2F8A00" stroke-width="8"/><path d="M2151 868h0m1 16h0m0-3h0m0-1h0m0 1h0m0-6h0m0-9h0m0-5h0m1 7h0m0 7h0m0-23h0m0 2h0" stroke="#85B900" stroke-width="16"/><path d="M2151 868h0m1 16h0m0-3h0m0-1h0m0 1h0m0-6h0m0-9h0m0-5h0m1 7h0m0 7h0m0-23h0m0 2h0" stroke="#2F8A00" stroke-width="8"/><path d="M2153 867h0m1-2h0m0-11h0m0 5h0m0-15h0m0-7h0m0-17h0m0 4h0m1 30h0m0-1h0m0-28h0m0-12h0" stroke="#85B900" stroke-width="16"/><path d="M2153 867h0m1-2h0m0-11h0m0 5h0m0-15h0m0-7h0m0-17h0m0 4h0m1 30h0m0-1h0m0-28h0m0-12h0" stroke="#2F8A00" stroke-width="8"/><path d="M2155 817h0m1-13h0m0 11h0m0 1h0m0 19h0m0-19h0m0-16h0m0 16h0m1 48h0m0 4h0m0-25h0m0 20h0" stroke="#85B900" stroke-width="16"/><path d="M2155 817h0m1-13h0m0 11h0m0 1h0m0 19h0m0-19h0m0-16h0m0 16h0m1 48h0m0 4h0m0-25h0m0 20h0" stroke="#2F8A00" stroke-width="8"/><path d="M2157 859h0m1-19h0m0-3h0m0 3h0m0 36h0m0-2h0m0-6h0m0 5h0m1 6h0m0 2h0m0-40h0m0-2h0" stroke="#85B900" stroke-width="16"/><path d="M2157 859h0m1-19h0m0-3h0m0 3h0m0 36h0m0-2h0m0-6h0m0 5h0m1 6h0m0 2h0m0-40h0m0-2h0" stroke="#2F8A00" stroke-width="8"/><path d="M2159 836h0m1 25h0m0-7h0m0 17h0m0-16h0m0-35h0m0-7h0m0 1h0m1 12h0m0 3h0m0 21h0m0 19h0" stroke="#85B900" stroke-width="16"/><path d="M2159 836h0m1 25h0m0-7h0m0 17h0m0-16h0m0-35h0m0-7h0m0 1h0m1 12h0m0 3h0m0 21h0m0 19h0" stroke="#2F8A00" stroke-width="8"/><path d="M2161 878h0m1-12h0m0-8h0m0 20h0m0-29h0m0 3h0m0-27h0m0-18h0m1 46h0m0-41h0m0-8h0m0 55h0" stroke="#85B900" stroke-width="16"/><path d="M2161 878h0m1-12h0m0-8h0m0 20h0m0-29h0m0 3h0m0-27h0m0-18h0m1 46h0m0-41h0m0-8h0m0 55h0" stroke="#2F8A00" stroke-width="8"/><path d="M2163 835h0m1 29h0m0 3h0m0 4h0m0-30h0m0 37h0m0-14h0m0-31h0m1 12h0m0-8h0m0-3h0m0-33h0" stroke="#85B900" stroke-width="16"/><path d="M2163 835h0m1 29h0m0 3h0m0 4h0m0-30h0m0 37h0m0-14h0m0-31h0m1 12h0m0-8h0m0-3h0m0-33h0" stroke="#2F8A00" stroke-width="8"/><path d="M2165 839h0m1 0h0m0 39h0m0 1h0m0-1h0m0-1h0m0-14h0m0-14h0m1 16h0m0-23h0m0-21h0m0-11h0" stroke="#85B900" stroke-width="16"/><path d="M2165 839h0m1 0h0m0 39h0m0 1h0m0-1h0m0-1h0m0-14h0m0-14h0m1 16h0m0-23h0m0-21h0m0-11h0" stroke="#2F8A00" stroke-width="8"/><path d="M2167 878h0m0-47h0m1 18h0m0 7h0m0-6h0m0-37h0m0-47h0m0 53h0m0 5h0m0-14h0m1 16h0m0 30h0" stroke="#85B900" stroke-width="16"/><path d="M2167 878h0m0-47h0m1 18h0m0 7h0m0-6h0m0-37h0m0-47h0m0 53h0m0 5h0m0-14h0m1 16h0m0 30h0" stroke="#2F8A00" stroke-width="8"/><path d="M2169 837h0m0-27h0m0 10h0m1 17h0m0-23h0m0 26h0m0 0h0m0-26h0m0-18h0m0 49h0m1-5h0m0 1h0" stroke="#85B900" stroke-width="16"/><path d="M2169 837h0m0-27h0m0 10h0m1 17h0m0-23h0m0 26h0m0 0h0m0-26h0m0-18h0m0 49h0m1-5h0m0 1h0" stroke="#2F8A00" stroke-width="8"/><path d="M2171 871h0m0-17h0m0-19h0m1 16h0m0-30h0m0 6h0m0 13h0m0-56h0m0 7h0m0-8h0m1 47h0m0-48h0" stroke="#85B900" stroke-width="16"/><path d="M2171 871h0m0-17h0m0-19h0m1 16h0m0-30h0m0 6h0m0 13h0m0-56h0m0 7h0m0-8h0m1 47h0m0-48h0" stroke="#2F8A00" stroke-width="8"/><path d="M2173 808h0m0 44h0m0 14h0m1 10h0m0-5h0m0-32h0m0-8h0m0-29h0m0 41h0m0 4h0m1 12h0m0-1h0" stroke="#85B900" stroke-width="16"/><path d="M2173 808h0m0 44h0m0 14h0m1 10h0m0-5h0m0-32h0m0-8h0m0-29h0m0 41h0m0 4h0m1 12h0m0-1h0" stroke="#2F8A00" stroke-width="8"/><path d="M2175 861h0m0-42h0m0-2h0m1 22h0m0-41h0m0-3h0m0 24h0m0-10h0m0-24h0m0 18h0m1-7h0m0 23h0" stroke="#85B900" stroke-width="16"/><path d="M2175 861h0m0-42h0m0-2h0m1 22h0m0-41h0m0-3h0m0 24h0m0-10h0m0-24h0m0 18h0m1-7h0m0 23h0" stroke="#2F8A00" stroke-width="8"/><path d="M2177 791h0m0 37h0m0 6h0m1 16h0m0-73h0m0 4h0m0-6h0m0 15h0m0 47h0m0 0h0m1-16h0m0 12h0" stroke="#85B900" stroke-width="16"/><path d="M2177 791h0m0 37h0m0 6h0m1 16h0m0-73h0m0 4h0m0-6h0m0 15h0m0 47h0m0 0h0m1-16h0m0 12h0" stroke="#2F8A00" stroke-width="8"/><path d="M2179 785h0m0 18h0m0-21h0m1 53h0m0-15h0m0-10h0m0 37h0m0-1h0m0-44h0m0-17h0m1 14h0m0 36h0" stroke="#85B900" stroke-width="16"/><path d="M2179 785h0m0 18h0m0-21h0m1 53h0m0-15h0m0-10h0m0 37h0m0-1h0m0-44h0m0-17h0m1 14h0m0 36h0" stroke="#2F8A00" stroke-width="8"/><path d="M2181 821h0m0-34h0m0-8h0m1 8h0m0-10h0m0-5h0m0 65h0m0-8h0m0 22h0m0 23h0m0-108h0m1 56h0" stroke="#85B900" stroke-width="16"/><path d="M2181 821h0m0-34h0m0-8h0m1 8h0m0-10h0m0-5h0m0 65h0m0-8h0m0 22h0m0 23h0m0-108h0m1 56h0" stroke="#2F8A00" stroke-width="8"/><path d="M2183 800h0m0-18h0m0 16h0m0-4h0m1-20h0m0 7h0m0 26h0m0-34h0m0-7h0m0 15h0m0-4h0m1 25h0" stroke="#85B900" stroke-width="16"/><path d="M2183 800h0m0-18h0m0 16h0m0-4h0m1-20h0m0 7h0m0 26h0m0-34h0m0-7h0m0 15h0m0-4h0m1 25h0" stroke="#2F8A00" stroke-width="8"/><path d="M2185 850h0m0 14h0m0 7h0m0 1h0m1-23h0m0-16h0m0 25h0m0-11h0m0-113h0m0 68h0m0-22h0m0-15h0" stroke="#85B900" stroke-width="16"/><path d="M2185 850h0m0 14h0m0 7h0m0 1h0m1-23h0m0-16h0m0 25h0m0-11h0m0-113h0m0 68h0m0-22h0m0-15h0" stroke="#2F8A00" stroke-width="8"/><path d="M2187 828h0m0-40h0m0-10h0m0-15h0m0 49h0m1-30h0m0 0h0m0-12h0m0 49h0m0 24h0m0 2h0m0 30h0" stroke="#85B900" stroke-width="16"/><path d="M2187 828h0m0-40h0m0-10h0m0-15h0m0 49h0m1-30h0m0 0h0m0-12h0m0 49h0m0 24h0m0 2h0m0 30h0" stroke="#2F8A00" stroke-width="8"/><path d="M2189 866h0m0 10h0m0-15h0m0-2h0m0-41h0m1-19h0m0 51h0m0-15h0m0 13h0m0-82h0m0 14h0m0 69h0" stroke="#85B900" stroke-width="16"/><path d="M2189 866h0m0 10h0m0-15h0m0-2h0m0-41h0m1-19h0m0 51h0m0-15h0m0 13h0m0-82h0m0 14h0m0 69h0" stroke="#2F8A00" stroke-width="8"/><path d="M2190 858h0m0 2h0m1-44h0m0-8h0m0-19h0m0-22h0m0 37h0m1-41h0m0 11h0m0 79h0m0 4h0m0-133h0" stroke="#85B900" stroke-width="16"/><path d="M2190 858h0m0 2h0m1-44h0m0-8h0m0-19h0m0-22h0m0 37h0m1-41h0m0 11h0m0 79h0m0 4h0m0-133h0" stroke="#2F8A00" stroke-width="8"/><path d="M2192 744h0m0 102h0m0 30h0m0-9h0m1-76h0m0-6h0m0 27h0m0-1h0m1-57h0m3 127h0m1-19h0m0-21h0" stroke="#85B900" stroke-width="16"/><path d="M2192 744h0m0 102h0m0 30h0m0-9h0m1-76h0m0-6h0m0 27h0m0-1h0m1-57h0m3 127h0m1-19h0m0-21h0" stroke="#2F8A00" stroke-width="8"/><path d="M2198 868h0m0 12h0m0 0h0m0-11h0m0-18h0m1 0h0m0 1h0m0-48h0m0 60h0m0-6h0m1-35h0m0 4h0" stroke="#85B900" stroke-width="16"/><path d="M2198 868h0m0 12h0m0 0h0m0-11h0m0-18h0m1 0h0m0 1h0m0-48h0m0 60h0m0-6h0m1-35h0m0 4h0" stroke="#2F8A00" stroke-width="8"/><path d="M2200 825h0m0-22h0m0 4h0m0 59h0m0 5h0m1-57h0m0-39h0m0 5h0m0 1h0m0 32h0m1 30h0m0 21h0" stroke="#85B900" stroke-width="16"/><path d="M2200 825h0m0-22h0m0 4h0m0 59h0m0 5h0m1-57h0m0-39h0m0 5h0m0 1h0m0 32h0m1 30h0m0 21h0" stroke="#2F8A00" stroke-width="8"/><path d="M2202 834h0m0-17h0m0-9h0m0 8h0m0 11h0m1 8h0m0 17h0m0 2h0m0-1h0m0-2h0m1-60h0m0 9h0" stroke="#85B900" stroke-width="16"/><path d="M2202 834h0m0-17h0m0-9h0m0 8h0m0 11h0m1 8h0m0 17h0m0 2h0m0-1h0m0-2h0m1-60h0m0 9h0" stroke="#2F8A00" stroke-width="8"/><path d="M2204 791h0m0 22h0m0-23h0m0 74h0m0-41h0m0 38h0m1 23h0m0-29h0m0 12h0m0-24h0m0-3h0m0-1h0" stroke="#85B900" stroke-width="16"/><path d="M2204 791h0m0 22h0m0-23h0m0 74h0m0-41h0m0 38h0m1 23h0m0-29h0m0 12h0m0-24h0m0-3h0m0-1h0" stroke="#2F8A00" stroke-width="8"/><path d="M2206 872h0m0 1h0m0-62h0m0 2h0m0-1h0m0-7h0m0 15h0m1-19h0m0-2h0m0-6h0m0 1h0m0 2h0" stroke="#85B900" stroke-width="16"/><path d="M2206 872h0m0 1h0m0-62h0m0 2h0m0-1h0m0-7h0m0 15h0m1-19h0m0-2h0m0-6h0m0 1h0m0 2h0" stroke="#2F8A00" stroke-width="8"/><path d="M2208 813h0m0 28h0m0 5h0m0-4h0m0 2h0m0-10h0m0 9h0m1-4h0m0 40h0m0-3h0m0-14h0m0-29h0" stroke="#85B900" stroke-width="16"/><path d="M2208 813h0m0 28h0m0 5h0m0-4h0m0 2h0m0-10h0m0 9h0m1-4h0m0 40h0m0-3h0m0-14h0m0-29h0" stroke="#2F8A00" stroke-width="8"/><path d="M2210 826h0m0 26h0m0 5h0m0-27h0m0 2h0m0-1h0m0 3h0m1-14h0m0-3h0m0 18h0m0 32h0m0 17h0" stroke="#85B900" stroke-width="16"/><path d="M2210 826h0m0 26h0m0 5h0m0-27h0m0 2h0m0-1h0m0 3h0m1-14h0m0-3h0m0 18h0m0 32h0m0 17h0" stroke="#2F8A00" stroke-width="8"/><path d="M2212 863h0m0-27h0m0-11h0m0 9h0m0-14h0m0 5h0m0-6h0m1-11h0m0 8h0m0-6h0m0 6h0m0 1h0" stroke="#85B900" stroke-width="16"/><path d="M2212 863h0m0-27h0m0-11h0m0 9h0m0-14h0m0 5h0m0-6h0m1-11h0m0 8h0m0-6h0m0 6h0m0 1h0" stroke="#2F8A00" stroke-width="8"/><path d="M2214 837h0m0-7h0m0-8h0m0-3h0m0 16h0m0-1h0m0 37h0m1 2h0m0-18h0m0-18h0m0-12h0m0-4h0" stroke="#85B900" stroke-width="16"/><path d="M2214 837h0m0-7h0m0-8h0m0-3h0m0 16h0m0-1h0m0 37h0m1 2h0m0-18h0m0-18h0m0-12h0m0-4h0" stroke="#2F8A00" stroke-width="8"/><path d="M2216 818h0m0 7h0m0 10h0m0-8h0m0-25h0m0 92h0m0-38h0m0-32h0m0-14h0m1 4h0m0-6h0m0 0h0" stroke="#85B900" stroke-width="16"/><path d="M2216 818h0m0 7h0m0 10h0m0-8h0m0-25h0m0 92h0m0-38h0m0-32h0m0-14h0m1 4h0m0-6h0m0 0h0" stroke="#2F8A00" stroke-width="8"/><path d="M2217 848h0m0 31h0m1 8h0m0-29h0m0-1h0m0-13h0m0-21h0m0 20h0m0 3h0m1 29h0m0 1h0m0-7h0" stroke="#85B900" stroke-width="16"/><path d="M2217 848h0m0 31h0m1 8h0m0-29h0m0-1h0m0-13h0m0-21h0m0 20h0m0 3h0m1 29h0m0 1h0m0-7h0" stroke="#2F8A00" stroke-width="8"/><path d="M2219 876h0m0 9h0m1-10h0m0-15h0m0 16h0m0-7h0m0 8h0m0 12h0m0 5h0m1-9h0m0-29h0m0 31h0" stroke="#85B900" stroke-width="16"/><path d="M2219 876h0m0 9h0m1-10h0m0-15h0m0 16h0m0-7h0m0 8h0m0 12h0m0 5h0m1-9h0m0-29h0m0 31h0" stroke="#2F8A00" stroke-width="8"/><path d="M2221 892h0m0-6h0m1-14h0m0 7h0m0-33h0m0 26h0m0-11h0m0-9h0m0-1h0m1-19h0m0-3h0m0 21h0" stroke="#85B900" stroke-width="16"/><path d="M2221 892h0m0-6h0m1-14h0m0 7h0m0-33h0m0 26h0m0-11h0m0-9h0m0-1h0m1-19h0m0-3h0m0 21h0" stroke="#2F8A00" stroke-width="8"/><path d="M2223 835h0m0 22h0m1-21h0m0 19h0m0-39h0m0 41h0m0-71h0m0 52h0m0-10h0m0 23h0m1-1h0m0 10h0" stroke="#85B900" stroke-width="16"/><path d="M2223 835h0m0 22h0m1-21h0m0 19h0m0-39h0m0 41h0m0-71h0m0 52h0m0-10h0m0 23h0m1-1h0m0 10h0" stroke="#2F8A00" stroke-width="8"/><path d="M2225 847h0m0 21h0m0-8h0m1-9h0m0 43h0m0-76h0m0 9h0m0 30h0m0 22h0m0-3h0m0 10h0m1 1h0" stroke="#85B900" stroke-width="16"/><path d="M2225 847h0m0 21h0m0-8h0m1-9h0m0 43h0m0-76h0m0 9h0m0 30h0m0 22h0m0-3h0m0 10h0m1 1h0" stroke="#2F8A00" stroke-width="8"/><path d="M2227 892h0m0-11h0m0-4h0m0-3h0m1 0h0m0 1h0m0 1h0m0 4h0m0-14h0m0-45h0m0 36h0m1 4h0" stroke="#85B900" stroke-width="16"/><path d="M2227 892h0m0-11h0m0-4h0m0-3h0m1 0h0m0 1h0m0 1h0m0 4h0m0-14h0m0-45h0m0 36h0m1 4h0" stroke="#2F8A00" stroke-width="8"/><path d="M2229 858h0m0 9h0m0-28h0m0 9h0m1 12h0m0-11h0m0-61h0m0-4h0m0 35h0m0-8h0m0 14h0m1-4h0" stroke="#85B900" stroke-width="16"/><path d="M2229 858h0m0 9h0m0-28h0m0 9h0m1 12h0m0-11h0m0-61h0m0-4h0m0 35h0m0-8h0m0 14h0m1-4h0" stroke="#2F8A00" stroke-width="8"/><path d="M2231 851h0m0-5h0m0 32h0m0 1h0m1-3h0m0-11h0m0-17h0m0 26h0m0-19h0m0-18h0m0-15h0m1 22h0" stroke="#85B900" stroke-width="16"/><path d="M2231 851h0m0-5h0m0 32h0m0 1h0m1-3h0m0-11h0m0-17h0m0 26h0m0-19h0m0-18h0m0-15h0m1 22h0" stroke="#2F8A00" stroke-width="8"/><path d="M2233 877h0m0-7h0m0-12h0m0-1h0m1-26h0m0 33h0m0 4h0m0 11h0m0 1h0m0-4h0m0-27h0m1 13h0" stroke="#85B900" stroke-width="16"/><path d="M2233 877h0m0-7h0m0-12h0m0-1h0m1-26h0m0 33h0m0 4h0m0 11h0m0 1h0m0-4h0m0-27h0m1 13h0" stroke="#2F8A00" stroke-width="8"/><path d="M2235 871h0m0-11h0m0-17h0m0-8h0m1-15h0m0-6h0m0 19h0m0 29h0m0 3h0m0-30h0m0 40h0m1 4h0" stroke="#85B900" stroke-width="16"/><path d="M2235 871h0m0-11h0m0-17h0m0-8h0m1-15h0m0-6h0m0 19h0m0 29h0m0 3h0m0-30h0m0 40h0m1 4h0" stroke="#2F8A00" stroke-width="8"/><path d="M2237 851h0m0-47h0m0 7h0m0 73h0m0-79h0m1 38h0m0-33h0m0 0h0m0-25h0m0 26h0m0 52h0m0-14h0" stroke="#85B900" stroke-width="16"/><path d="M2237 851h0m0-47h0m0 7h0m0 73h0m0-79h0m1 38h0m0-33h0m0 0h0m0-25h0m0 26h0m0 52h0m0-14h0" stroke="#2F8A00" stroke-width="8"/><path d="M2239 857h0m0-29h0m0 20h0m0 2h0m0-53h0m1 11h0m0 3h0m0-36h0m0 20h0m0-4h0m0 42h0m0 11h0" stroke="#85B900" stroke-width="16"/><path d="M2239 857h0m0-29h0m0 20h0m0 2h0m0-53h0m1 11h0m0 3h0m0-36h0m0 20h0m0-4h0m0 42h0m0 11h0" stroke="#2F8A00" stroke-width="8"/><path d="M2241 809h0m0 57h0m0 6h0m0-29h0m0 2h0m1-50h0m0-8h0m0 9h0m0 62h0m0-96h0m0-38h0m0 108h0" stroke="#85B900" stroke-width="16"/><path d="M2241 809h0m0 57h0m0 6h0m0-29h0m0 2h0m1-50h0m0-8h0m0 9h0m0 62h0m0-96h0m0-38h0m0 108h0" stroke="#2F8A00" stroke-width="8"/><path d="M2242 772h0m0-4h0m1 41h0m0 49h0m0-36h0m0-5h0m0 33h0m1 16h0m0-2h0m0-25h0m0 41h0m0-57h0" stroke="#85B900" stroke-width="16"/><path d="M2242 772h0m0-4h0m1 41h0m0 49h0m0-36h0m0-5h0m0 33h0m1 16h0m0-2h0m0-25h0m0 41h0m0-57h0" stroke="#2F8A00" stroke-width="8"/><path d="M2244 840h0m0 26h0m1-38h0m0 3h0m0 18h0m0 8h0m0 20h0m1-25h0m0 18h0m0-22h0m0-18h0m0 0h0" stroke="#85B900" stroke-width="16"/><path d="M2244 840h0m0 26h0m1-38h0m0 3h0m0 18h0m0 8h0m0 20h0m1-25h0m0 18h0m0-22h0m0-18h0m0 0h0" stroke="#2F8A00" stroke-width="8"/><path d="M2246 798h0m0 28h0m1 14h0m0-4h0m0-8h0m0-7h0m0 25h0m1-10h0m0-18h0m0-27h0m0 20h0m0 41h0" stroke="#85B900" stroke-width="16"/><path d="M2246 798h0m0 28h0m1 14h0m0-4h0m0-8h0m0-7h0m0 25h0m1-10h0m0-18h0m0-27h0m0 20h0m0 41h0" stroke="#2F8A00" stroke-width="8"/><path d="M2248 826h0m0 11h0m1-11h0m0 9h0m0-24h0m0-44h0m0 3h0m1 17h0m0 2h0m0 11h0m0 8h0m0-22h0" stroke="#85B900" stroke-width="16"/><path d="M2248 826h0m0 11h0m1-11h0m0 9h0m0-24h0m0-44h0m0 3h0m1 17h0m0 2h0m0 11h0m0 8h0m0-22h0" stroke="#2F8A00" stroke-width="8"/><path d="M2250 818h0m0 24h0m1 25h0m0 8h0m0 11h0m0-9h0m0 8h0m1-4h0m0-5h0m0 3h0m0-23h0m0-68h0" stroke="#85B900" stroke-width="16"/><path d="M2250 818h0m0 24h0m1 25h0m0 8h0m0 11h0m0-9h0m0 8h0m1-4h0m0-5h0m0 3h0m0-23h0m0-68h0" stroke="#2F8A00" stroke-width="8"/><path d="M2252 810h0m0-3h0m1 2h0m0-16h0m0 28h0m0 34h0m0-4h0m1-10h0m0 47h0m0-63h0m0-29h0m0 37h0" stroke="#85B900" stroke-width="16"/><path d="M2252 810h0m0-3h0m1 2h0m0-16h0m0 28h0m0 34h0m0-4h0m1-10h0m0 47h0m0-63h0m0-29h0m0 37h0" stroke="#2F8A00" stroke-width="8"/><path d="M2254 809h0m0 9h0m0 55h0m1 5h0m0 1h0m0-13h0m0-4h0m0 10h0m1 11h0m0 1h0m0 3h0m0 0h0" stroke="#85B900" stroke-width="16"/><path d="M2254 809h0m0 9h0m0 55h0m1 5h0m0 1h0m0-13h0m0-4h0m0 10h0m1 11h0m0 1h0m0 3h0m0 0h0" stroke="#2F8A00" stroke-width="8"/><path d="M2256 887h0m0 0h0m0-4h0m1-42h0m0-13h0m0 21h0m0-17h0m0 35h0m1-14h0m0 0h0m0-31h0m0 46h0" stroke="#85B900" stroke-width="16"/><path d="M2256 887h0m0 0h0m0-4h0m1-42h0m0-13h0m0 21h0m0-17h0m0 35h0m1-14h0m0 0h0m0-31h0m0 46h0" stroke="#2F8A00" stroke-width="8"/><path d="M2258 762h0m0 94h0m0-31h0m0 7h0m1 27h0m0-37h0m0 53h0m0-15h0m0-10h0m1-50h0m0 39h0m0 34h0" stroke="#85B900" stroke-width="16"/><path d="M2258 762h0m0 94h0m0-31h0m0 7h0m1 27h0m0-37h0m0 53h0m0-15h0m0-10h0m1-50h0m0 39h0m0 34h0" stroke="#2F8A00" stroke-width="8"/><path d="M2260 860h0m0-22h0m0 11h0m0 0h0m1 3h0m0 24h0m0-7h0m0-53h0m0-21h0m1 56h0m0 5h0m0 7h0" stroke="#85B900" stroke-width="16"/><path d="M2260 860h0m0-22h0m0 11h0m0 0h0m1 3h0m0 24h0m0-7h0m0-53h0m0-21h0m1 56h0m0 5h0m0 7h0" stroke="#2F8A00" stroke-width="8"/><path d="M2262 834h0m0 9h0m0-7h0m0-37h0m1 10h0m0-5h0m0-1h0m0 3h0m0-5h0m1 4h0m0 38h0m0 30h0" stroke="#85B900" stroke-width="16"/><path d="M2262 834h0m0 9h0m0-7h0m0-37h0m1 10h0m0-5h0m0-1h0m0 3h0m0-5h0m1 4h0m0 38h0m0 30h0" stroke="#2F8A00" stroke-width="8"/><path d="M2264 873h0m0-48h0m0 22h0m0 7h0m1-5h0m0-40h0m0-15h0m0-4h0m0 7h0m1 19h0m0-4h0m0 12h0" stroke="#85B900" stroke-width="16"/><path d="M2264 873h0m0-48h0m0 22h0m0 7h0m1-5h0m0-40h0m0-15h0m0-4h0m0 7h0m1 19h0m0-4h0m0 12h0" stroke="#2F8A00" stroke-width="8"/><path d="M2266 811h0m0 35h0m0-17h0m0 37h0m4 18h0m2-92h0m1 61h0m0 18h0m0-36h0m0 21h0m0 17h0m1-20h0" stroke="#85B900" stroke-width="16"/><path d="M2266 811h0m0 35h0m0-17h0m0 37h0m4 18h0m2-92h0m1 61h0m0 18h0m0-36h0m0 21h0m0 17h0m1-20h0" stroke="#2F8A00" stroke-width="8"/><path d="M2274 870h0m0 1h0m0 3h0m0 2h0m0-1h0m0-34h0m1-9h0m0 8h0m0 34h0m0-25h0m0-8h0m1 2h0" stroke="#85B900" stroke-width="16"/><path d="M2274 870h0m0 1h0m0 3h0m0 2h0m0-1h0m0-34h0m1-9h0m0 8h0m0 34h0m0-25h0m0-8h0m1 2h0" stroke="#2F8A00" stroke-width="8"/><path d="M2276 835h0m0-13h0m0-4h0m0 20h0m0 0h0m0 15h0m1-20h0m0-14h0m0-11h0m0 21h0m0-7h0m1 7h0" stroke="#85B900" stroke-width="16"/><path d="M2276 835h0m0-13h0m0-4h0m0 20h0m0 0h0m0 15h0m1-20h0m0-14h0m0-11h0m0 21h0m0-7h0m1 7h0" stroke="#2F8A00" stroke-width="8"/><path d="M2278 831h0m0 32h0m0-24h0m0-24h0m0 8h0m0-11h0m1 12h0m0-16h0m0 9h0m0 20h0m0-27h0m1-9h0" stroke="#85B900" stroke-width="16"/><path d="M2278 831h0m0 32h0m0-24h0m0-24h0m0 8h0m0-11h0m1 12h0m0-16h0m0 9h0m0 20h0m0-27h0m1-9h0" stroke="#2F8A00" stroke-width="8"/><path d="M2280 850h0m0-19h0m0 18h0m0-33h0m0 8h0m0 27h0m1 7h0m0-24h0m0-27h0m0 13h0m0 19h0m1 0h0" stroke="#85B900" stroke-width="16"/><path d="M2280 850h0m0-19h0m0 18h0m0-33h0m0 8h0m0 27h0m1 7h0m0-24h0m0-27h0m0 13h0m0 19h0m1 0h0" stroke="#2F8A00" stroke-width="8"/><path d="M2282 884h0m0-32h0m0 23h0m0-8h0m0-91h0m0 70h0m0 26h0m0 11h0m1-1h0m0 1h0m0-42h0m0-32h0" stroke="#85B900" stroke-width="16"/><path d="M2282 884h0m0-32h0m0 23h0m0-8h0m0-91h0m0 70h0m0 26h0m0 11h0m1-1h0m0 1h0m0-42h0m0-32h0" stroke="#2F8A00" stroke-width="8"/><path d="M2283 816h0m1-6h0m0 13h0m0-31h0m0 72h0m0-74h0m0 75h0m0-19h0m0 20h0m1-50h0m0-1h0m0-5h0" stroke="#85B900" stroke-width="16"/><path d="M2283 816h0m1-6h0m0 13h0m0-31h0m0 72h0m0-74h0m0 75h0m0-19h0m0 20h0m1-50h0m0-1h0m0-5h0" stroke="#2F8A00" stroke-width="8"/><path d="M2285 812h0m0 29h0m1-36h0m0 39h0m0 12h0m0 0h0m0 11h0m0-21h0m0-58h0m1 26h0m0 27h0m0 27h0" stroke="#85B900" stroke-width="16"/><path d="M2285 812h0m0 29h0m1-36h0m0 39h0m0 12h0m0 0h0m0 11h0m0-21h0m0-58h0m1 26h0m0 27h0m0 27h0" stroke="#2F8A00" stroke-width="8"/><path d="M2287 847h0m0 7h0m1 16h0m0-13h0m0-1h0m0-22h0m0-56h0m0 36h0m0 35h0m0 18h0m1-5h0m0-17h0" stroke="#85B900" stroke-width="16"/><path d="M2287 847h0m0 7h0m1 16h0m0-13h0m0-1h0m0-22h0m0-56h0m0 36h0m0 35h0m0 18h0m1-5h0m0-17h0" stroke="#2F8A00" stroke-width="8"/><path d="M2289 835h0m0-27h0m0 10h0m1 2h0m0 46h0m0-9h0m0-10h0m0-113h0m0 10h0m0 10h0m0 79h0m0 1h0" stroke="#85B900" stroke-width="16"/><path d="M2289 835h0m0-27h0m0 10h0m1 2h0m0 46h0m0-9h0m0-10h0m0-113h0m0 10h0m0 10h0m0 79h0m0 1h0" stroke="#2F8A00" stroke-width="8"/><path d="M2290 838h0m1-34h0m0 25h0m0 19h0m0 25h0m0 3h0m1-2h0m0 0h0m0 3h0m0-5h0m0 12h0m0-118h0" stroke="#85B900" stroke-width="16"/><path d="M2290 838h0m1-34h0m0 25h0m0 19h0m0 25h0m0 3h0m1-2h0m0 0h0m0 3h0m0-5h0m0 12h0m0-118h0" stroke="#2F8A00" stroke-width="8"/><path d="M2292 868h0m0 1h0m0-13h0m1-51h0m0 22h0m0 33h0m0-10h0m0 15h0m1 4h0m0-22h0m0-37h0m0-14h0" stroke="#85B900" stroke-width="16"/><path d="M2292 868h0m0 1h0m0-13h0m1-51h0m0 22h0m0 33h0m0-10h0m0 15h0m1 4h0m0-22h0m0-37h0m0-14h0" stroke="#2F8A00" stroke-width="8"/><path d="M2294 834h0m0 25h0m0 0h0m1-54h0m0 1h0m0 12h0m0-6h0m0-5h0m1 26h0m0-4h0m0 9h0m0 18h0" stroke="#85B900" stroke-width="16"/><path d="M2294 834h0m0 25h0m0 0h0m1-54h0m0 1h0m0 12h0m0-6h0m0-5h0m1 26h0m0-4h0m0 9h0m0 18h0" stroke="#2F8A00" stroke-width="8"/><path d="M2296 796h0m0 52h0m0 2h0m0 2h0m1 14h0m0-5h0m0 0h0m0 0h0m0 4h0m1-12h0m0-19h0m0-8h0" stroke="#85B900" stroke-width="16"/><path d="M2296 796h0m0 52h0m0 2h0m0 2h0m1 14h0m0-5h0m0 0h0m0 0h0m0 4h0m1-12h0m0-19h0m0-8h0" stroke="#2F8A00" stroke-width="8"/><path d="M2298 864h0" stroke="#85B900" stroke-width="16"/><path d="M2298 864h0" stroke="#2F8A00" stroke-width="8"/></g><path d="M90 312H1160" stroke="#FFA000" stroke-width="2" stroke-dasharray="6,2"/><path d="M90 365H1160" stroke="#008000" stroke-width="2" stroke-dasharray="6,2"/><text transform="translate(140.5,460.0) rotate(70)" font-size="15" fill="#333" letter-spacing="1.15">1982-01-01</text><text transform="translate(197.5,460.0) rotate(70)" font-size="15" fill="#333" letter-spacing="1.15">1984-01-01</text><text transform="translate(255.5,460.0) rotate(70)" font-size="15" fill="#333" letter-spacing="1.15">1986-01-01</text><text transform="translate(312.5,460.0) rotate(70)" font-size="15" fill="#333" letter-spacing="1.15">1988-01-01</text><text transform="translate(370.5,460.0) rotate(70)" font-size="15" fill="#333" letter-spacing="1.15">1990-01-01</text><text transform="translate(427.5,460.0) rotate(70)" font-size="15" fill="#333" letter-spacing="1.15">1992-01-01</text><text transform="translate(485.5,460.0) rotate(70)" font-size="15" fill="#333" letter-spacing="1.15">1994-01-01</text><text transform="translate(542.5,460.0) rotate(70)" font-size="15" fill="#333" letter-spacing="1.15">1996-01-01</text><text transform="translate(600.5,460.0) rotate(70)" font-size="15" fill="#333" letter-spacing="1.15">1998-01-01</text><text transform="translate(657.5,460.0) rotate(70)" font-size="15" fill="#333" letter-spacing="1.15">2000-01-01</text><text transform="translate(715.5,460.0) rotate(70)" font-size="15" fill="#333" letter-spacing="1.15">2002-01-01</text><text transform="translate(772.5,460.0) rotate(70)" font-size="15" fill="#333" letter-spacing="1.15">2004-01-01</text><text transform="translate(829.5,460.0) rotate(70)" font-size="15" fill="#333" letter-spacing="1.15">2006-01-01</text><text transform="translate(887.5,460.0) rotate(70)" font-size="15" fill="#333" letter-spacing="1.15">2008-01-01</text><text transform="translate(944.5,460.0) rotate(70)" font-size="15" fill="#333" letter-spacing="1.15">2010-01-01</text><text transform="translate(1002.5,460.0) rotate(70)" font-size="15" fill="#333" letter-spacing="1.15">2012-01-01</text><text transform="translate(1059.5,460.0) rotate(70)" font-size="15" fill="#333" letter-spacing="1.15">2014-01-01</text><text transform="translate(1117.5,460.0) rotate(70)" font-size="15" fill="#333" letter-spacing="1.15">2016-01-01</text><circle cx="440.5" cy="571.5" r="3" fill="#2F8A00" stroke="#85B900" stroke-width="2"/><text x="455" y="576" font-size="13" font-weight="bold" fill="#333" letter-spacing="0.2">HWY 2 &amp; NORth SHORE BLVD. _Burlington_</text><text x="1085.5" y="595" font-size="10" fill="#909090" letter-spacing="0.33">Highcharts.com</text></svg></body></html>
